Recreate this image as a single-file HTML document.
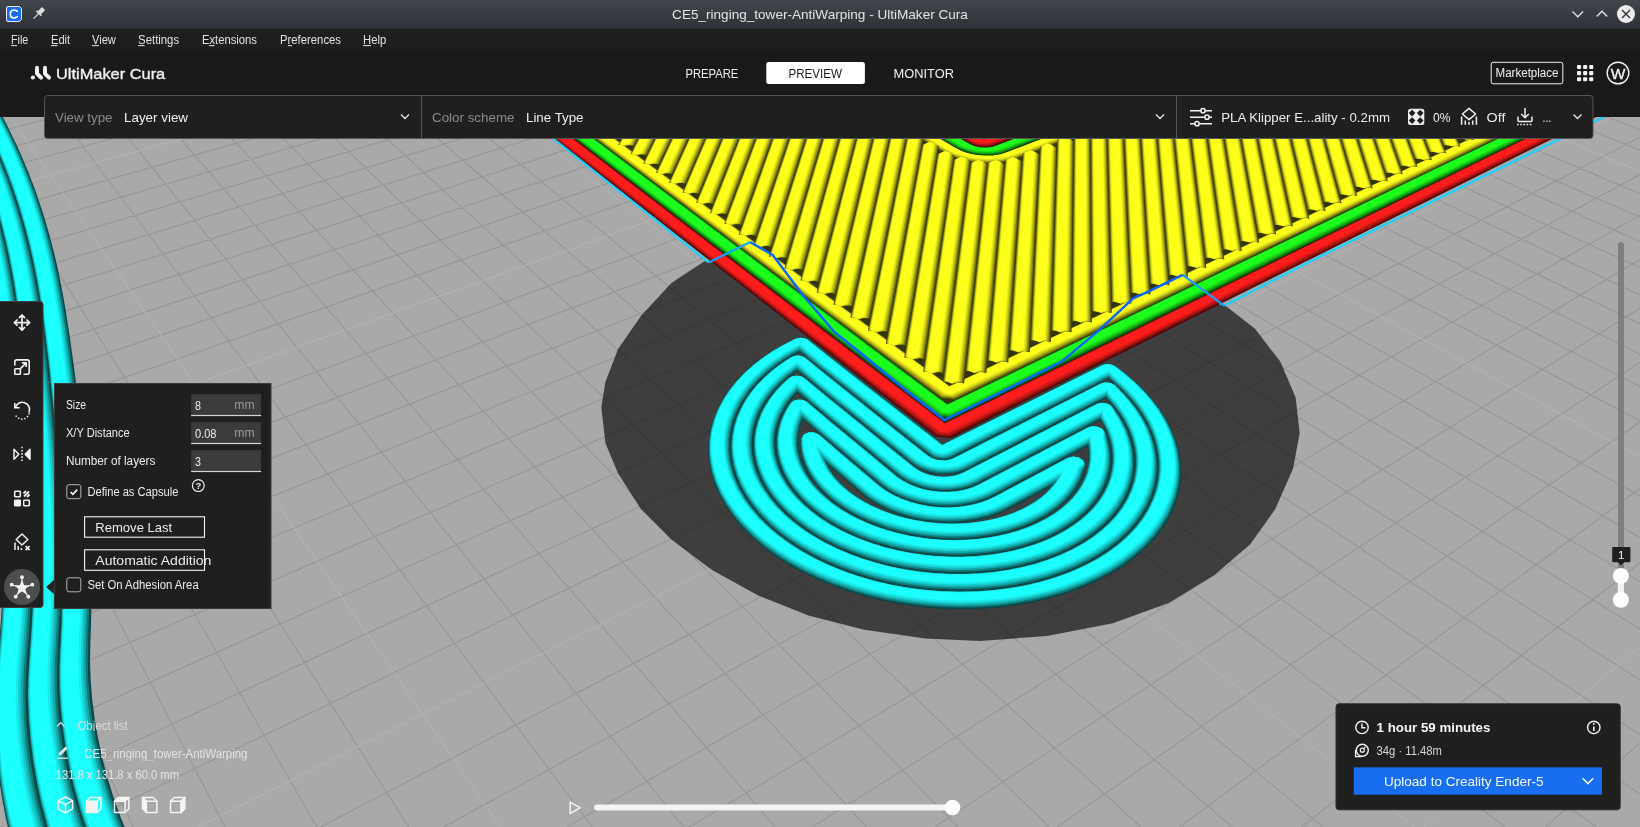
<!DOCTYPE html>
<html lang="en"><head><meta charset="utf-8"><title>CE5_ringing_tower-AntiWarping - UltiMaker Cura</title>
<style>html,body{margin:0;padding:0;background:#a9a9a9;overflow:hidden}svg{display:block}text{white-space:pre}</style></head>
<body><svg width="1640" height="827" viewBox="0 0 1640 827">
<g shape-rendering="geometricPrecision">
<rect x="0" y="0" width="1640" height="827" fill="#a9a9a9"/>
<path d="M-5.0,711.8L43.0,832.0M-5.0,525.3L135.3,832.0M-5.0,381.0L227.5,832.0M-5.0,266.1L319.7,832.0M-5.0,172.4L411.8,832.0M40.7,90.0L595.8,832.0M89.6,90.0L687.7,832.0M138.4,90.0L779.6,832.0M187.2,90.0L871.3,832.0M235.9,90.0L963.0,832.0M284.6,90.0L1054.7,832.0M333.3,90.0L1146.3,832.0M381.9,90.0L1237.8,832.0M430.5,90.0L1329.3,832.0M527.6,90.0L1512.0,832.0M576.1,90.0L1603.3,832.0M624.6,90.0L1645.0,797.7M673.0,90.0L1645.0,738.2M721.4,90.0L1645.0,683.2M769.8,90.0L1645.0,632.1M818.1,90.0L1645.0,584.6M866.4,90.0L1645.0,540.3M914.7,90.0L1645.0,498.8M1011.1,90.0L1645.0,423.4M1059.3,90.0L1645.0,389.1M1107.4,90.0L1645.0,356.7M1155.5,90.0L1645.0,326.2M1203.5,90.0L1645.0,297.3M1251.6,90.0L1645.0,269.9M1299.6,90.0L1645.0,243.9M1347.5,90.0L1645.0,219.3M1395.4,90.0L1645.0,195.8M1491.2,90.0L1645.0,152.2M1539.0,90.0L1645.0,131.9M1586.8,90.0L1645.0,112.5M1634.6,90.0L1645.0,94.0M-5.0,97.7L25.8,90.0M-5.0,114.8L92.1,90.0M-5.0,132.6L158.4,90.0M-5.0,151.2L224.6,90.0M-5.0,170.5L290.8,90.0M-5.0,211.9L422.9,90.0M-5.0,234.0L488.8,90.0M-5.0,257.1L554.7,90.0M-5.0,281.4L620.5,90.0M-5.0,306.8L686.3,90.0M-5.0,333.6L752.0,90.0M-5.0,361.7L817.7,90.0M-5.0,391.3L883.2,90.0M-5.0,422.6L948.8,90.0M-5.0,490.6L1079.6,90.0M-5.0,527.6L1144.9,90.0M-5.0,566.9L1210.2,90.0M-5.0,608.7L1275.4,90.0M-5.0,653.3L1340.6,90.0M-5.0,700.9L1405.6,90.0M-5.0,751.8L1470.7,90.0M-5.0,806.5L1535.6,90.0M63.9,832.0L1600.5,90.0M311.1,832.0L1645.0,134.5M434.5,832.0L1645.0,171.7M557.8,832.0L1645.0,212.3M681.0,832.0L1645.0,256.6M804.1,832.0L1645.0,305.2M927.0,832.0L1645.0,358.9M1049.8,832.0L1645.0,418.4M1172.5,832.0L1645.0,484.7M1295.1,832.0L1645.0,559.0M1540.0,832.0L1645.0,738.6" stroke="#979797" stroke-width="1.25" fill="none"/>
<path d="M-5.0,94.6L503.8,832.0M479.1,90.0L1420.7,832.0M962.9,90.0L1645.0,459.9M1443.3,90.0L1645.0,173.5M-5.0,190.8L356.8,90.0M-5.0,455.6L1014.2,90.0M187.6,832.0L1645.0,100.2M1417.6,832.0L1645.0,643.0" stroke="#b5b5b5" stroke-width="0.9" fill="none"/>
<polygon points="704.4,261.3 671.4,283.1 640.9,316.1 618.1,349.1 605.4,382.1 601.3,407.5 605.4,443.0 618.1,473.5 640.9,509.0 671.4,539.5 712.0,570.0 757.7,595.3 808.4,615.6 864.3,629.8 925.2,638.5 980.0,641.0 1046.9,636.0 1112.9,623.3 1168.7,603.0 1214.4,575.0 1250.0,544.6 1275.3,509.0 1293.1,468.4 1299.7,432.9 1295.6,397.4 1280.4,361.8 1255.0,328.8 1224.6,305.0 1100.0,300.0 945.0,330.0 800.0,280.0" fill="rgba(0,0,0,0.63)"/>
<filter id="soft" x="0" y="0" width="100%" height="100%" filterUnits="userSpaceOnUse"><feGaussianBlur stdDeviation="0.7"/></filter>
<g filter="url(#soft)">
<polygon points="-52.7,14.7 -50.0,19.6 -47.3,24.5 -44.6,29.4 -41.8,34.5 -39.0,39.5 -36.1,44.7 -33.2,49.9 -30.3,55.2 -27.3,60.6 -24.3,66.0 -21.3,71.5 -18.2,77.1 -15.2,82.8 -12.1,88.6 -8.9,94.4 -5.8,100.4 -2.6,106.4 0.5,112.5 3.7,118.7 6.9,125.0 10.0,131.5 13.2,138.0 16.4,144.6 19.5,151.4 22.5,158.3 25.5,165.4 28.5,172.5 31.3,179.9 34.1,187.3 36.9,195.0 39.5,202.8 42.2,210.7 44.7,218.8 47.1,227.1 49.5,235.6 51.8,244.2 54.1,253.0 56.2,262.1 58.3,271.3 60.2,280.8 62.1,290.4 63.9,300.3 65.7,310.4 67.3,320.7 68.9,331.3 70.5,342.1 72.0,353.1 73.6,364.4 75.1,375.9 76.6,387.7 78.1,399.7 79.6,412.1 81.1,424.7 82.6,437.6 83.9,450.8 85.3,464.3 86.5,478.2 87.7,492.5 88.7,507.2 89.6,522.3 90.3,537.8 90.9,553.8 91.3,570.2 91.4,587.2 91.4,604.7 91.0,622.9 90.4,641.5 90.0,660.6 90.6,679.8 92.1,699.1 94.6,718.5 98.0,738.1 102.2,757.8 107.4,777.7 113.6,797.6 120.8,817.7 129.1,837.9 138.4,858.2 148.8,878.6 160.3,899.1 173.1,919.6 187.0,940.1 202.2,960.7 218.8,981.2 236.6,1001.7 255.9,1022.1 276.6,1042.5 298.9,1062.6 322.7,1082.7 291.5,1114.1 267.3,1093.1 244.3,1071.6 223.0,1049.9 203.2,1028.2 184.9,1006.4 168.1,984.6 152.6,962.8 138.4,941.1 125.6,919.4 114.0,897.8 103.6,876.2 94.3,854.8 86.2,833.6 79.1,812.4 73.2,791.4 68.2,770.6 64.3,749.9 61.2,729.4 59.1,709.1 57.9,688.9 57.8,668.8 58.7,649.1 59.7,630.2 60.5,612.0 60.9,594.5 61.2,577.5 61.2,561.0 61.0,544.9 60.6,529.3 60.0,514.2 59.3,499.5 58.5,485.1 57.6,471.1 56.6,457.5 55.5,444.2 54.3,431.2 53.1,418.5 51.9,406.0 50.6,393.9 49.4,382.0 48.1,370.4 46.9,359.0 45.6,347.9 44.3,337.0 42.9,326.3 41.5,316.0 40.0,305.8 38.4,295.9 36.7,286.2 35.0,276.7 33.1,267.4 31.2,258.3 29.2,249.5 27.1,240.8 24.9,232.3 22.6,224.0 20.2,215.8 17.8,207.9 15.3,200.0 12.8,192.4 10.1,184.9 7.4,177.5 4.7,170.3 1.8,163.2 -1.1,156.3 -4.0,149.5 -7.0,142.8 -10.0,136.2 -13.1,129.8 -16.1,123.4 -19.2,117.1 -22.2,110.9 -25.2,104.9 -28.2,98.9 -31.2,93.0 -34.2,87.2 -37.2,81.4 -40.1,75.8 -43.0,70.2 -45.9,64.7 -48.8,59.3 -51.6,54.0 -54.4,48.7 -57.2,43.5 -59.9,38.3 -62.6,33.3 -65.2,28.2 -67.8,23.3 -70.4,18.4" fill="#084747"/>
<polygon points="-53.8,14.5 -51.2,19.4 -48.5,24.3 -45.8,29.3 -43.0,34.3 -40.2,39.4 -37.3,44.5 -34.4,49.8 -31.5,55.0 -28.5,60.4 -25.5,65.9 -22.5,71.4 -19.4,77.0 -16.4,82.6 -13.3,88.4 -10.2,94.3 -7.0,100.2 -3.9,106.2 -0.7,112.3 2.4,118.6 5.6,124.9 8.8,131.3 11.9,137.8 15.0,144.5 18.1,151.3 21.2,158.2 24.2,165.2 27.1,172.4 29.9,179.7 32.7,187.2 35.5,194.8 38.1,202.6 40.7,210.5 43.2,218.6 45.7,226.9 48.0,235.4 50.3,244.0 52.5,252.9 54.6,261.9 56.7,271.1 58.6,280.6 60.5,290.2 62.3,300.1 64.0,310.2 65.6,320.6 67.2,331.1 68.8,341.9 70.3,353.0 71.8,364.2 73.3,375.8 74.8,387.6 76.3,399.6 77.7,411.9 79.2,424.5 80.6,437.4 82.0,450.6 83.3,464.2 84.5,478.1 85.7,492.4 86.7,507.1 87.5,522.1 88.3,537.7 88.8,553.7 89.1,570.1 89.3,587.1 89.2,604.6 88.8,622.7 88.2,641.5 87.8,660.6 88.3,679.8 89.8,699.2 92.3,718.6 95.6,738.2 99.9,758.0 105.1,777.9 111.3,798.0 118.5,818.1 126.8,838.4 136.1,858.7 146.6,879.2 158.2,899.7 171.0,920.3 185.0,940.8 200.3,961.4 216.9,982.0 234.8,1002.6 254.2,1023.0 275.0,1043.4 297.3,1063.6 321.2,1083.6 292.8,1112.2 268.6,1091.3 245.6,1069.9 224.3,1048.4 204.4,1026.7 186.1,1005.0 169.2,983.3 153.7,961.6 139.5,940.0 126.6,918.3 115.0,896.8 104.6,875.4 95.3,854.0 87.1,832.8 80.0,811.7 74.0,790.7 69.1,769.9 65.1,749.3 62.0,728.9 59.9,708.6 58.7,688.4 58.6,668.3 59.4,648.6 60.4,629.7 61.2,611.6 61.7,594.0 61.9,577.0 61.9,560.5 61.7,544.5 61.3,528.9 60.7,513.8 60.0,499.0 59.2,484.7 58.2,470.7 57.2,457.0 56.1,443.7 54.9,430.7 53.7,418.0 52.5,405.6 51.3,393.5 50.0,381.6 48.7,370.0 47.5,358.6 46.2,347.5 44.9,336.6 43.5,326.0 42.1,315.6 40.5,305.4 39.0,295.5 37.3,285.8 35.6,276.3 33.7,267.0 31.8,257.9 29.8,249.1 27.6,240.4 25.4,231.9 23.2,223.6 20.8,215.4 18.4,207.4 15.9,199.6 13.4,192.0 10.7,184.5 8.0,177.1 5.3,169.9 2.4,162.8 -0.5,155.9 -3.4,149.1 -6.4,142.4 -9.5,135.8 -12.5,129.3 -15.5,123.0 -18.6,116.7 -21.6,110.5 -24.7,104.5 -27.7,98.5 -30.7,92.6 -33.7,86.8 -36.6,81.0 -39.6,75.4 -42.5,69.8 -45.4,64.3 -48.2,58.9 -51.1,53.6 -53.9,48.3 -56.6,43.1 -59.4,38.0 -62.0,32.9 -64.7,27.9 -67.3,22.9 -69.9,18.0" fill="#0e7a7a"/>
<polygon points="-55.0,14.4 -52.3,19.2 -49.6,24.1 -46.9,29.1 -44.1,34.1 -41.3,39.2 -38.5,44.4 -35.6,49.6 -32.7,54.9 -29.7,60.2 -26.7,65.7 -23.7,71.2 -20.7,76.8 -17.6,82.5 -14.5,88.2 -11.4,94.1 -8.3,100.0 -5.2,106.1 -2.0,112.2 1.1,118.4 4.3,124.7 7.5,131.1 10.6,137.7 13.7,144.3 16.8,151.1 19.8,158.0 22.8,165.0 25.7,172.2 28.6,179.5 31.3,187.0 34.0,194.6 36.7,202.4 39.2,210.4 41.7,218.5 44.2,226.8 46.5,235.2 48.8,243.9 51.0,252.7 53.1,261.7 55.1,271.0 57.0,280.4 58.8,290.1 60.6,300.0 62.3,310.1 63.9,320.4 65.5,331.0 67.0,341.8 68.5,352.8 70.0,364.1 71.5,375.6 72.9,387.4 74.4,399.5 75.9,411.8 77.3,424.4 78.7,437.3 80.1,450.5 81.4,464.1 82.6,478.0 83.7,492.3 84.6,506.9 85.5,522.0 86.2,537.6 86.7,553.5 87.0,570.0 87.1,587.0 87.0,604.5 86.6,622.6 85.9,641.4 85.5,660.5 86.0,679.8 87.5,699.2 89.9,718.7 93.2,738.4 97.5,758.2 102.7,778.2 109.0,798.3 116.2,818.5 124.5,838.8 133.9,859.3 144.4,879.7 156.1,900.3 168.9,920.9 183.0,941.6 198.3,962.2 215.0,982.8 233.0,1003.4 252.5,1023.9 273.4,1044.3 295.8,1064.5 319.7,1084.6 294.1,1110.3 269.9,1089.5 246.9,1068.2 225.5,1046.8 205.7,1025.3 187.3,1003.7 170.4,982.1 154.8,960.4 140.6,938.9 127.7,917.3 116.0,895.8 105.6,874.5 96.2,853.2 88.0,832.0 80.9,811.0 74.9,790.1 69.9,769.3 65.9,748.8 62.8,728.3 60.7,708.1 59.5,687.9 59.4,667.8 60.2,648.2 61.2,629.3 61.9,611.1 62.4,593.6 62.6,576.6 62.6,560.1 62.4,544.1 62.0,528.5 61.4,513.3 60.7,498.6 59.8,484.2 58.9,470.3 57.9,456.6 56.8,443.3 55.6,430.3 54.4,417.6 53.1,405.2 51.9,393.1 50.6,381.2 49.4,369.6 48.1,358.2 46.8,347.1 45.5,336.2 44.1,325.6 42.6,315.2 41.1,305.0 39.6,295.1 37.9,285.4 36.1,275.9 34.3,266.6 32.4,257.5 30.3,248.7 28.2,240.0 26.0,231.5 23.8,223.2 21.4,215.0 19.0,207.0 16.5,199.2 13.9,191.6 11.3,184.1 8.6,176.7 5.8,169.5 3.0,162.4 0.1,155.5 -2.9,148.7 -5.9,142.0 -8.9,135.4 -11.9,128.9 -15.0,122.6 -18.0,116.3 -21.1,110.1 -24.1,104.1 -27.1,98.1 -30.1,92.2 -33.1,86.4 -36.1,80.6 -39.0,75.0 -41.9,69.4 -44.8,64.0 -47.7,58.5 -50.5,53.2 -53.3,47.9 -56.1,42.7 -58.8,37.6 -61.5,32.5 -64.2,27.5 -66.8,22.6 -69.4,17.7" fill="#13a8a8"/>
<polygon points="-56.1,14.2 -53.5,19.0 -50.8,23.9 -48.1,28.9 -45.3,33.9 -42.5,39.0 -39.7,44.2 -36.8,49.4 -33.9,54.7 -30.9,60.1 -27.9,65.5 -24.9,71.0 -21.9,76.6 -18.8,82.3 -15.8,88.1 -12.7,93.9 -9.6,99.9 -6.4,105.9 -3.3,112.0 -0.2,118.2 3.0,124.6 6.1,131.0 9.3,137.5 12.4,144.2 15.4,150.9 18.5,157.9 21.4,164.9 24.3,172.1 27.1,179.4 29.9,186.9 32.6,194.5 35.2,202.3 37.7,210.2 40.2,218.3 42.6,226.6 45.0,235.1 47.2,243.7 49.4,252.5 51.5,261.6 53.4,270.8 55.3,280.2 57.2,289.9 58.9,299.8 60.6,309.9 62.2,320.2 63.7,330.8 65.2,341.6 66.7,352.6 68.2,363.9 69.6,375.5 71.1,387.3 72.5,399.3 73.9,411.6 75.4,424.2 76.7,437.2 78.1,450.4 79.3,463.9 80.5,477.9 81.6,492.2 82.6,506.8 83.4,521.9 84.0,537.4 84.5,553.4 84.8,569.9 84.9,586.9 84.7,604.4 84.3,622.5 83.6,641.3 83.1,660.5 83.6,679.8 85.1,699.3 87.5,718.9 90.8,738.6 95.1,758.5 100.3,778.5 106.6,798.7 113.9,818.9 122.2,839.3 131.7,859.8 142.2,880.3 153.9,900.9 166.8,921.6 180.9,942.3 196.4,963.0 213.1,983.6 231.2,1004.3 250.7,1024.8 271.7,1045.2 294.2,1065.5 318.2,1085.6 295.4,1108.4 271.1,1087.7 248.1,1066.5 226.7,1045.2 206.9,1023.8 188.5,1002.3 171.5,980.8 156.0,959.3 141.7,937.8 128.8,916.3 117.0,894.9 106.5,873.6 97.2,852.4 88.9,831.3 81.8,810.3 75.7,789.5 70.7,768.8 66.6,748.2 63.6,727.8 61.4,707.6 60.2,687.4 60.1,667.4 60.9,647.7 61.9,628.9 62.6,610.7 63.1,593.2 63.3,576.2 63.2,559.7 63.0,543.6 62.6,528.1 62.0,512.9 61.3,498.2 60.5,483.8 59.5,469.9 58.5,456.2 57.4,442.9 56.2,429.9 55.0,417.2 53.7,404.8 52.5,392.7 51.2,380.8 49.9,369.2 48.7,357.8 47.4,346.7 46.0,335.8 44.7,325.2 43.2,314.8 41.7,304.6 40.1,294.7 38.5,285.0 36.7,275.5 34.9,266.2 32.9,257.2 30.9,248.3 28.8,239.6 26.6,231.1 24.3,222.8 22.0,214.6 19.6,206.6 17.1,198.8 14.5,191.2 11.9,183.7 9.2,176.3 6.4,169.1 3.6,162.0 0.7,155.1 -2.3,148.3 -5.3,141.6 -8.3,135.0 -11.4,128.5 -14.4,122.2 -17.5,115.9 -20.5,109.7 -23.6,103.7 -26.6,97.7 -29.6,91.8 -32.6,86.0 -35.5,80.3 -38.5,74.6 -41.4,69.1 -44.3,63.6 -47.2,58.2 -50.0,52.8 -52.8,47.6 -55.6,42.4 -58.3,37.2 -61.0,32.2 -63.7,27.2 -66.3,22.2 -68.9,17.3" fill="#18cccc"/>
<polygon points="-57.3,14.0 -54.6,18.8 -52.0,23.7 -49.2,28.7 -46.5,33.7 -43.7,38.8 -40.8,44.0 -38.0,49.2 -35.0,54.5 -32.1,59.9 -29.1,65.3 -26.1,70.9 -23.1,76.5 -20.1,82.2 -17.0,87.9 -13.9,93.8 -10.8,99.7 -7.7,105.7 -4.6,111.9 -1.4,118.1 1.7,124.4 4.8,130.8 8.0,137.4 11.0,144.0 14.1,150.8 17.1,157.7 20.0,164.7 22.9,171.9 25.7,179.2 28.5,186.7 31.1,194.3 33.7,202.1 36.3,210.0 38.7,218.2 41.1,226.4 43.4,234.9 45.7,243.5 47.8,252.4 49.9,261.4 51.8,270.6 53.7,280.1 55.5,289.7 57.2,299.6 58.9,309.7 60.5,320.1 62.0,330.6 63.5,341.4 64.9,352.5 66.4,363.8 67.8,375.3 69.2,387.1 70.7,399.2 72.1,411.5 73.5,424.1 74.8,437.0 76.1,450.3 77.4,463.8 78.5,477.7 79.6,492.0 80.5,506.7 81.3,521.8 82.0,537.3 82.4,553.3 82.7,569.8 82.7,586.8 82.5,604.3 82.1,622.4 81.4,641.2 80.9,660.4 81.3,679.8 82.7,699.3 85.1,719.0 88.4,738.8 92.7,758.7 98.0,778.8 104.2,799.0 111.6,819.3 119.9,839.8 129.4,860.3 140.0,880.9 151.8,901.6 164.7,922.3 178.9,943.0 194.4,963.7 211.2,984.5 229.4,1005.1 249.0,1025.7 270.1,1046.2 292.7,1066.4 316.7,1086.6 296.7,1106.6 272.4,1085.9 249.4,1064.8 228.0,1043.6 208.1,1022.3 189.7,1000.9 172.7,979.5 157.1,958.1 142.8,936.7 129.8,915.3 118.1,894.0 107.5,872.7 98.1,851.6 89.9,830.5 82.7,809.6 76.6,788.8 71.5,768.2 67.4,747.7 64.3,727.3 62.2,707.1 61.0,686.9 60.8,666.9 61.6,647.3 62.6,628.4 63.3,610.3 63.8,592.7 64.0,575.7 63.9,559.2 63.7,543.2 63.3,527.6 62.7,512.5 62.0,497.8 61.1,483.4 60.2,469.4 59.1,455.8 58.0,442.5 56.8,429.5 55.6,416.8 54.3,404.4 53.1,392.3 51.8,380.4 50.5,368.8 49.3,357.4 48.0,346.3 46.6,335.4 45.3,324.8 43.8,314.4 42.3,304.2 40.7,294.3 39.1,284.6 37.3,275.1 35.5,265.8 33.5,256.8 31.5,247.9 29.4,239.2 27.2,230.7 24.9,222.4 22.6,214.2 20.2,206.2 17.7,198.4 15.1,190.8 12.5,183.2 9.8,175.9 7.0,168.7 4.1,161.6 1.2,154.7 -1.7,147.9 -4.7,141.2 -7.8,134.6 -10.8,128.1 -13.9,121.8 -16.9,115.5 -20.0,109.3 -23.0,103.3 -26.0,97.3 -29.0,91.4 -32.0,85.6 -35.0,79.9 -37.9,74.2 -40.9,68.7 -43.8,63.2 -46.6,57.8 -49.5,52.4 -52.3,47.2 -55.1,42.0 -57.8,36.9 -60.5,31.8 -63.2,26.8 -65.8,21.8 -68.4,17.0" fill="#1beaea"/>
<polygon points="-58.5,13.8 -55.9,18.6 -53.2,23.6 -50.5,28.5 -47.7,33.6 -44.9,38.7 -42.1,43.8 -39.2,49.0 -36.3,54.3 -33.4,59.7 -30.4,65.2 -27.5,70.7 -24.4,76.3 -21.4,82.0 -18.3,87.7 -15.3,93.6 -12.2,99.5 -9.1,105.6 -5.9,111.7 -2.8,117.9 0.3,124.2 3.4,130.7 6.5,137.2 9.6,143.8 12.6,150.6 15.6,157.5 18.6,164.6 21.4,171.7 24.2,179.1 26.9,186.5 29.6,194.1 32.2,201.9 34.7,209.9 37.1,218.0 39.5,226.3 41.8,234.7 44.0,243.4 46.1,252.2 48.2,261.2 50.1,270.4 52.0,279.9 53.7,289.6 55.4,299.4 57.1,309.5 58.6,319.9 60.1,330.4 61.6,341.3 63.0,352.3 64.4,363.6 65.8,375.2 67.2,387.0 68.6,399.0 70.0,411.3 71.4,424.0 72.7,436.9 74.0,450.1 75.2,463.7 76.4,477.6 77.4,491.9 78.3,506.6 79.1,521.7 79.7,537.2 80.1,553.2 80.4,569.7 80.4,586.7 80.2,604.2 79.7,622.3 78.9,641.1 78.4,660.3 78.8,679.8 80.2,699.4 82.6,719.1 85.8,739.0 90.1,759.0 95.4,779.1 101.7,799.4 109.1,819.8 117.5,840.3 127.0,860.8 137.6,881.5 149.4,902.2 162.4,923.0 176.7,943.8 192.3,964.6 209.1,985.3 227.4,1006.1 247.1,1026.7 268.2,1047.2 290.9,1067.5 315.0,1087.6 298.1,1104.5 273.8,1083.9 250.8,1063.0 229.4,1041.9 209.5,1020.7 191.0,999.4 174.0,978.1 158.4,956.7 144.1,935.4 131.1,914.1 119.3,892.8 108.7,871.7 99.3,850.6 91.0,829.6 83.7,808.8 77.6,788.0 72.5,767.4 68.4,747.0 65.3,726.6 63.1,706.5 61.9,686.4 61.7,666.4 62.5,646.8 63.5,627.9 64.2,609.8 64.6,592.2 64.8,575.2 64.8,558.7 64.5,542.7 64.1,527.1 63.5,512.0 62.8,497.3 61.9,482.9 60.9,468.9 59.9,455.3 58.7,442.0 57.6,429.0 56.3,416.4 55.1,403.9 53.8,391.8 52.5,379.9 51.3,368.3 50.0,356.9 48.7,345.8 47.3,334.9 46.0,324.3 44.5,313.9 43.0,303.8 41.4,293.8 39.8,284.1 38.0,274.6 36.2,265.4 34.2,256.3 32.2,247.4 30.1,238.7 27.9,230.2 25.6,221.9 23.3,213.8 20.8,205.8 18.3,197.9 15.8,190.3 13.1,182.8 10.4,175.4 7.7,168.2 4.8,161.1 1.9,154.2 -1.1,147.4 -4.1,140.7 -7.1,134.1 -10.1,127.6 -13.2,121.3 -16.3,115.0 -19.3,108.9 -22.3,102.8 -25.4,96.8 -28.4,90.9 -31.4,85.1 -34.4,79.4 -37.3,73.8 -40.2,68.2 -43.1,62.7 -46.0,57.3 -48.9,52.0 -51.7,46.7 -54.5,41.6 -57.2,36.4 -59.9,31.4 -62.6,26.4 -65.2,21.4 -67.8,16.6" fill="#1effff"/>
<polygon points="-69.6,18.2 -67.0,23.1 -64.4,28.1 -61.8,33.1 -59.1,38.2 -56.3,43.3 -53.6,48.5 -50.8,53.8 -47.9,59.1 -45.1,64.5 -42.2,70.0 -39.3,75.6 -36.3,81.2 -33.4,87.0 -30.4,92.8 -27.4,98.7 -24.4,104.7 -21.3,110.7 -18.3,116.9 -15.2,123.2 -12.2,129.5 -9.1,136.0 -6.1,142.6 -3.1,149.3 -0.2,156.1 2.8,163.0 5.6,170.1 8.4,177.3 11.1,184.7 13.7,192.2 16.3,199.8 18.8,207.6 21.2,215.6 23.6,223.8 25.9,232.1 28.1,240.6 30.2,249.2 32.2,258.1 34.2,267.2 36.0,276.4 37.8,285.9 39.4,295.6 41.0,305.6 42.5,315.7 44.0,326.1 45.4,336.7 46.7,347.6 48.0,358.7 49.3,370.1 50.5,381.7 51.8,393.6 53.1,405.8 54.3,418.2 55.5,430.9 56.7,443.9 57.8,457.2 58.8,470.8 59.8,484.8 60.6,499.1 61.3,513.9 61.9,529.0 62.3,544.6 62.5,560.6 62.5,577.1 62.3,594.2 61.8,611.7 61.1,629.8 60.1,648.7 59.3,668.4 59.4,688.5 60.6,708.7 62.7,728.9 65.8,749.4 69.8,770.0 74.7,790.8 80.7,811.8 87.7,832.9 95.9,854.1 105.1,875.4 115.5,896.9 127.1,918.5 140.0,940.1 154.1,961.8 169.6,983.5 186.4,1005.3 204.7,1027.0 224.5,1048.7 245.8,1070.2 268.7,1091.7 292.9,1112.7 260.8,1145.2 236.1,1123.1 212.5,1100.3 190.6,1077.3 170.3,1054.3 151.6,1031.2 134.5,1008.1 118.8,985.1 104.5,962.1 91.5,939.3 79.9,916.5 69.5,893.8 60.4,871.3 52.4,849.0 45.6,826.8 39.8,804.8 35.2,783.0 31.5,761.4 28.9,740.0 27.1,718.8 26.4,697.6 26.7,676.6 28.0,656.3 29.5,637.2 30.6,619.1 31.5,601.5 32.1,584.4 32.4,567.9 32.6,551.8 32.5,536.2 32.3,521.0 32.0,506.2 31.5,491.7 30.8,477.7 30.1,463.9 29.3,450.5 28.4,437.4 27.5,424.6 26.5,412.1 25.6,399.8 24.6,387.8 23.6,376.1 22.5,364.6 21.5,353.4 20.4,342.5 19.3,331.8 18.1,321.3 16.8,311.1 15.4,301.1 14.0,291.4 12.4,281.9 10.8,272.6 9.1,263.5 7.3,254.6 5.3,245.9 3.3,237.3 1.2,229.0 -0.9,220.8 -3.2,212.8 -5.5,204.9 -7.9,197.2 -10.3,189.7 -12.9,182.3 -15.5,175.1 -18.2,168.0 -20.9,161.0 -23.7,154.2 -26.6,147.5 -29.4,140.8 -32.3,134.3 -35.3,127.9 -38.2,121.6 -41.1,115.3 -44.0,109.2 -46.9,103.2 -49.7,97.2 -52.6,91.4 -55.5,85.6 -58.3,79.9 -61.1,74.3 -63.9,68.7 -66.6,63.2 -69.3,57.9 -72.0,52.5 -74.7,47.3 -77.3,42.1 -79.9,36.9 -82.4,31.9 -85.0,26.9 -87.4,21.9" fill="#084747"/>
<polygon points="-70.7,18.0 -68.2,22.9 -65.6,27.9 -62.9,32.9 -60.2,38.0 -57.5,43.1 -54.8,48.3 -52.0,53.6 -49.1,59.0 -46.3,64.4 -43.4,69.9 -40.5,75.4 -37.6,81.1 -34.6,86.8 -31.6,92.6 -28.6,98.5 -25.6,104.5 -22.6,110.6 -19.6,116.7 -16.5,123.0 -13.5,129.4 -10.5,135.9 -7.4,142.4 -4.5,149.1 -1.5,155.9 1.4,162.9 4.2,169.9 7.0,177.1 9.7,184.5 12.3,192.0 14.8,199.7 17.3,207.5 19.7,215.4 22.1,223.6 24.3,231.9 26.5,240.4 28.6,249.1 30.6,257.9 32.5,267.0 34.4,276.3 36.1,285.8 37.8,295.5 39.3,305.4 40.8,315.5 42.2,325.9 43.6,336.6 44.9,347.4 46.2,358.6 47.4,369.9 48.7,381.6 49.9,393.5 51.2,405.6 52.4,418.0 53.6,430.7 54.7,443.7 55.8,457.0 56.8,470.7 57.8,484.7 58.6,499.0 59.3,513.8 59.8,528.9 60.2,544.5 60.4,560.5 60.4,577.0 60.1,594.1 59.6,611.6 58.8,629.7 57.8,648.6 57.0,668.3 57.1,688.5 58.2,708.7 60.3,729.1 63.4,749.5 67.3,770.2 72.3,791.1 78.3,812.1 85.3,833.3 93.5,854.6 102.8,876.0 113.3,897.5 124.9,919.1 137.8,940.8 152.0,962.6 167.6,984.3 184.5,1006.1 202.8,1027.9 222.7,1049.6 244.1,1071.2 267.1,1092.7 291.4,1113.7 262.0,1143.3 237.4,1121.3 213.8,1098.6 191.8,1075.7 171.6,1052.8 152.8,1029.8 135.6,1006.9 119.9,983.9 105.6,961.0 92.6,938.2 80.9,915.5 70.5,893.0 61.3,870.5 53.3,848.2 46.4,826.1 40.7,804.1 36.0,782.4 32.3,760.8 29.7,739.5 27.9,718.3 27.1,697.2 27.5,676.2 28.8,655.9 30.2,636.8 31.3,618.6 32.2,601.1 32.8,584.0 33.1,567.5 33.3,551.4 33.2,535.8 33.0,520.5 32.6,505.7 32.1,491.3 31.5,477.2 30.8,463.5 29.9,450.1 29.1,437.0 28.1,424.2 27.2,411.7 26.2,399.4 25.2,387.5 24.2,375.7 23.2,364.2 22.1,353.0 21.0,342.1 19.9,331.4 18.7,320.9 17.4,310.7 16.0,300.8 14.6,291.0 13.0,281.5 11.4,272.2 9.7,263.1 7.8,254.2 5.9,245.5 3.9,236.9 1.8,228.6 -0.3,220.4 -2.6,212.4 -4.9,204.5 -7.3,196.8 -9.7,189.3 -12.3,181.9 -14.9,174.7 -17.6,167.6 -20.3,160.6 -23.1,153.8 -26.0,147.0 -28.9,140.4 -31.8,133.9 -34.7,127.5 -37.6,121.2 -40.5,114.9 -43.4,108.8 -46.3,102.8 -49.2,96.8 -52.1,91.0 -54.9,85.2 -57.7,79.5 -60.5,73.9 -63.3,68.3 -66.1,62.9 -68.8,57.5 -71.5,52.1 -74.2,46.9 -76.8,41.7 -79.4,36.6 -81.9,31.5 -84.4,26.5 -86.9,21.6" fill="#0e7a7a"/>
<polygon points="-71.9,17.9 -69.3,22.8 -66.7,27.7 -64.1,32.7 -61.4,37.8 -58.7,42.9 -56.0,48.2 -53.2,53.4 -50.4,58.8 -47.5,64.2 -44.6,69.7 -41.7,75.3 -38.8,80.9 -35.8,86.6 -32.9,92.5 -29.9,98.4 -26.9,104.3 -23.9,110.4 -20.9,116.6 -17.8,122.9 -14.8,129.2 -11.8,135.7 -8.8,142.3 -5.8,149.0 -2.9,155.8 0.0,162.7 2.8,169.8 5.6,177.0 8.2,184.3 10.9,191.8 13.4,199.5 15.8,207.3 18.2,215.3 20.6,223.4 22.8,231.7 25.0,240.2 27.0,248.9 29.0,257.8 30.9,266.8 32.7,276.1 34.5,285.6 36.1,295.3 37.6,305.2 39.1,315.4 40.5,325.8 41.8,336.4 43.1,347.3 44.4,358.4 45.6,369.8 46.8,381.4 48.1,393.3 49.3,405.5 50.5,417.9 51.7,430.6 52.8,443.6 53.9,456.9 54.8,470.6 55.7,484.6 56.5,498.9 57.2,513.7 57.7,528.8 58.1,544.4 58.2,560.4 58.2,576.9 57.9,594.0 57.4,611.5 56.6,629.6 55.5,648.5 54.7,668.3 54.7,688.5 55.8,708.8 57.9,729.2 60.9,749.7 64.9,770.5 69.8,791.4 75.9,812.5 83.0,833.7 91.2,855.0 100.5,876.5 111.0,898.1 122.7,919.8 135.7,941.5 149.9,963.3 165.5,985.2 182.5,1007.0 200.9,1028.8 220.9,1050.6 242.3,1072.2 265.4,1093.7 289.8,1114.8 263.3,1141.4 238.7,1119.5 215.0,1096.9 193.1,1074.2 172.8,1051.3 154.0,1028.5 136.8,1005.6 121.0,982.7 106.7,959.9 93.7,937.2 82.0,914.6 71.5,892.1 62.3,869.7 54.3,847.5 47.3,825.4 41.5,803.5 36.8,781.8 33.1,760.2 30.5,738.9 28.7,717.8 27.9,696.7 28.3,675.7 29.5,655.4 30.9,636.3 32.1,618.2 32.9,600.6 33.5,583.6 33.9,567.0 34.0,550.9 33.9,535.3 33.7,520.1 33.3,505.3 32.8,490.9 32.1,476.8 31.4,463.1 30.6,449.7 29.7,436.6 28.8,423.8 27.8,411.3 26.8,399.0 25.8,387.1 24.8,375.3 23.8,363.8 22.7,352.6 21.6,341.7 20.5,331.0 19.3,320.5 18.0,310.3 16.6,300.4 15.2,290.6 13.6,281.1 12.0,271.8 10.3,262.7 8.4,253.8 6.5,245.1 4.5,236.5 2.4,228.2 0.2,220.0 -2.0,212.0 -4.3,204.1 -6.7,196.4 -9.2,188.9 -11.7,181.5 -14.3,174.3 -17.0,167.2 -19.8,160.2 -22.6,153.4 -25.4,146.6 -28.3,140.0 -31.2,133.5 -34.1,127.1 -37.0,120.8 -40.0,114.5 -42.9,108.4 -45.8,102.4 -48.6,96.4 -51.5,90.6 -54.4,84.8 -57.2,79.1 -60.0,73.5 -62.8,67.9 -65.5,62.5 -68.3,57.1 -71.0,51.8 -73.6,46.5 -76.3,41.3 -78.9,36.2 -81.4,31.1 -83.9,26.2 -86.4,21.2" fill="#13a8a8"/>
<polygon points="-73.1,17.7 -70.5,22.6 -67.9,27.5 -65.3,32.5 -62.6,37.6 -59.9,42.8 -57.2,48.0 -54.4,53.3 -51.6,58.6 -48.7,64.0 -45.9,69.5 -43.0,75.1 -40.1,80.7 -37.1,86.5 -34.2,92.3 -31.2,98.2 -28.2,104.2 -25.2,110.3 -22.2,116.4 -19.2,122.7 -16.1,129.1 -13.1,135.5 -10.1,142.1 -7.2,148.8 -4.3,155.6 -1.4,162.6 1.4,169.6 4.1,176.8 6.8,184.2 9.4,191.7 11.9,199.3 14.3,207.1 16.7,215.1 19.0,223.3 21.2,231.6 23.4,240.1 25.4,248.7 27.4,257.6 29.3,266.7 31.1,275.9 32.8,285.4 34.4,295.1 35.9,305.0 37.3,315.2 38.7,325.6 40.0,336.2 41.3,347.1 42.5,358.2 43.7,369.6 44.9,381.3 46.1,393.2 47.4,405.3 48.5,417.8 49.7,430.5 50.8,443.5 51.8,456.8 52.8,470.4 53.7,484.4 54.4,498.8 55.1,513.5 55.6,528.7 55.9,544.3 56.0,560.3 56.0,576.8 55.7,593.8 55.1,611.4 54.3,629.5 53.2,648.5 52.3,668.2 52.3,688.5 53.4,708.9 55.5,729.3 58.4,749.9 62.3,770.7 67.3,791.7 73.4,812.8 80.5,834.1 88.8,855.5 98.1,877.1 108.7,898.7 120.4,920.4 133.4,942.2 147.8,964.1 163.4,986.0 180.5,1007.9 199.0,1029.7 219.0,1051.5 240.6,1073.2 263.8,1094.8 288.2,1115.8 264.6,1139.5 240.0,1117.7 216.3,1095.2 194.3,1072.6 174.0,1049.9 155.2,1027.1 138.0,1004.3 122.2,981.6 107.8,958.9 94.7,936.2 83.0,913.7 72.5,891.2 63.2,868.9 55.1,846.8 48.2,824.7 42.3,802.9 37.6,781.2 33.9,759.7 31.2,738.4 29.4,717.3 28.7,696.2 29.0,675.3 30.2,655.0 31.6,635.9 32.8,617.8 33.6,600.2 34.2,583.2 34.5,566.6 34.6,550.5 34.6,534.9 34.3,519.7 33.9,504.9 33.4,490.5 32.8,476.4 32.0,462.7 31.2,449.3 30.3,436.2 29.4,423.4 28.4,410.9 27.4,398.7 26.4,386.7 25.3,374.9 24.3,363.5 23.3,352.3 22.2,341.3 21.0,330.6 19.8,320.2 18.5,310.0 17.2,300.0 15.7,290.2 14.2,280.7 12.6,271.4 10.8,262.3 9.0,253.4 7.1,244.7 5.1,236.1 3.0,227.8 0.8,219.6 -1.4,211.6 -3.7,203.7 -6.1,196.0 -8.6,188.5 -11.1,181.1 -13.8,173.9 -16.4,166.8 -19.2,159.8 -22.0,153.0 -24.9,146.2 -27.7,139.6 -30.6,133.1 -33.6,126.7 -36.5,120.4 -39.4,114.1 -42.3,108.0 -45.2,102.0 -48.1,96.0 -51.0,90.2 -53.8,84.4 -56.7,78.7 -59.5,73.1 -62.3,67.6 -65.0,62.1 -67.8,56.7 -70.5,51.4 -73.1,46.2 -75.8,41.0 -78.4,35.9 -80.9,30.8 -83.4,25.8 -85.9,20.9" fill="#18cccc"/>
<polygon points="-74.2,17.5 -71.7,22.4 -69.1,27.4 -66.5,32.4 -63.8,37.5 -61.1,42.6 -58.4,47.8 -55.6,53.1 -52.8,58.4 -50.0,63.9 -47.1,69.4 -44.2,74.9 -41.3,80.6 -38.4,86.3 -35.4,92.1 -32.4,98.0 -29.5,104.0 -26.5,110.1 -23.5,116.3 -20.5,122.5 -17.4,128.9 -14.4,135.4 -11.5,142.0 -8.5,148.7 -5.6,155.5 -2.8,162.4 0.0,169.5 2.7,176.7 5.4,184.0 7.9,191.5 10.4,199.2 12.9,207.0 15.2,215.0 17.5,223.1 19.7,231.4 21.8,239.9 23.9,248.6 25.8,257.4 27.7,266.5 29.4,275.8 31.1,285.3 32.7,295.0 34.2,304.9 35.6,315.0 37.0,325.4 38.3,336.1 39.5,346.9 40.7,358.1 41.9,369.5 43.1,381.1 44.3,393.0 45.5,405.2 46.6,417.6 47.8,430.3 48.8,443.3 49.9,456.7 50.8,470.3 51.7,484.3 52.4,498.7 53.0,513.4 53.5,528.6 53.8,544.2 53.9,560.2 53.8,576.7 53.5,593.7 52.9,611.3 52.0,629.4 50.9,648.4 50.0,668.2 50.0,688.5 51.0,708.9 53.0,729.4 56.0,750.1 59.9,771.0 64.9,792.0 71.0,813.2 78.1,834.6 86.4,856.0 95.8,877.6 106.4,899.3 118.2,921.1 131.3,943.0 145.6,964.9 161.4,986.8 178.5,1008.7 197.1,1030.6 217.2,1052.5 238.9,1074.2 262.1,1095.8 286.6,1116.9 265.9,1137.6 241.2,1115.9 217.6,1093.6 195.6,1071.0 175.2,1048.4 156.4,1025.8 139.1,1003.1 123.3,980.4 108.9,957.8 95.8,935.2 84.0,912.7 73.5,890.3 64.2,868.1 56.1,846.0 49.1,824.0 43.2,802.2 38.4,780.6 34.7,759.1 32.0,737.9 30.2,716.8 29.4,695.7 29.7,674.8 31.0,654.5 32.4,635.5 33.5,617.3 34.3,599.8 34.9,582.7 35.2,566.2 35.3,550.1 35.3,534.5 35.0,519.3 34.6,504.5 34.1,490.1 33.4,476.0 32.7,462.3 31.8,448.9 30.9,435.8 30.0,423.0 29.0,410.5 28.0,398.3 27.0,386.3 26.0,374.5 24.9,363.1 23.9,351.9 22.8,340.9 21.6,330.2 20.4,319.8 19.1,309.6 17.8,299.6 16.3,289.8 14.8,280.3 13.1,271.0 11.4,261.9 9.6,253.0 7.7,244.3 5.7,235.7 3.6,227.4 1.4,219.2 -0.8,211.2 -3.2,203.3 -5.6,195.6 -8.0,188.1 -10.6,180.7 -13.2,173.5 -15.9,166.4 -18.6,159.4 -21.4,152.5 -24.3,145.8 -27.2,139.2 -30.1,132.7 -33.0,126.3 -35.9,120.0 -38.8,113.7 -41.8,107.6 -44.7,101.6 -47.5,95.6 -50.4,89.8 -53.3,84.0 -56.1,78.3 -58.9,72.7 -61.7,67.2 -64.5,61.7 -67.2,56.3 -69.9,51.0 -72.6,45.8 -75.2,40.6 -77.8,35.5 -80.4,30.4 -82.9,25.4 -85.4,20.5" fill="#1beaea"/>
<polygon points="-75.5,17.3 -73.0,22.2 -70.4,27.2 -67.8,32.2 -65.1,37.3 -62.4,42.4 -59.7,47.6 -56.9,52.9 -54.1,58.2 -51.3,63.7 -48.4,69.2 -45.5,74.7 -42.6,80.4 -39.7,86.1 -36.8,91.9 -33.8,97.8 -30.8,103.8 -27.9,109.9 -24.9,116.1 -21.9,122.4 -18.9,128.7 -15.9,135.2 -12.9,141.8 -10.0,148.5 -7.1,155.3 -4.3,162.2 -1.5,169.3 1.2,176.5 3.8,183.8 6.4,191.3 8.9,199.0 11.3,206.8 13.6,214.8 15.9,222.9 18.0,231.2 20.2,239.7 22.2,248.4 24.1,257.3 25.9,266.3 27.7,275.6 29.3,285.1 30.9,294.8 32.4,304.7 33.8,314.9 35.1,325.2 36.4,335.9 37.6,346.8 38.8,357.9 39.9,369.3 41.1,381.0 42.3,392.9 43.4,405.0 44.6,417.5 45.7,430.2 46.7,443.2 47.7,456.5 48.7,470.2 49.5,484.2 50.2,498.6 50.8,513.3 51.2,528.5 51.5,544.1 51.6,560.1 51.5,576.6 51.1,593.6 50.5,611.2 49.6,629.3 48.4,648.3 47.5,668.1 47.4,688.5 48.4,709.0 50.4,729.6 53.4,750.3 57.2,771.2 62.3,792.3 68.3,813.6 75.5,835.0 83.8,856.5 93.3,878.2 103.9,900.0 115.8,921.8 128.9,943.7 143.3,965.7 159.1,987.7 176.3,1009.7 195.0,1031.6 215.2,1053.5 236.9,1075.3 260.3,1096.9 284.8,1118.0 267.4,1135.5 242.7,1113.9 219.0,1091.7 197.0,1069.3 176.6,1046.8 157.7,1024.2 140.4,1001.6 124.6,979.0 110.1,956.5 97.0,934.0 85.2,911.6 74.6,889.3 65.3,867.2 57.1,845.1 50.1,823.2 44.2,801.5 39.3,779.9 35.7,758.4 32.9,737.2 31.1,716.1 30.3,695.1 30.6,674.2 31.9,654.0 33.3,634.9 34.4,616.8 35.2,599.2 35.7,582.2 36.1,565.6 36.2,549.6 36.1,534.0 35.8,518.8 35.4,504.0 34.9,489.5 34.2,475.5 33.4,461.8 32.6,448.4 31.7,435.3 30.7,422.5 29.7,410.0 28.7,397.8 27.7,385.8 26.7,374.1 25.6,362.6 24.6,351.4 23.5,340.5 22.3,329.8 21.1,319.3 19.8,309.1 18.5,299.1 17.0,289.4 15.5,279.9 13.8,270.5 12.1,261.4 10.3,252.5 8.3,243.8 6.3,235.3 4.3,226.9 2.1,218.7 -0.2,210.7 -2.5,202.9 -4.9,195.2 -7.3,187.6 -9.9,180.2 -12.5,173.0 -15.2,165.9 -17.9,158.9 -20.8,152.1 -23.6,145.3 -26.5,138.7 -29.4,132.2 -32.3,125.8 -35.3,119.5 -38.2,113.3 -41.1,107.2 -44.0,101.1 -46.9,95.2 -49.8,89.3 -52.6,83.6 -55.5,77.9 -58.3,72.3 -61.1,66.7 -63.9,61.3 -66.6,55.9 -69.3,50.6 -72.0,45.4 -74.6,40.2 -77.2,35.1 -79.8,30.0 -82.3,25.0 -84.8,20.1" fill="#1effff"/>
<polygon points="-86.6,21.8 -84.2,26.7 -81.6,31.7 -79.1,36.8 -76.5,41.9 -73.9,47.1 -71.2,52.3 -68.5,57.7 -65.8,63.1 -63.0,68.5 -60.2,74.1 -57.4,79.7 -54.6,85.4 -51.8,91.2 -48.9,97.0 -46.0,103.0 -43.1,109.0 -40.2,115.1 -37.3,121.4 -34.4,127.7 -31.4,134.1 -28.5,140.6 -25.7,147.2 -22.8,154.0 -20.0,160.8 -17.2,167.8 -14.5,174.9 -11.9,182.1 -9.4,189.5 -6.9,197.0 -4.5,204.7 -2.2,212.6 0.1,220.6 2.2,228.7 4.3,237.1 6.3,245.6 8.3,254.3 10.1,263.2 11.9,272.3 13.5,281.6 15.0,291.2 16.5,300.9 17.9,310.9 19.2,321.1 20.4,331.5 21.5,342.2 22.6,353.2 23.7,364.4 24.7,375.8 25.7,387.6 26.7,399.6 27.7,411.8 28.7,424.3 29.6,437.1 30.5,450.2 31.3,463.6 32.1,477.4 32.7,491.4 33.2,505.9 33.6,520.7 33.9,535.9 33.9,551.5 33.8,567.6 33.4,584.1 32.9,601.2 32.0,618.7 30.9,636.9 29.4,656.0 28.2,676.3 27.9,697.2 28.6,718.4 30.4,739.5 33.1,760.8 36.7,782.4 41.4,804.2 47.1,826.1 54.0,848.3 62.0,870.6 71.1,893.0 81.5,915.6 93.1,938.3 106.1,961.1 120.4,984.1 136.1,1007.0 153.2,1030.0 171.9,1053.0 192.1,1076.0 214.0,1098.9 237.6,1121.7 262.2,1143.7 228.9,1177.3 203.9,1154.2 179.6,1129.9 157.2,1105.5 136.5,1081.1 117.4,1056.7 100.0,1032.3 84.1,1008.0 69.7,983.7 56.7,959.6 45.1,935.6 34.8,911.8 25.8,888.2 18.0,864.7 11.3,841.5 5.9,818.4 1.6,795.6 -1.7,773.0 -4.0,750.8 -5.3,728.6 -5.6,706.5 -4.8,684.6 -3.0,663.7 -1.1,644.4 0.5,626.2 1.7,608.6 2.7,591.5 3.4,574.9 3.9,558.8 4.2,543.1 4.3,527.8 4.3,513.0 4.1,498.4 3.8,484.3 3.4,470.5 2.9,457.0 2.3,443.8 1.6,430.9 0.9,418.2 0.2,405.9 -0.5,393.8 -1.3,381.9 -2.0,370.4 -2.8,359.1 -3.7,348.0 -4.6,337.3 -5.6,326.8 -6.6,316.5 -7.7,306.5 -9.0,296.7 -10.3,287.1 -11.7,277.8 -13.3,268.7 -14.9,259.7 -16.6,251.0 -18.4,242.4 -20.3,234.0 -22.3,225.8 -24.4,217.8 -26.5,209.9 -28.7,202.2 -31.0,194.6 -33.4,187.2 -35.8,179.9 -38.4,172.8 -41.0,165.8 -43.6,158.9 -46.3,152.1 -49.1,145.5 -51.8,138.9 -54.6,132.4 -57.4,126.1 -60.2,119.8 -62.9,113.6 -65.7,107.5 -68.5,101.5 -71.2,95.6 -73.9,89.8 -76.6,84.0 -79.3,78.4 -82.0,72.8 -84.6,67.2 -87.3,61.8 -89.8,56.4 -92.4,51.1 -94.9,45.9 -97.4,40.7 -99.9,35.6 -102.3,30.5 -104.6,25.5" fill="#084747"/>
<polygon points="-87.8,21.6 -85.3,26.5 -82.8,31.5 -80.3,36.6 -77.7,41.7 -75.1,46.9 -72.4,52.2 -69.7,57.5 -67.0,62.9 -64.3,68.4 -61.5,73.9 -58.7,79.5 -55.9,85.2 -53.0,91.0 -50.2,96.9 -47.3,102.8 -44.4,108.9 -41.5,115.0 -38.6,121.2 -35.7,127.5 -32.8,133.9 -29.9,140.5 -27.0,147.1 -24.2,153.8 -21.4,160.7 -18.6,167.6 -16.0,174.7 -13.3,182.0 -10.8,189.3 -8.4,196.9 -6.0,204.5 -3.7,212.4 -1.5,220.4 0.7,228.6 2.8,236.9 4.8,245.5 6.7,254.2 8.5,263.1 10.2,272.2 11.8,281.5 13.4,291.0 14.8,300.7 16.1,310.7 17.4,320.9 18.6,331.4 19.7,342.1 20.8,353.0 21.9,364.2 22.9,375.7 23.9,387.4 24.8,399.4 25.8,411.7 26.8,424.2 27.7,437.0 28.6,450.1 29.4,463.5 30.1,477.2 30.7,491.3 31.2,505.7 31.5,520.6 31.7,535.8 31.8,551.4 31.6,567.5 31.2,584.0 30.6,601.1 29.8,618.6 28.6,636.8 27.1,655.9 25.8,676.2 25.5,697.3 26.2,718.4 27.9,739.7 30.6,761.0 34.2,782.6 38.9,804.5 44.6,826.5 51.5,848.7 59.5,871.1 68.7,893.6 79.2,916.2 90.8,939.0 103.8,961.9 118.2,984.9 133.9,1007.9 151.1,1030.9 169.9,1054.0 190.2,1077.0 212.2,1100.0 235.8,1122.8 260.5,1144.8 230.2,1175.4 205.2,1152.4 180.9,1128.2 158.4,1104.0 137.7,1079.6 118.6,1055.3 101.1,1031.0 85.2,1006.8 70.8,982.6 57.7,958.6 46.1,934.7 35.8,911.0 26.7,887.4 18.9,864.0 12.2,840.8 6.7,817.8 2.4,795.0 -0.9,772.5 -3.2,750.2 -4.5,728.1 -4.8,706.0 -4.0,684.1 -2.2,663.2 -0.3,643.9 1.2,625.7 2.4,608.1 3.4,591.1 4.1,574.5 4.6,558.4 4.9,542.7 5.0,527.4 5.0,512.5 4.8,498.0 4.4,483.9 4.0,470.1 3.5,456.6 2.9,443.4 2.3,430.5 1.6,417.8 0.8,405.5 0.1,393.4 -0.7,381.5 -1.4,370.0 -2.2,358.7 -3.1,347.6 -4.0,336.9 -5.0,326.4 -6.0,316.1 -7.2,306.1 -8.4,296.3 -9.7,286.7 -11.1,277.4 -12.7,268.3 -14.3,259.3 -16.0,250.6 -17.8,242.0 -19.7,233.6 -21.7,225.4 -23.8,217.4 -25.9,209.5 -28.1,201.8 -30.4,194.2 -32.8,186.8 -35.3,179.5 -37.8,172.4 -40.4,165.4 -43.0,158.5 -45.7,151.7 -48.5,145.1 -51.2,138.5 -54.0,132.0 -56.8,125.7 -59.6,119.4 -62.4,113.2 -65.1,107.1 -67.9,101.1 -70.7,95.2 -73.4,89.4 -76.1,83.6 -78.8,78.0 -81.5,72.4 -84.1,66.9 -86.7,61.4 -89.3,56.0 -91.9,50.7 -94.4,45.5 -96.9,40.3 -99.3,35.2 -101.8,30.1 -104.1,25.2" fill="#0e7a7a"/>
<polygon points="-89.0,21.4 -86.5,26.3 -84.0,31.4 -81.5,36.4 -78.9,41.5 -76.3,46.7 -73.6,52.0 -70.9,57.3 -68.2,62.7 -65.5,68.2 -62.7,73.7 -59.9,79.4 -57.1,85.1 -54.3,90.8 -51.4,96.7 -48.6,102.7 -45.7,108.7 -42.8,114.8 -39.9,121.0 -37.0,127.4 -34.1,133.8 -31.2,140.3 -28.4,146.9 -25.5,153.7 -22.8,160.5 -20.0,167.5 -17.4,174.6 -14.8,181.8 -12.3,189.2 -9.8,196.7 -7.5,204.4 -5.2,212.2 -3.0,220.2 -0.8,228.4 1.2,236.8 3.2,245.3 5.1,254.0 6.9,262.9 8.6,272.0 10.2,281.3 11.7,290.8 13.1,300.6 14.4,310.5 15.7,320.7 16.8,331.2 17.9,341.9 19.0,352.8 20.0,364.1 21.0,375.5 22.0,387.3 23.0,399.3 23.9,411.5 24.8,424.1 25.7,436.9 26.6,450.0 27.4,463.4 28.0,477.1 28.6,491.2 29.1,505.6 29.4,520.4 29.6,535.7 29.6,551.3 29.5,567.4 29.1,583.9 28.4,601.0 27.5,618.5 26.3,636.7 24.8,655.8 23.5,676.2 23.1,697.3 23.8,718.5 25.5,739.8 28.1,761.2 31.7,782.9 36.4,804.8 42.1,826.9 49.1,849.2 57.1,871.6 66.3,894.2 76.8,916.9 88.5,939.7 101.5,962.6 115.9,985.7 131.8,1008.7 149.1,1031.9 167.9,1055.0 188.3,1078.0 210.3,1101.0 234.1,1123.9 258.8,1146.0 231.5,1173.5 206.5,1150.6 182.2,1126.5 159.7,1102.4 138.9,1078.2 119.8,1054.0 102.3,1029.8 86.3,1005.6 71.9,981.5 58.8,957.6 47.1,933.8 36.8,910.1 27.7,886.6 19.8,863.2 13.1,840.1 7.6,817.1 3.2,794.4 -0.1,771.9 -2.4,749.7 -3.7,727.6 -4.0,705.5 -3.2,683.6 -1.5,662.8 0.4,643.5 1.9,625.3 3.2,607.7 4.1,590.6 4.8,574.0 5.3,557.9 5.6,542.2 5.7,527.0 5.6,512.1 5.4,497.6 5.1,483.4 4.7,469.6 4.1,456.1 3.5,443.0 2.9,430.1 2.2,417.4 1.5,405.1 0.7,393.0 -0.0,381.1 -0.8,369.6 -1.6,358.3 -2.5,347.3 -3.4,336.5 -4.4,326.0 -5.4,315.7 -6.6,305.7 -7.8,295.9 -9.1,286.3 -10.6,277.0 -12.1,267.9 -13.7,258.9 -15.4,250.2 -17.3,241.6 -19.2,233.2 -21.1,225.0 -23.2,217.0 -25.3,209.1 -27.6,201.4 -29.9,193.8 -32.2,186.4 -34.7,179.1 -37.2,172.0 -39.8,165.0 -42.5,158.1 -45.2,151.3 -47.9,144.7 -50.7,138.1 -53.5,131.6 -56.2,125.3 -59.0,119.0 -61.8,112.8 -64.6,106.7 -67.4,100.7 -70.1,94.8 -72.8,89.0 -75.6,83.2 -78.2,77.6 -80.9,72.0 -83.6,66.5 -86.2,61.0 -88.8,55.7 -91.3,50.3 -93.9,45.1 -96.4,39.9 -98.8,34.8 -101.2,29.8 -103.6,24.8" fill="#13a8a8"/>
<polygon points="-90.2,21.2 -87.7,26.2 -85.2,31.2 -82.7,36.2 -80.1,41.4 -77.5,46.6 -74.9,51.8 -72.2,57.2 -69.5,62.6 -66.7,68.0 -64.0,73.6 -61.2,79.2 -58.4,84.9 -55.6,90.7 -52.7,96.5 -49.9,102.5 -47.0,108.5 -44.1,114.7 -41.2,120.9 -38.4,127.2 -35.5,133.6 -32.6,140.1 -29.7,146.8 -26.9,153.5 -24.2,160.3 -21.5,167.3 -18.8,174.4 -16.2,181.6 -13.7,189.0 -11.3,196.5 -9.0,204.2 -6.7,212.1 -4.5,220.1 -2.4,228.3 -0.4,236.6 1.6,245.1 3.4,253.8 5.2,262.7 6.9,271.8 8.5,281.1 10.0,290.7 11.3,300.4 12.6,310.4 13.9,320.6 15.0,331.0 16.1,341.7 17.1,352.7 18.1,363.9 19.1,375.4 20.1,387.1 21.0,399.1 21.9,411.4 22.9,423.9 23.7,436.8 24.6,449.9 25.3,463.3 26.0,477.0 26.5,491.1 27.0,505.5 27.3,520.3 27.5,535.6 27.4,551.2 27.2,567.3 26.8,583.8 26.1,600.9 25.2,618.4 24.0,636.6 22.4,655.7 21.1,676.1 20.6,697.3 21.3,718.6 23.0,739.9 25.6,761.4 29.1,783.2 33.8,805.1 39.6,827.3 46.5,849.6 54.6,872.1 63.9,894.7 74.4,917.5 86.1,940.4 99.2,963.4 113.7,986.5 129.6,1009.6 146.9,1032.8 165.8,1055.9 186.3,1079.1 208.5,1102.1 232.3,1125.0 257.1,1147.1 232.8,1171.7 207.7,1148.8 183.4,1124.9 160.9,1100.8 140.1,1076.8 121.0,1052.6 103.4,1028.5 87.4,1004.5 72.9,980.5 59.8,956.6 48.1,932.8 37.7,909.2 28.6,885.8 20.7,862.5 13.9,839.4 8.4,816.5 4.0,793.8 0.7,771.3 -1.6,749.1 -3.0,727.1 -3.3,705.1 -2.5,683.2 -0.8,662.3 1.1,643.1 2.6,624.9 3.8,607.3 4.8,590.2 5.5,573.6 6.0,557.5 6.2,541.8 6.3,526.6 6.3,511.7 6.1,497.2 5.7,483.0 5.3,469.2 4.8,455.7 4.1,442.6 3.5,429.7 2.8,417.0 2.0,404.7 1.3,392.6 0.5,380.8 -0.3,369.2 -1.1,357.9 -1.9,346.9 -2.8,336.1 -3.8,325.6 -4.9,315.3 -6.0,305.3 -7.2,295.5 -8.6,286.0 -10.0,276.6 -11.5,267.5 -13.2,258.5 -14.9,249.8 -16.7,241.2 -18.6,232.8 -20.6,224.6 -22.6,216.6 -24.8,208.7 -27.0,201.0 -29.3,193.4 -31.7,186.0 -34.1,178.7 -36.7,171.6 -39.2,164.6 -41.9,157.7 -44.6,150.9 -47.4,144.3 -50.1,137.7 -52.9,131.2 -55.7,124.9 -58.5,118.6 -61.3,112.4 -64.0,106.3 -66.8,100.3 -69.6,94.4 -72.3,88.6 -75.0,82.9 -77.7,77.2 -80.4,71.6 -83.1,66.1 -85.7,60.7 -88.3,55.3 -90.8,50.0 -93.4,44.8 -95.9,39.6 -98.3,34.5 -100.7,29.4 -103.1,24.4" fill="#18cccc"/>
<polygon points="-91.3,21.0 -88.9,26.0 -86.4,31.0 -83.9,36.1 -81.3,41.2 -78.7,46.4 -76.1,51.6 -73.4,57.0 -70.7,62.4 -68.0,67.9 -65.2,73.4 -62.5,79.0 -59.7,84.7 -56.8,90.5 -54.0,96.4 -51.2,102.3 -48.3,108.4 -45.4,114.5 -42.6,120.7 -39.7,127.0 -36.8,133.5 -33.9,140.0 -31.1,146.6 -28.3,153.3 -25.5,160.2 -22.9,167.2 -20.2,174.2 -17.7,181.5 -15.2,188.9 -12.8,196.4 -10.5,204.1 -8.2,211.9 -6.0,219.9 -3.9,228.1 -1.9,236.4 0.0,245.0 1.8,253.7 3.6,262.6 5.3,271.7 6.8,281.0 8.3,290.5 9.6,300.2 10.9,310.2 12.1,320.4 13.2,330.9 14.3,341.6 15.3,352.5 16.3,363.7 17.2,375.2 18.2,387.0 19.1,399.0 20.0,411.3 20.9,423.8 21.8,436.6 22.6,449.7 23.3,463.2 23.9,476.9 24.5,491.0 24.9,505.4 25.2,520.2 25.3,535.5 25.3,551.1 25.1,567.2 24.6,583.7 23.9,600.8 22.9,618.3 21.7,636.5 20.1,655.6 18.7,676.1 18.2,697.3 18.9,718.7 20.5,740.1 23.1,761.6 26.6,783.4 31.3,805.5 37.1,827.7 44.0,850.1 52.1,872.6 61.4,895.3 72.0,918.1 83.8,941.1 96.9,964.2 111.5,987.3 127.4,1010.5 144.8,1033.7 163.8,1056.9 184.4,1080.1 206.6,1103.2 230.6,1126.1 255.4,1148.2 234.1,1169.8 209.0,1147.0 184.7,1123.2 162.1,1099.3 141.3,1075.3 122.2,1051.3 104.6,1027.3 88.6,1003.3 74.0,979.4 60.9,955.6 49.1,931.9 38.7,908.4 29.5,885.0 21.6,861.8 14.8,838.7 9.2,815.9 4.8,793.2 1.5,770.8 -0.8,748.6 -2.2,726.6 -2.5,704.6 -1.7,682.7 0.0,661.9 1.8,642.6 3.4,624.4 4.6,606.8 5.5,589.8 6.2,573.2 6.7,557.1 6.9,541.4 7.0,526.1 6.9,511.3 6.7,496.8 6.4,482.6 5.9,468.8 5.4,455.3 4.8,442.1 4.1,429.3 3.4,416.6 2.7,404.3 1.9,392.2 1.1,380.4 0.3,368.8 -0.5,357.5 -1.3,346.5 -2.3,335.7 -3.2,325.2 -4.3,315.0 -5.4,304.9 -6.7,295.1 -8.0,285.6 -9.4,276.2 -10.9,267.1 -12.6,258.2 -14.3,249.4 -16.1,240.8 -18.0,232.4 -20.0,224.2 -22.1,216.2 -24.2,208.3 -26.4,200.6 -28.7,193.0 -31.1,185.6 -33.5,178.3 -36.1,171.2 -38.7,164.2 -41.3,157.3 -44.0,150.5 -46.8,143.9 -49.6,137.3 -52.3,130.8 -55.1,124.5 -57.9,118.2 -60.7,112.0 -63.5,105.9 -66.3,100.0 -69.0,94.0 -71.8,88.2 -74.5,82.5 -77.2,76.8 -79.9,71.2 -82.5,65.7 -85.1,60.3 -87.7,54.9 -90.3,49.6 -92.8,44.4 -95.3,39.2 -97.8,34.1 -100.2,29.1 -102.6,24.1" fill="#1beaea"/>
<polygon points="-92.6,20.8 -90.2,25.8 -87.7,30.8 -85.2,35.9 -82.6,41.0 -80.0,46.2 -77.4,51.5 -74.7,56.8 -72.0,62.2 -69.3,67.7 -66.6,73.2 -63.8,78.8 -61.0,84.5 -58.2,90.3 -55.4,96.2 -52.6,102.2 -49.7,108.2 -46.8,114.3 -44.0,120.6 -41.1,126.9 -38.3,133.3 -35.4,139.8 -32.6,146.4 -29.8,153.2 -27.1,160.0 -24.4,167.0 -21.8,174.1 -19.2,181.3 -16.8,188.7 -14.4,196.2 -12.1,203.9 -9.9,211.7 -7.7,219.7 -5.6,227.9 -3.6,236.3 -1.7,244.8 0.1,253.5 1.8,262.4 3.5,271.5 5.0,280.8 6.4,290.3 7.8,300.1 9.0,310.0 10.2,320.2 11.3,330.7 12.4,341.4 13.3,352.3 14.3,363.6 15.2,375.1 16.1,386.8 17.1,398.8 18.0,411.1 18.8,423.7 19.7,436.5 20.4,449.6 21.1,463.0 21.8,476.8 22.3,490.9 22.7,505.3 22.9,520.1 23.0,535.3 23.0,551.0 22.7,567.1 22.2,583.6 21.5,600.7 20.5,618.2 19.2,636.4 17.6,655.6 16.2,676.0 15.6,697.3 16.2,718.8 17.8,740.2 20.4,761.8 23.9,783.7 28.5,805.8 34.4,828.1 41.3,850.6 49.5,873.2 58.8,895.9 69.4,918.8 81.2,941.9 94.4,965.0 109.0,988.2 125.0,1011.4 142.5,1034.7 161.6,1058.0 182.3,1081.2 204.6,1104.3 228.6,1127.3 253.6,1149.5 235.6,1167.7 210.5,1145.0 186.1,1121.3 163.5,1097.5 142.7,1073.7 123.5,1049.7 105.9,1025.8 89.8,1002.0 75.3,978.1 62.1,954.4 50.3,930.8 39.8,907.4 30.6,884.0 22.6,860.9 15.8,837.9 10.2,815.1 5.8,792.5 2.5,770.1 0.1,747.9 -1.3,726.0 -1.6,704.0 -0.8,682.2 0.9,661.3 2.7,642.1 4.2,623.9 5.4,606.3 6.4,589.2 7.0,572.7 7.5,556.5 7.8,540.9 7.8,525.6 7.7,510.7 7.5,496.2 7.2,482.1 6.7,468.3 6.2,454.8 5.5,441.7 4.9,428.8 4.1,416.2 3.4,403.8 2.6,391.7 1.8,379.9 1.0,368.3 0.2,357.1 -0.6,346.0 -1.6,335.3 -2.5,324.8 -3.6,314.5 -4.7,304.5 -6.0,294.7 -7.3,285.1 -8.7,275.8 -10.3,266.6 -11.9,257.7 -13.6,248.9 -15.4,240.4 -17.3,232.0 -19.3,223.8 -21.4,215.7 -23.5,207.8 -25.7,200.1 -28.0,192.5 -30.4,185.1 -32.9,177.8 -35.4,170.7 -38.0,163.7 -40.7,156.8 -43.4,150.0 -46.1,143.4 -48.9,136.8 -51.7,130.4 -54.5,124.0 -57.3,117.7 -60.1,111.6 -62.8,105.5 -65.6,99.5 -68.4,93.6 -71.1,87.8 -73.9,82.0 -76.6,76.4 -79.2,70.8 -81.9,65.3 -84.5,59.8 -87.1,54.5 -89.7,49.2 -92.2,44.0 -94.8,38.8 -97.2,33.7 -99.6,28.7 -102.0,23.7" fill="#1effff"/>
<polygon points="799.2,352.2 796.8,353.4 786.8,359.3 777.5,365.7 768.9,372.5 761.0,379.8 753.9,387.4 747.6,395.5 742.3,404.0 737.9,412.7 734.5,421.8 732.1,431.1 730.8,440.7 730.6,450.3 731.6,460.1 733.7,470.0 737.0,479.8 741.4,489.6 747.0,499.3 753.8,508.7 761.7,518.0 770.7,526.9 780.7,535.5 791.8,543.6 803.8,551.2 816.7,558.4 830.5,564.9 844.9,570.8 860.1,576.0 875.7,580.5 891.9,584.2 908.3,587.2 925.1,589.3 942.0,590.7 958.9,591.1 975.7,590.8 992.3,589.6 1008.7,587.6 1024.6,584.8 1040.0,581.2 1054.8,576.8 1068.8,571.6 1082.1,565.8 1094.5,559.3 1105.9,552.3 1116.3,544.6 1125.6,536.5 1133.8,527.9 1140.8,519.0 1146.7,509.7 1151.3,500.2 1154.8,490.6 1157.0,480.8 1158.0,470.9 1157.9,461.0 1156.6,451.3 1154.2,441.6 1150.7,432.1 1146.3,422.7 1140.8,413.7 1134.4,404.9 1127.2,396.5 1119.2,388.4 1110.4,380.8 1108.3,379.1 1085.3,390.7 1053.5,406.9 1020.7,423.5 986.9,440.6 951.3,458.6 948.8,459.4 947.8,459.7 946.8,459.9 945.7,460.0 944.6,460.1 942.8,460.2 941.7,460.2 940.6,460.1 939.5,459.9 938.4,459.7 936.7,459.4 935.7,459.1 934.7,458.7 933.7,458.4 932.8,457.9 930.6,456.7 900.3,432.6 871.8,409.9 844.4,388.2 818.0,367.2 799.2,352.2 809.1,339.9 834.6,359.9 861.1,380.6 888.6,402.0 917.2,424.3 946.2,447.0 944.9,446.3 942.3,445.7 939.7,445.8 938.3,446.2 972.1,429.4 1005.8,412.6 1038.5,396.3 1070.3,380.5 1101.2,365.1 1104.8,364.0 1109.0,364.0 1113.2,364.9 1116.6,366.8 1126.9,374.5 1136.7,382.9 1145.7,391.7 1153.8,401.0 1161.0,410.6 1167.2,420.6 1172.3,430.9 1176.3,441.4 1179.2,452.2 1180.8,463.1 1181.2,474.0 1180.3,485.0 1178.0,496.0 1174.4,506.8 1169.4,517.4 1163.1,527.8 1155.4,537.9 1146.4,547.5 1136.2,556.7 1124.7,565.3 1112.0,573.3 1098.3,580.6 1083.5,587.2 1067.8,593.0 1051.4,598.0 1034.2,602.1 1016.4,605.3 998.1,607.6 979.5,608.9 960.7,609.3 941.8,608.7 922.9,607.2 904.2,604.8 885.8,601.4 867.8,597.2 850.3,592.1 833.5,586.2 817.4,579.6 802.1,572.2 787.8,564.2 774.5,555.6 762.3,546.4 751.2,536.8 741.3,526.8 732.7,516.4 725.4,505.8 719.3,495.0 714.6,484.1 711.1,473.1 709.0,462.2 708.1,451.3 708.5,440.6 710.2,430.0 713.0,419.7 716.9,409.7 722.0,400.0 728.0,390.7 735.1,381.9 743.1,373.4 751.9,365.5 761.5,358.0 771.8,351.1 782.8,344.7 794.2,339.0 797.8,337.8 802.0,337.6 805.9,338.3 809.1,339.9" fill="#084747"/>
<polygon points="799.4,350.6 795.9,352.4 785.9,358.3 776.5,364.7 767.8,371.5 759.8,378.8 752.7,386.6 746.4,394.7 741.0,403.2 736.5,412.0 733.1,421.1 730.7,430.5 729.4,440.1 729.2,449.9 730.2,459.7 732.4,469.7 735.7,479.6 740.3,489.4 746.0,499.2 752.8,508.7 760.8,518.0 769.9,526.9 780.0,535.5 791.2,543.7 803.3,551.4 816.3,558.5 830.1,565.0 844.6,570.9 859.8,576.2 875.5,580.7 891.7,584.4 908.3,587.4 925.0,589.6 942.0,590.9 958.9,591.4 975.8,591.0 992.5,589.9 1008.9,587.8 1024.9,585.0 1040.3,581.4 1055.1,577.0 1069.3,571.8 1082.6,566.0 1095.0,559.5 1106.4,552.4 1116.9,544.7 1126.2,536.5 1134.4,528.0 1141.5,519.0 1147.3,509.7 1152.0,500.2 1155.4,490.5 1157.7,480.6 1158.8,470.7 1158.7,460.8 1157.4,451.0 1155.1,441.2 1151.6,431.7 1147.2,422.3 1141.7,413.2 1135.4,404.4 1128.2,395.9 1120.1,387.8 1111.3,380.0 1108.4,377.4 1084.5,389.5 1052.6,405.7 1019.8,422.2 986.0,439.3 950.5,457.3 948.1,458.0 947.3,458.3 946.3,458.5 945.4,458.6 944.5,458.6 942.7,458.7 941.7,458.7 940.8,458.6 939.8,458.5 938.9,458.3 937.2,458.0 936.2,457.7 935.4,457.4 934.5,457.1 933.7,456.7 931.5,455.6 901.2,431.7 872.7,409.1 845.3,387.4 818.9,366.4 799.4,350.6 808.6,339.9 834.0,359.8 860.5,380.5 888.0,402.0 916.6,424.3 945.7,447.0 944.7,446.4 942.3,445.9 939.9,446.0 938.6,446.3 972.5,429.4 1006.2,412.7 1038.9,396.4 1070.7,380.5 1101.6,365.1 1105.0,364.1 1109.0,364.1 1113.0,365.0 1116.3,366.7 1126.3,374.4 1136.0,382.8 1145.0,391.6 1153.0,400.8 1160.1,410.4 1166.2,420.3 1171.3,430.5 1175.3,441.0 1178.1,451.7 1179.6,462.5 1179.9,473.3 1179.0,484.2 1176.7,495.1 1173.0,505.8 1168.1,516.4 1161.8,526.7 1154.2,536.7 1145.2,546.2 1135.0,555.3 1123.6,563.9 1111.0,571.8 1097.3,579.1 1082.7,585.6 1067.1,591.4 1050.7,596.3 1033.6,600.4 1016.0,603.6 997.8,605.9 979.3,607.2 960.6,607.6 941.9,607.0 923.1,605.5 904.5,603.1 886.2,599.8 868.3,595.6 851.0,590.5 834.2,584.7 818.2,578.1 803.0,570.9 788.7,562.9 775.4,554.4 763.2,545.4 752.2,535.9 742.3,526.0 733.6,515.7 726.2,505.2 720.2,494.5 715.4,483.6 711.9,472.8 709.7,461.9 708.8,451.0 709.1,440.3 710.8,429.8 713.6,419.5 717.5,409.6 722.5,399.9 728.6,390.6 735.6,381.8 743.5,373.4 752.3,365.5 761.9,358.0 772.2,351.1 783.2,344.7 794.6,339.0 798.0,337.9 801.9,337.7 805.7,338.4 808.6,339.9" fill="#0e7a7a"/>
<polygon points="799.6,348.9 795.0,351.3 784.9,357.2 775.5,363.6 766.7,370.5 758.7,377.9 751.5,385.7 745.1,393.9 739.7,402.4 735.2,411.3 731.7,420.5 729.3,429.9 728.0,439.6 727.8,449.4 728.9,459.4 731.1,469.4 734.5,479.3 739.1,489.3 744.9,499.1 751.8,508.6 759.9,518.0 769.1,527.0 779.3,535.6 790.6,543.8 802.8,551.5 815.9,558.7 829.8,565.2 844.3,571.1 859.6,576.4 875.3,580.9 891.6,584.7 908.2,587.6 925.0,589.8 942.0,591.1 959.0,591.6 975.9,591.3 992.7,590.1 1009.1,588.1 1025.1,585.2 1040.6,581.6 1055.5,577.2 1069.7,572.0 1083.0,566.1 1095.5,559.6 1107.0,552.5 1117.5,544.8 1126.8,536.6 1135.1,528.0 1142.1,519.0 1148.0,509.7 1152.7,500.1 1156.1,490.4 1158.5,480.5 1159.6,470.6 1159.5,460.6 1158.3,450.7 1156.0,440.9 1152.6,431.3 1148.1,421.9 1142.7,412.7 1136.3,403.8 1129.1,395.3 1121.1,387.1 1112.3,379.3 1108.5,375.8 1083.6,388.4 1051.7,404.5 1018.9,421.0 985.1,438.1 949.7,456.0 947.5,456.7 946.7,456.9 945.9,457.0 945.1,457.1 944.3,457.2 942.6,457.2 941.7,457.2 940.9,457.2 940.1,457.1 939.3,456.9 937.6,456.5 936.8,456.3 936.0,456.1 935.3,455.8 934.6,455.5 932.4,454.6 902.1,430.8 873.6,408.3 846.1,386.5 819.7,365.6 799.6,348.9 808.2,339.8 833.3,359.8 859.8,380.5 887.4,402.0 916.0,424.3 945.2,447.0 944.4,446.5 942.3,446.0 940.1,446.1 939.0,446.4 973.0,429.5 1006.6,412.7 1039.4,396.4 1071.2,380.6 1102.1,365.1 1105.3,364.2 1109.0,364.2 1112.8,365.0 1115.9,366.7 1125.8,374.3 1135.4,382.7 1144.2,391.4 1152.2,400.6 1159.3,410.1 1165.3,420.0 1170.3,430.2 1174.2,440.5 1176.9,451.1 1178.4,461.9 1178.7,472.6 1177.7,483.4 1175.3,494.2 1171.7,504.9 1166.8,515.4 1160.5,525.6 1152.9,535.5 1144.0,545.0 1133.9,554.0 1122.5,562.5 1110.0,570.4 1096.4,577.6 1081.8,584.1 1066.4,589.8 1050.1,594.7 1033.1,598.8 1015.5,601.9 997.5,604.2 979.2,605.5 960.6,605.9 941.9,605.3 923.3,603.8 904.8,601.4 886.6,598.1 868.9,594.0 851.6,589.0 835.0,583.2 819.0,576.7 803.9,569.5 789.6,561.7 776.4,553.3 764.2,544.4 753.1,535.0 743.2,525.1 734.5,515.0 727.1,504.6 721.0,493.9 716.1,483.2 712.6,472.4 710.4,461.5 709.4,450.8 709.7,440.1 711.3,429.6 714.1,419.4 718.0,409.4 723.0,399.8 729.1,390.5 736.1,381.7 744.0,373.3 752.8,365.4 762.3,358.0 772.6,351.1 783.6,344.7 794.9,339.0 798.2,338.0 801.9,337.7 805.4,338.4 808.2,339.8" fill="#13a8a8"/>
<polygon points="799.8,347.3 794.1,350.2 783.9,356.1 774.4,362.6 765.6,369.5 757.5,376.9 750.2,384.8 743.8,393.0 738.3,401.6 733.8,410.5 730.3,419.8 727.9,429.3 726.5,439.0 726.4,448.9 727.5,459.0 729.8,469.0 733.3,479.1 737.9,489.1 743.8,498.9 750.8,508.6 759.0,518.0 768.3,527.0 778.6,535.7 790.0,543.9 802.3,551.6 815.4,558.8 829.4,565.4 844.1,571.3 859.3,576.5 875.1,581.1 891.4,584.9 908.1,587.8 925.0,590.0 942.0,591.4 959.1,591.9 976.1,591.5 992.9,590.3 1009.3,588.3 1025.4,585.4 1041.0,581.8 1055.9,577.3 1070.1,572.2 1083.5,566.3 1096.0,559.7 1107.5,552.6 1118.0,544.9 1127.4,536.7 1135.7,528.0 1142.7,519.0 1148.6,509.6 1153.3,500.1 1156.8,490.3 1159.2,480.4 1160.3,470.4 1160.3,460.4 1159.1,450.4 1156.8,440.6 1153.5,430.9 1149.0,421.4 1143.6,412.2 1137.3,403.2 1130.1,394.6 1122.0,386.4 1113.2,378.5 1108.7,374.0 1082.7,387.1 1050.8,403.2 1018.0,419.8 984.2,436.8 948.9,454.6 946.8,455.3 946.2,455.4 945.5,455.6 944.9,455.6 944.2,455.7 942.4,455.7 941.8,455.7 941.1,455.7 940.4,455.6 939.7,455.5 938.0,455.1 937.4,454.9 936.7,454.7 936.1,454.5 935.6,454.2 933.3,453.6 903.0,429.9 874.5,407.4 847.0,385.7 820.6,364.8 799.8,347.3 807.8,339.8 832.7,359.7 859.2,380.5 886.7,402.0 915.3,424.3 944.7,447.1 944.2,446.6 942.3,446.2 940.3,446.2 939.4,446.5 973.3,429.6 1007.0,412.8 1039.8,396.5 1071.6,380.6 1102.5,365.2 1105.5,364.3 1109.1,364.2 1112.6,365.1 1115.5,366.6 1125.2,374.2 1134.8,382.5 1143.5,391.3 1151.4,400.4 1158.4,409.9 1164.4,419.7 1169.3,429.8 1173.1,440.1 1175.8,450.6 1177.2,461.2 1177.4,471.9 1176.3,482.6 1174.0,493.3 1170.3,503.9 1165.4,514.3 1159.2,524.5 1151.6,534.3 1142.8,543.7 1132.7,552.7 1121.4,561.1 1109.0,568.9 1095.5,576.1 1081.0,582.5 1065.6,588.2 1049.4,593.0 1032.6,597.1 1015.1,600.2 997.2,602.4 979.0,603.7 960.5,604.1 942.0,603.6 923.5,602.1 905.1,599.7 887.1,596.4 869.4,592.3 852.2,587.3 835.7,581.6 819.9,575.2 804.8,568.1 790.6,560.4 777.3,552.1 765.1,543.3 754.1,534.0 744.1,524.3 735.4,514.3 728.0,503.9 721.8,493.4 716.9,482.7 713.3,472.0 711.0,461.2 710.0,450.5 710.3,439.9 711.9,429.4 714.7,419.2 718.6,409.3 723.6,399.7 729.6,390.5 736.6,381.6 744.5,373.3 753.2,365.4 762.7,358.0 773.0,351.1 783.9,344.7 795.2,339.0 798.3,338.0 801.8,337.8 805.1,338.5 807.8,339.8" fill="#18cccc"/>
<polygon points="800.0,345.6 793.2,349.1 783.0,355.1 773.4,361.6 764.5,368.6 756.4,376.0 749.0,383.9 742.6,392.2 737.0,400.8 732.5,409.8 728.9,419.1 726.5,428.7 725.1,438.5 725.0,448.4 726.1,458.6 728.5,468.7 732.0,478.9 736.8,488.9 742.7,498.8 749.9,508.5 758.1,518.0 767.5,527.1 777.9,535.8 789.4,544.0 801.7,551.8 815.0,558.9 829.0,565.5 843.8,571.5 859.1,576.7 874.9,581.3 891.3,585.1 908.0,588.1 924.9,590.3 942.0,591.6 959.2,592.1 976.2,591.8 993.0,590.6 1009.6,588.5 1025.7,585.7 1041.3,582.0 1056.3,577.5 1070.5,572.3 1084.0,566.4 1096.5,559.9 1108.1,552.7 1118.6,545.0 1128.0,536.7 1136.3,528.0 1143.4,519.0 1149.3,509.6 1154.0,500.0 1157.5,490.2 1159.9,480.2 1161.1,470.2 1161.1,460.2 1160.0,450.2 1157.7,440.3 1154.4,430.5 1150.0,421.0 1144.6,411.7 1138.2,402.7 1131.0,394.0 1123.0,385.7 1114.1,377.7 1108.8,372.4 1081.8,386.0 1049.9,402.0 1017.1,418.5 983.4,435.5 948.1,453.3 946.1,453.9 945.6,454.0 945.1,454.1 944.6,454.2 944.1,454.2 942.3,454.3 941.8,454.3 941.2,454.3 940.7,454.2 940.1,454.1 938.4,453.7 937.9,453.6 937.4,453.4 936.9,453.2 936.5,453.0 934.2,452.6 903.9,429.1 875.3,406.6 847.9,384.9 821.4,364.0 800.0,345.6 807.3,339.8 832.0,359.7 858.5,380.4 886.1,401.9 914.7,424.3 944.1,447.1 943.9,446.7 942.2,446.3 940.5,446.4 939.7,446.6 973.8,429.6 1007.5,412.8 1040.2,396.5 1072.0,380.6 1102.9,365.2 1105.7,364.4 1109.1,364.3 1112.4,365.1 1115.1,366.6 1124.6,374.2 1134.1,382.4 1142.8,391.1 1150.6,400.2 1157.5,409.6 1163.4,419.4 1168.3,429.4 1172.0,439.6 1174.6,450.1 1176.0,460.6 1176.2,471.2 1175.0,481.9 1172.6,492.4 1169.0,502.9 1164.1,513.3 1157.9,523.3 1150.4,533.1 1141.6,542.5 1131.5,551.4 1120.3,559.7 1108.0,567.5 1094.5,574.6 1080.1,581.0 1064.9,586.6 1048.8,591.4 1032.0,595.4 1014.7,598.5 996.9,600.7 978.8,602.0 960.5,602.4 942.0,601.9 923.6,600.4 905.4,598.0 887.5,594.8 869.9,590.7 852.9,585.8 836.4,580.0 820.7,573.7 805.6,566.8 791.5,559.2 778.3,551.0 766.1,542.3 755.0,533.1 745.1,523.5 736.4,513.6 728.9,503.3 722.6,492.9 717.7,482.3 714.1,471.6 711.7,460.9 710.6,450.2 710.9,439.7 712.5,429.2 715.2,419.0 719.1,409.1 724.1,399.5 730.1,390.4 737.1,381.6 744.9,373.2 753.7,365.3 763.2,358.0 773.4,351.1 784.3,344.7 795.6,339.0 798.5,338.1 801.7,337.9 804.9,338.5 807.3,339.8" fill="#1beaea"/>
<polygon points="800.3,343.9 792.3,347.9 782.0,354.0 772.3,360.5 763.3,367.5 755.1,375.0 747.7,382.9 741.2,391.3 735.6,400.0 731.0,409.0 727.4,418.4 724.9,428.0 723.5,437.9 723.5,447.9 724.7,458.1 727.1,468.4 730.7,478.6 735.5,488.7 741.5,498.7 748.8,508.5 757.1,518.0 766.6,527.1 777.1,535.9 788.7,544.1 801.1,551.9 814.5,559.1 828.6,565.7 843.4,571.7 858.8,577.0 874.7,581.5 891.1,585.3 907.9,588.4 924.9,590.5 942.0,591.9 959.2,592.4 976.3,592.1 993.3,590.9 1009.9,588.8 1026.1,585.9 1041.7,582.2 1056.7,577.8 1071.0,572.6 1084.5,566.6 1097.1,560.0 1108.7,552.8 1119.3,545.1 1128.7,536.8 1137.0,528.1 1144.2,519.0 1150.1,509.6 1154.8,499.9 1158.3,490.1 1160.8,480.1 1162.0,470.0 1162.1,459.9 1161.0,449.9 1158.7,439.9 1155.4,430.1 1151.0,420.5 1145.6,411.1 1139.3,402.0 1132.1,393.3 1124.0,384.9 1115.1,376.9 1109.0,370.6 1080.9,384.7 1049.0,400.7 1016.2,417.2 982.4,434.2 947.3,451.8 945.4,452.4 945.1,452.5 944.7,452.6 944.3,452.6 943.9,452.7 942.2,452.7 941.8,452.7 941.4,452.7 941.0,452.7 940.6,452.6 938.9,452.2 938.5,452.1 938.2,452.0 937.8,451.8 937.5,451.7 935.2,451.5 904.9,428.1 876.3,405.6 848.8,384.0 822.3,363.2 800.3,343.9 806.8,339.7 831.3,359.6 857.8,380.4 885.4,401.9 914.0,424.3 943.5,447.2 943.6,446.8 942.2,446.5 940.7,446.6 940.2,446.7 974.3,429.7 1008.0,412.9 1040.7,396.6 1072.5,380.7 1103.4,365.3 1106.0,364.5 1109.1,364.5 1112.1,365.2 1114.6,366.5 1124.0,374.1 1133.4,382.3 1142.0,390.9 1149.8,400.0 1156.6,409.3 1162.4,419.0 1167.2,429.0 1170.9,439.2 1173.4,449.5 1174.7,460.0 1174.8,470.5 1173.6,481.0 1171.2,491.5 1167.5,501.9 1162.7,512.1 1156.5,522.1 1149.0,531.8 1140.3,541.1 1130.3,549.9 1119.1,558.2 1106.9,565.9 1093.5,573.0 1079.2,579.3 1064.1,584.9 1048.1,589.7 1031.5,593.6 1014.2,596.7 996.6,598.9 978.6,600.2 960.4,600.6 942.1,600.0 923.8,598.6 905.7,596.2 887.9,593.0 870.5,588.9 853.6,584.0 837.2,578.4 821.6,572.1 806.6,565.3 792.5,557.8 779.3,549.8 767.1,541.2 756.1,532.1 746.1,522.6 737.4,512.7 729.8,502.6 723.6,492.2 718.6,481.7 714.9,471.1 712.5,460.5 711.4,449.9 711.6,439.4 713.2,429.0 715.9,418.8 719.8,408.9 724.7,399.4 730.7,390.2 737.6,381.5 745.5,373.1 754.2,365.3 763.7,357.9 773.9,351.1 784.8,344.7 796.0,339.1 798.7,338.2 801.7,338.0 804.5,338.6 806.8,339.7" fill="#1effff"/>
<polygon points="796.9,371.1 796.7,371.2 788.9,377.2 781.6,383.6 775.1,390.4 769.4,397.5 764.4,405.0 760.3,412.7 757.0,420.8 754.7,429.0 753.4,437.4 753.0,446.0 753.6,454.7 755.2,463.4 757.9,472.1 761.5,480.8 766.2,489.3 772.0,497.8 778.7,506.0 786.3,513.9 794.9,521.5 804.4,528.8 814.8,535.7 825.9,542.1 837.7,548.0 850.2,553.4 863.3,558.2 876.9,562.4 890.9,566.0 905.2,568.8 919.8,571.1 934.6,572.6 949.4,573.4 964.2,573.4 978.9,572.8 993.4,571.4 1007.6,569.4 1021.4,566.6 1034.7,563.2 1047.5,559.1 1059.6,554.4 1071.0,549.0 1081.7,543.2 1091.5,536.8 1100.3,529.9 1108.3,522.7 1115.2,515.0 1121.2,507.1 1126.1,498.8 1129.9,490.4 1132.7,481.8 1134.4,473.1 1135.1,464.4 1134.7,455.7 1133.4,447.0 1131.0,438.4 1127.8,430.0 1123.6,421.8 1118.5,413.8 1112.7,406.0 1106.1,398.6 1106.0,398.5 1079.9,411.9 1043.6,430.6 1006.0,449.9 966.5,470.2 958.7,473.2 949.0,474.8 938.9,474.7 928.9,472.9 919.9,469.5 913.0,465.2 879.7,438.2 848.3,412.8 818.2,388.4 796.9,371.1 806.1,357.7 835.1,380.8 865.4,404.8 896.9,429.9 929.4,455.7 932.9,457.9 936.6,459.3 940.6,460.0 944.7,460.1 948.6,459.4 952.7,457.9 990.9,438.6 1028.4,419.6 1064.7,401.2 1099.8,383.4 1103.8,382.3 1108.4,382.3 1112.9,383.6 1116.3,385.8 1124.4,393.5 1131.9,401.8 1138.5,410.4 1144.3,419.3 1149.2,428.5 1153.0,437.9 1155.8,447.5 1157.5,457.3 1158.1,467.1 1157.5,476.9 1155.8,486.7 1152.8,496.5 1148.7,506.0 1143.3,515.3 1136.8,524.4 1129.1,533.1 1120.3,541.4 1110.3,549.2 1099.4,556.5 1087.4,563.2 1074.6,569.2 1061.0,574.6 1046.6,579.3 1031.5,583.3 1016.0,586.4 999.9,588.8 983.6,590.4 966.9,591.1 950.2,591.0 933.4,590.1 916.8,588.4 900.3,585.8 884.1,582.5 868.3,578.5 853.0,573.7 838.3,568.2 824.2,562.0 810.9,555.3 798.5,548.0 786.9,540.2 776.4,531.9 766.8,523.2 758.3,514.2 750.9,504.9 744.6,495.4 739.5,485.7 735.5,475.9 732.7,466.1 731.1,456.3 730.6,446.5 731.2,436.9 732.9,427.5 735.7,418.3 739.4,409.3 744.2,400.7 749.9,392.4 756.5,384.5 763.8,377.0 772.0,369.9 780.9,363.3 790.1,357.3 793.9,355.7 798.3,355.3 802.7,356.0 806.1,357.7" fill="#084747"/>
<polygon points="797.0,369.4 795.7,370.2 787.8,376.2 780.5,382.7 773.9,389.5 768.1,396.7 763.1,404.2 758.9,412.0 755.7,420.1 753.3,428.4 751.9,436.9 751.6,445.5 752.2,454.2 753.9,463.0 756.6,471.8 760.4,480.6 765.2,489.2 771.0,497.7 777.8,505.9 785.5,513.9 794.2,521.6 803.8,528.9 814.2,535.8 825.4,542.2 837.3,548.2 849.9,553.6 863.0,558.4 876.6,562.6 890.7,566.2 905.1,569.1 919.7,571.3 934.6,572.8 949.4,573.6 964.3,573.7 979.1,573.0 993.6,571.7 1007.8,569.6 1021.7,566.8 1035.1,563.4 1047.9,559.3 1060.1,554.5 1071.5,549.2 1082.2,543.3 1092.0,536.9 1100.9,530.0 1108.9,522.7 1115.9,515.0 1121.8,507.1 1126.7,498.8 1130.6,490.3 1133.4,481.7 1135.1,473.0 1135.9,464.2 1135.5,455.4 1134.2,446.7 1131.9,438.1 1128.7,429.6 1124.5,421.3 1119.5,413.3 1113.6,405.5 1107.0,398.0 1106.2,396.7 1079.1,410.6 1042.7,429.3 1005.1,448.7 965.7,468.9 958.1,471.8 948.8,473.3 939.0,473.2 929.4,471.5 920.7,468.3 913.9,464.2 880.6,437.3 849.2,411.9 819.1,387.6 797.0,369.4 805.7,357.7 834.5,380.7 864.7,404.8 896.2,429.9 928.8,455.7 932.6,458.0 936.4,459.4 940.6,460.2 944.9,460.2 948.9,459.6 953.1,458.0 991.3,438.6 1028.8,419.6 1065.1,401.3 1100.3,383.4 1104.0,382.4 1108.4,382.4 1112.6,383.6 1115.9,385.7 1123.7,393.4 1131.1,401.6 1137.7,410.1 1143.4,419.0 1148.2,428.1 1151.9,437.5 1154.7,447.0 1156.3,456.7 1156.9,466.4 1156.2,476.2 1154.4,485.9 1151.5,495.5 1147.4,505.0 1142.0,514.3 1135.5,523.2 1127.9,531.9 1119.1,540.1 1109.2,547.8 1098.3,555.1 1086.5,561.7 1073.8,567.7 1060.2,573.1 1045.9,577.7 1031.0,581.7 1015.5,584.8 999.6,587.1 983.3,588.7 966.8,589.4 950.2,589.3 933.6,588.4 917.0,586.7 900.6,584.2 884.5,580.9 868.9,576.9 853.7,572.1 839.0,566.7 825.1,560.6 811.8,554.0 799.4,546.8 787.9,539.1 777.3,530.9 767.7,522.3 759.2,513.4 751.8,504.2 745.5,494.8 740.3,485.2 736.3,475.5 733.4,465.7 731.7,456.0 731.2,446.3 731.8,436.7 733.5,427.3 736.2,418.1 740.0,409.2 744.7,400.6 750.4,392.3 756.9,384.4 764.3,376.9 772.4,369.9 781.3,363.3 790.5,357.3 794.1,355.8 798.3,355.4 802.4,356.0 805.7,357.7" fill="#0e7a7a"/>
<polygon points="797.1,367.6 794.7,369.2 786.7,375.2 779.4,381.7 772.7,388.6 766.9,395.8 761.8,403.4 757.6,411.2 754.3,419.4 751.9,427.7 750.5,436.3 750.2,445.0 750.9,453.8 752.6,462.7 755.4,471.6 759.2,480.4 764.1,489.1 770.0,497.6 776.9,505.9 784.7,513.9 793.5,521.7 803.2,529.0 813.7,535.9 825.0,542.4 836.9,548.3 849.6,553.7 862.7,558.5 876.4,562.8 890.5,566.4 905.0,569.3 919.7,571.5 934.5,573.0 949.5,573.8 964.4,573.9 979.2,573.3 993.8,571.9 1008.1,569.8 1022.0,567.0 1035.4,563.6 1048.3,559.4 1060.5,554.7 1072.0,549.3 1082.7,543.4 1092.5,537.0 1101.5,530.1 1109.5,522.8 1116.5,515.1 1122.5,507.0 1127.4,498.8 1131.2,490.3 1134.1,481.6 1135.9,472.8 1136.6,464.0 1136.4,455.2 1135.1,446.4 1132.8,437.7 1129.6,429.2 1125.4,420.9 1120.4,412.7 1114.6,404.9 1108.0,397.3 1106.5,394.9 1078.2,409.4 1041.8,428.1 1004.2,447.4 964.9,467.6 957.5,470.4 948.6,471.8 939.2,471.8 930.0,470.1 921.5,467.1 914.8,463.2 881.5,436.5 850.1,411.1 819.9,386.8 797.1,367.6 805.2,357.7 833.8,380.7 864.0,404.8 895.6,429.9 928.2,455.8 932.2,458.1 936.2,459.6 940.6,460.3 945.0,460.4 949.2,459.7 953.5,458.1 991.7,438.7 1029.2,419.7 1065.6,401.3 1100.7,383.5 1104.2,382.5 1108.4,382.5 1112.4,383.7 1115.4,385.6 1123.0,393.2 1130.3,401.4 1136.8,409.9 1142.5,418.7 1147.2,427.8 1150.9,437.1 1153.5,446.5 1155.1,456.1 1155.6,465.8 1154.9,475.4 1153.1,485.0 1150.2,494.6 1146.0,504.0 1140.7,513.2 1134.3,522.1 1126.7,530.7 1117.9,538.8 1108.1,546.5 1097.3,553.7 1085.5,560.3 1072.9,566.2 1059.4,571.6 1045.2,576.2 1030.4,580.0 1015.0,583.2 999.2,585.5 983.1,587.0 966.7,587.7 950.2,587.6 933.7,586.7 917.2,585.0 901.0,582.6 885.0,579.3 869.4,575.3 854.3,570.6 839.8,565.2 825.9,559.2 812.7,552.7 800.3,545.6 788.8,538.0 778.2,529.9 768.7,521.5 760.1,512.6 752.7,503.5 746.3,494.2 741.1,484.7 737.1,475.0 734.2,465.3 732.4,455.7 731.8,446.0 732.4,436.5 734.1,427.1 736.8,418.0 740.6,409.1 745.3,400.5 750.9,392.2 757.4,384.4 764.8,376.9 772.9,369.8 781.7,363.2 791.0,357.3 794.3,355.9 798.3,355.5 802.2,356.1 805.2,357.7" fill="#13a8a8"/>
<polygon points="797.2,365.8 793.7,368.1 785.6,374.2 778.2,380.7 771.5,387.7 765.6,394.9 760.5,402.6 756.3,410.5 752.9,418.7 750.5,427.1 749.1,435.7 748.7,444.5 749.5,453.4 751.3,462.4 754.1,471.3 758.0,480.2 763.0,488.9 769.0,497.5 776.0,505.9 783.9,514.0 792.8,521.7 802.6,529.1 813.1,536.0 824.5,542.5 836.6,548.5 849.3,553.9 862.5,558.7 876.2,563.0 890.4,566.6 904.9,569.5 919.6,571.7 934.5,573.2 949.5,574.0 964.5,574.1 979.4,573.5 994.0,572.1 1008.3,570.0 1022.3,567.2 1035.8,563.7 1048.7,559.6 1060.9,554.8 1072.4,549.5 1083.2,543.5 1093.1,537.1 1102.0,530.1 1110.1,522.8 1117.1,515.1 1123.1,507.0 1128.0,498.7 1131.9,490.2 1134.7,481.5 1136.6,472.7 1137.4,463.8 1137.2,455.0 1135.9,446.1 1133.7,437.4 1130.5,428.8 1126.4,420.4 1121.4,412.2 1115.5,404.3 1108.9,396.6 1106.8,393.1 1077.3,408.2 1040.9,426.8 1003.3,446.1 964.0,466.2 956.9,468.9 948.3,470.3 939.3,470.2 930.5,468.6 922.4,465.8 915.7,462.2 882.4,435.6 851.0,410.2 820.8,386.0 797.2,365.8 804.8,357.6 833.1,380.7 863.4,404.7 895.0,429.9 927.7,455.8 931.9,458.2 936.0,459.7 940.5,460.5 945.1,460.5 949.5,459.8 953.8,458.2 992.1,438.8 1029.7,419.8 1066.0,401.4 1101.1,383.5 1104.4,382.6 1108.4,382.6 1112.1,383.7 1115.0,385.6 1122.3,393.1 1129.5,401.2 1136.0,409.7 1141.5,418.4 1146.2,427.4 1149.8,436.6 1152.4,446.0 1153.9,455.5 1154.3,465.1 1153.6,474.6 1151.8,484.2 1148.8,493.6 1144.7,503.0 1139.4,512.1 1133.0,520.9 1125.4,529.4 1116.7,537.5 1107.0,545.1 1096.3,552.2 1084.6,558.8 1072.0,564.7 1058.6,570.0 1044.5,574.5 1029.8,578.4 1014.6,581.5 998.9,583.8 982.8,585.3 966.6,586.0 950.2,585.9 933.8,585.0 917.5,583.3 901.3,580.9 885.5,577.7 870.0,573.7 855.0,569.0 840.6,563.7 826.8,557.8 813.6,551.4 801.3,544.4 789.8,536.9 779.2,528.9 769.6,520.6 761.1,511.9 753.6,502.8 747.2,493.6 741.9,484.2 737.8,474.6 734.9,465.0 733.1,455.4 732.4,445.8 732.9,436.3 734.6,426.9 737.3,417.8 741.1,408.9 745.8,400.4 751.4,392.1 757.9,384.3 765.2,376.8 773.3,369.8 782.1,363.2 791.3,357.3 794.5,356.0 798.2,355.6 801.9,356.2 804.8,357.6" fill="#18cccc"/>
<polygon points="797.3,364.0 792.7,367.1 784.5,373.2 777.1,379.8 770.3,386.8 764.4,394.1 759.2,401.7 754.9,409.7 751.5,418.0 749.1,426.4 747.7,435.1 747.3,444.0 748.1,453.0 750.0,462.0 752.9,471.0 756.9,480.0 761.9,488.8 768.0,497.4 775.1,505.9 783.1,514.0 792.1,521.8 801.9,529.2 812.6,536.1 824.0,542.6 836.2,548.6 849.0,554.0 862.2,558.9 876.0,563.1 890.2,566.8 904.7,569.7 919.6,571.9 934.5,573.5 949.6,574.3 964.6,574.4 979.5,573.7 994.2,572.3 1008.6,570.2 1022.6,567.4 1036.1,563.9 1049.0,559.8 1061.3,555.0 1072.9,549.6 1083.7,543.6 1093.6,537.2 1102.6,530.2 1110.7,522.8 1117.7,515.1 1123.7,507.0 1128.6,498.7 1132.5,490.1 1135.4,481.4 1137.3,472.6 1138.2,463.6 1138.0,454.7 1136.8,445.9 1134.6,437.1 1131.4,428.4 1127.3,419.9 1122.3,411.7 1116.5,403.7 1109.9,396.0 1107.1,391.3 1076.4,407.0 1040.0,425.6 1002.4,444.8 963.2,464.9 956.3,467.5 948.1,468.8 939.5,468.8 931.0,467.2 923.2,464.6 916.7,461.2 883.3,434.7 851.8,409.4 821.6,385.2 797.3,364.0 804.3,357.6 832.5,380.6 862.7,404.7 894.3,429.8 927.1,455.8 931.5,458.3 935.9,459.8 940.5,460.6 945.3,460.7 949.8,460.0 954.2,458.3 992.6,438.8 1030.1,419.8 1066.4,401.4 1101.6,383.6 1104.7,382.7 1108.3,382.8 1111.9,383.7 1114.6,385.5 1121.5,392.9 1128.8,401.0 1135.1,409.4 1140.6,418.1 1145.2,427.1 1148.7,436.2 1151.3,445.5 1152.7,454.9 1153.1,464.4 1152.3,473.9 1150.4,483.3 1147.4,492.7 1143.4,502.0 1138.1,511.0 1131.7,519.8 1124.2,528.2 1115.6,536.2 1105.9,543.8 1095.2,550.8 1083.6,557.3 1071.1,563.2 1057.9,568.4 1043.9,573.0 1029.2,576.8 1014.1,579.8 998.5,582.1 982.6,583.6 966.5,584.3 950.2,584.2 933.9,583.4 917.7,581.7 901.7,579.2 885.9,576.0 870.6,572.1 855.7,567.5 841.4,562.2 827.6,556.4 814.5,550.1 802.2,543.2 790.7,535.8 780.2,528.0 770.6,519.7 762.0,511.1 754.5,502.2 748.1,493.0 742.8,483.6 738.6,474.2 735.6,464.6 733.7,455.0 733.0,445.5 733.5,436.1 735.2,426.7 737.9,417.6 741.6,408.8 746.3,400.3 751.9,392.0 758.4,384.2 765.7,376.8 773.8,369.8 782.5,363.2 791.8,357.2 794.7,356.0 798.2,355.7 801.6,356.2 804.3,357.6" fill="#1beaea"/>
<polygon points="797.5,362.1 791.6,366.0 783.4,372.2 775.9,378.8 769.0,385.8 763.0,393.2 757.8,400.9 753.5,408.9 750.1,417.2 747.6,425.8 746.1,434.5 745.8,443.4 746.6,452.5 748.6,461.6 751.6,470.7 755.6,479.8 760.7,488.7 766.9,497.4 774.0,505.8 782.2,514.0 791.2,521.8 801.2,529.3 812.0,536.3 823.5,542.8 835.7,548.8 848.6,554.2 861.9,559.1 875.7,563.4 890.0,567.0 904.6,569.9 919.5,572.2 934.5,573.7 949.6,574.6 964.7,574.6 979.7,574.0 994.4,572.6 1008.9,570.5 1022.9,567.7 1036.5,564.2 1049.5,560.0 1061.9,555.2 1073.5,549.8 1084.3,543.8 1094.3,537.3 1103.3,530.3 1111.4,522.9 1118.4,515.1 1124.5,507.0 1129.4,498.6 1133.3,490.0 1136.2,481.3 1138.2,472.4 1139.1,463.4 1138.9,454.5 1137.7,445.5 1135.6,436.7 1132.4,428.0 1128.3,419.4 1123.4,411.1 1117.5,403.0 1110.9,395.3 1107.4,389.3 1075.4,405.7 1039.0,424.3 1001.4,443.5 962.3,463.5 955.7,466.0 947.9,467.2 939.6,467.2 931.6,465.7 924.1,463.3 917.7,460.2 884.3,433.8 852.8,408.5 822.6,384.3 797.5,362.1 803.8,357.6 831.7,380.6 862.0,404.7 893.6,429.8 926.5,455.8 931.0,458.4 935.6,460.0 940.5,460.8 945.4,460.9 950.1,460.1 954.7,458.4 993.1,438.9 1030.6,419.9 1066.9,401.5 1102.1,383.6 1105.0,382.8 1108.3,382.9 1111.6,383.8 1114.0,385.4 1120.8,392.8 1127.9,400.8 1134.2,409.2 1139.6,417.8 1144.1,426.7 1147.6,435.8 1150.0,445.0 1151.4,454.3 1151.7,463.7 1150.9,473.1 1149.0,482.4 1146.0,491.7 1141.9,500.9 1136.7,509.9 1130.4,518.5 1122.9,526.9 1114.3,534.8 1104.7,542.3 1094.1,549.3 1082.6,555.8 1070.2,561.6 1057.0,566.8 1043.1,571.3 1028.6,575.0 1013.6,578.1 998.1,580.3 982.4,581.8 966.3,582.5 950.2,582.4 934.0,581.6 917.9,579.9 902.0,577.5 886.4,574.3 871.2,570.4 856.4,565.8 842.2,560.6 828.5,554.9 815.5,548.7 803.2,541.9 791.7,534.6 781.2,526.9 771.6,518.7 763.0,510.2 755.5,501.4 749.0,492.3 743.7,483.1 739.5,473.7 736.4,464.2 734.5,454.7 733.7,445.2 734.2,435.8 735.9,426.5 738.6,417.4 742.3,408.6 747.0,400.1 752.5,391.9 759.0,384.1 766.3,376.7 774.3,369.7 783.0,363.2 792.2,357.2 794.9,356.1 798.2,355.8 801.3,356.3 803.8,357.6" fill="#1effff"/>
<polygon points="797.2,392.9 799.2,391.1 793.6,397.1 788.7,403.5 784.6,410.1 781.1,417.0 778.5,424.0 776.7,431.3 775.7,438.7 775.6,446.2 776.4,453.8 778.0,461.4 780.6,469.0 784.0,476.6 788.3,484.0 793.5,491.3 799.5,498.4 806.3,505.3 814.0,511.8 822.4,518.1 831.4,524.0 841.2,529.5 851.5,534.5 862.4,539.1 873.8,543.2 885.6,546.8 897.8,549.9 910.2,552.3 922.8,554.2 935.6,555.5 948.5,556.2 961.3,556.3 974.0,555.7 986.5,554.6 998.8,552.8 1010.8,550.5 1022.4,547.6 1033.5,544.1 1044.1,540.1 1054.1,535.5 1063.4,530.5 1072.1,525.1 1079.9,519.2 1087.0,513.0 1093.2,506.4 1098.6,499.5 1103.1,492.4 1106.6,485.1 1109.3,477.7 1111.0,470.1 1111.8,462.5 1111.8,454.9 1110.8,447.3 1109.0,439.8 1106.4,432.3 1102.9,425.1 1098.7,418.0 1100.3,420.2 1079.5,431.1 1046.7,448.3 1012.9,465.9 977.7,484.4 970.1,487.6 961.3,490.0 951.7,491.3 941.8,491.5 932.0,490.5 922.4,488.5 913.4,485.4 905.4,481.4 898.9,476.8 869.3,452.5 841.2,429.3 814.2,406.9 797.2,392.9 805.2,377.9 831.4,399.1 858.6,421.1 886.8,443.9 915.8,467.5 920.2,470.5 925.0,472.8 930.2,474.6 935.8,475.8 941.6,476.3 947.3,476.2 952.9,475.5 958.1,474.1 963.2,472.0 997.5,454.3 1031.2,436.9 1064.0,420.1 1095.8,403.7 1100.2,402.5 1105.3,402.8 1110.1,404.4 1113.4,407.2 1118.9,414.7 1123.9,422.7 1127.9,430.9 1131.1,439.3 1133.3,447.9 1134.5,456.6 1134.8,465.3 1134.0,474.0 1132.2,482.6 1129.3,491.2 1125.4,499.6 1120.4,507.8 1114.4,515.7 1107.4,523.3 1099.4,530.5 1090.5,537.3 1080.7,543.6 1070.1,549.4 1058.7,554.7 1046.6,559.3 1033.9,563.4 1020.6,566.8 1006.9,569.5 992.8,571.5 978.5,572.8 963.9,573.5 949.2,573.4 934.5,572.6 919.9,571.1 905.4,568.9 891.2,566.0 877.3,562.5 863.8,558.4 850.8,553.6 838.4,548.3 826.6,542.4 815.5,536.1 805.2,529.3 795.7,522.1 787.1,514.5 779.4,506.6 772.7,498.5 766.9,490.1 762.2,481.6 758.4,472.9 755.7,464.2 753.9,455.5 753.2,446.9 753.5,438.3 754.8,429.9 757.0,421.6 760.1,413.6 764.1,405.9 769.0,398.4 774.7,391.2 781.1,384.4 788.0,378.2 791.7,376.1 796.5,375.3 801.4,376.0 805.2,377.9" fill="#084747"/>
<polygon points="797.1,390.9 798.0,390.1 792.4,396.2 787.5,402.6 783.3,409.3 779.8,416.2 777.2,423.3 775.3,430.7 774.3,438.1 774.2,445.7 775.1,453.4 776.8,461.1 779.4,468.8 782.9,476.4 787.3,483.9 792.5,491.2 798.6,498.4 805.6,505.3 813.3,511.9 821.8,518.2 830.9,524.1 840.7,529.6 851.2,534.7 862.1,539.3 873.6,543.4 885.4,547.0 897.6,550.0 910.1,552.5 922.8,554.4 935.6,555.7 948.5,556.4 961.4,556.5 974.1,555.9 986.7,554.8 999.1,553.0 1011.1,550.7 1022.7,547.8 1033.9,544.3 1044.5,540.2 1054.6,535.7 1063.9,530.6 1072.6,525.2 1080.5,519.3 1087.6,513.0 1093.8,506.4 1099.2,499.5 1103.7,492.4 1107.3,485.0 1109.9,477.6 1111.7,470.0 1112.6,462.3 1112.6,454.6 1111.7,447.0 1109.9,439.4 1107.3,432.0 1103.8,424.6 1099.7,417.5 1100.8,418.2 1078.6,429.9 1045.8,447.0 1012.0,464.7 976.8,483.0 969.4,486.2 960.8,488.5 951.5,489.8 941.9,490.0 932.2,489.1 922.9,487.1 914.2,484.1 906.3,480.3 899.8,475.9 870.2,451.6 842.1,428.4 815.1,406.1 797.1,390.9 804.8,377.9 830.7,399.1 857.9,421.1 886.1,443.9 915.2,467.5 919.8,470.6 924.7,472.9 930.0,474.7 935.7,475.9 941.6,476.5 947.5,476.4 953.2,475.6 958.5,474.2 963.6,472.1 998.0,454.4 1031.7,437.0 1064.4,420.1 1096.2,403.8 1100.4,402.6 1105.3,402.9 1109.8,404.5 1112.9,407.0 1118.1,414.4 1122.9,422.4 1126.9,430.6 1130.0,438.9 1132.1,447.4 1133.3,456.0 1133.5,464.6 1132.7,473.2 1130.8,481.8 1128.0,490.3 1124.1,498.6 1119.1,506.7 1113.2,514.6 1106.2,522.1 1098.3,529.2 1089.4,536.0 1079.7,542.2 1069.2,548.0 1057.9,553.2 1045.9,557.8 1033.2,561.8 1020.1,565.2 1006.5,567.9 992.5,569.9 978.2,571.2 963.8,571.8 949.2,571.7 934.6,570.9 920.1,569.4 905.7,567.3 891.6,564.4 877.8,561.0 864.5,556.8 851.6,552.1 839.2,546.9 827.5,541.2 816.4,534.9 806.2,528.2 796.7,521.1 788.1,513.6 780.4,505.8 773.6,497.8 767.8,489.5 763.0,481.0 759.2,472.5 756.4,463.8 754.6,455.2 753.9,446.6 754.1,438.1 755.4,429.7 757.6,421.5 760.7,413.5 764.7,405.7 769.5,398.3 775.2,391.2 781.5,384.4 788.4,378.2 791.9,376.2 796.5,375.4 801.1,376.0 804.8,377.9" fill="#0e7a7a"/>
<polygon points="797.1,389.0 796.9,389.2 791.2,395.3 786.2,401.7 782.0,408.5 778.5,415.5 775.8,422.7 773.9,430.0 772.9,437.6 772.9,445.3 773.7,453.0 775.5,460.8 778.2,468.5 781.7,476.2 786.2,483.8 791.6,491.2 797.8,498.3 804.8,505.3 812.6,511.9 821.1,518.3 830.4,524.2 840.3,529.7 850.8,534.8 861.8,539.4 873.3,543.6 885.2,547.2 897.4,550.2 910.0,552.7 922.7,554.6 935.6,555.9 948.5,556.6 961.5,556.7 974.3,556.2 986.9,555.0 999.3,553.2 1011.4,550.9 1023.1,547.9 1034.3,544.4 1045.0,540.4 1055.0,535.8 1064.4,530.8 1073.1,525.3 1081.1,519.3 1088.2,513.0 1094.4,506.4 1099.8,499.5 1104.3,492.3 1107.9,485.0 1110.6,477.5 1112.4,469.8 1113.4,462.1 1113.4,454.4 1112.5,446.7 1110.7,439.1 1108.2,431.6 1104.8,424.2 1100.6,417.0 1101.3,416.3 1077.7,428.6 1044.9,445.7 1011.1,463.4 975.9,481.7 968.7,484.8 960.3,487.1 951.3,488.3 941.9,488.5 932.5,487.6 923.4,485.6 914.9,482.7 907.1,479.1 900.7,474.9 871.1,450.7 843.0,427.6 815.9,405.3 797.1,389.0 804.3,377.8 830.1,399.0 857.2,421.0 885.5,443.9 914.6,467.5 919.3,470.6 924.4,473.0 929.8,474.9 935.6,476.1 941.6,476.7 947.6,476.6 953.4,475.8 958.8,474.3 964.0,472.1 998.4,454.4 1032.1,437.1 1064.9,420.2 1096.7,403.8 1100.6,402.7 1105.2,403.0 1109.5,404.5 1112.4,406.9 1117.2,414.2 1122.0,422.1 1125.9,430.2 1128.9,438.5 1131.0,446.9 1132.1,455.4 1132.3,463.9 1131.4,472.5 1129.5,480.9 1126.6,489.3 1122.8,497.6 1117.9,505.6 1111.9,513.4 1105.0,520.9 1097.1,528.0 1088.4,534.6 1078.7,540.8 1068.2,546.5 1057.0,551.7 1045.1,556.3 1032.6,560.2 1019.5,563.6 1006.0,566.2 992.2,568.2 978.0,569.5 963.7,570.2 949.2,570.1 934.7,569.3 920.3,567.8 906.1,565.7 892.1,562.9 878.4,559.4 865.1,555.3 852.3,550.7 840.0,545.5 828.4,539.9 817.4,533.7 807.1,527.1 797.6,520.1 789.0,512.7 781.3,505.0 774.5,497.1 768.7,488.9 763.8,480.5 760.0,472.0 757.1,463.5 755.3,454.9 754.5,446.3 754.7,437.9 756.0,429.5 758.2,421.3 761.3,413.3 765.2,405.6 770.1,398.2 775.7,391.1 782.0,384.3 788.9,378.1 792.2,376.3 796.5,375.6 800.9,376.1 804.3,377.8" fill="#13a8a8"/>
<polygon points="797.0,387.0 795.7,388.2 790.0,394.4 784.9,400.9 780.6,407.7 777.1,414.7 774.4,421.9 772.5,429.4 771.5,437.0 771.5,444.8 772.4,452.6 774.2,460.4 777.0,468.3 780.6,476.0 785.2,483.6 790.6,491.1 796.9,498.3 804.0,505.3 811.9,512.0 820.5,518.3 829.9,524.3 839.9,529.9 850.5,535.0 861.5,539.6 873.1,543.7 885.0,547.4 897.3,550.4 909.9,552.9 922.7,554.8 935.6,556.1 948.6,556.8 961.5,556.9 974.4,556.4 987.1,555.2 999.6,553.4 1011.7,551.1 1023.4,548.1 1034.7,544.6 1045.4,540.5 1055.5,535.9 1064.9,530.9 1073.6,525.3 1081.6,519.4 1088.7,513.1 1095.0,506.4 1100.4,499.5 1104.9,492.3 1108.5,484.9 1111.2,477.4 1113.1,469.7 1114.1,462.0 1114.1,454.2 1113.3,446.4 1111.6,438.8 1109.0,431.2 1105.7,423.7 1101.5,416.5 1101.8,414.3 1076.8,427.3 1043.9,444.4 1010.1,462.1 975.1,480.3 968.0,483.3 959.8,485.5 951.0,486.8 941.9,486.9 932.8,486.1 924.0,484.2 915.7,481.4 908.0,478.0 901.7,473.9 872.1,449.8 843.9,426.7 816.8,404.5 797.0,387.0 803.9,377.8 829.4,399.0 856.6,421.0 884.8,443.9 914.0,467.5 918.9,470.7 924.1,473.1 929.6,475.0 935.6,476.3 941.7,476.8 947.7,476.7 953.6,475.9 959.1,474.5 964.4,472.2 998.8,454.5 1032.5,437.1 1065.3,420.3 1097.1,403.9 1100.8,402.9 1105.2,403.1 1109.2,404.5 1111.9,406.8 1116.3,414.0 1121.0,421.8 1124.8,429.8 1127.8,438.0 1129.8,446.4 1130.9,454.8 1131.0,463.2 1130.0,471.7 1128.1,480.0 1125.3,488.4 1121.4,496.6 1116.5,504.5 1110.7,512.2 1103.8,519.6 1096.0,526.7 1087.2,533.3 1077.7,539.4 1067.3,545.1 1056.1,550.2 1044.3,554.7 1031.9,558.6 1019.0,561.9 1005.6,564.6 991.8,566.6 977.8,567.9 963.5,568.5 949.2,568.4 934.8,567.6 920.6,566.1 906.4,564.0 892.5,561.2 879.0,557.8 865.8,553.8 853.1,549.2 840.9,544.1 829.2,538.5 818.3,532.5 808.0,526.0 798.6,519.1 790.0,511.8 782.2,504.2 775.4,496.4 769.5,488.3 764.7,480.0 760.8,471.6 757.9,463.1 756.0,454.6 755.1,446.1 755.3,437.7 756.5,429.3 758.7,421.2 761.8,413.2 765.8,405.5 770.6,398.1 776.1,391.0 782.5,384.3 789.3,378.1 792.5,376.3 796.5,375.7 800.7,376.2 803.9,377.8" fill="#18cccc"/>
<polygon points="797.0,385.0 794.6,387.2 788.8,393.5 783.7,400.0 779.3,406.8 775.8,413.9 773.0,421.3 771.1,428.8 770.1,436.4 770.1,444.3 771.0,452.2 772.9,460.1 775.7,468.0 779.5,475.8 784.1,483.5 789.6,491.0 796.0,498.3 803.2,505.3 811.2,512.0 819.9,518.4 829.4,524.4 839.4,530.0 850.1,535.1 861.2,539.7 872.8,543.9 884.8,547.5 897.1,550.6 909.8,553.1 922.6,555.0 935.6,556.4 948.6,557.1 961.6,557.1 974.6,556.6 987.3,555.4 999.8,553.6 1012.0,551.3 1023.7,548.3 1035.0,544.8 1045.8,540.7 1055.9,536.1 1065.4,531.0 1074.2,525.4 1082.1,519.5 1089.3,513.1 1095.6,506.4 1101.1,499.5 1105.6,492.2 1109.2,484.8 1111.9,477.3 1113.8,469.6 1114.8,461.8 1114.9,454.0 1114.1,446.2 1112.5,438.4 1109.9,430.8 1106.6,423.3 1102.5,416.0 1102.3,412.4 1075.9,426.1 1043.0,443.2 1009.2,460.8 974.2,479.0 967.3,481.9 959.3,484.1 950.8,485.3 941.9,485.4 933.1,484.6 924.5,482.7 916.5,480.0 908.9,476.9 902.6,473.0 873.0,448.9 844.8,425.9 817.7,403.7 797.0,385.0 803.4,377.8 828.7,399.0 855.9,421.0 884.2,443.9 913.4,467.6 918.4,470.8 923.8,473.2 929.4,475.1 935.5,476.4 941.7,477.0 947.9,476.9 953.9,476.1 959.5,474.6 964.8,472.3 999.3,454.6 1033.0,437.2 1065.7,420.3 1097.6,403.9 1101.0,403.0 1105.1,403.2 1108.8,404.5 1111.4,406.7 1115.4,413.7 1120.0,421.5 1123.8,429.5 1126.7,437.6 1128.7,445.9 1129.7,454.2 1129.7,462.6 1128.7,470.9 1126.8,479.2 1124.0,487.4 1120.1,495.6 1115.3,503.5 1109.4,511.1 1102.6,518.4 1094.8,525.4 1086.2,531.9 1076.7,538.0 1066.4,543.6 1055.3,548.7 1043.6,553.2 1031.3,557.1 1018.4,560.4 1005.1,563.0 991.5,564.9 977.6,566.2 963.4,566.8 949.2,566.7 935.0,566.0 920.8,564.5 906.8,562.4 893.0,559.7 879.5,556.3 866.4,552.3 853.8,547.7 841.7,542.7 830.1,537.3 819.2,531.3 809.0,524.9 799.5,518.1 790.9,511.0 783.2,503.4 776.3,495.7 770.4,487.6 765.5,479.4 761.6,471.1 758.6,462.7 756.7,454.3 755.8,445.8 755.9,437.4 757.1,429.1 759.3,421.0 762.4,413.1 766.3,405.4 771.1,398.0 776.7,391.0 783.0,384.2 789.8,378.0 792.7,376.4 796.5,375.8 800.4,376.3 803.4,377.8" fill="#1beaea"/>
<polygon points="796.9,382.9 793.3,386.2 787.5,392.5 782.3,399.1 777.9,406.0 774.3,413.1 771.5,420.5 769.6,428.1 768.5,435.8 768.6,443.7 769.6,451.7 771.5,459.7 774.4,467.7 778.2,475.6 783.0,483.4 788.6,490.9 795.0,498.3 802.3,505.3 810.4,512.1 819.2,518.5 828.8,524.5 838.9,530.1 849.6,535.3 860.9,539.9 872.5,544.1 884.5,547.7 896.9,550.8 909.6,553.4 922.5,555.3 935.6,556.6 948.7,557.3 961.7,557.4 974.7,556.9 987.5,555.7 1000.1,553.9 1012.3,551.5 1024.1,548.5 1035.5,545.0 1046.3,540.9 1056.5,536.2 1066.0,531.1 1074.8,525.5 1082.8,519.5 1090.0,513.2 1096.4,506.5 1101.8,499.4 1106.4,492.2 1110.0,484.7 1112.7,477.1 1114.6,469.4 1115.7,461.6 1115.9,453.7 1115.1,445.9 1113.5,438.1 1111.0,430.4 1107.6,422.8 1103.5,415.4 1102.8,410.3 1074.9,424.8 1042.1,441.8 1008.2,459.4 973.3,477.6 966.5,480.4 958.8,482.5 950.5,483.6 942.0,483.8 933.4,483.0 925.1,481.2 917.3,478.6 909.9,475.6 903.6,471.9 874.0,448.0 845.8,424.9 818.6,402.7 796.9,382.9 802.9,377.8 827.9,398.9 855.1,421.0 883.4,443.9 912.7,467.6 917.9,470.8 923.4,473.4 929.2,475.3 935.4,476.6 941.7,477.2 948.0,477.1 954.2,476.3 959.9,474.7 965.3,472.5 999.8,454.7 1033.5,437.3 1066.3,420.4 1098.1,404.0 1101.3,403.1 1105.0,403.3 1108.5,404.5 1110.8,406.5 1114.5,413.4 1119.0,421.2 1122.7,429.1 1125.5,437.1 1127.4,445.3 1128.3,453.5 1128.3,461.8 1127.3,470.1 1125.3,478.3 1122.5,486.4 1118.7,494.5 1113.9,502.3 1108.1,509.9 1101.3,517.1 1093.6,524.0 1085.0,530.5 1075.6,536.6 1065.4,542.1 1054.4,547.1 1042.8,551.6 1030.6,555.4 1017.8,558.6 1004.7,561.2 991.1,563.2 977.3,564.4 963.3,565.0 949.2,565.0 935.1,564.2 921.0,562.8 907.1,560.7 893.5,557.9 880.1,554.6 867.1,550.6 854.7,546.1 842.6,541.2 831.1,535.9 820.2,530.0 810.0,523.7 800.6,517.0 791.9,510.0 784.2,502.6 777.3,494.9 771.4,487.0 766.4,478.9 762.5,470.6 759.5,462.3 757.5,453.9 756.5,445.5 756.6,437.2 757.8,428.9 760.0,420.8 763.0,412.9 766.9,405.3 771.7,397.9 777.3,390.9 783.5,384.2 790.4,378.0 793.1,376.5 796.6,375.9 800.1,376.4 802.9,377.8" fill="#1effff"/>
<polygon points="802.4,419.7 805.7,414.2 802.8,420.3 800.6,426.6 799.2,433.1 798.5,439.6 798.5,446.3 799.4,452.9 801.1,459.6 803.6,466.3 806.8,472.9 810.8,479.4 815.6,485.7 821.2,491.8 827.4,497.8 834.4,503.4 842.0,508.7 850.1,513.8 858.9,518.4 868.2,522.6 877.9,526.5 888.0,529.8 898.4,532.7 909.2,535.1 920.1,537.0 931.2,538.4 942.4,539.2 953.6,539.5 964.7,539.3 975.7,538.6 986.5,537.3 997.1,535.4 1007.4,533.1 1017.2,530.2 1026.7,526.9 1035.6,523.1 1043.9,518.9 1051.7,514.3 1058.8,509.2 1065.2,503.9 1070.9,498.2 1075.8,492.3 1079.9,486.1 1083.3,479.8 1085.8,473.3 1087.5,466.7 1088.4,460.0 1088.5,453.3 1087.8,446.6 1086.4,440.0 1088.4,446.0 1067.6,457.0 1031.2,476.4 993.3,496.6 984.5,500.6 974.5,503.7 963.7,505.9 952.4,506.9 940.8,506.9 929.3,505.8 918.0,503.6 907.3,500.4 897.4,496.2 888.4,491.3 880.9,485.8 849.4,459.2 819.4,434.0 802.4,419.7 808.0,401.8 836.9,425.7 867.1,450.6 898.3,476.4 904.1,480.5 910.4,484.0 917.4,486.9 925.0,489.1 932.9,490.6 940.9,491.4 949.0,491.4 957.0,490.7 964.6,489.2 971.6,487.0 978.4,484.0 1015.6,464.5 1051.9,445.5 1087.0,427.1 1092.1,425.8 1098.0,426.4 1103.0,428.8 1105.8,432.2 1108.4,439.5 1110.3,447.2 1111.2,455.0 1111.3,462.8 1110.4,470.6 1108.5,478.3 1105.7,485.9 1102.0,493.4 1097.3,500.6 1091.6,507.6 1085.1,514.2 1077.7,520.5 1069.5,526.4 1060.6,531.9 1050.9,536.9 1040.5,541.4 1029.5,545.3 1018.0,548.7 1006.1,551.4 993.8,553.6 981.1,555.1 968.3,556.0 955.3,556.3 942.3,555.9 929.2,554.9 916.3,553.3 903.5,551.1 891.0,548.2 878.9,544.8 867.1,540.9 855.8,536.4 845.1,531.4 834.9,525.9 825.5,520.0 816.7,513.7 808.7,507.1 801.6,500.2 795.2,493.0 789.8,485.6 785.2,478.0 781.6,470.3 778.8,462.5 777.0,454.7 776.2,447.0 776.2,439.3 777.2,431.7 779.0,424.3 781.7,417.0 785.2,410.0 789.3,403.4 792.7,400.6 797.9,399.2 803.6,399.7 808.0,401.8" fill="#084747"/>
<polygon points="802.0,417.4 804.4,413.4 801.5,419.6 799.2,425.9 797.8,432.4 797.1,439.1 797.2,445.8 798.1,452.5 799.9,459.3 802.4,466.0 805.7,472.7 809.8,479.2 814.7,485.6 820.3,491.8 826.7,497.8 833.7,503.5 841.4,508.8 849.7,513.9 858.5,518.5 867.8,522.8 877.6,526.6 887.8,530.0 898.3,532.9 909.0,535.3 920.0,537.2 931.2,538.6 942.4,539.4 953.6,539.8 964.8,539.5 975.9,538.8 986.8,537.5 997.4,535.6 1007.7,533.3 1017.6,530.4 1027.1,527.1 1036.0,523.3 1044.4,519.0 1052.2,514.3 1059.3,509.3 1065.8,503.9 1071.5,498.2 1076.4,492.3 1080.6,486.1 1083.9,479.7 1086.5,473.2 1088.2,466.5 1089.2,459.8 1089.3,453.1 1088.6,446.3 1087.2,439.6 1089.3,443.8 1066.7,455.8 1030.3,475.1 992.4,495.3 983.8,499.1 973.9,502.2 963.3,504.3 952.2,505.4 940.9,505.4 929.6,504.3 918.5,502.1 908.0,499.0 898.2,495.0 889.3,490.2 881.9,484.8 850.3,458.3 820.3,433.1 802.0,417.4 807.6,401.8 836.3,425.7 866.4,450.6 897.6,476.4 903.6,480.6 910.0,484.1 917.2,487.0 924.8,489.3 932.8,490.8 941.0,491.6 949.1,491.6 957.2,490.9 964.8,489.4 972.0,487.1 978.8,484.1 1016.0,464.6 1052.3,445.6 1087.5,427.2 1092.3,426.0 1097.9,426.5 1102.6,428.7 1105.2,432.0 1107.3,439.1 1109.1,446.7 1110.0,454.4 1110.0,462.1 1109.1,469.8 1107.2,477.4 1104.4,485.0 1100.7,492.3 1096.0,499.5 1090.4,506.4 1084.0,513.0 1076.6,519.3 1068.5,525.1 1059.6,530.5 1050.0,535.5 1039.7,539.9 1028.8,543.8 1017.4,547.1 1005.6,549.9 993.4,552.0 980.9,553.5 968.1,554.4 955.2,554.7 942.3,554.3 929.4,553.3 916.6,551.7 903.9,549.5 891.5,546.7 879.5,543.3 867.8,539.4 856.6,535.0 845.9,530.1 835.8,524.7 826.4,518.9 817.7,512.7 809.7,506.2 802.5,499.4 796.1,492.3 790.7,484.9 786.1,477.4 782.4,469.8 779.6,462.1 777.8,454.4 776.8,446.7 776.8,439.1 777.8,431.5 779.6,424.1 782.2,416.9 785.7,409.9 789.8,403.3 793.0,400.7 798.0,399.4 803.3,399.8 807.6,401.8" fill="#0e7a7a"/>
<polygon points="801.6,415.1 803.1,412.6 800.1,418.8 797.9,425.2 796.4,431.8 795.7,438.5 795.8,445.3 796.8,452.1 798.6,459.0 801.2,465.8 804.6,472.5 808.8,479.1 813.8,485.6 819.5,491.8 826.0,497.8 833.1,503.5 840.8,508.9 849.2,514.0 858.1,518.6 867.5,522.9 877.3,526.8 887.5,530.1 898.1,533.1 908.9,535.5 919.9,537.4 931.1,538.8 942.4,539.7 953.7,540.0 964.9,539.7 976.1,539.0 987.0,537.7 997.7,535.8 1008.0,533.4 1018.0,530.6 1027.5,527.2 1036.5,523.4 1044.9,519.1 1052.7,514.4 1059.9,509.4 1066.4,504.0 1072.1,498.3 1077.0,492.3 1081.2,486.0 1084.6,479.6 1087.1,473.1 1088.9,466.4 1089.9,459.6 1090.1,452.8 1089.5,446.0 1088.1,439.3 1090.2,441.5 1065.8,454.5 1029.4,473.8 991.5,493.9 983.0,497.7 973.3,500.8 962.9,502.8 952.1,503.9 940.9,503.8 929.8,502.8 919.0,500.7 908.7,497.6 899.0,493.7 890.2,489.1 882.8,483.9 851.2,457.5 821.2,432.3 801.6,415.1 807.1,401.8 835.6,425.7 865.7,450.6 897.0,476.4 903.1,480.7 909.7,484.2 916.9,487.1 924.6,489.4 932.7,491.0 941.0,491.8 949.3,491.8 957.4,491.0 965.1,489.5 972.4,487.3 979.2,484.2 1016.5,464.7 1052.8,445.7 1088.0,427.3 1092.5,426.1 1097.7,426.6 1102.2,428.7 1104.7,431.8 1106.2,438.7 1107.9,446.2 1108.8,453.8 1108.7,461.4 1107.7,469.0 1105.8,476.6 1103.1,484.0 1099.4,491.3 1094.7,498.4 1089.2,505.3 1082.8,511.8 1075.5,518.0 1067.4,523.8 1058.6,529.1 1049.1,534.0 1038.9,538.4 1028.1,542.3 1016.8,545.6 1005.1,548.3 993.0,550.4 980.6,551.9 967.9,552.8 955.2,553.1 942.4,552.7 929.6,551.7 916.8,550.1 904.3,547.9 892.0,545.2 880.1,541.8 868.5,537.9 857.4,533.5 846.8,528.7 836.7,523.5 827.3,517.8 818.6,511.7 810.6,505.3 803.4,498.5 797.1,491.5 791.5,484.3 786.9,476.9 783.2,469.4 780.4,461.7 778.5,454.1 777.5,446.4 777.4,438.8 778.4,431.3 780.2,423.9 782.8,416.7 786.3,409.7 790.4,403.2 793.4,400.7 798.1,399.5 803.1,399.9 807.1,401.8" fill="#13a8a8"/>
<polygon points="801.2,412.7 801.8,411.8 798.8,418.1 796.5,424.5 795.0,431.2 794.2,437.9 794.5,444.8 795.5,451.7 797.4,458.7 800.0,465.5 803.5,472.3 807.8,479.0 812.9,485.5 818.7,491.8 825.2,497.8 832.4,503.6 840.3,509.0 848.7,514.1 857.7,518.8 867.2,523.0 877.1,526.9 887.3,530.3 897.9,533.2 908.8,535.7 919.9,537.6 931.1,539.0 942.4,539.9 953.8,540.2 965.1,539.9 976.2,539.2 987.2,537.8 997.9,536.0 1008.3,533.6 1018.3,530.7 1027.8,527.3 1036.9,523.5 1045.4,519.2 1053.2,514.5 1060.4,509.4 1066.9,504.0 1072.6,498.3 1077.6,492.3 1081.8,486.0 1085.2,479.6 1087.7,473.0 1089.5,466.3 1090.6,459.5 1090.8,452.6 1090.3,445.8 1088.9,439.0 1091.2,439.3 1064.8,453.2 1028.4,472.5 990.6,492.5 982.2,496.3 972.7,499.3 962.6,501.3 951.9,502.3 941.0,502.3 930.1,501.2 919.5,499.1 909.3,496.1 899.9,492.4 891.2,488.0 883.7,482.9 852.1,456.6 822.1,431.4 801.2,412.7 806.6,401.8 834.9,425.7 865.1,450.6 896.4,476.4 902.6,480.7 909.3,484.3 916.7,487.3 924.5,489.6 932.6,491.1 941.0,491.9 949.4,492.0 957.6,491.2 965.4,489.7 972.7,487.4 979.6,484.3 1016.9,464.8 1053.2,445.8 1088.4,427.3 1092.7,426.2 1097.6,426.7 1101.8,428.7 1104.2,431.6 1105.1,438.2 1106.7,445.7 1107.5,453.2 1107.4,460.7 1106.4,468.2 1104.5,475.7 1101.7,483.1 1098.0,490.3 1093.4,497.3 1087.9,504.1 1081.6,510.6 1074.4,516.7 1066.4,522.4 1057.6,527.7 1048.2,532.6 1038.1,536.9 1027.4,540.7 1016.2,544.0 1004.6,546.7 992.6,548.8 980.3,550.3 967.8,551.1 955.1,551.4 942.4,551.0 929.7,550.1 917.1,548.5 904.7,546.3 892.5,543.6 880.7,540.3 869.2,536.4 858.2,532.1 847.6,527.4 837.6,522.3 828.3,516.7 819.5,510.7 811.6,504.4 804.4,497.7 798.0,490.8 792.4,483.7 787.8,476.4 784.0,468.9 781.1,461.4 779.2,453.8 778.1,446.2 778.0,438.6 778.9,431.1 780.7,423.8 783.3,416.6 786.8,409.6 790.9,403.1 793.7,400.8 798.1,399.6 802.9,400.0 806.6,401.8" fill="#18cccc"/>
<polygon points="800.8,410.4 800.5,411.0 797.4,417.3 795.1,423.9 793.6,430.5 792.8,437.4 793.1,444.3 794.2,451.3 796.1,458.3 798.9,465.3 802.4,472.2 806.8,478.9 812.0,485.4 817.9,491.8 824.5,497.8 831.8,503.6 839.7,509.1 848.2,514.2 857.3,518.9 866.8,523.2 876.8,527.0 887.1,530.5 897.7,533.4 908.6,535.9 919.8,537.8 931.1,539.2 942.4,540.1 953.8,540.4 965.2,540.1 976.4,539.4 987.4,538.0 998.2,536.2 1008.6,533.8 1018.7,530.9 1028.2,527.5 1037.3,523.6 1045.8,519.3 1053.7,514.6 1060.9,509.5 1067.5,504.0 1073.2,498.3 1078.2,492.2 1082.4,486.0 1085.8,479.5 1088.4,472.9 1090.2,466.1 1091.3,459.3 1091.6,452.4 1091.1,445.5 1089.8,438.6 1092.1,437.0 1063.9,451.9 1027.5,471.2 989.7,491.2 981.5,494.9 972.2,497.8 962.2,499.8 951.7,500.8 941.0,500.7 930.4,499.7 919.9,497.7 910.0,494.7 900.7,491.1 892.1,486.9 884.7,481.9 853.0,455.7 822.9,430.6 800.8,410.4 806.2,401.8 834.2,425.7 864.4,450.6 895.8,476.5 902.0,480.8 909.0,484.4 916.4,487.4 924.3,489.7 932.5,491.3 941.0,492.1 949.5,492.1 957.8,491.4 965.7,489.8 973.1,487.5 980.0,484.4 1017.3,464.9 1053.7,445.8 1088.9,427.4 1092.9,426.4 1097.5,426.8 1101.4,428.7 1103.6,431.4 1104.0,437.8 1105.6,445.2 1106.3,452.6 1106.1,460.0 1105.1,467.4 1103.1,474.8 1100.4,482.1 1096.7,489.3 1092.2,496.3 1086.7,503.0 1080.4,509.4 1073.3,515.4 1065.3,521.1 1056.6,526.4 1047.3,531.1 1037.3,535.4 1026.7,539.2 1015.6,542.4 1004.1,545.1 992.2,547.2 980.0,548.7 967.6,549.5 955.1,549.8 942.5,549.4 929.9,548.5 917.4,546.9 905.1,544.8 893.0,542.0 881.3,538.8 869.9,534.9 859.0,530.7 848.5,526.1 838.5,521.0 829.2,515.6 820.5,509.7 812.5,503.5 805.3,496.9 798.9,490.1 793.3,483.1 788.6,475.8 784.8,468.4 781.9,461.0 779.9,453.4 778.8,445.9 778.6,438.4 779.5,430.9 781.3,423.6 783.9,416.4 787.3,409.5 791.4,403.0 794.1,400.8 798.2,399.7 802.7,400.1 806.2,401.8" fill="#1beaea"/>
<polygon points="800.4,408.0 799.1,410.1 796.0,416.5 793.6,423.1 792.1,429.9 791.3,436.8 791.6,443.8 792.8,450.9 794.8,458.0 797.6,465.0 801.2,472.0 805.7,478.8 810.9,485.4 816.9,491.7 823.6,497.9 831.0,503.7 839.1,509.2 847.7,514.3 856.8,519.0 866.5,523.3 876.4,527.2 886.8,530.7 897.5,533.6 908.5,536.1 919.7,538.0 931.0,539.4 942.5,540.3 953.9,540.6 965.3,540.4 976.6,539.6 987.7,538.3 998.5,536.4 1009.0,534.0 1019.1,531.1 1028.7,527.7 1037.8,523.8 1046.4,519.5 1054.3,514.7 1061.6,509.6 1068.1,504.1 1073.9,498.3 1079.0,492.2 1083.2,485.9 1086.6,479.4 1089.2,472.8 1091.0,466.0 1092.2,459.1 1092.5,452.1 1092.0,445.2 1090.7,438.3 1093.1,434.7 1062.9,450.6 1026.5,469.8 988.8,489.7 980.6,493.4 971.5,496.2 961.8,498.1 951.5,499.1 941.1,499.1 930.6,498.1 920.5,496.1 910.7,493.2 901.6,489.7 893.0,485.7 885.7,480.9 854.0,454.7 823.9,429.6 800.4,408.0 805.6,401.7 833.4,425.6 863.6,450.6 895.0,476.5 901.5,480.9 908.5,484.5 916.1,487.5 924.1,489.9 932.5,491.5 941.0,492.3 949.6,492.3 958.0,491.6 966.0,490.0 973.5,487.7 980.5,484.5 1017.9,465.0 1054.2,445.9 1089.4,427.5 1093.1,426.5 1097.3,427.0 1101.0,428.7 1103.0,431.2 1102.8,437.3 1104.3,444.6 1105.0,451.9 1104.7,459.3 1103.6,466.6 1101.7,473.9 1099.0,481.1 1095.3,488.2 1090.8,495.1 1085.4,501.7 1079.1,508.1 1072.1,514.1 1064.2,519.7 1055.6,524.9 1046.3,529.6 1036.4,533.9 1025.9,537.6 1014.9,540.8 1003.5,543.4 991.7,545.5 979.7,546.9 967.4,547.8 955.0,548.0 942.5,547.7 930.1,546.7 917.7,545.2 905.5,543.1 893.6,540.4 881.9,537.1 870.7,533.4 859.8,529.2 849.4,524.7 839.5,519.7 830.2,514.4 821.5,508.6 813.5,502.5 806.3,496.0 799.9,489.3 794.3,482.3 789.6,475.2 785.7,467.9 782.8,460.5 780.7,453.0 779.6,445.6 779.3,438.1 780.2,430.7 782.0,423.4 784.6,416.3 788.0,409.4 792.1,402.9 794.5,400.9 798.3,399.9 802.4,400.2 805.6,401.7" fill="#1effff"/>
<polygon points="822.5,460.3 822.4,444.6 823.1,450.3 824.5,455.9 826.5,461.5 829.2,467.0 832.5,472.5 836.5,477.8 841.1,483.0 846.3,488.0 852.1,492.8 858.4,497.3 865.2,501.5 872.5,505.4 880.3,509.0 888.4,512.2 896.9,515.1 905.7,517.5 914.7,519.5 923.8,521.1 933.1,522.3 942.5,523.0 951.9,523.2 961.2,523.0 970.5,522.3 979.5,521.2 988.4,519.6 996.9,517.6 1005.1,515.2 1013.0,512.3 1020.4,509.1 1027.3,505.5 1033.8,501.6 1039.6,497.3 1045.0,492.8 1049.6,488.1 1053.7,483.1 1057.1,477.9 1059.9,472.5 1062.0,467.1 1058.0,482.7 1046.7,488.8 1009.2,509.1 999.6,513.6 988.8,517.4 977.2,520.2 964.9,522.1 952.3,522.9 939.5,522.7 926.8,521.4 914.3,519.2 902.3,515.9 890.9,511.8 880.4,506.8 870.9,501.0 862.7,494.9 831.8,468.3 822.5,460.3 820.1,434.6 849.8,459.5 880.4,485.4 887.2,490.4 894.5,494.8 902.6,498.5 911.4,501.7 920.6,504.2 930.2,505.9 939.9,506.8 949.7,507.0 959.4,506.4 968.7,505.0 977.7,502.8 986.0,500.0 993.9,496.3 1030.7,476.7 1066.7,457.5 1073.0,456.1 1079.9,457.4 1084.8,461.0 1086.0,465.5 1084.5,471.8 1082.2,478.4 1079.0,484.8 1075.0,491.0 1070.3,497.0 1064.8,502.8 1058.5,508.2 1051.5,513.3 1043.9,518.1 1035.6,522.4 1026.8,526.3 1017.4,529.8 1007.6,532.7 997.4,535.1 986.8,537.1 975.9,538.4 964.9,539.3 953.7,539.5 942.4,539.2 931.2,538.4 920.1,537.0 909.1,535.1 898.3,532.6 887.8,529.7 877.7,526.2 868.0,522.3 858.8,518.0 850.1,513.3 842.0,508.1 834.5,502.7 827.7,497.0 821.5,491.0 816.2,484.8 811.5,478.4 807.7,471.8 804.6,465.2 802.3,458.5 800.8,451.8 800.1,445.1 800.2,438.8 802.3,434.7 807.8,432.1 814.6,432.1 820.1,434.6" fill="#084747"/>
<polygon points="821.1,457.0 821.1,444.1 821.8,449.8 823.3,455.6 825.3,461.2 828.1,466.8 831.5,472.4 835.6,477.7 840.3,483.0 845.6,488.0 851.4,492.8 857.8,497.3 864.7,501.6 872.1,505.5 880.0,509.1 888.1,512.4 896.7,515.2 905.5,517.7 914.5,519.7 923.8,521.3 933.1,522.5 942.5,523.2 952.0,523.4 961.4,523.2 970.6,522.5 979.7,521.4 988.6,519.8 997.2,517.8 1005.5,515.3 1013.4,512.5 1020.8,509.2 1027.8,505.6 1034.3,501.7 1040.2,497.4 1045.5,492.9 1050.2,488.1 1054.3,483.0 1057.7,477.8 1060.5,472.5 1062.6,467.0 1060.2,479.7 1045.8,487.5 1008.3,507.7 998.8,512.2 988.1,515.9 976.7,518.7 964.6,520.5 952.2,521.4 939.6,521.1 927.0,519.9 914.7,517.7 902.9,514.5 891.7,510.4 881.2,505.5 871.8,500.0 863.7,493.9 832.7,467.4 821.1,457.0 819.7,434.6 849.1,459.5 879.8,485.4 886.6,490.5 894.1,494.9 902.3,498.7 911.1,501.8 920.5,504.3 930.1,506.1 939.9,507.0 949.8,507.2 959.5,506.6 969.0,505.1 978.0,503.0 986.4,500.1 994.3,496.4 1031.2,476.8 1067.2,457.6 1073.1,456.3 1079.6,457.5 1084.3,460.9 1085.4,465.1 1083.2,471.0 1080.8,477.5 1077.7,483.8 1073.8,490.0 1069.1,495.9 1063.6,501.6 1057.4,507.0 1050.5,512.0 1042.9,516.7 1034.7,521.0 1026.0,524.9 1016.7,528.3 1007.0,531.2 996.9,533.6 986.4,535.5 975.6,536.9 964.7,537.7 953.6,537.9 942.5,537.7 931.4,536.8 920.3,535.4 909.4,533.5 898.8,531.1 888.4,528.2 878.4,524.8 868.8,520.9 859.6,516.7 851.0,512.1 842.9,507.1 835.4,501.7 828.6,496.1 822.5,490.2 817.1,484.1 812.4,477.8 808.5,471.3 805.4,464.8 803.1,458.1 801.5,451.5 800.7,444.9 800.8,438.5 802.8,434.7 808.0,432.3 814.4,432.2 819.7,434.6" fill="#0e7a7a"/>
<polygon points="819.7,453.8 819.7,443.7 820.5,449.4 822.0,455.2 824.2,461.0 827.0,466.6 830.5,472.2 834.7,477.7 839.4,482.9 844.8,488.0 850.8,492.8 857.3,497.4 864.3,501.7 871.7,505.6 879.6,509.2 887.9,512.5 896.4,515.4 905.3,517.8 914.4,519.9 923.7,521.5 933.1,522.7 942.6,523.4 952.0,523.6 961.5,523.4 970.8,522.7 980.0,521.5 988.9,520.0 997.5,517.9 1005.8,515.5 1013.8,512.6 1021.3,509.3 1028.3,505.7 1034.8,501.7 1040.7,497.5 1046.1,492.9 1050.8,488.1 1054.9,483.0 1058.4,477.8 1061.1,472.4 1063.2,466.9 1062.4,476.7 1044.8,486.2 1007.4,506.4 998.0,510.8 987.5,514.4 976.2,517.2 964.3,519.0 952.1,519.8 939.7,519.6 927.3,518.4 915.2,516.2 903.5,513.0 892.4,509.0 882.1,504.3 872.7,498.9 864.6,493.0 833.6,466.5 819.7,453.8 819.2,434.6 848.4,459.5 879.1,485.4 886.1,490.5 893.7,495.0 902.0,498.8 910.9,502.0 920.3,504.5 930.0,506.2 940.0,507.2 949.9,507.4 959.7,506.7 969.2,505.3 978.3,503.1 986.8,500.2 994.7,496.5 1031.7,476.9 1067.6,457.7 1073.2,456.4 1079.4,457.6 1083.8,460.8 1084.9,464.8 1081.8,470.2 1079.5,476.6 1076.4,482.8 1072.5,488.9 1067.8,494.8 1062.4,500.4 1056.3,505.7 1049.4,510.7 1042.0,515.4 1033.9,519.6 1025.2,523.4 1016.0,526.8 1006.4,529.7 996.3,532.1 986.0,533.9 975.3,535.3 964.5,536.1 953.6,536.3 942.5,536.1 931.5,535.2 920.6,533.9 909.8,532.0 899.3,529.6 889.0,526.7 879.1,523.3 869.6,519.6 860.5,515.4 851.8,510.9 843.8,506.0 836.3,500.7 829.5,495.2 823.4,489.4 818.0,483.4 813.3,477.2 809.4,470.8 806.2,464.3 803.8,457.8 802.2,451.2 801.4,444.6 801.4,438.3 803.3,434.6 808.2,432.4 814.2,432.4 819.2,434.6" fill="#13a8a8"/>
<polygon points="818.2,450.4 818.4,443.2 819.2,449.0 820.8,454.9 823.0,460.7 825.9,466.5 829.5,472.1 833.8,477.6 838.6,482.9 844.1,488.0 850.1,492.9 856.7,497.5 863.8,501.8 871.3,505.7 879.3,509.4 887.6,512.6 896.2,515.5 905.1,518.0 914.3,520.1 923.6,521.7 933.0,522.8 942.6,523.5 952.1,523.8 961.6,523.6 971.0,522.9 980.2,521.7 989.1,520.1 997.8,518.1 1006.2,515.6 1014.2,512.7 1021.7,509.4 1028.7,505.8 1035.3,501.8 1041.2,497.5 1046.6,492.9 1051.4,488.1 1055.5,483.0 1059.0,477.7 1061.7,472.3 1063.8,466.8 1064.7,473.6 1043.9,484.8 1006.5,505.0 997.2,509.3 986.8,512.9 975.7,515.6 964.0,517.4 952.0,518.2 939.7,518.0 927.6,516.8 915.6,514.6 904.1,511.5 893.2,507.6 883.0,503.1 873.7,497.8 865.6,492.0 834.5,465.6 818.2,450.4 818.7,434.6 847.7,459.5 878.5,485.5 885.5,490.6 893.3,495.1 901.7,498.9 910.7,502.1 920.2,504.6 930.0,506.4 940.0,507.4 950.0,507.6 959.9,506.9 969.5,505.5 978.6,503.3 987.1,500.3 995.2,496.6 1032.1,476.9 1068.1,457.8 1073.3,456.6 1079.1,457.7 1083.3,460.7 1084.3,464.4 1080.5,469.3 1078.2,475.6 1075.1,481.8 1071.2,487.8 1066.6,493.6 1061.2,499.2 1055.1,504.5 1048.4,509.4 1041.0,514.0 1032.9,518.2 1024.4,522.0 1015.3,525.3 1005.7,528.1 995.8,530.5 985.6,532.3 975.0,533.7 964.3,534.5 953.5,534.7 942.6,534.4 931.7,533.6 920.9,532.3 910.2,530.4 899.8,528.0 889.6,525.2 879.8,521.9 870.4,518.2 861.3,514.1 852.8,509.7 844.7,504.9 837.3,499.7 830.5,494.3 824.3,488.6 818.9,482.7 814.2,476.5 810.2,470.3 807.0,463.9 804.6,457.4 802.9,450.9 802.0,444.3 801.9,438.1 803.7,434.6 808.3,432.5 814.1,432.5 818.7,434.6" fill="#18cccc"/>
<polygon points="816.8,447.1 817.0,442.7 817.9,448.6 819.6,454.5 821.9,460.4 824.9,466.3 828.5,472.0 832.8,477.5 837.8,482.9 843.4,488.0 849.5,492.9 856.2,497.5 863.3,501.9 870.9,505.9 879.0,509.5 887.3,512.8 896.0,515.7 904.9,518.2 914.1,520.2 923.5,521.9 933.0,523.0 942.6,523.7 952.2,524.0 961.7,523.8 971.1,523.1 980.4,521.9 989.4,520.3 998.1,518.2 1006.5,515.8 1014.6,512.9 1022.1,509.6 1029.2,505.9 1035.8,501.9 1041.8,497.6 1047.2,493.0 1052.0,488.1 1056.1,483.0 1059.6,477.7 1062.4,472.2 1064.5,466.7 1066.8,470.6 1042.9,483.5 1005.6,503.6 996.4,507.9 986.2,511.5 975.2,514.1 963.7,515.9 951.9,516.6 939.8,516.4 927.8,515.2 916.0,513.1 904.7,510.1 894.0,506.2 883.8,501.8 874.6,496.7 866.5,491.1 835.5,464.8 816.8,447.1 818.3,434.6 847.0,459.5 877.8,485.5 885.0,490.7 892.9,495.2 901.4,499.0 910.5,502.3 920.0,504.8 929.9,506.6 940.0,507.6 950.1,507.7 960.0,507.1 969.7,505.6 978.9,503.4 987.5,500.5 995.6,496.7 1032.6,477.0 1068.5,457.9 1073.5,456.7 1078.9,457.8 1082.8,460.6 1083.7,464.1 1079.1,468.4 1076.8,474.7 1073.8,480.8 1069.9,486.8 1065.4,492.5 1060.0,498.0 1054.0,503.2 1047.3,508.1 1040.0,512.7 1032.0,516.8 1023.6,520.5 1014.6,523.8 1005.1,526.6 995.3,528.9 985.2,530.8 974.8,532.1 964.2,532.9 953.4,533.1 942.6,532.9 931.9,532.1 921.2,530.7 910.6,528.9 900.3,526.5 890.2,523.7 880.5,520.4 871.2,516.8 862.2,512.8 853.6,508.5 845.6,503.8 838.2,498.8 831.4,493.4 825.3,487.8 819.8,482.0 815.1,475.9 811.1,469.7 807.8,463.4 805.3,457.0 803.6,450.5 802.7,444.1 802.5,437.8 804.2,434.6 808.5,432.6 813.9,432.6 818.3,434.6" fill="#1beaea"/>
<polygon points="815.3,443.6 815.6,442.1 816.5,448.2 818.2,454.2 820.6,460.2 823.7,466.0 827.4,471.8 831.8,477.4 836.9,482.8 842.5,488.0 848.7,493.0 855.5,497.6 862.8,502.0 870.5,506.0 878.6,509.6 887.0,512.9 895.7,515.9 904.7,518.4 914.0,520.4 923.4,522.1 933.0,523.3 942.6,524.0 952.2,524.2 961.8,524.0 971.3,523.3 980.6,522.1 989.7,520.5 998.5,518.4 1007.0,515.9 1015.0,513.0 1022.6,509.7 1029.8,506.0 1036.4,502.0 1042.4,497.6 1047.9,493.0 1052.7,488.1 1056.8,483.0 1060.3,477.6 1063.1,472.2 1065.3,466.5 1069.2,467.4 1041.9,482.1 1004.6,502.1 995.5,506.4 985.5,509.9 974.7,512.5 963.4,514.2 951.7,514.9 939.9,514.7 928.1,513.6 916.5,511.5 905.4,508.5 894.8,504.7 884.8,500.5 875.6,495.6 867.6,490.0 836.5,463.8 815.3,443.6 817.7,434.6 846.2,459.5 877.1,485.5 884.3,490.7 892.4,495.3 901.1,499.2 910.2,502.4 919.8,505.0 929.8,506.8 940.0,507.8 950.2,508.0 960.3,507.3 970.0,505.9 979.3,503.6 988.0,500.6 996.1,496.8 1033.1,477.1 1069.1,458.0 1073.6,456.9 1078.6,457.9 1082.2,460.4 1083.1,463.7 1077.7,467.5 1075.4,473.7 1072.4,479.8 1068.6,485.7 1064.0,491.3 1058.8,496.8 1052.8,501.9 1046.2,506.7 1038.9,511.2 1031.1,515.3 1022.7,519.0 1013.8,522.2 1004.5,525.0 994.8,527.3 984.7,529.1 974.4,530.4 964.0,531.2 953.4,531.4 942.7,531.1 932.0,530.4 921.5,529.0 911.0,527.2 900.8,524.9 890.9,522.1 881.3,518.9 872.0,515.3 863.1,511.5 854.6,507.2 846.6,502.6 839.3,497.7 832.5,492.5 826.3,486.9 820.8,481.2 816.1,475.2 812.0,469.1 808.7,462.9 806.2,456.5 804.5,450.1 803.5,443.7 803.2,437.6 804.8,434.6 808.8,432.8 813.7,432.8 817.7,434.6" fill="#1effff"/>
<polygon points="50.3,-260.1 944.5,427.5 2153.8,-167.1 1936.3,-213.4 982.3,148.0 225.4,-285.4" fill="#34340e"/>
<polygon points="65.4,-267.9 78.2,-258.4 91.5,-248.6 105.4,-238.3 119.9,-227.6 134.9,-216.5 150.7,-204.9 167.1,-192.7 184.3,-180.0 202.2,-166.8 221.0,-152.8 240.8,-138.2 261.5,-122.9 283.3,-106.8 306.2,-89.9 330.4,-72.0 355.9,-53.1 382.9,-33.2 411.5,-12.1 441.8,10.3 474.0,34.1 508.2,59.5 544.8,86.5 583.8,115.3 625.7,146.3 670.6,179.5 719.0,215.3 771.3,253.9 827.9,295.8 889.4,341.3 949.6,385.7 1019.7,352.4 1092.8,317.7 1161.4,285.1 1225.8,254.5 1286.5,225.7 1343.7,198.5 1397.7,172.9 1448.8,148.6 1497.3,125.6 1543.2,103.7 1586.9,83.0 1628.5,63.3 1668.0,44.5 1705.8,26.6 1741.8,9.5 1776.2,-6.9 1809.1,-22.5 1840.7,-37.5 1870.9,-51.9 1899.9,-65.6 1927.7,-78.9 1954.5,-91.6 1980.2,-103.8 2004.9,-115.5 2028.8,-126.9 2051.7,-137.8 2073.9,-148.3 2095.3,-158.4 2115.9,-168.2 2135.9,-177.7 2148.1,-175.1 2128.3,-165.6 2107.7,-155.7 2086.5,-145.4 2064.5,-134.8 2041.6,-123.8 2017.9,-112.4 1993.3,-100.5 1967.7,-88.1 1941.1,-75.3 1913.3,-61.9 1884.5,-48.0 1854.4,-33.5 1823.0,-18.3 1790.1,-2.5 1755.8,14.0 1719.9,31.4 1682.3,49.5 1642.8,68.5 1601.3,88.5 1557.7,109.6 1511.8,131.7 1463.4,155.0 1412.4,179.7 1358.3,205.7 1301.1,233.3 1240.4,262.6 1175.9,293.7 1107.2,326.8 1033.9,362.2 955.5,400.0 940.3,398.6 873.5,348.3 812.2,302.3 755.9,259.9 703.9,220.8 655.8,184.6 611.1,151.0 569.6,119.8 530.8,90.6 494.5,63.3 460.5,37.8 428.6,13.7 398.6,-8.9 370.3,-30.2 343.5,-50.3 318.2,-69.3 294.3,-87.3 271.6,-104.4 250.0,-120.6 229.5,-136.1 209.9,-150.8 191.3,-164.8 173.5,-178.1 156.5,-190.9 140.3,-203.1 124.7,-214.8 109.8,-226.1 95.5,-236.8 81.8,-247.1 68.6,-257.0 55.9,-266.6" fill="#474708"/>
<polygon points="64.8,-268.1 77.6,-258.6 91.0,-248.8 104.8,-238.5 119.3,-227.8 134.3,-216.7 150.1,-205.1 166.5,-192.9 183.6,-180.2 201.6,-166.9 220.4,-153.0 240.2,-138.4 260.9,-123.1 282.7,-107.0 305.6,-90.0 329.8,-72.2 355.3,-53.3 382.3,-33.3 410.8,-12.2 441.1,10.2 473.3,34.0 507.5,59.3 544.1,86.3 583.1,115.2 625.0,146.2 669.9,179.4 718.3,215.2 770.6,253.8 827.3,295.7 888.8,341.2 949.5,386.0 1020.1,352.5 1093.2,317.7 1161.8,285.1 1226.3,254.5 1286.9,225.7 1344.1,198.5 1398.2,172.8 1449.3,148.6 1497.7,125.5 1543.7,103.7 1587.4,83.0 1628.9,63.2 1668.5,44.4 1706.2,26.5 1742.2,9.4 1776.7,-7.0 1809.6,-22.6 1841.1,-37.6 1871.3,-51.9 1900.3,-65.7 1928.2,-78.9 1954.9,-91.6 1980.6,-103.9 2005.4,-115.6 2029.2,-126.9 2052.2,-137.8 2074.3,-148.4 2095.7,-158.5 2116.3,-168.3 2136.3,-177.8 2147.5,-175.6 2127.7,-166.1 2107.2,-156.2 2085.9,-146.0 2063.9,-135.4 2041.0,-124.4 2017.3,-112.9 1992.6,-101.1 1967.0,-88.7 1940.4,-75.9 1912.7,-62.6 1883.8,-48.7 1853.7,-34.2 1822.3,-19.0 1789.4,-3.2 1755.1,13.3 1719.2,30.6 1681.5,48.7 1642.1,67.8 1600.6,87.7 1557.0,108.7 1511.1,130.8 1462.7,154.2 1411.6,178.8 1357.5,204.8 1300.3,232.3 1239.6,261.6 1175.1,292.7 1106.4,325.7 1033.1,361.0 954.7,398.8 941.4,397.6 874.3,347.6 813.0,301.5 756.6,259.2 704.6,220.2 656.5,184.0 611.8,150.5 570.2,119.2 531.4,90.1 495.1,62.8 461.1,37.3 429.1,13.3 399.1,-9.3 370.8,-30.6 344.0,-50.7 318.7,-69.7 294.7,-87.7 272.0,-104.7 250.4,-121.0 229.9,-136.4 210.3,-151.1 191.7,-165.1 173.9,-178.4 156.9,-191.2 140.6,-203.4 125.1,-215.1 110.2,-226.3 95.8,-237.1 82.1,-247.4 68.9,-257.3 56.2,-266.8" fill="#7a7a0e"/>
<polygon points="64.3,-268.3 77.1,-258.8 90.4,-249.0 104.3,-238.7 118.7,-228.0 133.8,-216.9 149.5,-205.2 165.9,-193.1 183.0,-180.4 201.0,-167.1 219.8,-153.2 239.5,-138.6 260.3,-123.3 282.0,-107.2 305.0,-90.2 329.1,-72.3 354.6,-53.5 381.6,-33.5 410.2,-12.4 440.4,10.0 472.6,33.8 506.9,59.2 543.4,86.2 582.5,115.1 624.3,146.0 669.3,179.3 717.7,215.1 770.0,253.7 826.6,295.6 888.2,341.2 949.5,386.2 1020.5,352.5 1093.6,317.7 1162.2,285.1 1226.7,254.5 1287.4,225.7 1344.6,198.5 1398.6,172.8 1449.8,148.5 1498.2,125.5 1544.2,103.7 1587.8,82.9 1629.4,63.2 1668.9,44.4 1706.7,26.4 1742.7,9.3 1777.1,-7.0 1810.0,-22.7 1841.6,-37.7 1871.8,-52.0 1900.8,-65.8 1928.6,-79.0 1955.4,-91.7 1981.1,-103.9 2005.8,-115.7 2029.6,-127.0 2052.6,-137.9 2074.7,-148.4 2096.1,-158.6 2116.8,-168.4 2136.7,-177.9 2146.9,-176.1 2127.1,-166.6 2106.6,-156.7 2085.3,-146.5 2063.2,-135.9 2040.4,-124.9 2016.7,-113.5 1992.0,-101.7 1966.4,-89.3 1939.8,-76.5 1912.0,-63.2 1883.1,-49.3 1853.0,-34.8 1821.6,-19.7 1788.7,-3.9 1754.4,12.6 1718.5,29.9 1680.8,48.0 1641.3,67.0 1599.8,86.9 1556.2,107.9 1510.3,130.0 1461.9,153.3 1410.8,177.8 1356.7,203.8 1299.5,231.4 1238.8,260.6 1174.3,291.6 1105.5,324.6 1032.2,359.9 953.8,397.6 942.5,396.6 875.1,346.8 813.8,300.8 757.4,258.5 705.3,219.5 657.1,183.4 612.4,149.9 570.8,118.7 532.0,89.6 495.7,62.3 461.6,36.8 429.7,12.8 399.6,-9.7 371.2,-31.0 344.5,-51.1 319.2,-70.0 295.2,-88.0 272.4,-105.1 250.8,-121.3 230.3,-136.7 210.7,-151.4 192.1,-165.4 174.3,-178.7 157.2,-191.5 141.0,-203.7 125.4,-215.4 110.5,-226.6 96.2,-237.3 82.4,-247.6 69.2,-257.5 56.6,-267.1" fill="#a8a813"/>
<polygon points="63.7,-268.5 76.5,-259.0 89.8,-249.1 103.7,-238.9 118.1,-228.2 133.2,-217.1 148.9,-205.4 165.3,-193.3 182.4,-180.6 200.4,-167.3 219.2,-153.4 238.9,-138.8 259.6,-123.5 281.4,-107.3 304.3,-90.4 328.5,-72.5 354.0,-53.6 380.9,-33.7 409.5,-12.6 439.8,9.9 472.0,33.7 506.2,59.0 542.8,86.0 581.8,114.9 623.7,145.9 668.6,179.2 717.1,215.0 769.4,253.7 826.0,295.6 887.6,341.1 949.4,386.5 1020.9,352.5 1094.0,317.8 1162.7,285.1 1227.1,254.5 1287.8,225.7 1345.0,198.5 1399.1,172.8 1450.2,148.5 1498.6,125.5 1544.6,103.6 1588.3,82.9 1629.8,63.1 1669.4,44.3 1707.1,26.4 1743.1,9.3 1777.5,-7.1 1810.5,-22.7 1842.0,-37.7 1872.2,-52.1 1901.2,-65.8 1929.0,-79.1 1955.8,-91.8 1981.5,-104.0 2006.2,-115.8 2030.0,-127.1 2053.0,-138.0 2075.1,-148.5 2096.5,-158.7 2117.2,-168.5 2137.1,-177.9 2146.3,-176.7 2126.5,-167.1 2106.0,-157.3 2084.7,-147.1 2062.6,-136.5 2039.7,-125.5 2016.0,-114.1 1991.4,-102.3 1965.7,-90.0 1939.1,-77.2 1911.4,-63.8 1882.5,-50.0 1852.3,-35.5 1820.9,-20.4 1788.0,-4.6 1753.7,11.9 1717.7,29.1 1680.1,47.2 1640.6,66.2 1599.1,86.1 1555.5,107.1 1509.5,129.1 1461.1,152.4 1410.0,176.9 1355.9,202.9 1298.7,230.4 1238.0,259.5 1173.4,290.5 1104.7,323.5 1031.4,358.7 952.9,396.4 943.6,395.5 876.0,346.0 814.6,300.1 758.1,257.8 706.0,218.9 657.8,182.8 613.1,149.3 571.4,118.1 532.6,89.1 496.2,61.9 462.2,36.4 430.2,12.4 400.1,-10.1 371.7,-31.4 344.9,-51.4 319.6,-70.4 295.6,-88.4 272.9,-105.4 251.2,-121.6 230.7,-137.0 211.1,-151.7 192.4,-165.7 174.6,-179.0 157.6,-191.8 141.3,-204.0 125.8,-215.7 110.8,-226.9 96.5,-237.6 82.8,-247.9 69.6,-257.8 56.9,-267.3" fill="#cccc18"/>
<polygon points="63.1,-268.7 75.9,-259.2 89.2,-249.3 103.1,-239.1 117.5,-228.4 132.6,-217.2 148.3,-205.6 164.7,-193.5 181.8,-180.8 199.8,-167.5 218.6,-153.6 238.3,-139.0 259.0,-123.6 280.8,-107.5 303.7,-90.6 327.8,-72.7 353.3,-53.8 380.3,-33.8 408.8,-12.7 439.1,9.7 471.3,33.5 505.5,58.9 542.1,85.9 581.2,114.8 623.0,145.8 668.0,179.1 716.4,214.9 768.7,253.6 825.4,295.5 887.0,341.1 949.4,386.7 1021.3,352.6 1094.5,317.8 1163.1,285.2 1227.6,254.5 1288.2,225.7 1345.5,198.5 1399.5,172.8 1450.6,148.5 1499.1,125.4 1545.1,103.6 1588.7,82.8 1630.3,63.1 1669.8,44.3 1707.6,26.3 1743.6,9.2 1778.0,-7.1 1810.9,-22.8 1842.5,-37.8 1872.7,-52.1 1901.6,-65.9 1929.5,-79.1 1956.2,-91.9 1981.9,-104.1 2006.6,-115.8 2030.5,-127.2 2053.4,-138.1 2075.6,-148.6 2096.9,-158.7 2117.6,-168.6 2137.5,-178.0 2145.8,-177.2 2125.9,-167.6 2105.4,-157.8 2084.1,-147.6 2062.0,-137.0 2039.1,-126.1 2015.4,-114.7 1990.7,-102.8 1965.1,-90.6 1938.4,-77.8 1910.7,-64.5 1881.8,-50.6 1851.7,-36.2 1820.2,-21.1 1787.3,-5.3 1753.0,11.2 1717.0,28.4 1679.4,46.5 1639.8,65.4 1598.3,85.3 1554.7,106.2 1508.8,128.3 1460.3,151.5 1409.2,176.0 1355.1,201.9 1297.9,229.4 1237.1,258.5 1172.6,289.5 1103.9,322.4 1030.5,357.6 952.1,395.2 944.6,394.5 876.8,345.2 815.4,299.3 758.9,257.1 706.7,218.2 658.5,182.2 613.7,148.7 572.0,117.6 533.2,88.5 496.8,61.4 462.7,35.9 430.7,12.0 400.6,-10.6 372.2,-31.8 345.4,-51.8 320.1,-70.8 296.0,-88.8 273.3,-105.8 251.6,-122.0 231.1,-137.4 211.5,-152.0 192.8,-166.0 175.0,-179.3 158.0,-192.1 141.7,-204.3 126.1,-215.9 111.2,-227.1 96.8,-237.8 83.1,-248.1 69.9,-258.0 57.2,-267.5" fill="#eaea1b"/>
<polygon points="62.5,-268.9 75.3,-259.4 88.6,-249.5 102.5,-239.3 116.9,-228.6 131.9,-217.4 147.6,-205.8 164.0,-193.7 181.1,-181.0 199.1,-167.7 217.9,-153.8 237.6,-139.2 258.3,-123.8 280.0,-107.7 303.0,-90.8 327.1,-72.9 352.6,-54.0 379.6,-34.0 408.1,-12.9 438.4,9.5 470.6,33.3 504.8,58.7 541.3,85.7 580.4,114.7 622.3,145.6 667.3,178.9 715.7,214.8 768.0,253.5 824.7,295.4 886.3,341.0 949.3,387.0 1021.8,352.6 1095.0,317.8 1163.6,285.2 1228.1,254.5 1288.8,225.7 1346.0,198.4 1400.1,172.7 1451.2,148.4 1499.6,125.4 1545.6,103.5 1589.3,82.8 1630.8,63.0 1670.4,44.2 1708.1,26.3 1744.1,9.1 1778.5,-7.2 1811.5,-22.9 1843.0,-37.9 1873.2,-52.2 1902.2,-66.0 1930.0,-79.2 1956.7,-91.9 1982.4,-104.2 2007.2,-115.9 2031.0,-127.2 2053.9,-138.2 2076.1,-148.7 2097.4,-158.8 2118.1,-168.6 2138.0,-178.1 2145.2,-177.7 2125.3,-168.2 2104.7,-158.4 2083.4,-148.2 2061.4,-137.6 2038.5,-126.7 2014.7,-115.3 1990.0,-103.5 1964.4,-91.2 1937.7,-78.4 1910.0,-65.1 1881.1,-51.3 1850.9,-36.9 1819.5,-21.8 1786.6,-6.1 1752.2,10.4 1716.3,27.6 1678.6,45.6 1639.1,64.6 1597.5,84.4 1553.9,105.3 1507.9,127.3 1459.5,150.5 1408.4,175.0 1354.3,200.9 1297.0,228.3 1236.3,257.4 1171.7,288.3 1103.0,321.2 1029.6,356.3 951.2,393.9 945.8,393.4 877.7,344.3 816.2,298.5 759.7,256.4 707.5,217.5 659.2,181.5 614.4,148.1 572.7,117.0 533.8,88.0 497.4,60.8 463.3,35.4 431.3,11.5 401.2,-11.0 372.8,-32.2 345.9,-52.3 320.6,-71.2 296.5,-89.2 273.8,-106.2 252.1,-122.4 231.5,-137.7 211.9,-152.4 193.2,-166.3 175.4,-179.7 158.4,-192.4 142.1,-204.6 126.5,-216.2 111.5,-227.4 97.2,-238.1 83.4,-248.4 70.2,-258.3 57.5,-267.8" fill="#ffff1e"/>
<polygon points="158.0,-316.8 171.1,-309.1 184.7,-301.2 198.7,-293.1 213.3,-284.6 228.5,-275.8 244.2,-266.6 260.5,-257.1 277.5,-247.2 295.2,-236.9 313.6,-226.2 332.8,-215.0 352.8,-203.4 373.8,-191.2 395.6,-178.4 418.5,-165.1 442.5,-151.1 467.7,-136.5 494.1,-121.1 521.9,-105.0 551.1,-87.9 581.9,-70.0 614.4,-51.1 648.8,-31.1 685.2,-9.9 723.8,12.6 764.8,36.5 808.5,61.9 855.1,89.0 904.9,118.0 958.0,148.9 962.5,151.2 967.4,152.9 972.8,154.3 978.5,155.2 984.4,155.6 990.2,155.5 995.9,155.0 1001.1,153.9 1006.1,152.4 1066.3,129.2 1123.7,107.1 1178.2,86.2 1230.0,66.2 1279.4,47.2 1326.4,29.1 1371.3,11.9 1414.2,-4.7 1455.2,-20.4 1494.5,-35.5 1532.2,-50.0 1568.2,-63.9 1602.9,-77.2 1636.2,-90.0 1668.2,-102.3 1698.9,-114.2 1728.6,-125.6 1757.1,-136.6 1784.7,-147.2 1811.3,-157.4 1836.9,-167.3 1861.7,-176.8 1885.6,-186.0 1908.8,-194.9 1931.2,-203.5 1952.9,-211.9 1973.9,-220.0 1994.3,-227.8 2014.0,-235.4 2033.2,-242.8 2043.6,-240.8 2024.5,-233.3 2004.8,-225.7 1984.6,-217.8 1963.6,-209.6 1942.0,-201.2 1919.7,-192.5 1896.6,-183.5 1872.7,-174.2 1848.0,-164.6 1822.5,-154.6 1796.0,-144.3 1768.5,-133.6 1740.0,-122.5 1710.4,-111.0 1679.7,-99.0 1647.8,-86.6 1614.6,-73.6 1580.0,-60.2 1543.9,-46.1 1506.3,-31.5 1467.1,-16.2 1426.1,-0.2 1383.2,16.5 1338.3,34.0 1291.2,52.3 1241.9,71.5 1190.0,91.7 1135.4,113.0 1077.9,135.4 1017.0,159.1 1010.3,161.2 1002.4,162.8 993.8,163.7 985.0,163.8 976.1,163.1 967.4,161.8 959.2,159.7 951.9,157.0 945.8,154.0 892.3,122.5 842.7,93.2 796.3,65.8 752.8,40.1 712.0,16.0 673.5,-6.6 637.3,-28.0 603.1,-48.2 570.8,-67.3 540.1,-85.4 511.1,-102.5 483.4,-118.8 457.2,-134.3 432.2,-149.1 408.4,-163.1 385.6,-176.5 363.9,-189.4 343.1,-201.6 323.2,-213.4 304.2,-224.6 285.9,-235.4 268.3,-245.7 251.5,-255.7 235.3,-265.3 219.7,-274.5 204.7,-283.3 190.2,-291.9 176.2,-300.1 162.8,-308.0 149.8,-315.7" fill="#474708"/>
<polygon points="157.5,-316.9 170.6,-309.3 184.2,-301.4 198.3,-293.2 212.8,-284.7 228.0,-275.9 243.7,-266.8 260.0,-257.3 277.0,-247.4 294.7,-237.1 313.1,-226.4 332.3,-215.2 352.3,-203.5 373.3,-191.3 395.1,-178.6 418.0,-165.3 442.0,-151.3 467.2,-136.7 493.6,-121.3 521.3,-105.1 550.6,-88.1 581.4,-70.2 613.9,-51.2 648.3,-31.2 684.7,-10.0 723.3,12.5 764.3,36.4 808.0,61.8 854.6,88.9 904.4,117.9 957.6,148.9 962.2,151.1 967.2,152.9 972.6,154.3 978.5,155.2 984.4,155.6 990.4,155.5 996.1,155.0 1001.4,153.9 1006.4,152.3 1066.6,129.2 1124.0,107.1 1178.5,86.1 1230.4,66.2 1279.7,47.2 1326.8,29.1 1371.7,11.8 1414.6,-4.7 1455.6,-20.5 1494.9,-35.6 1532.5,-50.1 1568.6,-64.0 1603.3,-77.3 1636.5,-90.1 1668.5,-102.4 1699.3,-114.3 1729.0,-125.7 1757.5,-136.7 1785.1,-147.2 1811.6,-157.5 1837.3,-167.3 1862.0,-176.9 1886.0,-186.1 1909.1,-195.0 1931.6,-203.6 1953.2,-212.0 1974.3,-220.0 1994.6,-227.9 2014.4,-235.5 2033.5,-242.9 2043.1,-241.2 2024.0,-233.8 2004.3,-226.1 1984.0,-218.2 1963.1,-210.1 1941.5,-201.7 1919.1,-193.0 1896.1,-184.0 1872.2,-174.7 1847.5,-165.1 1821.9,-155.1 1795.4,-144.8 1767.9,-134.2 1739.4,-123.1 1709.9,-111.6 1679.1,-99.6 1647.2,-87.2 1614.0,-74.3 1579.4,-60.8 1543.3,-46.8 1505.7,-32.2 1466.5,-16.9 1425.5,-0.9 1382.6,15.8 1337.7,33.2 1290.6,51.5 1241.2,70.7 1189.3,90.9 1134.7,112.2 1077.3,134.5 1016.4,158.2 1009.8,160.3 1002.0,161.8 993.7,162.7 985.0,162.8 976.3,162.2 967.8,160.8 959.8,158.8 952.5,156.3 946.5,153.3 893.0,121.9 843.3,92.6 796.9,65.3 753.4,39.6 712.5,15.5 674.1,-7.1 637.8,-28.5 603.6,-48.6 571.2,-67.7 540.6,-85.8 511.5,-102.9 483.9,-119.2 457.6,-134.7 432.6,-149.4 408.8,-163.4 386.0,-176.9 364.3,-189.7 343.5,-201.9 323.6,-213.7 304.5,-224.9 286.2,-235.7 268.7,-246.0 251.8,-256.0 235.6,-265.5 220.0,-274.7 205.0,-283.6 190.5,-292.1 176.5,-300.3 163.1,-308.3 150.1,-315.9" fill="#7a7a0e"/>
<polygon points="157.1,-317.1 170.2,-309.5 183.7,-301.6 197.8,-293.4 212.4,-284.9 227.5,-276.1 243.2,-267.0 259.5,-257.4 276.5,-247.6 294.2,-237.3 312.6,-226.5 331.8,-215.4 351.8,-203.7 372.7,-191.5 394.6,-178.8 417.5,-165.4 441.5,-151.5 466.7,-136.8 493.1,-121.5 520.8,-105.3 550.1,-88.3 580.9,-70.3 613.4,-51.4 647.8,-31.4 684.2,-10.2 722.8,12.3 763.9,36.2 807.5,61.7 854.1,88.8 903.9,117.8 957.2,148.8 961.8,151.1 967.0,152.9 972.5,154.3 978.4,155.2 984.5,155.6 990.5,155.5 996.3,155.0 1001.6,153.9 1006.7,152.3 1067.0,129.1 1124.4,107.0 1178.9,86.1 1230.7,66.1 1280.1,47.1 1327.1,29.0 1372.1,11.7 1415.0,-4.8 1456.0,-20.6 1495.3,-35.7 1532.9,-50.2 1569.0,-64.0 1603.6,-77.4 1636.9,-90.2 1668.9,-102.5 1699.7,-114.3 1729.3,-125.7 1757.9,-136.7 1785.4,-147.3 1812.0,-157.5 1837.6,-167.4 1862.4,-176.9 1886.3,-186.2 1909.5,-195.1 1931.9,-203.7 1953.6,-212.0 1974.6,-220.1 1995.0,-228.0 2014.7,-235.6 2033.9,-242.9 2042.6,-241.6 2023.5,-234.2 2003.8,-226.6 1983.5,-218.7 1962.6,-210.6 1940.9,-202.1 1918.6,-193.5 1895.5,-184.5 1871.6,-175.2 1846.9,-165.6 1821.3,-155.7 1794.8,-145.4 1767.4,-134.7 1738.9,-123.6 1709.3,-112.1 1678.5,-100.2 1646.6,-87.8 1613.4,-74.9 1578.8,-61.4 1542.7,-47.4 1505.1,-32.8 1465.8,-17.6 1424.8,-1.6 1381.9,15.0 1337.0,32.5 1289.9,50.8 1240.5,70.0 1188.6,90.1 1134.1,111.3 1076.6,133.7 1015.7,157.3 1009.2,159.4 1001.6,160.9 993.5,161.7 985.0,161.8 976.4,161.2 968.1,159.9 960.3,157.9 953.2,155.5 947.1,152.6 893.7,121.3 844.0,92.0 797.5,64.7 754.0,39.1 713.1,15.0 674.6,-7.6 638.3,-28.9 604.1,-49.1 571.7,-68.1 541.1,-86.2 512.0,-103.3 484.3,-119.6 458.1,-135.0 433.0,-149.7 409.2,-163.8 386.4,-177.2 364.7,-190.0 343.9,-202.2 324.0,-213.9 304.9,-225.2 286.6,-236.0 269.0,-246.3 252.1,-256.2 235.9,-265.8 220.3,-275.0 205.3,-283.8 190.8,-292.3 176.8,-300.6 163.4,-308.5 150.4,-316.1" fill="#a8a813"/>
<polygon points="156.6,-317.3 169.7,-309.7 183.3,-301.8 197.3,-293.6 211.9,-285.1 227.0,-276.3 242.7,-267.1 259.0,-257.6 276.0,-247.7 293.7,-237.4 312.1,-226.7 331.3,-215.5 351.3,-203.9 372.2,-191.7 394.1,-178.9 417.0,-165.6 441.0,-151.7 466.1,-137.0 492.5,-121.6 520.3,-105.4 549.5,-88.4 580.4,-70.5 612.9,-51.5 647.3,-31.5 683.7,-10.3 722.3,12.2 763.4,36.1 807.0,61.5 853.7,88.7 903.5,117.7 956.7,148.7 961.5,151.0 966.8,152.9 972.4,154.3 978.4,155.2 984.5,155.6 990.6,155.6 996.4,155.0 1001.9,153.9 1007.0,152.3 1067.3,129.1 1124.7,107.0 1179.2,86.0 1231.1,66.1 1280.4,47.1 1327.5,29.0 1372.4,11.7 1415.3,-4.8 1456.3,-20.6 1495.6,-35.7 1533.3,-50.2 1569.3,-64.1 1604.0,-77.4 1637.3,-90.3 1669.3,-102.6 1700.0,-114.4 1729.7,-125.8 1758.2,-136.8 1785.8,-147.4 1812.3,-157.6 1838.0,-167.5 1862.7,-177.0 1886.7,-186.2 1909.8,-195.1 1932.2,-203.8 1953.9,-212.1 1975.0,-220.2 1995.3,-228.0 2015.1,-235.6 2034.2,-243.0 2042.1,-242.1 2023.0,-234.7 2003.3,-227.0 1983.0,-219.2 1962.0,-211.0 1940.4,-202.6 1918.1,-194.0 1895.0,-185.0 1871.1,-175.7 1846.4,-166.2 1820.8,-156.2 1794.3,-145.9 1766.8,-135.3 1738.3,-124.2 1708.7,-112.7 1677.9,-100.8 1646.0,-88.4 1612.7,-75.5 1578.1,-62.1 1542.1,-48.1 1504.5,-33.5 1465.2,-18.3 1424.2,-2.3 1381.3,14.3 1336.3,31.7 1289.3,50.0 1239.9,69.2 1188.0,89.3 1133.4,110.5 1075.9,132.8 1015.1,156.4 1008.7,158.4 1001.3,159.9 993.3,160.7 985.0,160.8 976.6,160.2 968.5,158.9 960.9,157.0 953.8,154.7 947.8,152.0 894.3,120.6 844.6,91.5 798.1,64.2 754.6,38.6 713.6,14.5 675.2,-8.1 638.9,-29.4 604.6,-49.5 572.2,-68.5 541.5,-86.6 512.4,-103.7 484.8,-119.9 458.5,-135.4 433.4,-150.1 409.6,-164.1 386.8,-177.5 365.0,-190.3 344.2,-202.5 324.3,-214.2 305.2,-225.5 286.9,-236.2 269.3,-246.6 252.5,-256.5 236.2,-266.0 220.6,-275.2 205.6,-284.1 191.1,-292.6 177.1,-300.8 163.7,-308.7 150.6,-316.4" fill="#cccc18"/>
<polygon points="156.1,-317.5 169.2,-309.8 182.8,-301.9 196.8,-293.7 211.4,-285.3 226.5,-276.4 242.2,-267.3 258.5,-257.8 275.5,-247.9 293.2,-237.6 311.6,-226.9 330.8,-215.7 350.8,-204.0 371.7,-191.9 393.6,-179.1 416.5,-165.8 440.5,-151.8 465.6,-137.2 492.0,-121.8 519.8,-105.6 549.0,-88.6 579.8,-70.6 612.4,-51.7 646.8,-31.7 683.2,-10.5 721.8,12.0 762.9,35.9 806.6,61.4 853.2,88.5 903.0,117.6 956.3,148.6 961.2,150.9 966.6,152.8 972.3,154.2 978.3,155.2 984.5,155.6 990.7,155.6 996.6,155.0 1002.2,153.9 1007.3,152.3 1067.6,129.1 1125.0,107.0 1179.6,86.0 1231.4,66.0 1280.8,47.0 1327.9,28.9 1372.8,11.6 1415.7,-4.9 1456.7,-20.7 1496.0,-35.8 1533.6,-50.3 1569.7,-64.2 1604.4,-77.5 1637.6,-90.3 1669.6,-102.6 1700.4,-114.5 1730.1,-125.9 1758.6,-136.9 1786.1,-147.5 1812.7,-157.7 1838.3,-167.6 1863.1,-177.1 1887.1,-186.3 1910.2,-195.2 1932.6,-203.9 1954.3,-212.2 1975.3,-220.3 1995.7,-228.1 2015.4,-235.7 2034.6,-243.1 2041.6,-242.5 2022.5,-235.1 2002.8,-227.5 1982.5,-219.6 1961.5,-211.5 1939.9,-203.1 1917.5,-194.5 1894.4,-185.5 1870.5,-176.3 1845.8,-166.7 1820.2,-156.8 1793.7,-146.5 1766.2,-135.8 1737.7,-124.8 1708.1,-113.3 1677.4,-101.4 1645.4,-89.0 1612.2,-76.1 1577.5,-62.7 1541.5,-48.7 1503.8,-34.2 1464.6,-18.9 1423.5,-3.1 1380.6,13.6 1335.7,31.0 1288.6,49.2 1239.2,68.4 1187.3,88.5 1132.7,109.6 1075.2,131.9 1014.4,155.5 1008.1,157.5 1000.9,158.9 993.1,159.7 985.0,159.8 976.8,159.2 968.9,157.9 961.4,156.1 954.5,153.9 948.5,151.3 895.0,120.0 845.3,90.9 798.7,63.6 755.1,38.1 714.2,14.0 675.7,-8.5 639.4,-29.8 605.1,-49.9 572.7,-69.0 542.0,-87.0 512.9,-104.1 485.2,-120.3 458.9,-135.7 433.9,-150.4 410.0,-164.5 387.2,-177.8 365.4,-190.6 344.6,-202.8 324.7,-214.5 305.6,-225.8 287.3,-236.5 269.7,-246.8 252.8,-256.8 236.6,-266.3 220.9,-275.5 205.9,-284.3 191.4,-292.8 177.4,-301.0 163.9,-308.9 150.9,-316.6" fill="#eaea1b"/>
<polygon points="155.6,-317.6 168.7,-310.0 182.3,-302.1 196.3,-293.9 210.9,-285.4 226.0,-276.6 241.7,-267.5 258.0,-258.0 275.0,-248.1 292.6,-237.8 311.0,-227.1 330.2,-215.9 350.2,-204.2 371.2,-192.1 393.0,-179.3 415.9,-166.0 439.9,-152.0 465.0,-137.4 491.4,-122.0 519.2,-105.8 548.4,-88.8 579.3,-70.8 611.8,-51.9 646.2,-31.8 682.6,-10.6 721.2,11.9 762.3,35.8 806.0,61.2 852.6,88.4 902.5,117.4 955.8,148.5 960.8,150.9 966.3,152.8 972.1,154.2 978.3,155.2 984.6,155.7 990.8,155.6 996.9,155.0 1002.5,153.9 1007.7,152.2 1068.0,129.0 1125.5,106.9 1180.0,85.9 1231.8,66.0 1281.2,47.0 1328.3,28.8 1373.2,11.5 1416.1,-5.0 1457.2,-20.8 1496.4,-35.9 1534.1,-50.4 1570.2,-64.3 1604.8,-77.6 1638.1,-90.4 1670.1,-102.7 1700.9,-114.6 1730.5,-126.0 1759.0,-137.0 1786.6,-147.6 1813.1,-157.8 1838.8,-167.7 1863.5,-177.2 1887.5,-186.4 1910.6,-195.3 1933.0,-203.9 1954.7,-212.3 1975.7,-220.4 1996.1,-228.2 2015.8,-235.8 2035.0,-243.2 2041.0,-243.0 2021.9,-235.6 2002.2,-228.0 1981.9,-220.1 1961.0,-212.0 1939.3,-203.6 1917.0,-195.0 1893.8,-186.0 1869.9,-176.8 1845.2,-167.2 1819.6,-157.3 1793.1,-147.1 1765.6,-136.4 1737.1,-125.4 1707.5,-113.9 1676.7,-102.0 1644.8,-89.7 1611.5,-76.8 1576.9,-63.4 1540.8,-49.4 1503.2,-34.9 1463.9,-19.7 1422.9,-3.8 1379.9,12.8 1335.0,30.2 1287.9,48.4 1238.5,67.5 1186.6,87.6 1132.0,108.7 1074.5,131.0 1013.7,154.5 1007.6,156.4 1000.5,157.8 992.9,158.6 985.0,158.7 977.0,158.1 969.3,156.9 962.0,155.1 955.2,153.1 949.3,150.5 895.7,119.4 845.9,90.2 799.4,63.0 755.8,37.5 714.8,13.5 676.3,-9.1 640.0,-30.3 605.7,-50.4 573.2,-69.4 542.5,-87.4 513.4,-104.5 485.7,-120.7 459.4,-136.1 434.3,-150.8 410.4,-164.8 387.6,-178.2 365.9,-191.0 345.0,-203.2 325.1,-214.9 306.0,-226.1 287.6,-236.8 270.1,-247.1 253.2,-257.0 236.9,-266.6 221.3,-275.7 206.2,-284.6 191.7,-293.1 177.8,-301.3 164.3,-309.2 151.2,-316.8" fill="#ffff1e"/>
<polygon points="396.9,-24.5 391.1,-23.7 423.9,-57.6 453.8,-88.5 481.1,-116.7 486.8,-118.2 492.5,-116.1 465.7,-87.8 436.4,-56.9 404.1,-22.9" fill="#474708"/>
<polygon points="396.7,-24.5 391.4,-23.8 424.2,-57.8 454.1,-88.7 481.4,-116.9 486.6,-118.2 491.7,-116.5 464.9,-88.3 435.5,-57.3 403.2,-23.3" fill="#7a7a0e"/>
<polygon points="395.9,-24.0 391.7,-24.0 424.5,-57.9 454.4,-88.8 481.6,-117.0 486.8,-118.7 490.9,-116.9 464.1,-88.7 434.7,-57.8 402.3,-23.8" fill="#a8a813"/>
<polygon points="395.2,-23.5 392.0,-24.1 424.8,-58.1 454.7,-88.9 481.9,-117.2 487.0,-119.0 490.1,-117.4 463.2,-89.1 433.8,-58.2 401.4,-24.3" fill="#cccc18"/>
<polygon points="395.1,-23.7 392.3,-24.3 425.1,-58.2 455.0,-89.1 482.2,-117.3 486.6,-118.9 489.4,-117.8 462.4,-89.6 432.9,-58.7 400.5,-24.7" fill="#eaea1b"/>
<polygon points="395.1,-23.9 392.7,-24.5 425.5,-58.4 455.3,-89.3 482.5,-117.5 486.3,-118.8 488.5,-118.2 461.6,-90.0 432.0,-59.2 399.5,-25.2" fill="#ffff1e"/>
<polygon points="405.1,-18.5 399.2,-17.6 431.9,-52.2 461.6,-83.5 488.7,-112.2 494.6,-113.7 500.2,-111.6 473.6,-82.9 444.4,-51.4 412.3,-16.8" fill="#474708"/>
<polygon points="404.8,-18.5 399.5,-17.8 432.2,-52.3 461.9,-83.7 489.0,-112.3 494.4,-113.7 499.5,-112.0 472.8,-83.3 443.6,-51.9 411.4,-17.3" fill="#7a7a0e"/>
<polygon points="404.1,-18.0 399.8,-18.0 432.5,-52.5 462.2,-83.8 489.3,-112.5 494.6,-114.1 498.7,-112.4 472.0,-83.7 442.7,-52.3 410.5,-17.8" fill="#a8a813"/>
<polygon points="403.4,-17.5 400.1,-18.1 432.8,-52.6 462.5,-84.0 489.6,-112.6 494.7,-114.5 497.9,-112.8 471.1,-84.2 441.8,-52.8 409.6,-18.3" fill="#cccc18"/>
<polygon points="403.3,-17.7 400.4,-18.3 433.1,-52.8 462.8,-84.1 489.9,-112.8 494.3,-114.4 497.1,-113.2 470.3,-84.6 441.0,-53.2 408.7,-18.7" fill="#eaea1b"/>
<polygon points="403.2,-17.9 400.8,-18.5 433.5,-53.0 463.1,-84.3 490.2,-112.9 494.0,-114.2 496.3,-113.7 469.5,-85.1 440.1,-53.7 407.7,-19.2" fill="#ffff1e"/>
<polygon points="413.3,-12.4 407.4,-11.5 440.0,-46.6 469.5,-78.5 496.5,-107.6 502.4,-109.1 508.1,-106.9 481.6,-77.8 452.6,-45.9 420.6,-10.7" fill="#474708"/>
<polygon points="413.1,-12.4 407.7,-11.7 440.3,-46.8 469.8,-78.6 496.8,-107.7 502.2,-109.1 507.3,-107.3 480.8,-78.2 451.7,-46.3 419.7,-11.2" fill="#7a7a0e"/>
<polygon points="412.3,-11.9 408.0,-11.9 440.6,-46.9 470.1,-78.8 497.1,-107.8 502.4,-109.5 506.6,-107.8 480.0,-78.7 450.9,-46.8 418.8,-11.7" fill="#a8a813"/>
<polygon points="411.6,-11.4 408.4,-12.0 440.9,-47.1 470.4,-78.9 497.4,-108.0 502.5,-109.9 505.8,-108.2 479.2,-79.1 450.0,-47.3 417.9,-12.2" fill="#cccc18"/>
<polygon points="411.6,-11.6 408.7,-12.2 441.2,-47.2 470.7,-79.1 497.7,-108.1 502.2,-109.8 505.0,-108.6 478.3,-79.6 449.1,-47.7 417.0,-12.6" fill="#eaea1b"/>
<polygon points="411.5,-11.8 409.1,-12.4 441.6,-47.4 471.1,-79.3 498.0,-108.3 501.8,-109.6 504.1,-109.1 477.5,-80.0 448.2,-48.2 416.0,-13.1" fill="#ffff1e"/>
<polygon points="421.8,-6.2 415.7,-5.3 448.2,-41.0 477.6,-73.4 504.4,-102.9 510.3,-104.4 516.1,-102.2 489.8,-72.7 460.9,-40.2 429.1,-4.5" fill="#474708"/>
<polygon points="421.5,-6.2 416.1,-5.5 448.5,-41.2 477.9,-73.5 504.7,-103.0 510.1,-104.4 515.3,-102.7 489.0,-73.1 460.1,-40.7 428.2,-5.0" fill="#7a7a0e"/>
<polygon points="420.8,-5.6 416.4,-5.7 448.8,-41.3 478.2,-73.7 505.0,-103.2 510.3,-104.8 514.5,-103.1 488.1,-73.5 459.2,-41.2 427.3,-5.5" fill="#a8a813"/>
<polygon points="420.1,-5.2 416.7,-5.8 449.1,-41.5 478.5,-73.8 505.3,-103.3 510.4,-105.2 513.7,-103.5 487.3,-74.0 458.3,-41.6 426.4,-5.9" fill="#cccc18"/>
<polygon points="420.0,-5.4 417.0,-6.0 449.4,-41.6 478.8,-74.0 505.6,-103.5 510.1,-105.1 512.9,-103.9 486.5,-74.4 457.4,-42.1 425.4,-6.4" fill="#eaea1b"/>
<polygon points="419.9,-5.6 417.4,-6.2 449.8,-41.8 479.2,-74.1 505.9,-103.6 509.7,-105.0 512.1,-104.4 485.6,-74.9 456.5,-42.6 424.5,-6.9" fill="#ffff1e"/>
<polygon points="430.3,0.1 424.2,1.0 456.5,-35.3 485.8,-68.2 512.4,-98.1 518.4,-99.6 524.2,-97.5 498.1,-67.5 469.4,-34.5 437.7,1.8" fill="#474708"/>
<polygon points="430.1,0.1 424.6,0.8 456.8,-35.4 486.1,-68.3 512.7,-98.3 518.2,-99.6 523.4,-97.9 497.2,-67.9 468.5,-35.0 436.8,1.3" fill="#7a7a0e"/>
<polygon points="429.3,0.7 424.9,0.7 457.2,-35.6 486.4,-68.5 513.0,-98.4 518.4,-100.1 522.6,-98.3 496.4,-68.3 467.6,-35.4 435.9,0.9" fill="#a8a813"/>
<polygon points="428.6,1.2 425.2,0.5 457.5,-35.7 486.7,-68.6 513.3,-98.5 518.5,-100.5 521.8,-98.8 495.6,-68.8 466.7,-35.9 435.0,0.4" fill="#cccc18"/>
<polygon points="428.5,1.0 425.6,0.3 457.8,-35.9 487.0,-68.8 513.6,-98.7 518.1,-100.4 521.0,-99.2 494.7,-69.2 465.9,-36.4 434.0,-0.1" fill="#eaea1b"/>
<polygon points="428.5,0.7 426.0,0.2 458.2,-36.1 487.4,-68.9 514.0,-98.9 517.8,-100.2 520.2,-99.6 493.8,-69.7 464.9,-36.9 433.0,-0.6" fill="#ffff1e"/>
<polygon points="439.0,6.5 432.9,7.4 465.0,-29.5 494.1,-62.9 520.6,-93.3 526.6,-94.8 532.4,-92.6 506.5,-62.2 478.0,-28.7 446.5,8.3" fill="#474708"/>
<polygon points="438.8,6.5 433.2,7.2 465.3,-29.6 494.4,-63.0 520.9,-93.4 526.4,-94.8 531.6,-93.1 505.7,-62.6 477.1,-29.1 445.6,7.8" fill="#7a7a0e"/>
<polygon points="438.0,7.1 433.6,7.1 465.6,-29.8 494.7,-63.2 521.2,-93.6 526.6,-95.3 530.9,-93.5 504.8,-63.1 476.2,-29.6 444.7,7.3" fill="#a8a813"/>
<polygon points="437.3,7.6 433.9,6.9 466.0,-29.9 495.0,-63.3 521.5,-93.7 526.7,-95.7 530.0,-93.9 504.0,-63.5 475.3,-30.1 443.7,6.8" fill="#cccc18"/>
<polygon points="437.2,7.4 434.2,6.8 466.3,-30.1 495.3,-63.5 521.8,-93.9 526.3,-95.6 529.2,-94.4 503.1,-64.0 474.4,-30.6 442.8,6.3" fill="#eaea1b"/>
<polygon points="437.2,7.2 434.6,6.6 466.7,-30.3 495.7,-63.7 522.1,-94.1 526.0,-95.4 528.4,-94.8 502.2,-64.4 473.5,-31.1 441.8,5.8" fill="#ffff1e"/>
<polygon points="447.9,13.1 441.7,13.9 473.6,-23.6 502.5,-57.5 528.8,-88.4 534.9,-89.9 540.8,-87.7 515.0,-56.8 486.7,-22.8 455.4,14.8" fill="#474708"/>
<polygon points="447.7,13.1 442.0,13.8 473.9,-23.7 502.8,-57.7 529.1,-88.5 534.7,-89.9 540.0,-88.2 514.2,-57.2 485.8,-23.2 454.5,14.3" fill="#7a7a0e"/>
<polygon points="446.9,13.7 442.4,13.6 474.3,-23.9 503.2,-57.8 529.4,-88.7 534.9,-90.4 539.2,-88.6 513.4,-57.7 484.9,-23.7 453.6,13.8" fill="#a8a813"/>
<polygon points="446.2,14.2 442.7,13.5 474.6,-24.0 503.5,-58.0 529.7,-88.8 534.9,-90.8 538.4,-89.0 512.5,-58.1 484.0,-24.2 452.6,13.3" fill="#cccc18"/>
<polygon points="446.1,14.0 443.0,13.3 474.9,-24.2 503.8,-58.1 530.0,-89.0 534.6,-90.7 537.6,-89.5 511.7,-58.6 483.1,-24.6 451.7,12.8" fill="#eaea1b"/>
<polygon points="446.0,13.7 443.4,13.1 475.3,-24.4 504.1,-58.3 530.4,-89.2 534.3,-90.5 536.7,-89.9 510.7,-59.1 482.2,-25.2 450.7,12.3" fill="#ffff1e"/>
<polygon points="456.9,19.7 450.6,20.6 482.4,-17.6 511.1,-52.1 537.2,-83.4 543.3,-85.0 549.3,-82.7 523.7,-51.3 495.6,-16.8 464.5,21.5" fill="#474708"/>
<polygon points="456.7,19.7 451.0,20.4 482.7,-17.7 511.4,-52.2 537.5,-83.6 543.1,-85.0 548.5,-83.2 522.9,-51.8 494.7,-17.2 463.6,21.0" fill="#7a7a0e"/>
<polygon points="455.9,20.3 451.3,20.2 483.0,-17.9 511.7,-52.4 537.8,-83.7 543.3,-85.5 547.7,-83.6 522.0,-52.2 493.8,-17.7 462.6,20.5" fill="#a8a813"/>
<polygon points="455.2,20.8 451.6,20.1 483.4,-18.0 512.0,-52.5 538.1,-83.9 543.4,-85.9 546.8,-84.1 521.2,-52.7 492.9,-18.2 461.7,20.0" fill="#cccc18"/>
<polygon points="455.1,20.6 452.0,19.9 483.7,-18.2 512.4,-52.7 538.4,-84.0 543.0,-85.7 546.0,-84.5 520.3,-53.1 492.0,-18.6 460.7,19.5" fill="#eaea1b"/>
<polygon points="455.0,20.4 452.4,19.7 484.1,-18.4 512.7,-52.9 538.8,-84.2 542.7,-85.6 545.2,-85.0 519.4,-53.6 491.0,-19.2 459.7,19.0" fill="#ffff1e"/>
<polygon points="466.1,26.5 459.7,27.3 491.3,-11.5 519.8,-46.5 545.7,-78.4 551.9,-79.9 557.9,-77.7 532.5,-45.8 504.6,-10.6 473.7,28.2" fill="#474708"/>
<polygon points="465.9,26.5 460.1,27.2 491.6,-11.6 520.1,-46.7 546.0,-78.5 551.7,-79.9 557.1,-78.1 531.7,-46.2 503.7,-11.1 472.8,27.7" fill="#7a7a0e"/>
<polygon points="465.1,27.1 460.4,27.0 492.0,-11.8 520.4,-46.8 546.3,-78.7 551.8,-80.4 556.3,-78.6 530.8,-46.7 502.8,-11.6 471.8,27.3" fill="#a8a813"/>
<polygon points="464.4,27.6 460.8,26.9 492.3,-11.9 520.8,-47.0 546.6,-78.8 551.9,-80.8 555.4,-79.0 529.9,-47.1 501.9,-12.1 470.9,26.7" fill="#cccc18"/>
<polygon points="464.3,27.4 461.1,26.7 492.6,-12.1 521.1,-47.1 546.9,-79.0 551.6,-80.7 554.6,-79.4 529.1,-47.6 501.0,-12.5 469.9,26.3" fill="#eaea1b"/>
<polygon points="464.2,27.2 461.5,26.5 493.0,-12.3 521.5,-47.3 547.3,-79.1 551.2,-80.5 553.7,-79.9 528.2,-48.1 500.0,-13.1 468.9,25.7" fill="#ffff1e"/>
<polygon points="475.4,33.4 469.0,34.2 500.3,-5.3 528.6,-40.9 554.3,-73.2 560.6,-74.8 566.6,-72.6 541.5,-40.1 513.8,-4.4 483.1,35.1" fill="#474708"/>
<polygon points="475.2,33.4 469.3,34.1 500.7,-5.4 529.0,-41.1 554.7,-73.4 560.3,-74.8 565.8,-73.0 540.6,-40.6 512.9,-4.9 482.2,34.6" fill="#7a7a0e"/>
<polygon points="474.4,34.0 469.7,33.9 501.0,-5.6 529.3,-41.2 555.0,-73.6 560.5,-75.3 565.0,-73.4 539.8,-41.1 512.0,-5.4 481.2,34.1" fill="#a8a813"/>
<polygon points="473.7,34.5 470.0,33.7 501.3,-5.7 529.6,-41.4 555.3,-73.7 560.6,-75.7 564.1,-73.9 538.9,-41.5 511.1,-5.9 480.2,33.6" fill="#cccc18"/>
<polygon points="473.6,34.3 470.4,33.6 501.7,-5.9 529.9,-41.5 555.6,-73.8 560.2,-75.6 563.3,-74.3 538.0,-42.0 510.2,-6.3 479.3,33.1" fill="#eaea1b"/>
<polygon points="473.5,34.1 470.8,33.4 502.1,-6.1 530.3,-41.7 555.9,-74.0 559.9,-75.4 562.4,-74.8 537.1,-42.5 509.2,-6.8 478.3,32.6" fill="#ffff1e"/>
<polygon points="484.9,40.4 478.4,41.2 509.5,1.1 537.6,-35.2 563.1,-68.0 569.4,-69.6 575.5,-67.3 550.6,-34.4 523.1,1.9 492.7,42.2" fill="#474708"/>
<polygon points="484.7,40.4 478.8,41.1 509.9,0.9 538.0,-35.3 563.4,-68.2 569.2,-69.6 574.7,-67.8 549.7,-34.9 522.2,1.4 491.7,41.7" fill="#7a7a0e"/>
<polygon points="483.9,41.0 479.1,40.9 510.2,0.7 538.3,-35.5 563.7,-68.4 569.3,-70.1 573.8,-68.2 548.9,-35.3 521.3,0.9 490.8,41.2" fill="#a8a813"/>
<polygon points="483.2,41.6 479.5,40.7 510.6,0.6 538.6,-35.6 564.0,-68.5 569.4,-70.6 573.0,-68.7 548.0,-35.8 520.4,0.5 489.8,40.6" fill="#cccc18"/>
<polygon points="483.1,41.3 479.8,40.6 510.9,0.4 538.9,-35.8 564.4,-68.6 569.1,-70.4 572.2,-69.1 547.1,-36.3 519.5,-0.0 488.8,40.1" fill="#eaea1b"/>
<polygon points="483.0,41.1 480.3,40.4 511.3,0.2 539.3,-36.0 564.7,-68.8 568.7,-70.3 571.3,-69.6 546.2,-36.8 518.5,-0.5 487.8,39.6" fill="#ffff1e"/>
<polygon points="494.6,47.5 488.0,48.3 518.9,7.5 546.8,-29.4 572.0,-62.8 578.3,-64.3 584.5,-62.0 559.8,-28.6 532.6,8.3 502.4,49.3" fill="#474708"/>
<polygon points="494.4,47.5 488.4,48.2 519.3,7.3 547.1,-29.5 572.3,-62.9 578.1,-64.4 583.7,-62.5 559.0,-29.1 531.7,7.9 501.5,48.8" fill="#7a7a0e"/>
<polygon points="493.6,48.2 488.7,48.0 519.6,7.2 547.4,-29.7 572.7,-63.1 578.3,-64.9 582.8,-62.9 558.1,-29.5 530.8,7.4 500.5,48.3" fill="#a8a813"/>
<polygon points="492.9,48.7 489.1,47.9 519.9,7.0 547.7,-29.8 573.0,-63.2 578.3,-65.3 582.0,-63.4 557.2,-30.0 529.8,6.9 499.5,47.8" fill="#cccc18"/>
<polygon points="492.8,48.5 489.4,47.7 520.3,6.8 548.1,-30.0 573.3,-63.4 578.0,-65.2 581.2,-63.8 556.3,-30.5 528.9,6.4 498.5,47.3" fill="#eaea1b"/>
<polygon points="492.7,48.2 489.9,47.5 520.7,6.6 548.5,-30.2 573.7,-63.6 577.6,-65.0 580.3,-64.3 555.4,-31.0 527.9,5.9 497.5,46.7" fill="#ffff1e"/>
<polygon points="504.5,54.8 497.8,55.6 528.4,14.0 556.1,-23.5 581.1,-57.4 587.4,-59.0 593.6,-56.7 569.2,-22.7 542.3,14.9 512.4,56.6" fill="#474708"/>
<polygon points="504.2,54.8 498.2,55.4 528.8,13.8 556.4,-23.6 581.4,-57.6 587.2,-59.0 592.8,-57.1 568.3,-23.1 541.3,14.4 511.4,56.1" fill="#7a7a0e"/>
<polygon points="503.4,55.5 498.5,55.3 529.1,13.7 556.7,-23.8 581.7,-57.7 587.4,-59.5 592.0,-57.6 567.5,-23.6 540.4,13.9 510.4,55.6" fill="#a8a813"/>
<polygon points="502.7,56.0 498.9,55.1 529.5,13.5 557.0,-23.9 582.0,-57.9 587.4,-60.0 591.1,-58.0 566.6,-24.1 539.5,13.4 509.4,55.0" fill="#cccc18"/>
<polygon points="502.6,55.8 499.2,55.0 529.8,13.4 557.4,-24.1 582.3,-58.0 587.1,-59.8 590.3,-58.5 565.7,-24.6 538.6,12.9 508.4,54.5" fill="#eaea1b"/>
<polygon points="502.5,55.5 499.7,54.8 530.2,13.2 557.8,-24.3 582.7,-58.2 586.7,-59.7 589.4,-59.0 564.8,-25.1 537.6,12.4 507.4,54.0" fill="#ffff1e"/>
<polygon points="514.5,62.2 507.7,63.0 538.1,20.6 565.5,-17.5 590.2,-52.0 596.7,-53.6 602.9,-51.2 578.8,-16.7 552.1,21.5 522.4,64.0" fill="#474708"/>
<polygon points="514.2,62.2 508.1,62.8 538.5,20.5 565.8,-17.6 590.6,-52.1 596.4,-53.6 602.1,-51.7 577.9,-17.1 551.2,21.0 521.5,63.5" fill="#7a7a0e"/>
<polygon points="513.5,62.9 508.5,62.7 538.8,20.3 566.2,-17.8 590.9,-52.3 596.6,-54.1 601.2,-52.1 577.0,-17.6 550.2,20.6 520.5,63.0" fill="#a8a813"/>
<polygon points="512.8,63.4 508.8,62.5 539.2,20.2 566.5,-17.9 591.2,-52.4 596.6,-54.5 600.4,-52.6 576.1,-18.1 549.3,20.1 519.5,62.4" fill="#cccc18"/>
<polygon points="512.7,63.2 509.2,62.3 539.5,20.0 566.8,-18.1 591.5,-52.6 596.3,-54.4 599.5,-53.0 575.2,-18.6 548.4,19.6 518.5,61.9" fill="#eaea1b"/>
<polygon points="512.6,62.9 509.6,62.1 540.0,19.8 567.2,-18.3 591.9,-52.7 595.9,-54.2 598.6,-53.5 574.3,-19.1 547.3,19.0 517.4,61.4" fill="#ffff1e"/>
<polygon points="524.7,69.7 517.9,70.5 548.0,27.4 575.1,-11.4 599.6,-46.4 606.1,-48.0 612.3,-45.7 588.5,-10.5 562.1,28.3 532.7,71.5" fill="#474708"/>
<polygon points="524.5,69.7 518.3,70.4 548.4,27.2 575.4,-11.5 599.9,-46.6 605.8,-48.0 611.5,-46.1 587.6,-11.0 561.2,27.8 531.7,71.0" fill="#7a7a0e"/>
<polygon points="523.7,70.4 518.6,70.2 548.7,27.1 575.8,-11.7 600.2,-46.7 606.0,-48.6 610.7,-46.6 586.7,-11.5 560.2,27.3 530.7,70.5" fill="#a8a813"/>
<polygon points="523.0,71.0 519.0,70.0 549.1,26.9 576.1,-11.8 600.5,-46.9 606.0,-49.0 609.8,-47.0 585.8,-12.0 559.3,26.8 529.7,70.0" fill="#cccc18"/>
<polygon points="522.9,70.7 519.4,69.9 549.4,26.8 576.4,-12.0 600.9,-47.0 605.7,-48.9 609.0,-47.5 584.9,-12.5 558.3,26.3 528.7,69.5" fill="#eaea1b"/>
<polygon points="522.8,70.5 519.8,69.7 549.8,26.6 576.8,-12.2 601.3,-47.2 605.3,-48.7 608.1,-48.0 584.0,-13.0 557.3,25.8 527.7,68.9" fill="#ffff1e"/>
<polygon points="535.1,77.4 528.2,78.2 558.0,34.3 584.8,-5.2 609.0,-40.8 615.6,-42.4 621.9,-40.0 598.4,-4.3 572.3,35.2 543.2,79.2" fill="#474708"/>
<polygon points="534.9,77.4 528.6,78.0 558.4,34.1 585.2,-5.3 609.4,-41.0 615.4,-42.4 621.1,-40.5 597.5,-4.8 571.3,34.7 542.2,78.7" fill="#7a7a0e"/>
<polygon points="534.1,78.1 529.0,77.9 558.8,34.0 585.5,-5.5 609.7,-41.1 615.5,-43.0 620.2,-41.0 596.6,-5.3 570.4,34.2 541.2,78.2" fill="#a8a813"/>
<polygon points="533.4,78.7 529.3,77.7 559.1,33.8 585.9,-5.6 610.0,-41.3 615.5,-43.4 619.4,-41.4 595.7,-5.8 569.4,33.7 540.2,77.6" fill="#cccc18"/>
<polygon points="533.3,78.4 529.7,77.5 559.5,33.6 586.2,-5.8 610.4,-41.4 615.2,-43.3 618.5,-41.9 594.8,-6.2 568.5,33.2 539.2,77.1" fill="#eaea1b"/>
<polygon points="533.2,78.2 530.2,77.3 559.9,33.4 586.6,-6.0 610.7,-41.6 614.8,-43.1 617.6,-42.4 593.8,-6.8 567.4,32.7 538.1,76.6" fill="#ffff1e"/>
<polygon points="545.7,85.2 538.7,86.0 568.2,41.3 594.7,1.1 618.7,-35.1 625.3,-36.7 631.7,-34.3 608.4,2.0 582.6,42.2 553.9,87.0" fill="#474708"/>
<polygon points="545.5,85.2 539.1,85.8 568.6,41.1 595.1,1.0 619.0,-35.2 625.0,-36.7 630.8,-34.8 607.5,1.5 581.7,41.7 552.9,86.5" fill="#7a7a0e"/>
<polygon points="544.7,85.9 539.5,85.7 569.0,41.0 595.5,0.8 619.3,-35.4 625.2,-37.3 630.0,-35.2 606.6,1.0 580.7,41.2 551.9,86.0" fill="#a8a813"/>
<polygon points="544.0,86.5 539.9,85.5 569.3,40.8 595.8,0.7 619.7,-35.5 625.2,-37.7 629.1,-35.7 605.7,0.5 579.7,40.7 550.8,85.5" fill="#cccc18"/>
<polygon points="543.9,86.3 540.2,85.3 569.7,40.6 596.1,0.5 620.0,-35.7 624.9,-37.6 628.2,-36.2 604.8,0.1 578.8,40.2 549.8,84.9" fill="#eaea1b"/>
<polygon points="543.8,86.0 540.7,85.1 570.1,40.4 596.6,0.3 620.4,-35.9 624.5,-37.4 627.3,-36.7 603.8,-0.5 577.8,39.7 548.7,84.4" fill="#ffff1e"/>
<polygon points="556.5,93.2 549.4,94.0 578.6,48.4 604.8,7.6 628.5,-29.3 635.1,-30.9 641.6,-28.5 618.6,8.4 593.2,49.4 564.7,95.0" fill="#474708"/>
<polygon points="556.3,93.2 549.8,93.8 579.0,48.2 605.2,7.4 628.8,-29.4 634.9,-30.9 640.7,-29.0 617.7,7.9 592.2,48.9 563.7,94.5" fill="#7a7a0e"/>
<polygon points="555.5,93.9 550.2,93.6 579.4,48.1 605.5,7.2 629.1,-29.6 635.0,-31.5 639.9,-29.4 616.8,7.5 591.2,48.4 562.7,94.0" fill="#a8a813"/>
<polygon points="554.8,94.5 550.6,93.5 579.7,47.9 605.9,7.1 629.5,-29.7 635.0,-32.0 639.0,-29.9 615.9,7.0 590.3,47.8 561.7,93.4" fill="#cccc18"/>
<polygon points="554.7,94.3 551.0,93.3 580.1,47.8 606.2,6.9 629.8,-29.9 634.7,-31.8 638.1,-30.4 615.0,6.5 589.3,47.3 560.7,92.9" fill="#eaea1b"/>
<polygon points="554.6,94.0 551.4,93.1 580.6,47.6 606.7,6.7 630.2,-30.1 634.3,-31.6 637.2,-30.9 614.0,6.0 588.3,46.8 559.6,92.3" fill="#ffff1e"/>
<polygon points="567.6,101.3 560.4,102.1 589.2,55.7 615.1,14.1 638.4,-23.4 645.1,-25.0 651.6,-22.6 629.0,15.0 603.9,56.6 575.8,103.2" fill="#474708"/>
<polygon points="567.3,101.3 560.8,101.9 589.6,55.5 615.5,13.9 638.7,-23.5 644.9,-25.0 650.8,-23.0 628.1,14.5 602.9,56.1 574.8,102.6" fill="#7a7a0e"/>
<polygon points="566.5,102.1 561.2,101.7 590.0,55.3 615.8,13.8 639.1,-23.7 645.0,-25.6 649.9,-23.5 627.2,14.0 602.0,55.6 573.8,102.1" fill="#a8a813"/>
<polygon points="565.8,102.7 561.5,101.6 590.3,55.2 616.2,13.6 639.4,-23.8 645.0,-26.1 649.0,-24.0 626.3,13.5 601.0,55.1 572.7,101.6" fill="#cccc18"/>
<polygon points="565.7,102.4 561.9,101.4 590.7,55.0 616.5,13.4 639.8,-24.0 644.7,-25.9 648.2,-24.5 625.3,13.0 600.0,54.6 571.7,101.0" fill="#eaea1b"/>
<polygon points="565.6,102.1 562.4,101.2 591.2,54.8 616.9,13.3 640.2,-24.2 644.3,-25.7 647.2,-25.0 624.4,12.5 599.0,54.0 570.6,100.5" fill="#ffff1e"/>
<polygon points="578.8,109.6 571.5,110.4 600.0,63.0 625.5,20.7 648.5,-17.4 655.3,-19.0 661.9,-16.6 639.6,21.6 614.8,64.0 587.1,111.5" fill="#474708"/>
<polygon points="578.5,109.6 571.9,110.2 600.4,62.9 625.9,20.6 648.9,-17.5 655.1,-19.0 661.0,-17.0 638.7,21.1 613.8,63.5 586.1,110.9" fill="#7a7a0e"/>
<polygon points="577.7,110.4 572.3,110.0 600.8,62.7 626.3,20.4 649.2,-17.7 655.2,-19.6 660.1,-17.5 637.7,20.6 612.9,63.0 585.1,110.4" fill="#a8a813"/>
<polygon points="577.1,111.0 572.7,109.9 601.1,62.6 626.6,20.2 649.5,-17.8 655.2,-20.1 659.2,-18.0 636.8,20.1 611.9,62.5 584.0,109.8" fill="#cccc18"/>
<polygon points="576.9,110.7 573.1,109.7 601.5,62.4 627.0,20.1 649.9,-18.0 654.8,-20.0 658.4,-18.5 635.9,19.6 610.9,62.0 583.0,109.3" fill="#eaea1b"/>
<polygon points="576.8,110.4 573.6,109.5 602.0,62.2 627.4,19.9 650.3,-18.2 654.5,-19.8 657.4,-19.0 634.9,19.1 609.8,61.4 581.9,108.7" fill="#ffff1e"/>
<polygon points="590.2,118.0 582.8,118.8 611.0,70.6 636.2,27.5 658.8,-11.3 665.6,-12.9 672.3,-10.5 650.3,28.4 625.9,71.6 598.6,119.9" fill="#474708"/>
<polygon points="589.9,118.0 583.3,118.6 611.4,70.4 636.5,27.3 659.1,-11.4 665.4,-13.0 671.4,-10.9 649.4,27.9 625.0,71.1 597.6,119.4" fill="#7a7a0e"/>
<polygon points="589.2,118.8 583.7,118.4 611.8,70.2 636.9,27.1 659.5,-11.6 665.5,-13.6 670.5,-11.4 648.5,27.4 624.0,70.5 596.6,118.8" fill="#a8a813"/>
<polygon points="588.5,119.5 584.0,118.3 612.1,70.1 637.2,27.0 659.8,-11.7 665.5,-14.0 669.6,-11.9 647.5,26.9 623.0,70.0 595.5,118.3" fill="#cccc18"/>
<polygon points="588.4,119.2 584.5,118.1 612.5,69.9 637.6,26.8 660.2,-11.9 665.2,-13.9 668.7,-12.4 646.6,26.4 622.0,69.5 594.5,117.7" fill="#eaea1b"/>
<polygon points="588.2,118.9 584.9,117.9 613.0,69.7 638.0,26.6 660.6,-12.1 664.8,-13.7 667.8,-12.9 645.6,25.9 620.9,69.0 593.3,117.2" fill="#ffff1e"/>
<polygon points="601.9,126.7 594.4,127.4 622.2,78.2 647.0,34.3 669.2,-5.1 676.2,-6.8 682.8,-4.2 661.3,35.3 637.3,79.3 610.4,128.5" fill="#474708"/>
<polygon points="601.6,126.6 594.8,127.2 622.6,78.1 647.3,34.2 669.6,-5.2 675.9,-6.8 682.0,-4.7 660.3,34.8 636.3,78.7 609.3,128.0" fill="#7a7a0e"/>
<polygon points="600.9,127.4 595.3,127.0 623.0,77.9 647.7,34.0 669.9,-5.4 676.0,-7.4 681.1,-5.2 659.4,34.3 635.3,78.2 608.3,127.4" fill="#a8a813"/>
<polygon points="600.2,128.1 595.6,126.9 623.3,77.7 648.1,33.9 670.3,-5.6 676.0,-7.9 680.2,-5.7 658.5,33.8 634.3,77.7 607.2,126.9" fill="#cccc18"/>
<polygon points="600.0,127.8 596.1,126.7 623.7,77.6 648.4,33.7 670.6,-5.7 675.7,-7.7 679.3,-6.2 657.5,33.3 633.3,77.2 606.2,126.4" fill="#eaea1b"/>
<polygon points="599.9,127.5 596.5,126.5 624.2,77.4 648.9,33.5 671.1,-5.9 675.3,-7.5 678.3,-6.7 656.5,32.7 632.2,76.6 605.0,125.8" fill="#ffff1e"/>
<polygon points="613.8,135.4 606.2,136.2 633.6,86.0 658.0,41.3 679.9,1.2 686.8,-0.5 693.6,2.1 672.4,42.3 648.8,87.1 622.4,137.3" fill="#474708"/>
<polygon points="613.5,135.4 606.7,136.0 634.0,85.9 658.3,41.2 680.2,1.1 686.6,-0.5 692.7,1.6 671.5,41.8 647.8,86.6 621.3,136.8" fill="#7a7a0e"/>
<polygon points="612.8,136.2 607.1,135.8 634.4,85.7 658.7,41.0 680.6,0.9 686.7,-1.1 691.8,1.1 670.5,41.3 646.8,86.0 620.3,136.2" fill="#a8a813"/>
<polygon points="612.1,136.9 607.5,135.7 634.7,85.5 659.1,40.9 680.9,0.8 686.7,-1.6 690.9,0.6 669.6,40.8 645.8,85.5 619.2,135.7" fill="#cccc18"/>
<polygon points="611.9,136.6 607.9,135.5 635.1,85.4 659.5,40.7 681.3,0.6 686.3,-1.4 690.0,0.1 668.6,40.3 644.8,85.0 618.1,135.1" fill="#eaea1b"/>
<polygon points="611.8,136.3 608.4,135.3 635.6,85.2 659.9,40.5 681.7,0.4 686.0,-1.2 689.1,-0.4 667.6,39.7 643.7,84.4 617.0,134.5" fill="#ffff1e"/>
<polygon points="626.0,144.4 618.3,145.1 645.2,94.0 669.2,48.5 690.7,7.6 697.7,5.9 704.5,8.5 683.8,49.4 660.6,95.1 634.6,146.3" fill="#474708"/>
<polygon points="625.7,144.4 618.7,144.9 645.6,93.8 669.5,48.3 691.0,7.5 697.5,5.9 703.6,8.0 682.8,48.9 659.6,94.5 633.5,145.7" fill="#7a7a0e"/>
<polygon points="624.9,145.2 619.1,144.8 646.0,93.7 669.9,48.1 691.4,7.3 697.5,5.3 702.7,7.5 681.9,48.4 658.6,94.0 632.5,145.2" fill="#a8a813"/>
<polygon points="624.3,145.9 619.5,144.6 646.4,93.5 670.3,48.0 691.7,7.2 697.5,4.8 701.8,7.0 680.9,47.9 657.6,93.5 631.4,144.6" fill="#cccc18"/>
<polygon points="624.1,145.6 620.0,144.4 646.8,93.3 670.7,47.8 692.1,7.0 697.2,5.0 700.9,6.6 680.0,47.4 656.6,92.9 630.3,144.1" fill="#eaea1b"/>
<polygon points="624.0,145.3 620.5,144.2 647.3,93.1 671.1,47.6 692.5,6.8 696.8,5.2 700.0,6.0 678.9,46.8 655.5,92.4 629.2,143.5" fill="#ffff1e"/>
<polygon points="638.4,153.5 630.6,154.2 657.0,102.1 680.6,55.7 701.6,14.2 708.8,12.5 715.6,15.0 695.3,56.7 672.6,103.2 647.1,155.5" fill="#474708"/>
<polygon points="638.1,153.5 631.0,154.1 657.4,101.9 681.0,55.5 702.0,14.0 708.5,12.4 714.7,14.5 694.4,56.2 671.6,102.7 646.0,154.9" fill="#7a7a0e"/>
<polygon points="637.3,154.4 631.4,153.9 657.8,101.8 681.3,55.4 702.4,13.8 708.6,11.8 713.8,14.1 693.4,55.7 670.6,102.1 644.9,154.3" fill="#a8a813"/>
<polygon points="636.7,155.1 631.8,153.7 658.2,101.6 681.7,55.2 702.7,13.7 708.6,11.3 712.9,13.6 692.4,55.2 669.5,101.6 643.8,153.8" fill="#cccc18"/>
<polygon points="636.5,154.8 632.3,153.6 658.6,101.4 682.1,55.1 703.1,13.5 708.2,11.5 712.0,13.1 691.5,54.6 668.5,101.1 642.7,153.2" fill="#eaea1b"/>
<polygon points="636.3,154.5 632.8,153.4 659.1,101.2 682.6,54.9 703.5,13.3 707.9,11.7 711.1,12.6 690.4,54.1 667.4,100.5 641.6,152.6" fill="#ffff1e"/>
<polygon points="651.0,162.9 643.1,163.6 669.1,110.4 692.2,63.1 712.8,20.8 720.0,19.1 727.0,21.7 707.1,64.1 684.8,111.5 659.8,164.8" fill="#474708"/>
<polygon points="650.7,162.9 643.6,163.4 669.5,110.2 692.6,62.9 713.2,20.6 719.8,19.1 726.1,21.2 706.1,63.6 683.8,110.9 658.7,164.2" fill="#7a7a0e"/>
<polygon points="650.0,163.7 644.0,163.2 669.9,110.0 693.0,62.8 713.6,20.5 719.8,18.4 725.1,20.7 705.1,63.1 682.8,110.4 657.6,163.7" fill="#a8a813"/>
<polygon points="649.3,164.4 644.4,163.0 670.3,109.9 693.3,62.6 713.9,20.3 719.8,17.9 724.2,20.2 704.2,62.5 681.7,109.9 656.5,163.1" fill="#cccc18"/>
<polygon points="649.1,164.1 644.8,162.9 670.7,109.7 693.7,62.4 714.3,20.2 719.5,18.1 723.3,19.7 703.2,62.0 680.7,109.3 655.4,162.5" fill="#eaea1b"/>
<polygon points="649.0,163.8 645.4,162.7 671.2,109.5 694.2,62.2 714.8,20.0 719.1,18.3 722.3,19.2 702.2,61.5 679.6,108.8 654.3,161.9" fill="#ffff1e"/>
<polygon points="663.9,172.4 655.9,173.1 681.4,118.8 704.0,70.6 724.2,27.5 731.5,25.8 738.5,28.4 719.0,71.6 697.3,119.9 672.8,174.3" fill="#474708"/>
<polygon points="663.6,172.4 656.4,172.9 681.8,118.6 704.4,70.5 724.6,27.4 731.2,25.8 737.6,28.0 718.1,71.1 696.3,119.4 671.7,173.8" fill="#7a7a0e"/>
<polygon points="662.9,173.3 656.8,172.7 682.2,118.5 704.8,70.3 725.0,27.2 731.3,25.1 736.6,27.5 717.1,70.6 695.2,118.9 670.6,173.2" fill="#a8a813"/>
<polygon points="662.2,174.0 657.2,172.6 682.6,118.3 705.2,70.1 725.3,27.1 731.2,24.6 735.7,27.0 716.1,70.1 694.2,118.3 669.5,172.6" fill="#cccc18"/>
<polygon points="662.1,173.7 657.7,172.4 683.0,118.1 705.6,70.0 725.7,26.9 730.9,24.8 734.8,26.5 715.1,69.6 693.2,117.8 668.4,172.1" fill="#eaea1b"/>
<polygon points="661.9,173.4 658.2,172.2 683.5,117.9 706.0,69.8 726.2,26.7 730.5,25.0 733.8,25.9 714.1,69.0 692.1,117.2 667.2,171.5" fill="#ffff1e"/>
<polygon points="677.1,182.1 669.0,182.8 693.9,127.4 716.0,78.3 735.8,34.4 743.1,32.7 750.2,35.3 731.2,79.3 710.0,128.5 686.1,184.1" fill="#474708"/>
<polygon points="676.8,182.1 669.4,182.6 694.4,127.2 716.4,78.1 736.2,34.2 742.9,32.7 749.3,34.8 730.3,78.8 709.0,128.0 685.0,183.5" fill="#7a7a0e"/>
<polygon points="676.1,183.0 669.9,182.4 694.8,127.1 716.8,77.9 736.6,34.1 742.9,32.0 748.4,34.3 729.3,78.3 707.9,127.5 683.9,182.9" fill="#a8a813"/>
<polygon points="675.4,183.8 670.3,182.3 695.2,126.9 717.2,77.8 736.9,33.9 742.9,31.4 747.4,33.8 728.3,77.7 706.9,126.9 682.7,182.4" fill="#cccc18"/>
<polygon points="675.2,183.5 670.8,182.1 695.6,126.7 717.6,77.6 737.3,33.8 742.5,31.6 746.5,33.3 727.3,77.2 705.8,126.4 681.6,181.8" fill="#eaea1b"/>
<polygon points="675.1,183.1 671.3,181.9 696.1,126.5 718.1,77.4 737.8,33.6 742.2,31.8 745.5,32.8 726.3,76.7 704.7,125.8 680.4,181.2" fill="#ffff1e"/>
<polygon points="690.6,192.1 682.4,192.7 706.7,136.2 728.3,86.1 747.6,41.4 755.0,39.7 762.1,42.3 743.7,87.1 723.0,137.3 699.6,194.0" fill="#474708"/>
<polygon points="690.3,192.0 682.8,192.5 707.2,136.0 728.7,85.9 748.0,41.2 754.7,39.6 761.2,41.8 742.7,86.6 721.9,136.8 698.5,193.4" fill="#7a7a0e"/>
<polygon points="689.6,193.0 683.3,192.4 707.6,135.8 729.1,85.7 748.3,41.1 754.8,39.0 760.3,41.3 741.7,86.1 720.9,136.2 697.4,192.9" fill="#a8a813"/>
<polygon points="688.9,193.7 683.7,192.2 708.0,135.7 729.5,85.6 748.7,40.9 754.7,38.4 759.3,40.8 740.7,85.5 719.8,135.7 696.3,192.3" fill="#cccc18"/>
<polygon points="688.7,193.4 684.1,192.0 708.4,135.5 729.9,85.4 749.1,40.8 754.4,38.6 758.4,40.3 739.7,85.0 718.8,135.1 695.1,191.7" fill="#eaea1b"/>
<polygon points="688.5,193.1 684.7,191.8 708.9,135.3 730.4,85.2 749.6,40.6 754.0,38.8 757.4,39.8 738.7,84.5 717.7,134.5 693.9,191.1" fill="#ffff1e"/>
<polygon points="704.4,202.2 696.0,202.8 719.8,145.1 740.8,94.0 759.6,48.5 767.1,46.8 774.3,49.5 756.3,95.1 736.2,146.3 713.5,204.2" fill="#474708"/>
<polygon points="704.0,202.2 696.5,202.7 720.2,144.9 741.2,93.9 760.0,48.4 766.8,46.8 773.3,49.0 755.3,94.6 735.2,145.7 712.3,203.6" fill="#7a7a0e"/>
<polygon points="703.3,203.1 696.9,202.5 720.6,144.8 741.6,93.7 760.4,48.2 766.8,46.1 772.4,48.5 754.4,94.0 734.1,145.2 711.2,203.0" fill="#a8a813"/>
<polygon points="702.7,203.9 697.4,202.3 721.1,144.6 742.0,93.5 760.7,48.0 766.7,45.5 771.4,48.0 753.3,93.5 733.0,144.6 710.1,202.4" fill="#cccc18"/>
<polygon points="702.5,203.6 697.8,202.1 721.5,144.4 742.4,93.4 761.1,47.9 766.4,45.7 770.5,47.4 752.4,93.0 732.0,144.1 708.9,201.9" fill="#eaea1b"/>
<polygon points="702.3,203.2 698.4,201.9 722.0,144.2 742.9,93.2 761.6,47.7 766.0,45.9 769.5,46.9 751.3,92.4 730.8,143.5 707.7,201.2" fill="#ffff1e"/>
<polygon points="718.4,212.6 709.9,213.2 733.1,154.2 753.6,102.1 771.8,55.8 779.4,54.0 786.6,56.7 769.2,103.2 749.7,155.4 727.6,214.6" fill="#474708"/>
<polygon points="718.1,212.6 710.4,213.0 733.5,154.1 754.0,102.0 772.2,55.6 779.1,54.0 785.7,56.2 768.2,102.7 748.7,154.9 726.5,214.0" fill="#7a7a0e"/>
<polygon points="717.4,213.5 710.9,212.8 734.0,153.9 754.4,101.8 772.6,55.4 779.1,53.3 784.7,55.7 767.2,102.2 747.6,154.3 725.3,213.4" fill="#a8a813"/>
<polygon points="716.7,214.3 711.3,212.7 734.4,153.7 754.8,101.6 773.0,55.3 779.0,52.7 783.8,55.2 766.2,101.6 746.5,153.8 724.2,212.8" fill="#cccc18"/>
<polygon points="716.5,214.0 711.8,212.5 734.8,153.6 755.2,101.5 773.4,55.1 778.7,52.9 782.8,54.7 765.2,101.1 745.4,153.2 723.0,212.2" fill="#eaea1b"/>
<polygon points="716.4,213.6 712.3,212.3 735.4,153.3 755.7,101.3 773.8,54.9 778.3,53.1 781.8,54.2 764.2,100.5 744.3,152.6 721.8,211.6" fill="#ffff1e"/>
<polygon points="732.8,223.2 724.2,223.8 746.7,163.5 766.6,110.4 784.2,63.1 791.9,61.4 799.2,64.1 782.4,111.5 763.5,164.8 742.1,225.2" fill="#474708"/>
<polygon points="732.5,223.2 724.6,223.6 747.1,163.4 767.0,110.2 784.6,63.0 791.6,61.4 798.3,63.6 781.4,111.0 762.4,164.2 740.9,224.6" fill="#7a7a0e"/>
<polygon points="731.8,224.2 725.1,223.4 747.6,163.2 767.4,110.1 785.0,62.8 791.6,60.6 797.3,63.1 780.4,110.4 761.4,163.7 739.8,224.0" fill="#a8a813"/>
<polygon points="731.1,225.0 725.6,223.2 748.0,163.0 767.8,109.9 785.4,62.7 791.5,60.0 796.3,62.6 779.4,109.9 760.3,163.1 738.6,223.4" fill="#cccc18"/>
<polygon points="730.9,224.6 726.0,223.1 748.5,162.9 768.2,109.7 785.8,62.5 791.2,60.2 795.4,62.1 778.4,109.4 759.2,162.5 737.5,222.8" fill="#eaea1b"/>
<polygon points="730.7,224.2 726.6,222.9 749.0,162.7 768.7,109.5 786.3,62.3 790.8,60.5 794.4,61.5 777.3,108.8 758.0,161.9 736.2,222.2" fill="#ffff1e"/>
<polygon points="747.5,234.0 738.7,234.6 760.6,173.1 779.8,118.8 796.9,70.7 804.6,68.9 812.0,71.7 795.8,119.9 777.6,174.3 756.8,236.0" fill="#474708"/>
<polygon points="747.1,234.0 739.2,234.4 761.0,172.9 780.2,118.6 797.3,70.5 804.3,68.9 811.1,71.2 794.8,119.4 776.5,173.7 755.7,235.4" fill="#7a7a0e"/>
<polygon points="746.5,235.0 739.7,234.2 761.5,172.7 780.7,118.5 797.7,70.3 804.3,68.1 810.1,70.6 793.8,118.9 775.4,173.2 754.5,234.8" fill="#a8a813"/>
<polygon points="745.8,235.8 740.1,234.1 761.9,172.5 781.1,118.3 798.1,70.2 804.2,67.5 809.1,70.1 792.7,118.3 774.3,172.6 753.3,234.2" fill="#cccc18"/>
<polygon points="745.6,235.5 740.6,233.9 762.4,172.4 781.5,118.1 798.5,70.0 803.9,67.7 808.2,69.6 791.7,117.8 773.2,172.0 752.2,233.6" fill="#eaea1b"/>
<polygon points="745.4,235.1 741.2,233.7 762.9,172.2 782.0,117.9 799.0,69.8 803.5,68.0 807.2,69.0 790.6,117.2 772.0,171.4 750.9,233.0" fill="#ffff1e"/>
<polygon points="762.5,245.1 753.6,245.6 774.7,182.8 793.3,127.4 809.8,78.3 817.6,76.5 825.1,79.3 809.5,128.6 791.9,184.0 771.9,247.1" fill="#474708"/>
<polygon points="762.2,245.1 754.1,245.5 775.2,182.6 793.7,127.2 810.2,78.2 817.3,76.5 824.1,78.8 808.5,128.0 790.8,183.5 770.8,246.5" fill="#7a7a0e"/>
<polygon points="761.5,246.1 754.6,245.3 775.6,182.4 794.2,127.1 810.6,78.0 817.3,75.8 823.2,78.3 807.5,127.5 789.7,182.9 769.6,245.9" fill="#a8a813"/>
<polygon points="760.8,247.0 755.1,245.1 776.1,182.2 794.6,126.9 811.0,77.8 817.2,75.1 822.2,77.8 806.4,126.9 788.6,182.3 768.4,245.3" fill="#cccc18"/>
<polygon points="760.6,246.6 755.5,244.9 776.5,182.1 795.0,126.7 811.4,77.7 816.8,75.3 821.2,77.3 805.4,126.4 787.5,181.8 767.3,244.7" fill="#eaea1b"/>
<polygon points="760.4,246.2 756.1,244.7 777.1,181.9 795.5,126.5 811.9,77.5 816.5,75.6 820.2,76.7 804.3,125.8 786.4,181.1 766.0,244.1" fill="#ffff1e"/>
<polygon points="777.8,256.4 768.8,256.9 789.2,192.7 807.1,136.2 822.9,86.1 830.8,84.3 838.4,87.2 823.4,137.3 806.6,194.0 787.4,258.4" fill="#474708"/>
<polygon points="777.5,256.4 769.3,256.8 789.7,192.5 807.5,136.0 823.3,85.9 830.5,84.3 837.4,86.6 822.4,136.8 805.5,193.4 786.2,257.8" fill="#7a7a0e"/>
<polygon points="776.8,257.5 769.8,256.6 790.1,192.3 808.0,135.8 823.8,85.8 830.5,83.5 836.4,86.1 821.4,136.2 804.4,192.8 785.0,257.2" fill="#a8a813"/>
<polygon points="776.2,258.3 770.3,256.4 790.6,192.2 808.4,135.7 824.2,85.6 830.4,82.9 835.5,85.6 820.3,135.7 803.3,192.2 783.8,256.6" fill="#cccc18"/>
<polygon points="776.0,258.0 770.8,256.2 791.0,192.0 808.8,135.5 824.6,85.5 830.0,83.1 834.5,85.1 819.3,135.1 802.2,191.7 782.7,256.0" fill="#eaea1b"/>
<polygon points="775.8,257.6 771.4,256.0 791.6,191.8 809.3,135.3 825.1,85.3 829.7,83.3 833.4,84.5 818.2,134.5 801.0,191.1 781.4,255.4" fill="#ffff1e"/>
<polygon points="793.6,268.0 784.4,268.5 804.0,202.8 821.1,145.1 836.3,94.1 844.3,92.2 851.9,95.1 837.7,146.3 821.6,204.1 803.2,270.0" fill="#474708"/>
<polygon points="793.2,268.0 784.9,268.3 804.4,202.6 821.6,144.9 836.7,93.9 844.0,92.2 851.0,94.6 836.6,145.7 820.5,203.6 802.0,269.4" fill="#7a7a0e"/>
<polygon points="792.6,269.1 785.4,268.1 804.9,202.4 822.0,144.8 837.2,93.7 844.0,91.5 850.0,94.1 835.6,145.2 819.4,203.0 800.8,268.8" fill="#a8a813"/>
<polygon points="791.9,270.0 785.9,268.0 805.4,202.3 822.5,144.6 837.6,93.6 843.8,90.8 849.0,93.5 834.5,144.6 818.2,202.4 799.6,268.2" fill="#cccc18"/>
<polygon points="791.7,269.6 786.4,267.8 805.8,202.1 822.9,144.4 838.0,93.4 843.5,91.0 848.0,93.0 833.5,144.1 817.1,201.8 798.4,267.6" fill="#eaea1b"/>
<polygon points="791.5,269.2 787.0,267.6 806.4,201.9 823.4,144.2 838.5,93.2 843.1,91.3 847.0,92.4 832.4,143.5 815.9,201.2 797.1,266.9" fill="#ffff1e"/>
<polygon points="809.6,279.9 800.3,280.3 819.1,213.1 835.5,154.2 850.0,102.2 858.0,100.3 865.7,103.2 852.2,155.4 836.9,214.5 819.4,281.9" fill="#474708"/>
<polygon points="809.3,279.8 800.8,280.2 819.5,213.0 835.9,154.1 850.4,102.0 857.8,100.3 864.8,102.7 851.2,154.9 835.8,213.9 818.2,281.3" fill="#7a7a0e"/>
<polygon points="808.6,281.0 801.4,280.0 820.0,212.8 836.4,153.9 850.8,101.8 857.7,99.5 863.8,102.2 850.1,154.3 834.6,213.3 817.0,280.7" fill="#a8a813"/>
<polygon points="808.0,281.9 801.8,279.8 820.5,212.6 836.8,153.7 851.2,101.7 857.5,98.9 862.8,101.6 849.0,153.8 833.5,212.7 815.8,280.1" fill="#cccc18"/>
<polygon points="807.8,281.5 802.4,279.6 821.0,212.4 837.3,153.5 851.7,101.5 857.2,99.1 861.8,101.1 848.0,153.2 832.4,212.2 814.6,279.4" fill="#eaea1b"/>
<polygon points="807.5,281.1 803.0,279.4 821.5,212.2 837.8,153.3 852.2,101.3 856.8,99.3 860.7,100.5 846.9,152.6 831.2,211.5 813.3,278.8" fill="#ffff1e"/>
<polygon points="826.1,292.0 816.6,292.4 834.5,223.7 850.1,163.5 863.9,110.4 872.0,108.6 879.8,111.5 867.0,164.8 852.5,225.1 835.9,294.0" fill="#474708"/>
<polygon points="825.7,292.0 817.2,292.3 835.0,223.5 850.6,163.4 864.3,110.2 871.8,108.6 878.8,111.0 866.0,164.2 851.4,224.5 834.7,293.4" fill="#7a7a0e"/>
<polygon points="825.1,293.1 817.7,292.1 835.5,223.4 851.0,163.2 864.8,110.1 871.7,107.8 877.9,110.5 864.9,163.6 850.3,223.9 833.5,292.8" fill="#a8a813"/>
<polygon points="824.5,294.0 818.2,291.9 835.9,223.2 851.5,163.0 865.2,109.9 871.5,107.1 876.8,109.9 863.8,163.1 849.1,223.3 832.3,292.2" fill="#cccc18"/>
<polygon points="824.2,293.7 818.7,291.7 836.4,223.0 851.9,162.8 865.6,109.7 871.2,107.3 875.9,109.4 862.8,162.5 848.0,222.7 831.1,291.6" fill="#eaea1b"/>
<polygon points="824.0,293.2 819.3,291.5 837.0,222.8 852.5,162.6 866.1,109.5 870.8,107.6 874.8,108.8 861.6,161.9 846.8,222.1 829.8,290.9" fill="#ffff1e"/>
<polygon points="842.9,304.4 833.3,304.8 850.2,234.5 865.0,173.0 878.1,118.8 886.3,117.0 894.2,120.0 882.2,174.3 868.5,235.9 852.9,306.5" fill="#474708"/>
<polygon points="842.6,304.4 833.9,304.7 850.7,234.3 865.5,172.9 878.5,118.7 886.0,117.0 893.2,119.4 881.1,173.7 867.4,235.3 851.7,305.9" fill="#7a7a0e"/>
<polygon points="842.0,305.6 834.4,304.5 851.2,234.2 866.0,172.7 879.0,118.5 885.9,116.1 892.2,118.9 880.0,173.2 866.2,234.8 850.4,305.2" fill="#a8a813"/>
<polygon points="841.3,306.5 834.9,304.3 851.7,234.0 866.4,172.5 879.4,118.3 885.8,115.5 891.2,118.3 878.9,172.6 865.1,234.1 849.2,304.6" fill="#cccc18"/>
<polygon points="841.1,306.1 835.4,304.1 852.2,233.8 866.9,172.3 879.8,118.2 885.4,115.7 890.2,117.8 877.9,172.0 863.9,233.6 848.0,304.0" fill="#eaea1b"/>
<polygon points="840.8,305.7 836.1,303.9 852.8,233.6 867.4,172.1 880.3,118.0 885.1,115.9 889.1,117.2 876.7,171.4 862.7,232.9 846.6,303.3" fill="#ffff1e"/>
<polygon points="860.2,317.2 850.4,317.5 866.4,245.6 880.3,182.7 892.5,127.4 900.9,125.6 908.8,128.6 897.6,184.0 884.8,247.0 870.2,319.2" fill="#474708"/>
<polygon points="859.8,317.1 851.0,317.4 866.9,245.4 880.8,182.6 893.0,127.2 900.6,125.5 907.8,128.0 896.5,183.4 883.7,246.4 869.0,318.6" fill="#7a7a0e"/>
<polygon points="859.2,318.3 851.5,317.2 867.4,245.2 881.2,182.4 893.4,127.1 900.5,124.7 906.8,127.5 895.5,182.9 882.6,245.8 867.8,318.0" fill="#a8a813"/>
<polygon points="858.6,319.3 852.0,317.0 867.9,245.0 881.7,182.2 893.9,126.9 900.3,124.0 905.8,126.9 894.4,182.3 881.4,245.2 866.5,317.3" fill="#cccc18"/>
<polygon points="858.3,318.9 852.6,316.8 868.4,244.9 882.2,182.0 894.3,126.7 900.0,124.2 904.8,126.4 893.3,181.7 880.2,244.6 865.3,316.7" fill="#eaea1b"/>
<polygon points="858.1,318.4 853.2,316.6 869.0,244.6 882.7,181.8 894.8,126.5 899.6,124.5 903.7,125.8 892.1,181.1 879.0,244.0 863.9,316.0" fill="#ffff1e"/>
<polygon points="877.9,330.2 867.9,330.6 882.9,256.8 895.9,192.6 907.3,136.2 915.7,134.3 923.8,137.3 913.4,193.9 901.6,258.3 888.0,332.3" fill="#474708"/>
<polygon points="877.5,330.2 868.5,330.4 883.4,256.7 896.3,192.5 907.7,136.0 915.4,134.3 922.8,136.8 912.3,193.4 900.4,257.7 886.8,331.6" fill="#7a7a0e"/>
<polygon points="876.9,331.4 869.0,330.2 883.9,256.5 896.8,192.3 908.2,135.8 915.3,133.4 921.7,136.2 911.2,192.8 899.3,257.1 885.5,331.0" fill="#a8a813"/>
<polygon points="876.3,332.4 869.5,330.0 884.4,256.3 897.3,192.1 908.6,135.7 915.1,132.7 920.7,135.7 910.1,192.2 898.1,256.5 884.2,330.4" fill="#cccc18"/>
<polygon points="876.0,332.0 870.1,329.8 884.9,256.1 897.8,191.9 909.1,135.5 914.8,133.0 919.7,135.1 909.0,191.6 896.9,255.9 883.0,329.7" fill="#eaea1b"/>
<polygon points="875.8,331.5 870.8,329.6 885.5,255.9 898.3,191.7 909.6,135.3 914.4,133.2 918.6,134.6 907.9,191.0 895.7,255.3 881.7,329.0" fill="#ffff1e"/>
<polygon points="896.0,343.5 885.9,343.9 899.7,268.4 911.8,202.7 922.3,145.1 930.9,143.2 939.0,146.3 929.5,204.1 918.7,269.9 906.2,345.6" fill="#474708"/>
<polygon points="895.6,343.5 886.4,343.7 900.2,268.2 912.3,202.6 922.8,144.9 930.6,143.2 938.0,145.7 928.4,203.5 917.5,269.3 905.0,345.0" fill="#7a7a0e"/>
<polygon points="895.0,344.8 887.0,343.5 900.8,268.0 912.7,202.4 923.3,144.8 930.4,142.3 937.0,145.2 927.3,202.9 916.3,268.7 903.7,344.4" fill="#a8a813"/>
<polygon points="894.4,345.8 887.5,343.4 901.3,267.9 913.2,202.2 923.7,144.6 930.2,141.6 935.9,144.6 926.2,202.3 915.1,268.1 902.4,343.7" fill="#cccc18"/>
<polygon points="894.1,345.4 888.1,343.2 901.8,267.7 913.7,202.1 924.2,144.4 929.9,141.8 934.9,144.1 925.1,201.8 914.0,267.5 901.2,343.1" fill="#eaea1b"/>
<polygon points="893.9,344.9 888.7,343.0 902.4,267.5 914.3,201.8 924.7,144.2 929.5,142.1 933.8,143.5 923.9,201.1 912.7,266.8 899.8,342.4" fill="#ffff1e"/>
<polygon points="914.5,357.2 904.3,357.5 917.0,280.2 928.0,213.1 937.7,154.2 946.3,152.3 954.5,155.4 946.0,214.4 936.2,281.8 924.9,359.3" fill="#474708"/>
<polygon points="914.2,357.2 904.8,357.4 917.5,280.0 928.5,212.9 938.2,154.0 946.0,152.3 953.5,154.9 944.9,213.9 935.0,281.2 923.6,358.7" fill="#7a7a0e"/>
<polygon points="913.6,358.5 905.4,357.2 918.0,279.9 929.0,212.7 938.6,153.9 945.9,151.4 952.5,154.3 943.8,213.3 933.8,280.6 922.4,358.0" fill="#a8a813"/>
<polygon points="913.0,359.5 905.9,357.0 918.5,279.7 929.5,212.6 939.1,153.7 945.7,150.7 951.4,153.8 942.6,212.7 932.6,279.9 921.1,357.4" fill="#cccc18"/>
<polygon points="912.7,359.1 906.5,356.8 919.1,279.5 930.0,212.4 939.6,153.5 945.3,150.9 950.4,153.2 941.6,212.1 931.4,279.3 919.8,356.7" fill="#eaea1b"/>
<polygon points="912.4,358.6 907.2,356.6 919.7,279.3 930.6,212.2 940.1,153.3 945.0,151.2 949.3,152.6 940.4,211.5 930.2,278.7 918.4,356.1" fill="#ffff1e"/>
<polygon points="933.6,371.3 923.1,371.5 934.8,290.8 945.0,221.0 953.9,160.1 962.6,158.2 970.8,161.3 963.1,222.4 954.3,292.4 944.0,373.4" fill="#474708"/>
<polygon points="933.2,371.2 923.7,371.4 935.4,290.6 945.5,220.8 954.4,159.9 962.3,158.1 969.8,160.7 962.0,221.8 953.1,291.8 942.8,372.7" fill="#7a7a0e"/>
<polygon points="932.7,372.6 924.3,371.2 935.9,290.5 946.0,220.7 954.8,159.7 962.1,157.2 968.8,160.2 960.9,221.3 951.9,291.2 941.5,372.1" fill="#a8a813"/>
<polygon points="932.1,373.6 924.8,371.0 936.5,290.3 946.5,220.5 955.3,159.5 961.9,156.5 967.8,159.6 959.8,220.7 950.7,290.6 940.2,371.4" fill="#cccc18"/>
<polygon points="931.8,373.2 925.4,370.8 937.0,290.1 947.0,220.3 955.8,159.4 961.6,156.7 966.7,159.1 958.7,220.1 949.5,290.0 938.9,370.8" fill="#eaea1b"/>
<polygon points="931.5,372.7 926.1,370.6 937.7,289.9 947.6,220.1 956.4,159.2 961.2,157.0 965.6,158.5 957.5,219.5 948.3,289.3 937.5,370.1" fill="#ffff1e"/>
<polygon points="953.6,381.4 943.0,381.6 953.6,298.0 962.7,225.9 970.6,163.2 979.4,161.3 987.7,164.5 980.9,227.3 973.1,299.6 964.1,383.5" fill="#474708"/>
<polygon points="953.2,381.4 943.6,381.4 954.1,297.8 963.2,225.7 971.1,163.0 979.1,161.3 986.6,163.9 979.8,226.8 972.0,299.0 962.8,382.9" fill="#7a7a0e"/>
<polygon points="952.7,382.7 944.2,381.3 954.7,297.6 963.7,225.6 971.6,162.9 978.9,160.4 985.6,163.4 978.7,226.2 970.8,298.4 961.6,382.2" fill="#a8a813"/>
<polygon points="952.2,383.8 944.8,381.1 955.2,297.4 964.2,225.4 972.1,162.7 978.7,159.6 984.6,162.8 977.6,225.6 969.6,297.8 960.3,381.6" fill="#cccc18"/>
<polygon points="951.9,383.3 945.4,380.9 955.8,297.3 964.8,225.2 972.6,162.5 978.3,159.9 983.6,162.2 976.5,225.0 968.4,297.1 959.0,380.9" fill="#eaea1b"/>
<polygon points="951.6,382.8 946.1,380.7 956.5,297.0 965.4,225.0 973.1,162.3 978.0,160.2 982.5,161.6 975.3,224.4 967.1,296.5 957.6,380.2" fill="#ffff1e"/>
<polygon points="976.0,370.8 965.5,371.0 974.0,291.9 981.3,223.3 987.8,163.2 996.6,161.3 1004.9,164.4 999.5,224.7 993.4,293.5 986.4,372.9" fill="#474708"/>
<polygon points="975.7,370.7 966.1,370.8 974.5,291.7 981.9,223.1 988.3,163.0 996.3,161.3 1003.9,163.9 998.5,224.1 992.3,292.9 985.2,372.2" fill="#7a7a0e"/>
<polygon points="975.2,372.1 966.7,370.7 975.1,291.5 982.4,222.9 988.8,162.9 996.1,160.4 1002.8,163.4 997.4,223.5 991.1,292.3 983.9,371.6" fill="#a8a813"/>
<polygon points="974.7,373.1 967.3,370.5 975.6,291.4 982.9,222.7 989.3,162.7 995.8,159.6 1001.8,162.8 996.3,222.9 990.0,291.7 982.7,370.9" fill="#cccc18"/>
<polygon points="974.4,372.7 967.9,370.3 976.2,291.2 983.5,222.6 989.8,162.5 995.5,159.9 1000.8,162.2 995.2,222.4 988.8,291.1 981.4,370.3" fill="#eaea1b"/>
<polygon points="974.1,372.2 968.6,370.1 976.9,290.9 984.1,222.3 990.4,162.3 995.2,160.2 999.7,161.7 994.0,221.8 987.6,290.4 980.1,369.6" fill="#ffff1e"/>
<polygon points="998.0,360.3 987.5,360.6 994.2,284.7 1000.1,218.5 1005.2,160.3 1014.0,158.4 1022.3,161.6 1018.2,219.9 1013.6,286.2 1008.3,362.4" fill="#474708"/>
<polygon points="997.7,360.3 988.1,360.4 994.8,284.5 1000.6,218.3 1005.7,160.1 1013.7,158.4 1021.3,161.0 1017.2,219.3 1012.5,285.6 1007.1,361.8" fill="#7a7a0e"/>
<polygon points="997.3,361.6 988.8,360.2 995.4,284.3 1001.2,218.1 1006.2,160.0 1013.5,157.5 1020.3,160.5 1016.1,218.7 1011.3,285.0 1005.9,361.2" fill="#a8a813"/>
<polygon points="996.8,362.7 989.3,360.1 995.9,284.1 1001.7,217.9 1006.7,159.8 1013.3,156.8 1019.3,159.9 1015.0,218.2 1010.2,284.4 1004.6,360.5" fill="#cccc18"/>
<polygon points="996.5,362.2 990.0,359.9 996.5,283.9 1002.2,217.7 1007.2,159.6 1013.0,157.0 1018.3,159.4 1013.9,217.6 1009.0,283.8 1003.4,359.9" fill="#eaea1b"/>
<polygon points="996.2,361.7 990.7,359.6 997.2,283.7 1002.9,217.5 1007.8,159.4 1012.7,157.3 1017.2,158.8 1012.8,217.0 1007.8,283.2 1002.1,359.2" fill="#ffff1e"/>
<polygon points="1019.6,350.1 1009.1,350.4 1014.3,275.8 1018.9,210.7 1022.8,153.5 1031.5,151.6 1039.8,154.7 1036.9,212.1 1033.6,277.3 1029.8,352.2" fill="#474708"/>
<polygon points="1019.3,350.1 1009.8,350.2 1014.9,275.6 1019.4,210.6 1023.3,153.3 1031.3,151.6 1038.8,154.2 1035.8,211.5 1032.5,276.8 1028.6,351.6" fill="#7a7a0e"/>
<polygon points="1018.9,351.3 1010.4,350.0 1015.5,275.4 1019.9,210.4 1023.9,153.1 1031.0,150.7 1037.8,153.6 1034.8,211.0 1031.3,276.2 1027.4,350.9" fill="#a8a813"/>
<polygon points="1018.5,352.4 1011.0,349.8 1016.1,275.2 1020.5,210.2 1024.3,153.0 1030.8,150.0 1036.8,153.1 1033.7,210.4 1030.2,275.6 1026.2,350.3" fill="#cccc18"/>
<polygon points="1018.2,351.9 1011.6,349.6 1016.7,275.0 1021.0,210.0 1024.9,152.8 1030.5,150.2 1035.8,152.6 1032.7,209.8 1029.1,275.0 1025.0,349.7" fill="#eaea1b"/>
<polygon points="1017.9,351.5 1012.4,349.4 1017.3,274.8 1021.7,209.8 1025.5,152.6 1030.2,150.5 1034.7,152.0 1031.5,209.2 1027.9,274.4 1023.7,349.0" fill="#ffff1e"/>
<polygon points="1040.8,340.1 1030.4,340.4 1034.1,267.1 1037.3,203.1 1040.2,146.8 1048.8,144.9 1057.0,148.0 1055.2,204.5 1053.2,268.6 1050.9,342.1" fill="#474708"/>
<polygon points="1040.5,340.0 1031.0,340.2 1034.7,266.9 1037.9,202.9 1040.7,146.6 1048.5,144.9 1056.0,147.4 1054.2,203.9 1052.1,268.0 1049.7,341.5" fill="#7a7a0e"/>
<polygon points="1040.2,341.3 1031.7,340.0 1035.3,266.7 1038.4,202.7 1041.2,146.4 1048.3,144.0 1055.1,146.9 1053.2,203.4 1051.0,267.5 1048.5,340.9" fill="#a8a813"/>
<polygon points="1039.8,342.3 1032.3,339.8 1035.8,266.5 1038.9,202.6 1041.7,146.2 1048.1,143.3 1054.1,146.4 1052.1,202.8 1049.9,266.9 1047.3,340.3" fill="#cccc18"/>
<polygon points="1039.5,341.9 1032.9,339.6 1036.4,266.3 1039.5,202.4 1042.2,146.0 1047.8,143.5 1053.1,145.8 1051.1,202.2 1048.8,266.3 1046.2,339.7" fill="#eaea1b"/>
<polygon points="1039.2,341.4 1033.7,339.4 1037.1,266.1 1040.2,202.1 1042.8,145.8 1047.5,143.8 1052.0,145.3 1050.0,201.6 1047.6,265.7 1044.9,339.0" fill="#ffff1e"/>
<polygon points="1061.6,330.2 1051.2,330.6 1053.5,258.6 1055.5,195.6 1057.2,140.2 1065.8,138.3 1073.9,141.3 1073.2,196.9 1072.5,260.1 1071.6,332.3" fill="#474708"/>
<polygon points="1061.3,330.2 1051.9,330.4 1054.1,258.4 1056.0,195.4 1057.8,140.0 1065.6,138.3 1073.0,140.8 1072.2,196.4 1071.4,259.5 1070.4,331.7" fill="#7a7a0e"/>
<polygon points="1061.0,331.4 1052.5,330.2 1054.7,258.2 1056.6,195.2 1058.3,139.8 1065.3,137.4 1072.0,140.3 1071.2,195.9 1070.3,258.9 1069.3,331.1" fill="#a8a813"/>
<polygon points="1060.7,332.4 1053.1,330.0 1055.3,258.0 1057.1,195.1 1058.8,139.6 1065.1,136.7 1071.1,139.7 1070.2,195.3 1069.2,258.3 1068.1,330.5" fill="#cccc18"/>
<polygon points="1060.4,332.0 1053.8,329.8 1055.9,257.8 1057.7,194.9 1059.3,139.4 1064.8,136.9 1070.1,139.2 1069.2,194.8 1068.1,257.8 1066.9,329.9" fill="#eaea1b"/>
<polygon points="1060.1,331.5 1054.5,329.5 1056.6,257.6 1058.3,194.6 1059.9,139.2 1064.6,137.2 1069.1,138.7 1068.1,194.2 1067.0,257.1 1065.7,329.2" fill="#ffff1e"/>
<polygon points="1082.1,320.5 1071.7,320.9 1072.6,250.2 1073.4,188.3 1074.0,133.6 1082.6,131.8 1090.6,134.8 1091.0,189.6 1091.4,251.6 1091.9,322.6" fill="#474708"/>
<polygon points="1081.8,320.5 1072.3,320.7 1073.2,250.0 1073.9,188.1 1074.6,133.4 1082.3,131.8 1089.7,134.3 1090.0,189.0 1090.3,251.1 1090.7,322.0" fill="#7a7a0e"/>
<polygon points="1081.5,321.7 1073.0,320.5 1073.8,249.8 1074.5,187.9 1075.1,133.3 1082.1,130.9 1088.8,133.8 1089.0,188.5 1089.3,250.5 1089.6,321.4" fill="#a8a813"/>
<polygon points="1081.2,322.7 1073.6,320.3 1074.4,249.6 1075.0,187.7 1075.6,133.1 1081.8,130.2 1087.8,133.2 1088.0,187.9 1088.2,249.9 1088.5,320.8" fill="#cccc18"/>
<polygon points="1080.9,322.3 1074.3,320.1 1075.0,249.4 1075.6,187.5 1076.1,132.9 1081.6,130.4 1086.9,132.7 1087.0,187.4 1087.2,249.4 1087.3,320.2" fill="#eaea1b"/>
<polygon points="1080.6,321.8 1075.0,319.9 1075.7,249.1 1076.2,187.3 1076.7,132.7 1081.3,130.7 1085.9,132.1 1085.9,186.8 1086.0,248.7 1086.1,319.6" fill="#ffff1e"/>
<polygon points="1102.1,311.0 1091.8,311.4 1091.3,241.9 1090.9,181.0 1090.6,127.2 1099.1,125.3 1107.1,128.3 1108.5,182.3 1110.0,243.3 1111.8,313.1" fill="#474708"/>
<polygon points="1101.8,311.0 1092.4,311.2 1091.9,241.7 1091.5,180.8 1091.1,127.0 1098.9,125.3 1106.2,127.8 1107.5,181.7 1109.0,242.8 1110.7,312.5" fill="#7a7a0e"/>
<polygon points="1101.6,312.2 1093.1,311.0 1092.6,241.5 1092.1,180.6 1091.7,126.8 1098.6,124.5 1105.3,127.3 1106.5,181.2 1108.0,242.2 1109.6,311.9" fill="#a8a813"/>
<polygon points="1101.3,313.1 1093.7,310.8 1093.1,241.3 1092.6,180.4 1092.2,126.6 1098.3,123.8 1104.3,126.8 1105.5,180.7 1106.9,241.7 1108.5,311.3" fill="#cccc18"/>
<polygon points="1101.0,312.7 1094.4,310.6 1093.8,241.1 1093.2,180.2 1092.7,126.4 1098.1,124.0 1103.4,126.3 1104.6,180.1 1105.9,241.1 1107.4,310.7" fill="#eaea1b"/>
<polygon points="1100.7,312.3 1095.2,310.4 1094.5,240.9 1093.9,180.0 1093.3,126.2 1097.9,124.3 1102.4,125.7 1103.5,179.6 1104.7,240.5 1106.2,310.1" fill="#ffff1e"/>
<polygon points="1121.8,301.7 1111.5,302.1 1109.8,233.8 1108.3,173.9 1106.9,120.9 1115.4,119.0 1123.3,122.0 1125.7,175.1 1128.3,235.2 1131.4,303.7" fill="#474708"/>
<polygon points="1121.5,301.7 1112.2,301.9 1110.4,233.6 1108.8,173.7 1107.5,120.7 1115.1,119.0 1122.4,121.5 1124.7,174.6 1127.3,234.7 1130.3,303.1" fill="#7a7a0e"/>
<polygon points="1121.3,302.8 1112.9,301.7 1111.0,233.4 1109.4,173.5 1108.0,120.5 1114.9,118.2 1121.5,121.0 1123.8,174.1 1126.3,234.1 1129.2,302.6" fill="#a8a813"/>
<polygon points="1121.0,303.8 1113.5,301.5 1111.6,233.2 1110.0,173.3 1108.5,120.3 1114.6,117.5 1120.6,120.5 1122.8,173.5 1125.3,233.5 1128.1,302.0" fill="#cccc18"/>
<polygon points="1120.8,303.4 1114.2,301.3 1112.2,233.0 1110.5,173.1 1109.0,120.1 1114.4,117.7 1119.7,120.0 1121.8,173.0 1124.2,233.0 1127.0,301.4" fill="#eaea1b"/>
<polygon points="1120.5,303.0 1114.9,301.0 1112.9,232.7 1111.2,172.8 1109.7,119.9 1114.1,118.0 1118.7,119.4 1120.8,172.4 1123.1,232.4 1125.8,300.8" fill="#ffff1e"/>
<polygon points="1141.2,292.5 1130.9,293.0 1127.9,225.8 1125.3,166.8 1123.0,114.6 1131.4,112.8 1139.3,115.7 1142.6,168.1 1146.4,227.2 1150.6,294.5" fill="#474708"/>
<polygon points="1140.9,292.5 1131.6,292.7 1128.5,225.6 1125.9,166.6 1123.5,114.4 1131.2,112.8 1138.4,115.2 1141.7,167.5 1145.4,226.7 1149.6,294.0" fill="#7a7a0e"/>
<polygon points="1140.7,293.6 1132.2,292.5 1129.2,225.4 1126.5,166.4 1124.1,114.2 1130.9,112.0 1137.5,114.7 1140.7,167.0 1144.3,226.1 1148.5,293.4" fill="#a8a813"/>
<polygon points="1140.5,294.6 1132.9,292.3 1129.8,225.2 1127.0,166.2 1124.6,114.1 1130.6,111.3 1136.6,114.2 1139.8,166.5 1143.3,225.6 1147.4,292.8" fill="#cccc18"/>
<polygon points="1140.2,294.2 1133.6,292.1 1130.4,225.0 1127.6,166.0 1125.1,113.9 1130.4,111.5 1135.7,113.7 1138.8,166.0 1142.3,225.0 1146.3,292.3" fill="#eaea1b"/>
<polygon points="1139.9,293.8 1134.3,291.9 1131.1,224.7 1128.3,165.8 1125.8,113.6 1130.2,111.8 1134.7,113.2 1137.8,165.4 1141.2,224.4 1145.2,291.6" fill="#ffff1e"/>
<polygon points="1160.2,283.5 1149.9,284.0 1145.8,217.9 1142.1,159.9 1138.8,108.5 1147.2,106.7 1155.0,109.6 1159.3,161.1 1164.1,219.3 1169.5,285.5" fill="#474708"/>
<polygon points="1159.9,283.5 1150.6,283.8 1146.4,217.7 1142.7,159.7 1139.4,108.3 1147.0,106.6 1154.2,109.1 1158.3,160.6 1163.1,218.8 1168.5,285.0" fill="#7a7a0e"/>
<polygon points="1159.7,284.6 1151.3,283.5 1147.0,217.5 1143.3,159.5 1139.9,108.1 1146.7,105.8 1153.3,108.6 1157.4,160.1 1162.1,218.2 1167.4,284.4" fill="#a8a813"/>
<polygon points="1159.5,285.5 1151.9,283.3 1147.6,217.3 1143.8,159.3 1140.4,107.9 1146.4,105.2 1152.4,108.1 1156.5,159.6 1161.1,217.7 1166.4,283.8" fill="#cccc18"/>
<polygon points="1159.2,285.2 1152.6,283.1 1148.2,217.1 1144.4,159.1 1141.0,107.7 1146.2,105.4 1151.5,107.6 1155.5,159.1 1160.1,217.2 1165.3,283.3" fill="#eaea1b"/>
<polygon points="1159.0,284.7 1153.4,282.9 1149.0,216.9 1145.1,158.9 1141.6,107.5 1146.0,105.7 1150.5,107.0 1154.5,158.5 1159.0,216.6 1164.2,282.7" fill="#ffff1e"/>
<polygon points="1178.8,274.7 1168.7,275.1 1163.3,210.2 1158.6,153.1 1154.4,102.4 1162.7,100.6 1170.5,103.5 1175.7,154.3 1181.5,211.6 1188.1,276.7" fill="#474708"/>
<polygon points="1178.6,274.6 1169.3,274.9 1163.9,210.0 1159.2,152.9 1155.0,102.2 1162.5,100.6 1169.7,103.0 1174.8,153.8 1180.5,211.0 1187.1,276.1" fill="#7a7a0e"/>
<polygon points="1178.4,275.7 1170.0,274.7 1164.6,209.8 1159.8,152.7 1155.5,102.0 1162.2,99.8 1168.8,102.5 1173.9,153.3 1179.5,210.5 1186.0,275.6" fill="#a8a813"/>
<polygon points="1178.3,276.7 1170.7,274.5 1165.2,209.6 1160.3,152.5 1156.1,101.8 1162.0,99.2 1167.9,102.0 1172.9,152.8 1178.6,210.0 1185.0,275.0" fill="#cccc18"/>
<polygon points="1178.0,276.3 1171.4,274.3 1165.8,209.4 1160.9,152.3 1156.6,101.7 1161.8,99.4 1167.1,101.5 1172.0,152.2 1177.6,209.4 1183.9,274.5" fill="#eaea1b"/>
<polygon points="1177.7,275.9 1172.1,274.0 1166.5,209.2 1161.6,152.1 1157.2,101.4 1161.6,99.6 1166.1,101.0 1171.0,151.7 1176.5,208.9 1182.8,273.8" fill="#ffff1e"/>
<polygon points="1197.2,266.0 1187.0,266.5 1180.6,202.6 1174.9,146.4 1169.8,96.5 1178.1,94.6 1185.8,97.5 1191.8,147.6 1198.6,203.9 1206.3,268.0" fill="#474708"/>
<polygon points="1196.9,265.9 1187.7,266.2 1181.2,202.4 1175.5,146.2 1170.4,96.3 1177.9,94.6 1185.0,97.0 1190.9,147.1 1197.7,203.4 1205.3,267.4" fill="#7a7a0e"/>
<polygon points="1196.8,267.0 1188.4,266.0 1181.8,202.2 1176.1,146.0 1170.9,96.1 1177.6,93.9 1184.1,96.6 1190.0,146.6 1196.7,202.9 1204.3,266.9" fill="#a8a813"/>
<polygon points="1196.7,267.9 1189.1,265.8 1182.5,202.0 1176.6,145.8 1171.5,95.9 1177.3,93.2 1183.2,96.1 1189.1,146.0 1195.7,202.4 1203.3,266.3" fill="#cccc18"/>
<polygon points="1196.4,267.6 1189.8,265.6 1183.1,201.8 1177.2,145.6 1172.0,95.7 1177.1,93.4 1182.4,95.6 1188.2,145.5 1194.8,201.8 1202.3,265.8" fill="#eaea1b"/>
<polygon points="1196.1,267.2 1190.5,265.4 1183.8,201.5 1177.9,145.3 1172.6,95.4 1176.9,93.7 1181.5,95.0 1187.2,145.0 1193.8,201.3 1201.2,265.2" fill="#ffff1e"/>
<polygon points="1215.2,257.4 1205.1,257.9 1197.6,195.1 1190.9,139.8 1185.0,90.6 1193.2,88.8 1200.9,91.6 1207.8,140.9 1215.5,196.5 1224.3,259.4" fill="#474708"/>
<polygon points="1215.0,257.4 1205.8,257.7 1198.2,194.9 1191.5,139.6 1185.6,90.4 1193.0,88.8 1200.1,91.1 1206.9,140.4 1214.6,195.9 1223.3,258.9" fill="#7a7a0e"/>
<polygon points="1214.9,258.5 1206.5,257.5 1198.8,194.7 1192.1,139.4 1186.1,90.2 1192.7,88.0 1199.2,90.7 1206.0,139.9 1213.6,195.4 1222.3,258.3" fill="#a8a813"/>
<polygon points="1214.7,259.3 1207.2,257.3 1199.5,194.5 1192.7,139.2 1186.6,90.0 1192.4,87.4 1198.4,90.2 1205.1,139.4 1212.7,194.9 1221.3,257.8" fill="#cccc18"/>
<polygon points="1214.5,259.0 1207.8,257.1 1200.1,194.3 1193.3,139.0 1187.2,89.8 1192.2,87.6 1197.5,89.7 1204.2,138.9 1211.7,194.4 1220.3,257.3" fill="#eaea1b"/>
<polygon points="1214.2,258.6 1208.6,256.8 1200.8,194.1 1193.9,138.7 1187.8,89.6 1192.1,87.8 1196.6,89.2 1203.2,138.4 1210.7,193.8 1219.2,256.7" fill="#ffff1e"/>
<polygon points="1232.9,249.0 1222.9,249.6 1214.3,187.8 1206.7,133.3 1200.0,84.8 1208.1,83.0 1215.8,85.8 1223.4,134.4 1232.1,189.1 1241.9,251.0" fill="#474708"/>
<polygon points="1232.7,249.0 1223.6,249.3 1214.9,187.6 1207.3,133.0 1200.5,84.6 1207.9,83.0 1214.9,85.3 1222.6,133.9 1231.2,188.6 1240.9,250.5" fill="#7a7a0e"/>
<polygon points="1232.6,250.1 1224.3,249.1 1215.6,187.4 1207.9,132.8 1201.1,84.4 1207.6,82.2 1214.1,84.9 1221.7,133.4 1230.2,188.0 1239.9,249.9" fill="#a8a813"/>
<polygon points="1232.5,250.9 1224.9,248.9 1216.2,187.1 1208.5,132.6 1201.6,84.2 1207.3,81.6 1213.2,84.4 1220.8,132.9 1229.3,187.5 1238.9,249.4" fill="#cccc18"/>
<polygon points="1232.3,250.6 1225.6,248.7 1216.8,186.9 1209.1,132.4 1202.2,84.0 1207.1,81.8 1212.4,83.9 1219.9,132.4 1228.4,187.0 1238.0,248.9" fill="#eaea1b"/>
<polygon points="1232.0,250.2 1226.4,248.4 1217.6,186.7 1209.7,132.2 1202.8,83.7 1207.0,82.0 1211.5,83.4 1219.0,131.9 1227.4,186.4 1236.9,248.3" fill="#ffff1e"/>
<polygon points="1250.3,240.8 1240.3,241.3 1230.7,180.5 1222.2,126.8 1214.7,79.1 1222.8,77.3 1230.4,80.1 1238.9,128.0 1248.4,181.8 1259.2,242.8" fill="#474708"/>
<polygon points="1250.1,240.7 1241.0,241.1 1231.4,180.3 1222.8,126.6 1215.3,78.8 1222.6,77.2 1229.6,79.6 1238.0,127.5 1247.5,181.3 1258.2,242.2" fill="#7a7a0e"/>
<polygon points="1250.1,241.8 1241.7,240.9 1232.0,180.1 1223.4,126.4 1215.8,78.6 1222.3,76.5 1228.8,79.1 1237.2,127.0 1246.6,180.8 1257.3,241.7" fill="#a8a813"/>
<polygon points="1250.0,242.6 1242.4,240.7 1232.6,179.9 1224.0,126.2 1216.3,78.5 1222.0,75.9 1227.9,78.6 1236.3,126.5 1245.7,180.3 1256.3,241.2" fill="#cccc18"/>
<polygon points="1249.7,242.3 1243.1,240.4 1233.3,179.7 1224.6,126.0 1216.9,78.3 1221.8,76.1 1227.1,78.2 1235.4,126.0 1244.8,179.8 1255.3,240.6" fill="#eaea1b"/>
<polygon points="1249.5,241.9 1243.9,240.2 1234.0,179.4 1225.3,125.8 1217.5,78.0 1221.7,76.3 1226.2,77.7 1234.5,125.5 1243.8,179.2 1254.3,240.1" fill="#ffff1e"/>
<polygon points="1267.5,232.6 1257.5,233.2 1246.9,173.4 1237.6,120.5 1229.2,73.4 1237.3,71.6 1244.9,74.4 1254.1,121.6 1264.5,174.7 1276.2,234.6" fill="#474708"/>
<polygon points="1267.3,232.6 1258.2,233.0 1247.6,173.2 1238.2,120.3 1229.8,73.2 1237.1,71.6 1244.0,74.0 1253.3,121.2 1263.6,174.2 1275.3,234.1" fill="#7a7a0e"/>
<polygon points="1267.3,233.7 1258.9,232.8 1248.2,173.0 1238.8,120.1 1230.3,73.0 1236.8,70.9 1243.2,73.5 1252.4,120.7 1262.7,173.7 1274.4,233.6" fill="#a8a813"/>
<polygon points="1267.2,234.5 1259.6,232.6 1248.8,172.8 1239.3,119.9 1230.9,72.8 1236.5,70.3 1242.4,73.0 1251.5,120.2 1261.8,173.1 1273.4,233.1" fill="#cccc18"/>
<polygon points="1266.9,234.1 1260.3,232.3 1249.5,172.6 1239.9,119.7 1231.4,72.6 1236.3,70.5 1241.6,72.5 1250.7,119.7 1260.9,172.6 1272.4,232.5" fill="#eaea1b"/>
<polygon points="1266.6,233.8 1261.1,232.1 1250.2,172.3 1240.6,119.4 1232.1,72.4 1236.2,70.7 1240.7,72.0 1249.8,119.2 1259.9,172.1 1271.4,232.0" fill="#ffff1e"/>
<polygon points="1284.3,224.7 1274.4,225.2 1262.9,166.4 1252.7,114.3 1243.6,67.8 1251.6,66.1 1259.1,68.8 1269.1,115.4 1280.3,167.6 1293.0,226.6" fill="#474708"/>
<polygon points="1284.1,224.6 1275.1,225.0 1263.5,166.2 1253.3,114.1 1244.1,67.6 1251.4,66.1 1258.3,68.4 1268.3,114.9 1279.4,167.1 1292.1,226.1" fill="#7a7a0e"/>
<polygon points="1284.1,225.7 1275.8,224.8 1264.2,166.0 1253.9,113.9 1244.7,67.4 1251.1,65.3 1257.5,67.9 1267.4,114.4 1278.6,166.6 1291.1,225.6" fill="#a8a813"/>
<polygon points="1284.1,226.5 1276.5,224.6 1264.8,165.7 1254.5,113.7 1245.2,67.2 1250.8,64.7 1256.7,67.4 1266.6,113.9 1277.7,166.1 1290.2,225.1" fill="#cccc18"/>
<polygon points="1283.8,226.1 1277.2,224.4 1265.4,165.5 1255.1,113.5 1245.8,67.0 1250.6,65.0 1255.9,67.0 1265.7,113.5 1276.8,165.6 1289.3,224.6" fill="#eaea1b"/>
<polygon points="1283.5,225.8 1278.0,224.1 1266.2,165.3 1255.7,113.2 1246.4,66.8 1250.5,65.2 1255.0,66.5 1264.8,112.9 1275.8,165.1 1288.3,224.0" fill="#ffff1e"/>
<polygon points="1300.9,216.8 1291.0,217.4 1278.6,159.5 1267.5,108.2 1257.7,62.4 1265.7,60.6 1273.1,63.3 1283.9,109.2 1295.9,160.7 1309.5,218.8" fill="#474708"/>
<polygon points="1300.7,216.8 1291.7,217.2 1279.2,159.3 1268.1,107.9 1258.3,62.2 1265.5,60.6 1272.3,62.9 1283.0,108.8 1295.0,160.2 1308.6,218.3" fill="#7a7a0e"/>
<polygon points="1300.7,217.8 1292.4,217.0 1279.9,159.0 1268.7,107.7 1258.8,62.0 1265.2,59.9 1271.6,62.4 1282.2,108.3 1294.2,159.7 1307.6,217.8" fill="#a8a813"/>
<polygon points="1300.7,218.6 1293.1,216.7 1280.5,158.8 1269.3,107.5 1259.4,61.8 1264.8,59.3 1270.8,62.0 1281.4,107.8 1293.3,159.2 1306.7,217.2" fill="#cccc18"/>
<polygon points="1300.4,218.3 1293.8,216.5 1281.2,158.6 1269.9,107.3 1259.9,61.6 1264.7,59.5 1270.0,61.5 1280.5,107.3 1292.4,158.7 1305.8,216.7" fill="#eaea1b"/>
<polygon points="1300.2,217.9 1294.6,216.3 1281.9,158.4 1270.6,107.1 1260.6,61.3 1264.6,59.7 1269.1,61.0 1279.6,106.8 1291.5,158.2 1304.8,216.2" fill="#ffff1e"/>
<polygon points="1317.2,209.1 1307.4,209.7 1294.0,152.7 1282.2,102.1 1271.6,57.0 1279.6,55.2 1287.0,57.9 1298.4,103.2 1311.2,153.9 1325.7,211.0" fill="#474708"/>
<polygon points="1317.0,209.1 1308.1,209.5 1294.7,152.5 1282.8,101.9 1272.2,56.7 1279.4,55.2 1286.2,57.5 1297.6,102.7 1310.4,153.4 1324.8,210.5" fill="#7a7a0e"/>
<polygon points="1317.0,210.0 1308.8,209.2 1295.3,152.2 1283.4,101.7 1272.8,56.5 1279.1,54.5 1285.4,57.0 1296.8,102.2 1309.5,152.9 1323.9,210.0" fill="#a8a813"/>
<polygon points="1317.0,210.8 1309.5,209.0 1296.0,152.0 1284.0,101.5 1273.3,56.3 1278.7,53.9 1284.6,56.6 1296.0,101.8 1308.7,152.4 1323.0,209.5" fill="#cccc18"/>
<polygon points="1316.8,210.5 1310.2,208.8 1296.6,151.8 1284.6,101.3 1273.9,56.1 1278.6,54.1 1283.9,56.1 1295.2,101.3 1307.8,151.9 1322.1,209.0" fill="#eaea1b"/>
<polygon points="1316.5,210.2 1311.0,208.5 1297.4,151.6 1285.3,101.0 1274.5,55.9 1278.5,54.3 1283.0,55.6 1294.3,100.8 1306.9,151.4 1321.1,208.5" fill="#ffff1e"/>
<polygon points="1333.2,201.5 1323.4,202.1 1309.2,146.0 1296.7,96.1 1285.4,51.6 1293.3,49.9 1300.7,52.6 1312.8,97.2 1326.3,147.2 1341.6,203.4" fill="#474708"/>
<polygon points="1333.0,201.5 1324.1,201.9 1309.9,145.8 1297.3,95.9 1286.0,51.4 1293.1,49.9 1299.9,52.1 1312.0,96.7 1325.5,146.7 1340.7,202.9" fill="#7a7a0e"/>
<polygon points="1333.1,202.4 1324.8,201.7 1310.6,145.5 1297.9,95.7 1286.5,51.2 1292.8,49.2 1299.1,51.7 1311.2,96.3 1324.7,146.2 1339.9,202.4" fill="#a8a813"/>
<polygon points="1333.1,203.2 1325.5,201.4 1311.2,145.3 1298.5,95.5 1287.1,51.0 1292.4,48.6 1298.3,51.2 1310.4,95.8 1323.8,145.7 1339.0,201.9" fill="#cccc18"/>
<polygon points="1332.9,202.9 1326.2,201.2 1311.8,145.1 1299.1,95.3 1287.7,50.8 1292.3,48.8 1297.6,50.8 1309.5,95.3 1323.0,145.2 1338.1,201.4" fill="#eaea1b"/>
<polygon points="1332.6,202.6 1327.1,200.9 1312.6,144.8 1299.8,95.1 1288.3,50.6 1292.2,49.0 1296.7,50.3 1308.7,94.8 1322.0,144.7 1337.1,200.9" fill="#ffff1e"/>
<polygon points="1349.0,194.0 1339.2,194.6 1324.2,139.4 1310.9,90.3 1299.0,46.3 1306.8,44.6 1314.1,47.3 1326.9,91.3 1341.2,140.5 1357.3,196.0" fill="#474708"/>
<polygon points="1348.8,194.0 1340.0,194.4 1324.9,139.2 1311.5,90.1 1299.5,46.1 1306.7,44.6 1313.4,46.8 1326.1,90.9 1340.4,140.1 1356.5,195.5" fill="#7a7a0e"/>
<polygon points="1348.9,194.9 1340.7,194.2 1325.5,138.9 1312.1,89.8 1300.1,45.9 1306.3,43.9 1312.6,46.4 1325.3,90.4 1339.6,139.6 1355.6,195.0" fill="#a8a813"/>
<polygon points="1348.9,195.7 1341.4,194.0 1326.2,138.7 1312.7,89.6 1300.7,45.7 1306.0,43.4 1311.8,46.0 1324.5,89.9 1338.7,139.1 1354.7,194.5" fill="#cccc18"/>
<polygon points="1348.7,195.4 1342.1,193.7 1326.8,138.5 1313.3,89.4 1301.2,45.5 1305.9,43.6 1311.1,45.5 1323.7,89.5 1337.9,138.6 1353.8,194.0" fill="#eaea1b"/>
<polygon points="1348.4,195.1 1342.9,193.5 1327.6,138.2 1314.0,89.2 1301.9,45.3 1305.7,43.8 1310.3,45.0 1322.9,89.0 1337.0,138.1 1352.9,193.4" fill="#ffff1e"/>
<polygon points="1364.5,186.7 1354.8,187.3 1339.0,132.9 1324.9,84.5 1312.4,41.2 1320.2,39.4 1327.4,42.1 1340.9,85.5 1355.9,134.0 1372.8,188.6" fill="#474708"/>
<polygon points="1364.3,186.6 1355.5,187.1 1339.7,132.7 1325.5,84.3 1312.9,40.9 1320.0,39.4 1326.7,41.6 1340.1,85.1 1355.1,133.6 1371.9,188.1" fill="#7a7a0e"/>
<polygon points="1364.5,187.6 1356.2,186.8 1340.3,132.4 1326.2,84.0 1313.5,40.7 1319.6,38.7 1325.9,41.2 1339.3,84.6 1354.2,133.1 1371.0,187.6" fill="#a8a813"/>
<polygon points="1364.5,188.3 1356.9,186.6 1341.0,132.2 1326.8,83.8 1314.0,40.5 1319.3,38.2 1325.2,40.8 1338.5,84.1 1353.4,132.6 1370.2,187.1" fill="#cccc18"/>
<polygon points="1364.2,188.0 1357.6,186.4 1341.6,132.0 1327.4,83.6 1314.6,40.3 1319.2,38.4 1324.4,40.3 1337.7,83.7 1352.6,132.1 1369.3,186.6" fill="#eaea1b"/>
<polygon points="1364.0,187.7 1358.5,186.1 1342.4,131.7 1328.1,83.4 1315.3,40.1 1319.1,38.6 1323.6,39.8 1336.9,83.2 1351.7,131.6 1368.4,186.1" fill="#ffff1e"/>
<polygon points="1379.8,179.4 1370.1,180.1 1353.5,126.5 1338.8,78.8 1325.6,36.0 1333.3,34.3 1340.6,36.9 1354.6,79.8 1370.3,127.6 1388.0,181.3" fill="#474708"/>
<polygon points="1379.6,179.4 1370.8,179.8 1354.2,126.2 1339.4,78.5 1326.1,35.8 1333.2,34.3 1339.8,36.5 1353.8,79.3 1369.5,127.1 1387.1,180.9" fill="#7a7a0e"/>
<polygon points="1379.8,180.3 1371.6,179.6 1354.9,126.0 1340.0,78.3 1326.7,35.6 1332.8,33.6 1339.1,36.1 1353.1,78.9 1368.7,126.7 1386.3,180.4" fill="#a8a813"/>
<polygon points="1379.8,181.1 1372.3,179.4 1355.5,125.8 1340.6,78.1 1327.3,35.4 1332.5,33.1 1338.3,35.6 1352.3,78.4 1367.9,126.2 1385.4,179.9" fill="#cccc18"/>
<polygon points="1379.6,180.8 1373.0,179.2 1356.2,125.6 1341.2,77.9 1327.8,35.2 1332.4,33.3 1337.6,35.2 1351.5,78.0 1367.1,125.7 1384.6,179.4" fill="#eaea1b"/>
<polygon points="1379.3,180.4 1373.8,178.9 1356.9,125.3 1341.9,77.7 1328.5,35.0 1332.3,33.5 1336.8,34.7 1350.7,77.5 1366.2,125.2 1383.6,178.9" fill="#ffff1e"/>
<polygon points="1394.8,172.3 1385.2,173.0 1367.9,120.2 1352.4,73.1 1338.6,31.0 1346.3,29.3 1353.5,31.9 1368.2,74.1 1384.5,121.3 1402.9,174.2" fill="#474708"/>
<polygon points="1394.7,172.3 1385.9,172.7 1368.5,119.9 1353.0,72.9 1339.2,30.8 1346.2,29.2 1352.8,31.4 1367.4,73.7 1383.7,120.8 1402.1,173.7" fill="#7a7a0e"/>
<polygon points="1394.8,173.2 1386.6,172.5 1369.2,119.7 1353.7,72.7 1339.7,30.6 1345.8,28.6 1352.0,31.0 1366.6,73.2 1382.9,120.4 1401.2,173.2" fill="#a8a813"/>
<polygon points="1394.9,173.9 1387.3,172.3 1369.8,119.5 1354.3,72.5 1340.3,30.4 1345.4,28.1 1351.3,30.6 1365.9,72.8 1382.1,119.9 1400.4,172.8" fill="#cccc18"/>
<polygon points="1394.6,173.6 1388.1,172.0 1370.5,119.3 1354.9,72.3 1340.9,30.1 1345.4,28.2 1350.6,30.1 1365.1,72.3 1381.3,119.4 1399.6,172.3" fill="#eaea1b"/>
<polygon points="1394.4,173.3 1388.9,171.8 1371.3,119.0 1355.6,72.0 1341.5,29.9 1345.3,28.5 1349.8,29.7 1364.3,71.8 1380.5,118.9 1398.6,171.8" fill="#ffff1e"/>
<polygon points="1409.6,165.3 1400.1,165.9 1382.0,113.9 1365.9,67.6 1351.5,26.0 1359.1,24.3 1366.3,26.9 1381.5,68.6 1398.6,115.0 1417.6,167.2" fill="#474708"/>
<polygon points="1409.5,165.3 1400.8,165.7 1382.7,113.7 1366.5,67.4 1352.0,25.8 1359.0,24.3 1365.6,26.4 1380.8,68.1 1397.8,114.6 1416.8,166.7" fill="#7a7a0e"/>
<polygon points="1409.6,166.2 1401.5,165.5 1383.3,113.5 1367.1,67.1 1352.6,25.6 1358.6,23.6 1364.8,26.0 1380.0,67.7 1397.0,114.1 1416.0,166.2" fill="#a8a813"/>
<polygon points="1409.7,166.9 1402.2,165.3 1384.0,113.3 1367.7,66.9 1353.2,25.4 1358.3,23.1 1364.1,25.6 1379.3,67.2 1396.2,113.7 1415.2,165.8" fill="#cccc18"/>
<polygon points="1409.5,166.6 1402.9,165.0 1384.6,113.1 1368.3,66.7 1353.7,25.2 1358.2,23.3 1363.4,25.2 1378.5,66.8 1395.4,113.2 1414.3,165.3" fill="#eaea1b"/>
<polygon points="1409.2,166.3 1403.7,164.8 1385.4,112.8 1369.1,66.5 1354.4,24.9 1358.1,23.5 1362.6,24.7 1377.7,66.3 1394.5,112.7 1413.4,164.8" fill="#ffff1e"/>
<polygon points="1424.2,158.4 1414.7,159.1 1395.9,107.8 1379.2,62.1 1364.1,21.1 1371.8,19.4 1378.9,21.9 1394.7,63.1 1412.4,108.9 1432.1,160.3" fill="#474708"/>
<polygon points="1424.0,158.4 1415.4,158.8 1396.6,107.6 1379.8,61.9 1364.7,20.8 1371.6,19.3 1378.2,21.5 1394.0,62.6 1411.6,108.5 1431.3,159.8" fill="#7a7a0e"/>
<polygon points="1424.2,159.2 1416.1,158.6 1397.2,107.4 1380.4,61.7 1365.3,20.6 1371.3,18.7 1377.5,21.1 1393.2,62.2 1410.8,108.0 1430.5,159.3" fill="#a8a813"/>
<polygon points="1424.3,159.9 1416.8,158.4 1397.9,107.2 1381.0,61.5 1365.9,20.4 1370.9,18.2 1376.7,20.7 1392.5,61.8 1410.0,107.5 1429.7,158.8" fill="#cccc18"/>
<polygon points="1424.1,159.7 1417.5,158.1 1398.6,106.9 1381.6,61.2 1366.4,20.2 1370.8,18.4 1376.0,20.2 1391.7,61.3 1409.2,107.1 1428.9,158.4" fill="#eaea1b"/>
<polygon points="1423.8,159.3 1418.4,157.9 1399.3,106.7 1382.3,61.0 1367.1,20.0 1370.8,18.6 1375.2,19.8 1390.9,60.8 1408.4,106.6 1428.0,157.9" fill="#ffff1e"/>
<polygon points="1438.5,151.6 1429.1,152.3 1409.6,101.8 1392.3,56.7 1376.7,16.2 1384.3,14.5 1391.3,17.1 1407.7,57.7 1426.0,102.9 1446.4,153.5" fill="#474708"/>
<polygon points="1438.4,151.6 1429.8,152.0 1410.3,101.6 1392.9,56.5 1377.3,16.0 1384.1,14.5 1390.6,16.6 1407.0,57.2 1425.2,102.4 1445.6,153.0" fill="#7a7a0e"/>
<polygon points="1438.6,152.4 1430.5,151.8 1411.0,101.3 1393.5,56.3 1377.8,15.8 1383.7,13.9 1389.9,16.2 1406.3,56.8 1424.4,102.0 1444.8,152.5" fill="#a8a813"/>
<polygon points="1438.7,153.1 1431.2,151.6 1411.6,101.1 1394.1,56.1 1378.4,15.6 1383.4,13.3 1389.2,15.8 1405.5,56.4 1423.7,101.5 1444.0,152.1" fill="#cccc18"/>
<polygon points="1438.5,152.8 1431.9,151.3 1412.3,100.9 1394.7,55.8 1379.0,15.4 1383.3,13.5 1388.5,15.4 1404.8,55.9 1422.9,101.0 1443.2,151.6" fill="#eaea1b"/>
<polygon points="1438.2,152.5 1432.7,151.1 1413.0,100.6 1395.4,55.6 1379.6,15.1 1383.3,13.7 1387.7,14.9 1404.0,55.4 1422.1,100.6 1442.3,151.1" fill="#ffff1e"/>
<polygon points="1452.7,144.9 1443.2,145.6 1423.1,95.8 1405.2,51.4 1389.0,11.4 1396.6,9.7 1403.6,12.3 1420.6,52.3 1439.4,96.9 1460.5,146.8" fill="#474708"/>
<polygon points="1452.5,144.9 1444.0,145.3 1423.8,95.6 1405.8,51.2 1389.6,11.2 1396.5,9.7 1402.9,11.8 1419.8,51.9 1438.6,96.4 1459.7,146.3" fill="#7a7a0e"/>
<polygon points="1452.8,145.7 1444.7,145.1 1424.5,95.4 1406.4,50.9 1390.2,11.0 1396.1,9.1 1402.2,11.4 1419.1,51.5 1437.9,96.0 1458.9,145.8" fill="#a8a813"/>
<polygon points="1452.9,146.4 1445.4,144.9 1425.1,95.2 1407.0,50.7 1390.8,10.8 1395.7,8.6 1401.5,11.0 1418.4,51.0 1437.1,95.5 1458.1,145.4" fill="#cccc18"/>
<polygon points="1452.6,146.1 1446.1,144.6 1425.8,94.9 1407.7,50.5 1391.3,10.6 1395.6,8.7 1400.8,10.6 1417.6,50.6 1436.4,95.1 1457.3,144.9" fill="#eaea1b"/>
<polygon points="1452.4,145.8 1446.9,144.4 1426.6,94.7 1408.4,50.3 1392.0,10.3 1395.6,8.9 1400.1,10.1 1416.8,50.1 1435.5,94.6 1456.4,144.4" fill="#ffff1e"/>
<polygon points="1466.6,138.3 1457.2,139.0 1436.5,90.0 1417.9,46.1 1401.2,6.7 1408.8,5.0 1415.7,7.5 1433.2,47.1 1452.6,91.0 1474.3,140.1" fill="#474708"/>
<polygon points="1466.5,138.3 1457.9,138.8 1437.1,89.7 1418.6,45.9 1401.8,6.4 1408.6,5.0 1415.1,7.1 1432.5,46.6 1451.9,90.6 1473.5,139.7" fill="#7a7a0e"/>
<polygon points="1466.7,139.1 1458.6,138.5 1437.8,89.5 1419.2,45.7 1402.4,6.2 1408.2,4.4 1414.4,6.7 1431.8,46.2 1451.1,90.1 1472.8,139.2" fill="#a8a813"/>
<polygon points="1466.8,139.8 1459.3,138.3 1438.5,89.3 1419.8,45.5 1403.0,6.0 1407.9,3.9 1413.7,6.3 1431.0,45.8 1450.4,89.7 1472.0,138.8" fill="#cccc18"/>
<polygon points="1466.6,139.5 1460.1,138.1 1439.1,89.1 1420.4,45.2 1403.6,5.8 1407.8,4.0 1413.0,5.8 1430.3,45.3 1449.6,89.2 1471.2,138.3" fill="#eaea1b"/>
<polygon points="1466.3,139.2 1460.9,137.8 1439.9,88.8 1421.1,45.0 1404.2,5.6 1407.8,4.2 1412.2,5.4 1429.5,44.9 1448.8,88.7 1470.3,137.8" fill="#ffff1e"/>
<polygon points="1480.3,131.8 1470.9,132.5 1449.6,84.2 1430.5,40.9 1413.3,2.0 1420.8,0.3 1427.7,2.8 1445.7,41.9 1465.7,85.2 1488.0,133.6" fill="#474708"/>
<polygon points="1480.2,131.8 1471.7,132.3 1450.3,84.0 1431.1,40.7 1413.9,1.8 1420.7,0.3 1427.0,2.4 1445.0,41.4 1464.9,84.8 1487.2,133.2" fill="#7a7a0e"/>
<polygon points="1480.4,132.6 1472.4,132.0 1450.9,83.7 1431.7,40.5 1414.5,1.6 1420.2,-0.3 1426.4,2.0 1444.3,41.0 1464.2,84.3 1486.4,132.7" fill="#a8a813"/>
<polygon points="1480.6,133.3 1473.1,131.8 1451.6,83.5 1432.4,40.3 1415.0,1.4 1419.9,-0.8 1425.7,1.6 1443.6,40.6 1463.4,83.9 1485.6,132.3" fill="#cccc18"/>
<polygon points="1480.3,133.0 1473.8,131.6 1452.3,83.3 1433.0,40.1 1415.6,1.1 1419.8,-0.6 1425.0,1.2 1442.8,40.2 1462.7,83.4 1484.9,131.8" fill="#eaea1b"/>
<polygon points="1480.1,132.7 1474.6,131.3 1453.0,83.0 1433.7,39.8 1416.3,0.9 1419.8,-0.4 1424.2,0.7 1442.1,39.7 1461.9,83.0 1484.0,131.3" fill="#ffff1e"/>
<polygon points="1493.8,125.4 1484.5,126.1 1462.6,78.5 1442.9,35.8 1425.2,-2.6 1432.6,-4.3 1439.5,-1.8 1458.0,36.7 1478.5,79.5 1501.4,127.2" fill="#474708"/>
<polygon points="1493.7,125.4 1485.2,125.9 1463.2,78.3 1443.5,35.6 1425.8,-2.8 1432.5,-4.3 1438.9,-2.2 1457.3,36.3 1477.8,79.1 1500.6,126.8" fill="#7a7a0e"/>
<polygon points="1493.9,126.2 1485.9,125.6 1463.9,78.0 1444.2,35.4 1426.4,-3.1 1432.1,-4.9 1438.2,-2.6 1456.6,35.9 1477.1,78.6 1499.9,126.3" fill="#a8a813"/>
<polygon points="1494.1,126.8 1486.6,125.4 1464.6,77.8 1444.8,35.2 1426.9,-3.3 1431.7,-5.4 1437.5,-3.0 1455.9,35.5 1476.3,78.2 1499.1,125.9" fill="#cccc18"/>
<polygon points="1493.9,126.6 1487.4,125.2 1465.2,77.6 1445.4,34.9 1427.5,-3.5 1431.7,-5.2 1436.8,-3.4 1455.2,35.0 1475.6,77.7 1498.3,125.4" fill="#eaea1b"/>
<polygon points="1493.6,126.3 1488.2,124.9 1466.0,77.3 1446.1,34.7 1428.2,-3.7 1431.7,-5.0 1436.1,-3.9 1454.4,34.6 1474.8,77.3 1497.5,124.9" fill="#ffff1e"/>
<polygon points="1507.1,119.1 1497.8,119.8 1475.3,72.9 1455.1,30.8 1437.0,-7.2 1444.4,-8.9 1451.2,-6.4 1470.2,31.7 1491.2,73.9 1514.6,120.9" fill="#474708"/>
<polygon points="1507.0,119.1 1498.6,119.6 1476.0,72.6 1455.8,30.5 1437.5,-7.4 1444.2,-8.9 1450.5,-6.8 1469.5,31.3 1490.5,73.4 1513.9,120.5" fill="#7a7a0e"/>
<polygon points="1507.3,119.9 1499.3,119.3 1476.7,72.4 1456.4,30.3 1438.1,-7.6 1443.8,-9.5 1449.9,-7.2 1468.8,30.8 1489.7,73.0 1513.1,120.0" fill="#a8a813"/>
<polygon points="1507.5,120.5 1500.0,119.1 1477.3,72.2 1457.0,30.1 1438.7,-7.8 1443.4,-9.9 1449.2,-7.6 1468.1,30.4 1489.0,72.6 1512.4,119.6" fill="#cccc18"/>
<polygon points="1507.2,120.3 1500.7,118.9 1478.0,72.0 1457.6,29.9 1439.3,-8.0 1443.4,-9.8 1448.5,-8.0 1467.4,30.0 1488.3,72.1 1511.6,119.1" fill="#eaea1b"/>
<polygon points="1506.9,120.0 1501.5,118.6 1478.8,71.7 1458.3,29.6 1439.9,-8.3 1443.4,-9.6 1447.8,-8.4 1466.6,29.5 1487.5,71.7 1510.8,118.6" fill="#ffff1e"/>
<polygon points="1520.2,112.9 1511.0,113.6 1487.9,67.3 1467.2,25.8 1448.6,-11.7 1455.9,-13.4 1462.7,-10.9 1482.2,26.7 1503.7,68.3 1527.7,114.7" fill="#474708"/>
<polygon points="1520.1,112.8 1511.7,113.4 1488.6,67.1 1467.9,25.6 1449.1,-11.9 1455.8,-13.4 1462.1,-11.3 1481.5,26.3 1503.0,67.9 1526.9,114.3" fill="#7a7a0e"/>
<polygon points="1520.4,113.6 1512.4,113.1 1489.3,66.9 1468.5,25.3 1449.7,-12.1 1455.4,-13.9 1461.4,-11.7 1480.8,25.8 1502.3,67.4 1526.2,113.8" fill="#a8a813"/>
<polygon points="1520.6,114.3 1513.1,112.9 1489.9,66.6 1469.1,25.1 1450.3,-12.3 1455.0,-14.4 1460.8,-12.1 1480.1,25.4 1501.5,67.0 1525.4,113.4" fill="#cccc18"/>
<polygon points="1520.3,114.0 1513.9,112.7 1490.6,66.4 1469.7,24.9 1450.9,-12.5 1455.0,-14.2 1460.1,-12.5 1479.4,25.0 1500.8,66.6 1524.7,112.9" fill="#eaea1b"/>
<polygon points="1520.1,113.7 1514.7,112.4 1491.4,66.1 1470.4,24.7 1451.5,-12.8 1454.9,-14.1 1459.4,-12.9 1478.7,24.6 1500.0,66.1 1523.9,112.4" fill="#ffff1e"/>
<polygon points="1533.1,106.7 1523.9,107.5 1500.3,61.8 1479.2,20.9 1460.0,-16.1 1467.3,-17.8 1474.1,-15.3 1494.0,21.7 1516.0,62.8 1540.5,108.6" fill="#474708"/>
<polygon points="1533.0,106.7 1524.7,107.2 1501.0,61.6 1479.8,20.6 1460.6,-16.4 1467.2,-17.8 1473.5,-15.7 1493.3,21.3 1515.3,62.4 1539.8,108.1" fill="#7a7a0e"/>
<polygon points="1533.3,107.5 1525.4,107.0 1501.7,61.4 1480.4,20.4 1461.2,-16.6 1466.8,-18.4 1472.8,-16.1 1492.6,20.9 1514.6,62.0 1539.1,107.7" fill="#a8a813"/>
<polygon points="1533.5,108.1 1526.1,106.8 1502.3,61.2 1481.0,20.2 1461.8,-16.8 1466.4,-18.8 1472.2,-16.5 1492.0,20.5 1513.9,61.5 1538.3,107.3" fill="#cccc18"/>
<polygon points="1533.3,107.9 1526.8,106.5 1503.0,60.9 1481.6,20.0 1462.3,-17.0 1466.4,-18.7 1471.5,-16.9 1491.3,20.1 1513.2,61.1 1537.6,106.8" fill="#eaea1b"/>
<polygon points="1533.0,107.6 1527.6,106.3 1503.8,60.7 1482.3,19.7 1463.0,-17.2 1466.4,-18.5 1470.8,-17.4 1490.5,19.6 1512.4,60.7 1536.8,106.3" fill="#ffff1e"/>
<polygon points="1545.9,100.7 1536.7,101.5 1512.6,56.4 1490.9,16.0 1471.3,-20.5 1478.6,-22.2 1485.4,-19.7 1505.7,16.9 1528.2,57.4 1553.2,102.5" fill="#474708"/>
<polygon points="1545.8,100.7 1537.4,101.2 1513.3,56.2 1491.5,15.8 1471.9,-20.7 1478.5,-22.2 1484.7,-20.1 1505.0,16.5 1527.5,57.0 1552.5,102.1" fill="#7a7a0e"/>
<polygon points="1546.1,101.5 1538.2,101.0 1513.9,56.0 1492.2,15.6 1472.5,-21.0 1478.1,-22.8 1484.1,-20.5 1504.3,16.1 1526.8,56.6 1551.8,101.7" fill="#a8a813"/>
<polygon points="1546.3,102.1 1538.9,100.8 1514.6,55.8 1492.8,15.3 1473.1,-21.2 1477.7,-23.2 1483.4,-20.9 1503.7,15.7 1526.1,56.1 1551.0,101.2" fill="#cccc18"/>
<polygon points="1546.1,101.8 1539.6,100.5 1515.3,55.5 1493.4,15.1 1473.7,-21.4 1477.7,-23.1 1482.8,-21.3 1503.0,15.2 1525.4,55.7 1550.3,100.8" fill="#eaea1b"/>
<polygon points="1545.8,101.6 1540.4,100.2 1516.0,55.3 1494.1,14.9 1474.3,-21.6 1477.7,-22.9 1482.1,-21.8 1502.3,14.8 1524.6,55.3 1549.5,100.3" fill="#ffff1e"/>
<polygon points="1558.4,94.8 1549.3,95.5 1524.7,51.1 1502.5,11.2 1482.5,-24.9 1489.8,-26.5 1496.5,-24.1 1517.2,12.1 1540.2,52.1 1565.7,96.6" fill="#474708"/>
<polygon points="1558.3,94.7 1550.0,95.3 1525.4,50.9 1503.2,11.0 1483.1,-25.1 1489.7,-26.5 1495.8,-24.5 1516.6,11.7 1539.5,51.7 1565.0,96.1" fill="#7a7a0e"/>
<polygon points="1558.6,95.5 1550.8,95.0 1526.0,50.7 1503.8,10.8 1483.7,-25.3 1489.2,-27.1 1495.2,-24.9 1515.9,11.3 1538.8,51.2 1564.3,95.7" fill="#a8a813"/>
<polygon points="1558.9,96.1 1551.5,94.8 1526.7,50.4 1504.4,10.6 1484.3,-25.5 1488.8,-27.5 1494.5,-25.3 1515.2,10.9 1538.1,50.8 1563.5,95.3" fill="#cccc18"/>
<polygon points="1558.6,95.9 1552.2,94.6 1527.4,50.2 1505.0,10.3 1484.8,-25.7 1488.8,-27.4 1493.9,-25.7 1514.6,10.5 1537.4,50.4 1562.8,94.8" fill="#eaea1b"/>
<polygon points="1558.4,95.6 1553.0,94.3 1528.1,50.0 1505.7,10.1 1485.5,-26.0 1488.8,-27.2 1493.2,-26.1 1513.8,10.0 1536.7,50.0 1562.0,94.4" fill="#ffff1e"/>
<polygon points="1570.8,88.9 1561.7,89.7 1536.6,45.9 1514.0,6.5 1493.6,-29.2 1500.8,-30.8 1507.4,-28.4 1528.6,7.3 1552.0,46.8 1578.0,90.7" fill="#474708"/>
<polygon points="1570.7,88.9 1562.4,89.4 1537.3,45.7 1514.6,6.3 1494.1,-29.4 1500.7,-30.8 1506.8,-28.8 1527.9,6.9 1551.3,46.4 1577.3,90.3" fill="#7a7a0e"/>
<polygon points="1571.0,89.6 1563.2,89.2 1537.9,45.4 1515.3,6.0 1494.7,-29.6 1500.2,-31.3 1506.2,-29.2 1527.3,6.5 1550.6,46.0 1576.6,89.9" fill="#a8a813"/>
<polygon points="1571.3,90.2 1563.9,89.0 1538.6,45.2 1515.9,5.8 1495.3,-29.8 1499.8,-31.8 1505.5,-29.6 1526.6,6.1 1549.9,45.6 1575.9,89.4" fill="#cccc18"/>
<polygon points="1571.0,90.0 1564.6,88.7 1539.3,45.0 1516.5,5.6 1495.9,-30.0 1499.8,-31.6 1504.9,-29.9 1526.0,5.7 1549.3,45.2 1575.2,89.0" fill="#eaea1b"/>
<polygon points="1570.8,89.7 1565.4,88.4 1540.0,44.7 1517.2,5.4 1496.5,-30.2 1499.8,-31.5 1504.2,-30.4 1525.3,5.3 1548.5,44.7 1574.4,88.5" fill="#ffff1e"/>
<polygon points="1583.0,83.1 1574.0,83.9 1548.4,40.7 1525.3,1.8 1504.5,-33.4 1511.7,-35.0 1518.3,-32.6 1539.8,2.7 1563.7,41.6 1590.1,84.9" fill="#474708"/>
<polygon points="1582.9,83.1 1574.7,83.6 1549.0,40.5 1526.0,1.6 1505.1,-33.6 1511.5,-35.0 1517.6,-33.0 1539.2,2.3 1563.0,41.2 1589.4,84.5" fill="#7a7a0e"/>
<polygon points="1583.2,83.8 1575.4,83.4 1549.7,40.2 1526.6,1.4 1505.6,-33.8 1511.1,-35.6 1517.0,-33.4 1538.5,1.9 1562.3,40.8 1588.7,84.1" fill="#a8a813"/>
<polygon points="1583.5,84.4 1576.1,83.2 1550.4,40.0 1527.2,1.2 1506.2,-34.0 1510.7,-36.0 1516.4,-33.8 1537.9,1.5 1561.6,40.4 1588.0,83.6" fill="#cccc18"/>
<polygon points="1583.2,84.2 1576.8,82.9 1551.0,39.8 1527.8,0.9 1506.8,-34.2 1510.7,-35.9 1515.8,-34.2 1537.2,1.1 1561.0,40.0 1587.3,83.2" fill="#eaea1b"/>
<polygon points="1583.0,83.9 1577.7,82.7 1551.8,39.5 1528.5,0.7 1507.5,-34.5 1510.7,-35.7 1515.1,-34.6 1536.5,0.6 1560.2,39.5 1586.6,82.8" fill="#ffff1e"/>
<polygon points="1595.0,77.4 1586.0,78.2 1560.0,35.6 1536.5,-2.8 1515.2,-37.6 1522.4,-39.2 1529.0,-36.8 1550.9,-2.0 1575.2,36.5 1602.1,79.2" fill="#474708"/>
<polygon points="1594.9,77.4 1586.7,78.0 1560.6,35.4 1537.1,-3.0 1515.8,-37.8 1522.3,-39.2 1528.4,-37.2 1550.3,-2.4 1574.5,36.1 1601.4,78.8" fill="#7a7a0e"/>
<polygon points="1595.3,78.1 1587.5,77.7 1561.3,35.1 1537.8,-3.2 1516.4,-38.0 1521.8,-39.7 1527.7,-37.6 1549.7,-2.8 1573.9,35.7 1600.7,78.4" fill="#a8a813"/>
<polygon points="1595.5,78.7 1588.2,77.5 1562.0,34.9 1538.4,-3.5 1517.0,-38.2 1521.5,-40.2 1527.1,-38.0 1549.0,-3.2 1573.2,35.3 1600.0,77.9" fill="#cccc18"/>
<polygon points="1595.3,78.5 1588.9,77.2 1562.6,34.7 1539.0,-3.7 1517.6,-38.4 1521.4,-40.0 1526.5,-38.4 1548.4,-3.6 1572.5,34.9 1599.3,77.5" fill="#eaea1b"/>
<polygon points="1595.0,78.2 1589.7,77.0 1563.4,34.4 1539.7,-3.9 1518.2,-38.7 1521.5,-39.8 1525.8,-38.8 1547.7,-4.0 1571.8,34.4 1598.6,77.1" fill="#ffff1e"/>
<polygon points="1606.9,71.8 1597.9,72.6 1571.4,30.5 1547.5,-7.4 1525.9,-41.7 1533.0,-43.3 1539.6,-41.0 1561.9,-6.5 1586.5,31.5 1613.9,73.6" fill="#474708"/>
<polygon points="1606.8,71.8 1598.6,72.3 1572.1,30.3 1548.2,-7.6 1526.5,-41.9 1532.9,-43.3 1538.9,-41.3 1561.3,-6.9 1585.9,31.1 1613.2,73.2" fill="#7a7a0e"/>
<polygon points="1607.1,72.5 1599.4,72.1 1572.8,30.1 1548.8,-7.8 1527.1,-42.1 1532.5,-43.9 1538.3,-41.7 1560.6,-7.3 1585.2,30.6 1612.5,72.8" fill="#a8a813"/>
<polygon points="1607.4,73.1 1600.1,71.9 1573.4,29.9 1549.4,-8.0 1527.6,-42.3 1532.1,-44.3 1537.7,-42.1 1560.0,-7.7 1584.6,30.2 1611.8,72.3" fill="#cccc18"/>
<polygon points="1607.2,72.9 1600.8,71.6 1574.1,29.6 1550.0,-8.2 1528.2,-42.6 1532.1,-44.1 1537.1,-42.5 1559.4,-8.1 1583.9,29.8 1611.2,71.9" fill="#eaea1b"/>
<polygon points="1606.9,72.6 1601.6,71.4 1574.9,29.4 1550.7,-8.5 1528.9,-42.8 1532.1,-44.0 1536.4,-42.9 1558.7,-8.5 1583.2,29.4 1610.4,71.5" fill="#ffff1e"/>
<polygon points="1618.6,66.3 1609.6,67.0 1582.7,25.6 1558.4,-11.9 1536.4,-45.8 1543.5,-47.4 1550.0,-45.0 1572.7,-11.0 1597.8,26.5 1625.5,68.0" fill="#474708"/>
<polygon points="1618.5,66.2 1610.4,66.8 1583.4,25.3 1559.1,-12.1 1537.0,-46.0 1543.4,-47.4 1549.4,-45.4 1572.1,-11.4 1597.1,26.1 1624.8,67.6" fill="#7a7a0e"/>
<polygon points="1618.8,66.9 1611.1,66.6 1584.1,25.1 1559.7,-12.3 1537.6,-46.2 1542.9,-47.9 1548.8,-45.8 1571.5,-11.8 1596.5,25.7 1624.2,67.2" fill="#a8a813"/>
<polygon points="1619.1,67.5 1611.8,66.3 1584.7,24.9 1560.3,-12.5 1538.2,-46.4 1542.5,-48.4 1548.2,-46.2 1570.8,-12.2 1595.8,25.3 1623.5,66.8" fill="#cccc18"/>
<polygon points="1618.9,67.3 1612.5,66.1 1585.4,24.7 1560.9,-12.7 1538.7,-46.6 1542.5,-48.2 1547.6,-46.6 1570.2,-12.6 1595.2,24.9 1622.8,66.4" fill="#eaea1b"/>
<polygon points="1618.6,67.0 1613.3,65.8 1586.2,24.4 1561.6,-13.0 1539.4,-46.9 1542.6,-48.0 1546.9,-47.0 1569.5,-13.0 1594.4,24.4 1622.1,65.9" fill="#ffff1e"/>
<polygon points="1630.1,60.8 1621.2,61.6 1593.9,20.7 1569.2,-16.3 1546.8,-49.8 1553.9,-51.4 1560.3,-49.1 1583.4,-15.5 1608.8,21.5 1637.0,62.6" fill="#474708"/>
<polygon points="1630.0,60.8 1621.9,61.3 1594.6,20.4 1569.8,-16.5 1547.4,-50.0 1553.8,-51.4 1559.7,-49.5 1582.8,-15.9 1608.2,21.1 1636.3,62.2" fill="#7a7a0e"/>
<polygon points="1630.4,61.5 1622.7,61.1 1595.2,20.2 1570.5,-16.7 1548.0,-50.3 1553.3,-51.9 1559.1,-49.8 1582.2,-16.3 1607.6,20.8 1635.7,61.7" fill="#a8a813"/>
<polygon points="1630.7,62.0 1623.4,60.9 1595.9,20.0 1571.1,-17.0 1548.6,-50.5 1552.9,-52.4 1558.5,-50.2 1581.5,-16.6 1606.9,20.3 1635.0,61.3" fill="#cccc18"/>
<polygon points="1630.4,61.8 1624.1,60.6 1596.6,19.7 1571.7,-17.2 1549.1,-50.7 1552.9,-52.2 1557.9,-50.6 1580.9,-17.0 1606.3,20.0 1634.3,60.9" fill="#eaea1b"/>
<polygon points="1630.2,61.6 1624.9,60.4 1597.3,19.5 1572.4,-17.4 1549.8,-50.9 1552.9,-52.0 1557.3,-51.0 1580.2,-17.5 1605.6,19.5 1633.6,60.5" fill="#ffff1e"/>
<polygon points="1641.5,55.4 1632.6,56.2 1604.9,15.8 1579.8,-20.7 1557.1,-53.8 1564.1,-55.4 1570.5,-53.1 1594.0,-19.9 1619.8,16.7 1648.3,57.2" fill="#474708"/>
<polygon points="1641.4,55.4 1633.3,56.0 1605.6,15.6 1580.5,-20.9 1557.7,-54.0 1564.0,-55.4 1569.9,-53.5 1593.3,-20.3 1619.1,16.3 1647.7,56.8" fill="#7a7a0e"/>
<polygon points="1641.8,56.1 1634.1,55.7 1606.2,15.4 1581.1,-21.1 1558.3,-54.2 1563.5,-55.9 1569.4,-53.8 1592.7,-20.6 1618.5,15.9 1647.0,56.4" fill="#a8a813"/>
<polygon points="1642.1,56.6 1634.8,55.5 1606.9,15.1 1581.7,-21.3 1558.8,-54.4 1563.1,-56.3 1568.8,-54.2 1592.1,-21.0 1617.8,15.5 1646.3,55.9" fill="#cccc18"/>
<polygon points="1641.8,56.4 1635.5,55.2 1607.6,14.9 1582.3,-21.6 1559.4,-54.7 1563.2,-56.2 1568.2,-54.6 1591.5,-21.4 1617.2,15.1 1645.7,55.5" fill="#eaea1b"/>
<polygon points="1641.6,56.2 1636.3,55.0 1608.3,14.6 1583.0,-21.8 1560.1,-54.9 1563.2,-56.0 1567.5,-55.0 1590.8,-21.8 1616.5,14.7 1645.0,55.1" fill="#ffff1e"/>
<polygon points="1652.7,50.1 1643.9,50.9 1615.8,11.0 1590.3,-25.0 1567.2,-57.8 1574.2,-59.3 1580.6,-57.0 1604.4,-24.2 1630.5,11.9 1659.5,51.8" fill="#474708"/>
<polygon points="1652.6,50.1 1644.6,50.6 1616.4,10.8 1591.0,-25.2 1567.8,-58.0 1574.1,-59.3 1580.0,-57.4 1603.8,-24.6 1629.9,11.5 1658.8,51.4" fill="#7a7a0e"/>
<polygon points="1653.0,50.7 1645.3,50.4 1617.1,10.6 1591.6,-25.5 1568.4,-58.2 1573.7,-59.8 1579.5,-57.8 1603.2,-25.0 1629.3,11.1 1658.2,51.0" fill="#a8a813"/>
<polygon points="1653.3,51.3 1646.0,50.2 1617.8,10.3 1592.2,-25.7 1569.0,-58.4 1573.3,-60.3 1578.9,-58.1 1602.6,-25.4 1628.7,10.7 1657.5,50.6" fill="#cccc18"/>
<polygon points="1653.1,51.1 1646.8,49.9 1618.4,10.1 1592.8,-25.9 1569.6,-58.6 1573.3,-60.1 1578.3,-58.5 1602.0,-25.7 1628.0,10.3 1656.9,50.2" fill="#eaea1b"/>
<polygon points="1652.8,50.8 1647.6,49.7 1619.2,9.9 1593.5,-26.1 1570.2,-58.8 1573.3,-59.9 1577.6,-58.9 1601.3,-26.2 1627.3,9.9 1656.2,49.8" fill="#ffff1e"/>
<polygon points="1663.8,44.8 1655.0,45.6 1626.5,6.3 1600.7,-29.3 1577.3,-61.7 1584.2,-63.2 1590.6,-60.9 1614.7,-28.5 1641.2,7.2 1670.5,46.6" fill="#474708"/>
<polygon points="1663.7,44.8 1655.7,45.4 1627.2,6.1 1601.3,-29.5 1577.9,-61.9 1584.1,-63.2 1590.0,-61.3 1614.1,-28.9 1640.6,6.8 1669.8,46.2" fill="#7a7a0e"/>
<polygon points="1664.1,45.5 1656.4,45.2 1627.8,5.8 1602.0,-29.7 1578.5,-62.1 1583.7,-63.7 1589.4,-61.7 1613.5,-29.3 1639.9,6.4 1669.2,45.8" fill="#a8a813"/>
<polygon points="1664.4,46.0 1657.1,44.9 1628.5,5.6 1602.6,-29.9 1579.0,-62.3 1583.3,-64.1 1588.8,-62.0 1612.9,-29.7 1639.3,6.0 1668.6,45.4" fill="#cccc18"/>
<polygon points="1664.2,45.8 1657.9,44.7 1629.2,5.4 1603.2,-30.2 1579.6,-62.5 1583.3,-64.0 1588.3,-62.4 1612.3,-30.0 1638.7,5.6 1667.9,45.0" fill="#eaea1b"/>
<polygon points="1663.9,45.6 1658.7,44.4 1629.9,5.1 1603.9,-30.4 1580.3,-62.7 1583.3,-63.8 1587.6,-62.8 1611.6,-30.4 1638.0,5.2 1667.2,44.5" fill="#ffff1e"/>
<polygon points="1674.7,39.7 1665.9,40.5 1637.1,1.6 1611.0,-33.5 1587.2,-65.5 1594.1,-67.1 1600.4,-64.8 1624.9,-32.8 1651.7,2.5 1681.4,41.4" fill="#474708"/>
<polygon points="1674.6,39.7 1666.7,40.2 1637.8,1.4 1611.6,-33.7 1587.8,-65.7 1594.0,-67.1 1599.9,-65.2 1624.3,-33.1 1651.1,2.1 1680.7,41.0" fill="#7a7a0e"/>
<polygon points="1675.0,40.3 1667.4,40.0 1638.4,1.2 1612.2,-34.0 1588.4,-65.9 1593.6,-67.6 1599.3,-65.5 1623.7,-33.5 1650.5,1.7 1680.1,40.6" fill="#a8a813"/>
<polygon points="1675.3,40.8 1668.1,39.8 1639.1,1.0 1612.8,-34.2 1589.0,-66.1 1593.1,-68.0 1598.7,-65.9 1623.1,-33.9 1649.9,1.3 1679.4,40.2" fill="#cccc18"/>
<polygon points="1675.1,40.6 1668.8,39.5 1639.8,0.7 1613.5,-34.4 1589.5,-66.3 1593.2,-67.8 1598.1,-66.3 1622.5,-34.3 1649.2,0.9 1678.8,39.8" fill="#eaea1b"/>
<polygon points="1674.8,40.4 1669.6,39.3 1640.5,0.5 1614.2,-34.6 1590.2,-66.6 1593.2,-67.7 1597.5,-66.7 1621.8,-34.7 1648.6,0.5 1678.1,39.4" fill="#ffff1e"/>
<polygon points="1685.5,34.6 1676.8,35.4 1647.6,-3.0 1621.1,-37.7 1597.0,-69.3 1603.9,-70.9 1610.2,-68.6 1634.9,-36.9 1662.1,-2.1 1692.1,36.3" fill="#474708"/>
<polygon points="1685.4,34.5 1677.5,35.1 1648.2,-3.2 1621.7,-37.9 1597.6,-69.5 1603.8,-70.9 1609.6,-69.0 1634.3,-37.3 1661.5,-2.5 1691.4,35.9" fill="#7a7a0e"/>
<polygon points="1685.8,35.2 1678.2,34.9 1648.9,-3.4 1622.3,-38.1 1598.2,-69.7 1603.3,-71.4 1609.0,-69.3 1633.7,-37.7 1660.9,-2.9 1690.8,35.5" fill="#a8a813"/>
<polygon points="1686.1,35.7 1678.9,34.7 1649.5,-3.6 1623.0,-38.4 1598.8,-69.9 1602.9,-71.8 1608.5,-69.7 1633.1,-38.1 1660.3,-3.3 1690.2,35.1" fill="#cccc18"/>
<polygon points="1685.9,35.5 1679.6,34.4 1650.2,-3.9 1623.6,-38.6 1599.3,-70.2 1602.9,-71.6 1607.9,-70.1 1632.6,-38.4 1659.6,-3.7 1689.6,34.7" fill="#eaea1b"/>
<polygon points="1685.6,35.3 1680.4,34.2 1651.0,-4.1 1624.3,-38.8 1600.0,-70.4 1603.0,-71.5 1607.3,-70.5 1631.9,-38.8 1659.0,-4.1 1688.9,34.3" fill="#ffff1e"/>
<polygon points="1696.1,29.5 1687.4,30.3 1657.9,-7.5 1631.1,-41.8 1606.7,-73.1 1613.5,-74.6 1619.8,-72.4 1644.8,-41.1 1672.3,-6.7 1702.7,31.2" fill="#474708"/>
<polygon points="1696.0,29.5 1688.1,30.1 1658.6,-7.7 1631.7,-42.0 1607.3,-73.3 1613.5,-74.6 1619.3,-72.7 1644.3,-41.4 1671.7,-7.1 1702.0,30.9" fill="#7a7a0e"/>
<polygon points="1696.4,30.1 1688.9,29.9 1659.2,-8.0 1632.3,-42.3 1607.9,-73.5 1613.0,-75.1 1618.7,-73.1 1643.7,-41.8 1671.1,-7.4 1701.4,30.5" fill="#a8a813"/>
<polygon points="1696.8,30.7 1689.6,29.6 1659.9,-8.2 1633.0,-42.5 1608.5,-73.7 1612.6,-75.5 1618.1,-73.5 1643.1,-42.2 1670.5,-7.8 1700.8,30.1" fill="#cccc18"/>
<polygon points="1696.5,30.5 1690.3,29.4 1660.5,-8.4 1633.6,-42.7 1609.0,-73.9 1612.6,-75.4 1617.6,-73.8 1642.5,-42.6 1669.9,-8.2 1700.2,29.7" fill="#eaea1b"/>
<polygon points="1696.3,30.2 1691.1,29.1 1661.3,-8.7 1634.3,-43.0 1609.7,-74.2 1612.6,-75.2 1616.9,-74.2 1641.9,-43.0 1669.3,-8.6 1699.5,29.2" fill="#ffff1e"/>
<polygon points="1706.6,24.5 1698.0,25.4 1668.1,-12.0 1641.0,-45.9 1616.3,-76.8 1623.1,-78.3 1629.3,-76.1 1654.7,-45.2 1682.5,-11.2 1713.1,26.3" fill="#474708"/>
<polygon points="1706.5,24.5 1698.7,25.1 1668.8,-12.2 1641.6,-46.1 1616.9,-77.0 1623.0,-78.3 1628.8,-76.5 1654.1,-45.5 1681.9,-11.6 1712.5,25.9" fill="#7a7a0e"/>
<polygon points="1706.9,25.2 1699.4,24.9 1669.4,-12.5 1642.2,-46.3 1617.5,-77.2 1622.5,-78.8 1628.2,-76.8 1653.5,-45.9 1681.3,-11.9 1711.9,25.5" fill="#a8a813"/>
<polygon points="1707.3,25.7 1700.1,24.7 1670.1,-12.7 1642.8,-46.6 1618.0,-77.4 1622.1,-79.2 1627.7,-77.2 1652.9,-46.3 1680.7,-12.3 1711.2,25.1" fill="#cccc18"/>
<polygon points="1707.1,25.5 1700.8,24.4 1670.7,-12.9 1643.5,-46.8 1618.6,-77.6 1622.2,-79.1 1627.1,-77.5 1652.3,-46.6 1680.1,-12.7 1710.6,24.7" fill="#eaea1b"/>
<polygon points="1706.8,25.3 1701.6,24.2 1671.5,-13.2 1644.2,-47.0 1619.3,-77.9 1622.2,-78.9 1626.5,-77.9 1651.7,-47.0 1679.4,-13.1 1709.9,24.3" fill="#ffff1e"/>
<polygon points="1716.9,19.6 1708.4,20.5 1678.2,-16.4 1650.8,-49.9 1625.8,-80.5 1632.5,-82.0 1638.7,-79.8 1664.4,-49.2 1692.4,-15.6 1723.4,21.3" fill="#474708"/>
<polygon points="1716.9,19.6 1709.1,20.2 1678.8,-16.7 1651.4,-50.2 1626.4,-80.7 1632.5,-82.0 1638.2,-80.1 1663.8,-49.6 1691.9,-16.0 1722.8,21.0" fill="#7a7a0e"/>
<polygon points="1717.3,20.3 1709.8,20.0 1679.5,-16.9 1652.0,-50.4 1626.9,-80.9 1632.0,-82.5 1637.6,-80.5 1663.2,-49.9 1691.3,-16.4 1722.2,20.6" fill="#a8a813"/>
<polygon points="1717.7,20.8 1710.5,19.8 1680.1,-17.1 1652.6,-50.6 1627.5,-81.1 1631.6,-82.9 1637.1,-80.9 1662.6,-50.3 1690.7,-16.8 1721.6,20.2" fill="#cccc18"/>
<polygon points="1717.4,20.6 1711.2,19.5 1680.8,-17.4 1653.2,-50.8 1628.1,-81.3 1631.6,-82.7 1636.5,-81.2 1662.1,-50.7 1690.1,-17.1 1721.0,19.8" fill="#eaea1b"/>
<polygon points="1717.2,20.3 1712.0,19.2 1681.6,-17.6 1653.9,-51.1 1628.8,-81.6 1631.7,-82.6 1635.9,-81.6 1661.4,-51.1 1689.4,-17.5 1720.3,19.4" fill="#ffff1e"/>
<polygon points="1727.2,14.8 1718.6,15.6 1688.1,-20.8 1660.4,-53.9 1635.1,-84.1 1641.9,-85.6 1648.1,-83.4 1673.9,-53.2 1702.3,-20.0 1733.6,16.5" fill="#474708"/>
<polygon points="1727.1,14.8 1719.3,15.4 1688.8,-21.0 1661.0,-54.1 1635.7,-84.3 1641.8,-85.6 1647.5,-83.8 1673.4,-53.5 1701.7,-20.4 1733.0,16.1" fill="#7a7a0e"/>
<polygon points="1727.5,15.4 1720.0,15.1 1689.4,-21.3 1661.7,-54.4 1636.3,-84.5 1641.3,-86.1 1647.0,-84.1 1672.8,-53.9 1701.2,-20.8 1732.4,15.7" fill="#a8a813"/>
<polygon points="1727.9,15.9 1720.7,14.9 1690.1,-21.5 1662.3,-54.6 1636.9,-84.7 1640.9,-86.5 1646.4,-84.5 1672.2,-54.3 1700.6,-21.1 1731.8,15.3" fill="#cccc18"/>
<polygon points="1727.7,15.7 1721.5,14.7 1690.8,-21.7 1662.9,-54.8 1637.5,-84.9 1640.9,-86.4 1645.9,-84.8 1671.7,-54.6 1700.0,-21.5 1731.2,15.0" fill="#eaea1b"/>
<polygon points="1727.4,15.5 1722.3,14.4 1691.5,-22.0 1663.6,-55.0 1638.1,-85.2 1641.0,-86.2 1645.3,-85.2 1671.0,-55.0 1699.3,-21.9 1730.5,14.5" fill="#ffff1e"/>
<polygon points="1737.3,10.0 1728.7,10.8 1697.9,-25.1 1670.0,-57.8 1644.4,-87.7 1651.1,-89.2 1657.3,-87.0 1683.4,-57.1 1712.1,-24.4 1743.6,11.7" fill="#474708"/>
<polygon points="1737.2,10.0 1729.5,10.6 1698.6,-25.4 1670.6,-58.1 1645.0,-87.9 1651.0,-89.2 1656.7,-87.4 1682.9,-57.5 1711.5,-24.7 1743.0,11.3" fill="#7a7a0e"/>
<polygon points="1737.6,10.6 1730.2,10.4 1699.3,-25.6 1671.2,-58.3 1645.6,-88.1 1650.6,-89.7 1656.2,-87.7 1682.3,-57.8 1710.9,-25.1 1742.4,10.9" fill="#a8a813"/>
<polygon points="1738.0,11.1 1730.9,10.1 1699.9,-25.8 1671.8,-58.5 1646.1,-88.3 1650.1,-90.1 1655.6,-88.1 1681.7,-58.2 1710.3,-25.5 1741.8,10.6" fill="#cccc18"/>
<polygon points="1737.8,10.9 1731.6,9.9 1700.6,-26.1 1672.4,-58.7 1646.7,-88.5 1650.2,-89.9 1655.1,-88.4 1681.2,-58.6 1709.8,-25.8 1741.2,10.2" fill="#eaea1b"/>
<polygon points="1737.5,10.7 1732.4,9.6 1701.3,-26.3 1673.1,-59.0 1647.4,-88.8 1650.2,-89.8 1654.5,-88.8 1680.5,-59.0 1709.1,-26.2 1740.6,9.8" fill="#ffff1e"/>
<polygon points="1747.2,5.3 1738.7,6.1 1707.6,-29.4 1679.4,-61.7 1653.6,-91.3 1660.2,-92.8 1666.4,-90.6 1692.8,-61.0 1721.7,-28.6 1753.5,7.0" fill="#474708"/>
<polygon points="1747.1,5.3 1739.4,5.9 1708.3,-29.6 1680.0,-62.0 1654.2,-91.5 1660.2,-92.8 1665.8,-90.9 1692.2,-61.4 1721.1,-29.0 1752.9,6.6" fill="#7a7a0e"/>
<polygon points="1747.6,5.9 1740.2,5.7 1709.0,-29.9 1680.6,-62.2 1654.7,-91.7 1659.7,-93.2 1665.3,-91.3 1691.7,-61.7 1720.6,-29.4 1752.3,6.2" fill="#a8a813"/>
<polygon points="1748.0,6.4 1740.9,5.4 1709.6,-30.1 1681.2,-62.4 1655.3,-91.9 1659.3,-93.6 1664.7,-91.6 1691.1,-62.1 1720.0,-29.7 1751.7,5.8" fill="#cccc18"/>
<polygon points="1747.7,6.2 1741.6,5.2 1710.3,-30.3 1681.9,-62.6 1655.9,-92.1 1659.3,-93.5 1664.2,-92.0 1690.5,-62.5 1719.4,-30.1 1751.2,5.5" fill="#eaea1b"/>
<polygon points="1747.5,6.0 1742.4,4.9 1711.0,-30.6 1682.6,-62.9 1656.6,-92.3 1659.4,-93.3 1663.6,-92.4 1689.9,-62.9 1718.8,-30.5 1750.5,5.1" fill="#ffff1e"/>
<polygon points="1757.0,0.6 1748.6,1.5 1717.2,-33.6 1688.7,-65.6 1662.6,-94.8 1669.3,-96.3 1675.4,-94.1 1702.0,-64.9 1731.2,-32.9 1763.3,2.3" fill="#474708"/>
<polygon points="1757.0,0.6 1749.3,1.2 1717.9,-33.9 1689.3,-65.8 1663.2,-95.0 1669.2,-96.3 1674.8,-94.5 1701.5,-65.2 1730.7,-33.2 1762.7,1.9" fill="#7a7a0e"/>
<polygon points="1757.5,1.2 1750.0,1.0 1718.6,-34.1 1689.9,-66.0 1663.8,-95.2 1668.7,-96.7 1674.3,-94.8 1700.9,-65.6 1730.1,-33.6 1762.1,1.6" fill="#a8a813"/>
<polygon points="1757.8,1.7 1750.7,0.8 1719.2,-34.3 1690.6,-66.2 1664.4,-95.4 1668.3,-97.1 1673.7,-95.2 1700.4,-65.9 1729.5,-34.0 1761.6,1.2" fill="#cccc18"/>
<polygon points="1757.6,1.5 1751.4,0.5 1719.9,-34.6 1691.2,-66.5 1665.0,-95.6 1668.3,-97.0 1673.2,-95.5 1699.8,-66.3 1728.9,-34.3 1761.0,0.8" fill="#eaea1b"/>
<polygon points="1757.3,1.3 1752.2,0.3 1720.6,-34.8 1691.9,-66.7 1665.6,-95.9 1668.4,-96.8 1672.6,-95.9 1699.2,-66.7 1728.3,-34.7 1760.3,0.4" fill="#ffff1e"/>
<polygon points="1766.8,-4.0 1758.4,-3.1 1726.7,-37.8 1697.9,-69.4 1671.6,-98.2 1678.2,-99.8 1684.3,-97.6 1711.2,-68.7 1740.6,-37.1 1773.0,-2.3" fill="#474708"/>
<polygon points="1766.7,-4.0 1759.1,-3.4 1727.4,-38.0 1698.5,-69.6 1672.2,-98.5 1678.1,-99.8 1683.7,-98.0 1710.6,-69.0 1740.1,-37.4 1772.4,-2.7" fill="#7a7a0e"/>
<polygon points="1767.2,-3.4 1759.8,-3.6 1728.0,-38.3 1699.2,-69.8 1672.8,-98.7 1677.6,-100.2 1683.2,-98.3 1710.1,-69.4 1739.5,-37.8 1771.8,-3.0" fill="#a8a813"/>
<polygon points="1767.5,-2.9 1760.5,-3.8 1728.7,-38.5 1699.8,-70.0 1673.3,-98.9 1677.2,-100.6 1682.7,-98.6 1709.5,-69.8 1738.9,-38.1 1771.2,-3.4" fill="#cccc18"/>
<polygon points="1767.3,-3.1 1761.2,-4.1 1729.4,-38.7 1700.4,-70.3 1673.9,-99.1 1677.3,-100.4 1682.1,-99.0 1709.0,-70.1 1738.4,-38.5 1770.7,-3.8" fill="#eaea1b"/>
<polygon points="1767.1,-3.3 1762.0,-4.3 1730.1,-39.0 1701.1,-70.5 1674.6,-99.3 1677.3,-100.3 1681.6,-99.4 1708.4,-70.5 1737.7,-38.9 1770.0,-4.2" fill="#ffff1e"/>
<polygon points="58.4,-264.7 71.2,-255.1 84.5,-245.1 98.3,-234.7 112.7,-223.9 127.8,-212.5 143.5,-200.7 159.9,-188.4 177.0,-175.5 195.0,-162.0 213.8,-147.9 233.5,-133.0 254.2,-117.4 276.0,-101.0 299.0,-83.8 323.2,-65.6 348.8,-46.3 375.8,-26.0 404.4,-4.4 434.8,18.4 467.2,42.7 501.6,68.6 538.3,96.3 577.7,125.8 619.8,157.6 665.1,191.6 714.0,228.4 766.8,268.1 824.1,311.2 886.4,358.1 947.4,403.9 1016.2,370.7 1088.3,336.0 1156.0,303.3 1219.6,272.6 1279.6,243.7 1336.2,216.4 1389.7,190.6 1440.4,166.2 1488.4,143.0 1534.1,121.0 1577.4,100.1 1618.7,80.2 1658.0,61.2 1695.6,43.1 1731.4,25.8 1765.7,9.3 1798.5,-6.6 1830.0,-21.7 1860.1,-36.3 1889.0,-50.2 1916.8,-63.6 1943.5,-76.5 1969.2,-88.9 1993.9,-100.8 2017.7,-112.3 2040.7,-123.4 2062.9,-134.0 2084.3,-144.4 2104.9,-154.3 2124.9,-163.9 2144.2,-173.3 2156.5,-170.6 2137.3,-161.2 2117.5,-151.5 2097.0,-141.5 2075.7,-131.1 2053.7,-120.3 2030.8,-109.1 2007.1,-97.5 1982.5,-85.4 1957.0,-72.9 1930.4,-59.9 1902.7,-46.3 1873.9,-32.2 1843.9,-17.5 1812.6,-2.2 1779.9,13.8 1745.7,30.6 1710.0,48.1 1672.5,66.4 1633.3,85.7 1592.1,105.8 1548.8,127.0 1503.2,149.4 1455.2,172.9 1404.6,197.7 1351.1,223.9 1294.5,251.6 1234.4,281.0 1170.7,312.2 1102.9,345.4 1030.6,380.8 953.4,418.7 938.0,417.3 870.2,365.4 808.1,317.9 751.2,274.3 698.7,234.1 650.1,196.9 605.1,162.4 563.2,130.4 524.2,100.5 487.7,72.6 453.6,46.4 421.5,21.9 391.4,-1.2 363.0,-22.9 336.2,-43.4 310.9,-62.8 286.9,-81.2 264.1,-98.6 242.6,-115.1 222.0,-130.8 202.5,-145.8 183.9,-160.0 166.2,-173.6 149.2,-186.6 133.0,-199.0 117.5,-210.9 102.6,-222.2 88.4,-233.2 74.7,-243.6 61.5,-253.7 48.9,-263.3" fill="#084708"/>
<polygon points="57.9,-264.9 70.6,-255.3 83.9,-245.3 97.7,-234.9 112.2,-224.0 127.2,-212.7 142.9,-200.9 159.3,-188.6 176.4,-175.7 194.3,-162.2 213.1,-148.1 232.9,-133.2 253.6,-117.6 275.4,-101.2 298.3,-83.9 322.5,-65.7 348.1,-46.5 375.1,-26.2 403.8,-4.6 434.2,18.3 466.5,42.6 500.9,68.5 537.7,96.1 577.0,125.7 619.1,157.4 664.5,191.5 713.3,228.3 766.1,268.0 823.4,311.1 885.8,358.0 947.3,404.2 1016.6,370.8 1088.7,336.0 1156.4,303.3 1220.1,272.6 1280.1,243.7 1336.7,216.4 1390.2,190.6 1440.9,166.1 1488.9,143.0 1534.5,120.9 1577.9,100.0 1619.2,80.1 1658.5,61.1 1696.0,43.0 1731.9,25.7 1766.2,9.2 1799.0,-6.6 1830.4,-21.8 1860.6,-36.3 1889.5,-50.3 1917.3,-63.7 1944.0,-76.6 1969.6,-88.9 1994.4,-100.9 2018.2,-112.4 2041.1,-123.4 2063.3,-134.1 2084.7,-144.4 2105.3,-154.4 2125.3,-164.0 2144.6,-173.3 2156.0,-171.1 2136.8,-161.8 2116.9,-152.1 2096.4,-142.0 2075.1,-131.6 2053.1,-120.8 2030.2,-109.6 2006.5,-98.1 1981.9,-86.0 1956.3,-73.5 1929.7,-60.5 1902.1,-47.0 1873.2,-32.9 1843.2,-18.2 1811.9,-2.9 1779.2,13.1 1745.0,29.8 1709.2,47.3 1671.8,65.7 1632.5,84.9 1591.3,105.0 1548.0,126.2 1502.4,148.5 1454.4,172.0 1403.8,196.7 1350.3,222.9 1293.6,250.6 1233.6,280.0 1169.9,311.1 1102.0,344.3 1029.7,379.7 952.5,417.4 939.1,416.2 871.0,364.6 808.9,317.1 751.9,273.6 699.4,233.4 650.8,196.3 605.7,161.8 563.9,129.8 524.8,100.0 488.3,72.1 454.1,46.0 422.1,21.5 391.9,-1.6 363.5,-23.3 336.7,-43.8 311.3,-63.2 287.3,-81.5 264.6,-98.9 243.0,-115.4 222.5,-131.1 202.9,-146.1 184.3,-160.3 166.5,-173.9 149.6,-186.9 133.3,-199.3 117.8,-211.1 102.9,-222.5 88.7,-233.4 75.0,-243.9 61.9,-253.9 49.2,-263.6" fill="#0e7a0e"/>
<polygon points="57.3,-265.1 70.1,-255.5 83.3,-245.5 97.2,-235.1 111.6,-224.2 126.6,-212.9 142.3,-201.1 158.6,-188.8 175.8,-175.9 193.7,-162.4 212.5,-148.2 232.2,-133.4 252.9,-117.8 274.7,-101.4 297.7,-84.1 321.9,-65.9 347.4,-46.7 374.5,-26.3 403.1,-4.8 433.5,18.1 465.8,42.4 500.2,68.3 537.0,96.0 576.3,125.6 618.5,157.3 663.8,191.4 712.7,228.2 765.5,267.9 822.8,311.0 885.2,358.0 947.3,404.5 1017.0,370.8 1089.1,336.0 1156.8,303.4 1220.5,272.6 1280.5,243.7 1337.1,216.4 1390.6,190.6 1441.3,166.1 1489.4,142.9 1535.0,120.9 1578.4,100.0 1619.6,80.1 1659.0,61.1 1696.5,43.0 1732.4,25.7 1766.6,9.1 1799.5,-6.7 1830.9,-21.9 1861.0,-36.4 1889.9,-50.3 1917.7,-63.7 1944.4,-76.6 1970.1,-89.0 1994.8,-100.9 2018.6,-112.4 2041.6,-123.5 2063.7,-134.2 2085.1,-144.5 2105.8,-154.5 2125.7,-164.1 2145.0,-173.4 2155.4,-171.6 2136.2,-162.3 2116.3,-152.6 2095.8,-142.5 2074.5,-132.2 2052.4,-121.4 2029.6,-110.2 2005.9,-98.6 1981.2,-86.6 1955.7,-74.1 1929.1,-61.1 1901.4,-47.6 1872.6,-33.5 1842.5,-18.9 1811.2,-3.6 1778.5,12.4 1744.3,29.1 1708.5,46.6 1671.1,64.9 1631.8,84.1 1590.6,104.2 1547.2,125.3 1501.7,147.6 1453.7,171.1 1403.0,195.8 1349.5,221.9 1292.8,249.6 1232.8,278.9 1169.0,310.1 1101.2,343.2 1028.9,378.5 951.7,416.2 940.1,415.2 871.9,363.8 809.7,316.4 752.7,272.9 700.1,232.8 651.5,195.7 606.4,161.3 564.5,129.3 525.4,99.5 488.9,71.6 454.7,45.5 422.6,21.0 392.4,-2.0 364.0,-23.7 337.1,-44.2 311.8,-63.6 287.8,-81.9 265.0,-99.3 243.4,-115.8 222.9,-131.5 203.3,-146.4 184.7,-160.6 166.9,-174.2 149.9,-187.2 133.7,-199.6 118.2,-211.4 103.3,-222.8 89.0,-233.7 75.3,-244.1 62.2,-254.2 49.5,-263.8" fill="#13a813"/>
<polygon points="56.7,-265.3 69.5,-255.6 82.8,-245.7 96.6,-235.2 111.0,-224.4 126.0,-213.1 141.6,-201.3 158.0,-189.0 175.1,-176.1 193.1,-162.6 211.9,-148.4 231.6,-133.6 252.3,-118.0 274.1,-101.6 297.0,-84.3 321.2,-66.1 346.8,-46.8 373.8,-26.5 402.4,-4.9 432.8,17.9 465.1,42.3 499.6,68.2 536.3,95.9 575.6,125.5 617.8,157.2 663.1,191.3 712.0,228.1 764.9,267.9 822.2,311.0 884.5,357.9 947.2,404.7 1017.4,370.9 1089.5,336.1 1157.2,303.4 1220.9,272.6 1280.9,243.7 1337.6,216.4 1391.1,190.5 1441.8,166.1 1489.8,142.9 1535.4,120.9 1578.8,99.9 1620.1,80.0 1659.4,61.0 1697.0,42.9 1732.8,25.6 1767.1,9.1 1799.9,-6.7 1831.3,-21.9 1861.4,-36.5 1890.4,-50.4 1918.1,-63.8 1944.8,-76.7 1970.5,-89.1 1995.2,-101.0 2019.0,-112.5 2042.0,-123.6 2064.1,-134.3 2085.5,-144.6 2106.2,-154.5 2126.1,-164.2 2145.4,-173.5 2154.8,-172.2 2135.6,-162.8 2115.7,-153.1 2095.1,-143.1 2073.9,-132.7 2051.8,-122.0 2028.9,-110.8 2005.2,-99.3 1980.6,-87.2 1955.0,-74.8 1928.4,-61.8 1900.7,-48.3 1871.9,-34.2 1841.8,-19.6 1810.5,-4.3 1777.8,11.7 1743.6,28.4 1707.8,45.8 1670.3,64.1 1631.0,83.2 1589.8,103.3 1546.5,124.5 1500.9,146.7 1452.8,170.1 1402.2,194.8 1348.6,220.9 1292.0,248.6 1231.9,277.9 1168.2,309.0 1100.3,342.0 1028.0,377.3 950.8,415.0 941.2,414.1 872.7,362.9 810.5,315.6 753.4,272.2 700.8,232.1 652.2,195.0 607.0,160.7 565.1,128.7 526.0,98.9 489.4,71.1 455.2,45.0 423.1,20.6 392.9,-2.5 364.5,-24.1 337.6,-44.6 312.2,-64.0 288.2,-82.3 265.4,-99.6 243.8,-116.1 223.3,-131.8 203.7,-146.7 185.1,-160.9 167.3,-174.5 150.3,-187.4 134.0,-199.8 118.5,-211.7 103.6,-223.0 89.3,-233.9 75.6,-244.4 62.5,-254.4 49.8,-264.1" fill="#18cc18"/>
<polygon points="56.2,-265.4 68.9,-255.8 82.2,-245.8 96.0,-235.4 110.4,-224.6 125.4,-213.3 141.0,-201.5 157.4,-189.2 174.5,-176.3 192.5,-162.8 211.2,-148.6 230.9,-133.8 251.6,-118.2 273.4,-101.8 296.4,-84.5 320.5,-66.3 346.1,-47.0 373.1,-26.7 401.8,-5.1 432.1,17.8 464.5,42.1 498.9,68.0 535.6,95.7 575.0,125.3 617.1,157.1 662.5,191.2 711.4,228.0 764.2,267.8 821.5,310.9 883.9,357.9 947.2,405.0 1017.8,370.9 1090.0,336.1 1157.7,303.4 1221.4,272.6 1281.4,243.7 1338.0,216.4 1391.5,190.5 1442.2,166.1 1490.3,142.9 1535.9,120.8 1579.3,99.9 1620.5,80.0 1659.9,61.0 1697.4,42.9 1733.3,25.6 1767.5,9.0 1800.3,-6.8 1831.8,-22.0 1861.9,-36.5 1890.8,-50.5 1918.6,-63.9 1945.3,-76.8 1970.9,-89.2 1995.7,-101.1 2019.5,-112.6 2042.4,-123.7 2064.6,-134.3 2086.0,-144.7 2106.6,-154.6 2126.6,-164.3 2145.9,-173.6 2154.2,-172.7 2135.0,-163.3 2115.1,-153.7 2094.5,-143.6 2073.2,-133.3 2051.2,-122.5 2028.3,-111.4 2004.6,-99.8 1979.9,-87.8 1954.3,-75.4 1927.7,-62.4 1900.0,-48.9 1871.2,-34.9 1841.1,-20.3 1809.8,-5.0 1777.0,11.0 1742.8,27.6 1707.0,45.0 1669.6,63.3 1630.3,82.4 1589.0,102.5 1545.7,123.6 1500.1,145.8 1452.1,169.2 1401.4,193.9 1347.8,220.0 1291.2,247.6 1231.1,276.8 1167.3,307.9 1099.5,340.9 1027.2,376.1 949.9,413.7 942.3,413.1 873.6,362.1 811.3,314.9 754.2,271.5 701.5,231.4 652.8,194.4 607.7,160.1 565.7,128.2 526.6,98.4 490.0,70.6 455.8,44.6 423.6,20.1 393.4,-2.9 364.9,-24.6 338.1,-45.0 312.7,-64.3 288.7,-82.6 265.9,-100.0 244.2,-116.5 223.7,-132.1 204.1,-147.0 185.4,-161.2 167.6,-174.8 150.6,-187.7 134.4,-200.1 118.8,-212.0 104.0,-223.3 89.7,-234.2 76.0,-244.6 62.8,-254.7 50.2,-264.3" fill="#1bea1b"/>
<polygon points="55.5,-265.6 68.3,-256.0 81.5,-246.0 95.3,-235.6 109.7,-224.8 124.7,-213.5 140.4,-201.7 156.7,-189.4 173.8,-176.5 191.8,-163.0 210.5,-148.8 230.2,-134.0 250.9,-118.4 272.7,-102.0 295.6,-84.7 319.8,-66.5 345.4,-47.2 372.4,-26.9 401.0,-5.3 431.4,17.6 463.7,41.9 498.1,67.9 534.9,95.6 574.2,125.2 616.4,156.9 661.7,191.1 710.6,227.9 763.5,267.7 820.8,310.9 883.2,357.8 947.1,405.3 1018.3,371.0 1090.5,336.1 1158.2,303.4 1221.9,272.7 1281.9,243.7 1338.6,216.3 1392.1,190.5 1442.8,166.0 1490.8,142.8 1536.4,120.8 1579.8,99.9 1621.1,79.9 1660.4,60.9 1698.0,42.8 1733.8,25.5 1768.1,9.0 1800.9,-6.9 1832.3,-22.1 1862.4,-36.6 1891.3,-50.6 1919.1,-64.0 1945.8,-76.8 1971.5,-89.2 1996.2,-101.2 2020.0,-112.7 2042.9,-123.7 2065.1,-134.4 2086.5,-144.8 2107.1,-154.7 2127.1,-164.4 2146.4,-173.7 2153.6,-173.2 2134.4,-163.9 2114.5,-154.2 2093.9,-144.2 2072.6,-133.9 2050.5,-123.1 2027.6,-112.0 2003.9,-100.5 1979.2,-88.5 1953.6,-76.0 1927.0,-63.1 1899.3,-49.6 1870.5,-35.6 1840.4,-21.0 1809.0,-5.7 1776.3,10.2 1742.1,26.8 1706.3,44.2 1668.8,62.5 1629.5,81.6 1588.2,101.6 1544.9,122.7 1499.3,144.9 1451.2,168.2 1400.5,192.9 1347.0,218.9 1290.3,246.5 1230.2,275.7 1166.4,306.7 1098.6,339.7 1026.3,374.9 949.0,412.4 943.5,411.9 874.5,361.3 812.2,314.1 755.0,270.7 702.3,230.7 653.6,193.8 608.4,159.5 566.4,127.6 527.2,97.8 490.6,70.1 456.4,44.0 424.2,19.6 394.0,-3.4 365.5,-25.0 338.6,-45.5 313.2,-64.8 289.2,-83.0 266.3,-100.4 244.7,-116.8 224.1,-132.5 204.5,-147.4 185.9,-161.6 168.1,-175.1 151.1,-188.1 134.8,-200.4 119.2,-212.3 104.3,-223.6 90.0,-234.5 76.3,-244.9 63.2,-254.9 50.5,-264.6" fill="#1eff1e"/>
<polygon points="166.2,-317.8 179.4,-310.3 193.1,-302.4 207.3,-294.3 222.0,-285.8 237.2,-277.0 253.0,-267.9 269.5,-258.5 286.6,-248.7 304.4,-238.4 323.0,-227.8 342.3,-216.7 362.5,-205.1 383.6,-193.0 405.6,-180.3 428.6,-167.1 452.8,-153.2 478.1,-138.7 504.7,-123.4 532.6,-107.4 562.0,-90.5 593.0,-72.7 625.7,-53.9 660.2,-34.1 696.8,-13.0 735.6,9.2 776.8,32.9 820.6,58.1 867.4,84.9 917.3,113.6 970.5,144.2 973.6,145.6 976.9,146.6 980.5,147.3 984.2,147.6 987.9,147.4 991.4,146.9 994.8,145.9 1054.8,123.1 1112.1,101.3 1166.5,80.6 1218.3,61.0 1267.7,42.2 1314.7,24.3 1359.6,7.3 1402.5,-9.0 1443.5,-24.6 1482.8,-39.6 1520.5,-53.9 1556.6,-67.6 1591.3,-80.8 1624.7,-93.5 1656.7,-105.6 1687.6,-117.4 1717.3,-128.6 1745.9,-139.5 1773.5,-150.0 1800.2,-160.1 1825.9,-169.9 1850.7,-179.4 1874.8,-188.5 1898.0,-197.3 1920.5,-205.9 1942.3,-214.1 1963.4,-222.2 1983.8,-229.9 2003.6,-237.5 2022.9,-244.8 2033.2,-242.8 2014.0,-235.4 1994.3,-227.8 1973.9,-220.0 1952.9,-211.9 1931.2,-203.5 1908.8,-194.9 1885.6,-186.0 1861.7,-176.8 1836.9,-167.3 1811.3,-157.4 1784.7,-147.2 1757.1,-136.6 1728.6,-125.6 1698.9,-114.2 1668.2,-102.3 1636.2,-90.0 1602.9,-77.2 1568.2,-63.9 1532.2,-50.0 1494.5,-35.5 1455.2,-20.4 1414.2,-4.7 1371.3,11.9 1326.4,29.1 1279.4,47.2 1230.0,66.2 1178.2,86.2 1123.7,107.1 1066.3,129.2 1005.4,152.6 999.7,154.3 992.7,155.4 985.2,155.6 977.7,155.1 970.4,153.8 963.8,151.7 958.6,149.3 904.9,118.0 855.1,89.0 808.5,61.9 764.8,36.5 723.8,12.6 685.2,-9.9 648.8,-31.1 614.4,-51.1 581.9,-70.0 551.1,-87.9 521.9,-105.0 494.1,-121.1 467.7,-136.5 442.5,-151.1 418.5,-165.1 395.6,-178.4 373.8,-191.2 352.8,-203.4 332.8,-215.0 313.6,-226.2 295.2,-236.9 277.5,-247.2 260.5,-257.1 244.2,-266.6 228.5,-275.8 213.3,-284.6 198.7,-293.1 184.7,-301.2 171.1,-309.1 158.0,-316.8" fill="#084708"/>
<polygon points="165.7,-318.0 178.9,-310.4 192.6,-302.6 206.8,-294.4 221.5,-286.0 236.7,-277.2 252.6,-268.1 269.0,-258.7 286.1,-248.8 303.9,-238.6 322.5,-227.9 341.8,-216.8 362.0,-205.2 383.1,-193.1 405.1,-180.5 428.1,-167.3 452.3,-153.4 477.6,-138.8 504.2,-123.6 532.1,-107.5 561.5,-90.6 592.5,-72.8 625.2,-54.1 659.7,-34.2 696.3,-13.2 735.1,9.1 776.3,32.8 820.1,57.9 866.9,84.8 916.9,113.5 970.1,144.1 973.4,145.6 976.7,146.6 980.4,147.3 984.3,147.6 988.1,147.4 991.6,146.9 995.1,145.9 1055.2,123.1 1112.5,101.3 1166.9,80.6 1218.7,60.9 1268.0,42.2 1315.0,24.3 1359.9,7.2 1402.9,-9.1 1443.9,-24.7 1483.2,-39.6 1520.9,-53.9 1557.0,-67.7 1591.7,-80.9 1625.0,-93.5 1657.1,-105.7 1687.9,-117.4 1717.6,-128.7 1746.3,-139.6 1773.9,-150.1 1800.5,-160.2 1826.2,-170.0 1851.1,-179.4 1875.1,-188.6 1898.3,-197.4 1920.8,-205.9 1942.6,-214.2 1963.7,-222.2 1984.2,-230.0 2004.0,-237.5 2023.2,-244.9 2032.7,-243.2 2013.5,-235.8 1993.8,-228.3 1973.4,-220.4 1952.4,-212.4 1930.7,-204.0 1908.3,-195.4 1885.1,-186.5 1861.1,-177.3 1836.4,-167.8 1810.7,-157.9 1784.1,-147.7 1756.6,-137.1 1728.0,-126.2 1698.4,-114.8 1667.6,-102.9 1635.6,-90.6 1602.3,-77.8 1567.6,-64.5 1531.5,-50.7 1493.9,-36.2 1454.6,-21.1 1413.6,-5.3 1370.7,11.1 1325.8,28.4 1278.7,46.5 1229.4,65.4 1177.5,85.4 1123.0,106.3 1065.6,128.3 1004.8,151.7 999.2,153.4 992.5,154.4 985.2,154.7 977.9,154.1 970.8,152.8 964.4,150.9 959.2,148.6 905.6,117.4 855.7,88.5 809.1,61.4 765.4,36.0 724.4,12.1 685.8,-10.3 649.3,-31.5 614.9,-51.5 582.4,-70.4 551.6,-88.3 522.3,-105.3 494.5,-121.5 468.1,-136.9 442.9,-151.5 418.9,-165.4 396.0,-178.8 374.1,-191.5 353.2,-203.7 333.2,-215.3 314.0,-226.5 295.5,-237.2 277.8,-247.5 260.8,-257.4 244.5,-266.9 228.8,-276.0 213.6,-284.8 199.0,-293.3 185.0,-301.5 171.4,-309.4 158.3,-317.0" fill="#0e7a0e"/>
<polygon points="165.3,-318.2 178.5,-310.6 192.1,-302.7 206.3,-294.6 221.0,-286.2 236.2,-277.4 252.1,-268.3 268.5,-258.8 285.6,-249.0 303.4,-238.8 322.0,-228.1 341.3,-217.0 361.5,-205.4 382.6,-193.3 404.6,-180.7 427.6,-167.4 451.8,-153.6 477.1,-139.0 503.6,-123.7 531.6,-107.7 561.0,-90.8 592.0,-73.0 624.6,-54.2 659.2,-34.4 695.8,-13.3 734.6,8.9 775.8,32.6 819.6,57.8 866.4,84.7 916.4,113.4 969.7,144.0 973.1,145.6 976.6,146.6 980.4,147.3 984.3,147.6 988.2,147.4 991.9,146.9 995.4,145.9 1055.5,123.0 1112.8,101.2 1167.2,80.5 1219.0,60.9 1268.4,42.1 1315.4,24.2 1360.3,7.2 1403.2,-9.2 1444.3,-24.8 1483.6,-39.7 1521.2,-54.0 1557.4,-67.7 1592.1,-80.9 1625.4,-93.6 1657.5,-105.8 1688.3,-117.5 1718.0,-128.8 1746.6,-139.7 1774.2,-150.2 1800.9,-160.3 1826.6,-170.1 1851.4,-179.5 1875.5,-188.6 1898.7,-197.5 1921.2,-206.0 1943.0,-214.3 1964.1,-222.3 1984.5,-230.1 2004.3,-237.6 2023.6,-244.9 2032.2,-243.7 2013.0,-236.3 1993.3,-228.7 1972.9,-220.9 1951.9,-212.8 1930.2,-204.5 1907.7,-195.9 1884.6,-187.0 1860.6,-177.8 1835.8,-168.3 1810.1,-158.4 1783.6,-148.2 1756.0,-137.7 1727.5,-126.7 1697.8,-115.3 1667.0,-103.5 1635.0,-91.2 1601.7,-78.5 1567.0,-65.2 1530.9,-51.3 1493.3,-36.9 1454.0,-21.8 1413.0,-6.0 1370.1,10.4 1325.1,27.7 1278.1,45.7 1228.7,64.7 1176.9,84.5 1122.4,105.5 1065.0,127.5 1004.2,150.8 998.7,152.4 992.2,153.4 985.2,153.7 978.1,153.2 971.3,151.9 965.0,150.1 959.9,147.9 906.2,116.8 856.4,87.9 809.7,60.8 766.0,35.5 724.9,11.6 686.3,-10.8 649.8,-32.0 615.4,-51.9 582.9,-70.8 552.0,-88.7 522.8,-105.7 495.0,-121.9 468.5,-137.2 443.4,-151.8 419.3,-165.8 396.4,-179.1 374.5,-191.8 353.6,-204.0 333.5,-215.6 314.3,-226.8 295.9,-237.5 278.2,-247.8 261.2,-257.6 244.8,-267.1 229.1,-276.3 213.9,-285.1 199.3,-293.5 185.3,-301.7 171.7,-309.6 158.6,-317.2" fill="#13a813"/>
<polygon points="164.8,-318.4 178.0,-310.8 191.7,-302.9 205.8,-294.8 220.5,-286.3 235.8,-277.6 251.6,-268.5 268.0,-259.0 285.1,-249.2 302.9,-239.0 321.5,-228.3 340.8,-217.2 361.0,-205.6 382.1,-193.5 404.1,-180.8 427.1,-167.6 451.3,-153.7 476.6,-139.2 503.1,-123.9 531.1,-107.9 560.5,-91.0 591.4,-73.2 624.1,-54.4 658.7,-34.5 695.3,-13.5 734.1,8.8 775.3,32.5 819.2,57.7 865.9,84.6 915.9,113.3 969.3,143.9 972.8,145.5 976.4,146.6 980.3,147.3 984.4,147.6 988.4,147.5 992.1,146.9 995.7,145.8 1055.8,123.0 1113.1,101.2 1167.6,80.5 1219.4,60.8 1268.7,42.1 1315.7,24.2 1360.7,7.1 1403.6,-9.2 1444.6,-24.8 1483.9,-39.8 1521.6,-54.1 1557.7,-67.8 1592.4,-81.0 1625.8,-93.7 1657.8,-105.9 1688.7,-117.6 1718.4,-128.9 1747.0,-139.8 1774.6,-150.2 1801.2,-160.4 1826.9,-170.1 1851.8,-179.6 1875.8,-188.7 1899.0,-197.6 1921.5,-206.1 1943.3,-214.4 1964.4,-222.4 1984.8,-230.2 2004.7,-237.7 2023.9,-245.0 2031.7,-244.1 2012.5,-236.8 1992.8,-229.2 1972.4,-221.4 1951.3,-213.3 1929.6,-205.0 1907.2,-196.4 1884.0,-187.5 1860.0,-178.3 1835.2,-168.8 1809.6,-159.0 1783.0,-148.8 1755.4,-138.2 1726.9,-127.3 1697.2,-115.9 1666.4,-104.1 1634.4,-91.9 1601.1,-79.1 1566.4,-65.8 1530.3,-52.0 1492.7,-37.5 1453.4,-22.5 1412.3,-6.8 1369.4,9.7 1324.5,26.9 1277.4,44.9 1228.0,63.9 1176.2,83.7 1121.7,104.6 1064.3,126.6 1003.5,149.9 998.2,151.4 991.9,152.4 985.2,152.7 978.3,152.2 971.7,151.0 965.7,149.3 960.6,147.2 906.9,116.2 857.0,87.3 810.3,60.3 766.6,34.9 725.5,11.1 686.8,-11.3 650.4,-32.4 615.9,-52.4 583.4,-71.3 552.5,-89.1 523.2,-106.1 495.4,-122.2 469.0,-137.6 443.8,-152.2 419.7,-166.1 396.8,-179.4 374.9,-192.1 354.0,-204.3 333.9,-215.9 314.7,-227.1 296.2,-237.8 278.5,-248.0 261.5,-257.9 245.1,-267.4 229.4,-276.5 214.3,-285.3 199.6,-293.8 185.6,-301.9 172.0,-309.8 158.9,-317.4" fill="#18cc18"/>
<polygon points="164.3,-318.5 177.5,-310.9 191.2,-303.1 205.4,-294.9 220.0,-286.5 235.3,-277.7 251.1,-268.6 267.6,-259.2 284.7,-249.4 302.5,-239.1 321.0,-228.5 340.3,-217.4 360.5,-205.8 381.6,-193.7 403.6,-181.0 426.6,-167.8 450.7,-153.9 476.1,-139.3 502.6,-124.1 530.6,-108.0 560.0,-91.1 590.9,-73.3 623.6,-54.5 658.2,-34.7 694.8,-13.6 733.6,8.7 774.8,32.3 818.7,57.6 865.5,84.4 915.5,113.2 968.9,143.8 972.5,145.5 976.3,146.6 980.3,147.3 984.4,147.6 988.5,147.5 992.3,146.9 996.0,145.8 1056.1,122.9 1113.5,101.2 1167.9,80.5 1219.7,60.8 1269.1,42.0 1316.1,24.1 1361.0,7.0 1403.9,-9.3 1445.0,-24.9 1484.3,-39.8 1522.0,-54.1 1558.1,-67.9 1592.8,-81.1 1626.1,-93.7 1658.2,-105.9 1689.0,-117.7 1718.7,-128.9 1747.3,-139.8 1775.0,-150.3 1801.6,-160.4 1827.3,-170.2 1852.1,-179.7 1876.2,-188.8 1899.4,-197.6 1921.9,-206.2 1943.6,-214.5 1964.7,-222.5 1985.2,-230.2 2005.0,-237.8 2024.2,-245.1 2031.2,-244.5 2012.0,-237.2 1992.2,-229.6 1971.9,-221.8 1950.8,-213.8 1929.1,-205.5 1906.7,-196.9 1883.5,-188.0 1859.5,-178.8 1834.7,-169.3 1809.0,-159.5 1782.4,-149.3 1754.9,-138.8 1726.3,-127.9 1696.6,-116.5 1665.8,-104.7 1633.8,-92.5 1600.5,-79.7 1565.8,-66.4 1529.7,-52.6 1492.1,-38.2 1452.8,-23.2 1411.7,-7.5 1368.8,9.0 1323.8,26.2 1276.8,44.2 1227.4,63.1 1175.5,82.9 1121.0,103.8 1063.6,125.8 1002.9,149.0 997.8,150.5 991.7,151.4 985.1,151.7 978.5,151.2 972.2,150.0 966.3,148.5 961.3,146.5 907.5,115.6 857.6,86.7 810.9,59.7 767.2,34.4 726.1,10.6 687.4,-11.8 650.9,-32.9 616.4,-52.8 583.8,-71.7 553.0,-89.5 523.7,-106.5 495.9,-122.6 469.4,-137.9 444.2,-152.5 420.2,-166.4 397.2,-179.7 375.3,-192.4 354.3,-204.6 334.3,-216.2 315.0,-227.3 296.6,-238.0 278.8,-248.3 261.8,-258.2 245.5,-267.6 229.7,-276.8 214.6,-285.5 199.9,-294.0 185.9,-302.2 172.3,-310.1 159.1,-317.7" fill="#1bea1b"/>
<polygon points="163.8,-318.7 177.0,-311.1 190.7,-303.3 204.8,-295.1 219.5,-286.7 234.8,-277.9 250.6,-268.8 267.0,-259.4 284.1,-249.5 301.9,-239.3 320.4,-228.7 339.8,-217.5 359.9,-206.0 381.0,-193.9 403.0,-181.2 426.0,-168.0 450.2,-154.1 475.5,-139.5 502.1,-124.3 530.0,-108.2 559.4,-91.3 590.4,-73.5 623.1,-54.7 657.6,-34.8 694.2,-13.8 733.0,8.5 774.3,32.2 818.1,57.4 864.9,84.3 914.9,113.0 968.4,143.7 972.2,145.4 976.1,146.6 980.2,147.3 984.5,147.6 988.7,147.5 992.6,146.9 996.4,145.8 1056.5,122.9 1113.9,101.1 1168.3,80.4 1220.1,60.7 1269.5,41.9 1316.5,24.0 1361.4,7.0 1404.4,-9.3 1445.4,-25.0 1484.7,-39.9 1522.4,-54.2 1558.5,-68.0 1593.2,-81.2 1626.6,-93.8 1658.6,-106.0 1689.5,-117.7 1719.2,-129.0 1747.8,-139.9 1775.4,-150.4 1802.0,-160.5 1827.7,-170.3 1852.6,-179.8 1876.6,-188.9 1899.8,-197.7 1922.3,-206.3 1944.1,-214.6 1965.2,-222.6 1985.6,-230.3 2005.4,-237.9 2024.6,-245.2 2030.7,-245.0 2011.5,-237.7 1991.7,-230.1 1971.3,-222.3 1950.3,-214.3 1928.5,-206.0 1906.1,-197.4 1882.9,-188.5 1858.9,-179.4 1834.1,-169.9 1808.4,-160.1 1781.8,-149.9 1754.3,-139.4 1725.7,-128.5 1696.0,-117.1 1665.2,-105.3 1633.2,-93.1 1599.9,-80.4 1565.2,-67.1 1529.1,-53.3 1491.4,-38.9 1452.1,-23.9 1411.0,-8.2 1368.1,8.2 1323.2,25.4 1276.1,43.4 1226.7,62.2 1174.8,82.1 1120.3,102.9 1062.9,124.8 1002.2,148.0 997.2,149.5 991.4,150.4 985.1,150.6 978.8,150.1 972.7,149.0 966.9,147.6 962.0,145.8 908.3,114.9 858.3,86.1 811.6,59.1 767.8,33.8 726.7,10.1 688.0,-12.3 651.5,-33.4 617.0,-53.3 584.4,-72.1 553.5,-90.0 524.2,-106.9 496.3,-123.0 469.9,-138.3 444.6,-152.9 420.6,-166.8 397.6,-180.1 375.7,-192.8 354.7,-204.9 334.7,-216.5 315.4,-227.7 296.9,-238.3 279.2,-248.6 262.2,-258.5 245.8,-267.9 230.1,-277.0 214.9,-285.8 200.3,-294.3 186.2,-302.4 172.6,-310.3 159.5,-317.9" fill="#1eff1e"/>
<polygon points="51.4,-261.4 64.1,-251.7 77.4,-241.6 91.2,-231.0 105.5,-220.0 120.5,-208.5 136.2,-196.5 152.5,-184.0 169.6,-170.9 187.6,-157.2 206.3,-142.8 226.1,-127.7 246.8,-111.9 268.6,-95.2 291.6,-77.6 315.8,-59.0 341.4,-39.4 368.5,-18.7 397.3,3.3 427.8,26.7 460.2,51.5 494.8,78.0 531.8,106.3 571.4,136.6 613.8,169.1 659.5,204.1 708.8,241.8 762.2,282.7 820.1,327.0 883.3,375.4 945.1,422.7 1017.6,387.2 1093.0,350.3 1163.7,315.7 1229.9,283.2 1292.1,252.8 1350.7,224.1 1406.0,197.0 1458.2,171.4 1507.6,147.2 1554.4,124.3 1598.8,102.5 1641.0,81.9 1681.2,62.2 1719.4,43.5 1755.9,25.6 1790.7,8.5 1824.0,-7.8 1855.9,-23.4 1886.4,-38.3 1915.6,-52.6 1943.6,-66.4 1970.6,-79.5 1996.4,-92.2 2021.3,-104.4 2045.2,-116.1 2068.3,-127.4 2090.5,-138.3 2112.0,-148.8 2132.6,-158.9 2152.6,-168.7 2165.1,-166.1 2145.3,-156.2 2124.7,-146.0 2103.4,-135.4 2081.3,-124.4 2058.4,-113.0 2034.6,-101.1 2009.8,-88.8 1984.1,-76.0 1957.3,-62.7 1929.4,-48.8 1900.3,-34.3 1869.9,-19.2 1838.2,-3.4 1805.0,13.1 1770.3,30.4 1734.0,48.5 1695.8,67.4 1655.8,87.4 1613.6,108.3 1569.3,130.4 1522.6,153.6 1473.2,178.2 1421.1,204.2 1365.8,231.6 1307.2,260.8 1244.9,291.8 1178.6,324.8 1107.9,360.0 1032.3,397.6 951.2,437.9 935.5,436.5 866.8,382.9 803.9,333.9 746.3,289.0 693.3,247.7 644.3,209.5 598.9,174.1 556.7,141.3 517.4,110.7 480.8,82.1 446.5,55.3 414.3,30.2 384.0,6.7 355.6,-15.5 328.7,-36.4 303.3,-56.2 279.3,-74.9 256.6,-92.7 235.0,-109.5 214.5,-125.5 195.0,-140.7 176.4,-155.2 158.7,-169.0 141.7,-182.2 125.6,-194.8 110.1,-206.8 95.3,-218.4 81.1,-229.4 67.5,-240.1 54.4,-250.3 41.8,-260.1" fill="#470808"/>
<polygon points="50.8,-261.6 63.5,-251.9 76.8,-241.7 90.6,-231.2 104.9,-220.2 119.9,-208.7 135.6,-196.7 151.9,-184.2 169.0,-171.1 186.9,-157.4 205.7,-143.0 225.4,-127.9 246.1,-112.0 267.9,-95.3 290.9,-77.8 315.1,-59.2 340.8,-39.6 367.9,-18.8 396.6,3.2 427.1,26.5 459.5,51.4 494.1,77.9 531.1,106.2 570.7,136.5 613.1,169.0 658.8,204.0 708.2,241.8 761.5,282.6 819.5,327.0 882.6,375.3 945.1,423.0 1018.0,387.3 1093.5,350.3 1164.1,315.7 1230.3,283.2 1292.6,252.8 1351.2,224.0 1406.4,197.0 1458.7,171.4 1508.0,147.2 1554.9,124.3 1599.3,102.5 1641.5,81.8 1681.6,62.1 1719.9,43.4 1756.4,25.5 1791.2,8.5 1824.5,-7.8 1856.3,-23.4 1886.8,-38.4 1916.0,-52.7 1944.1,-66.4 1971.0,-79.6 1996.9,-92.3 2021.7,-104.5 2045.7,-116.2 2068.7,-127.5 2091.0,-138.4 2112.4,-148.9 2133.1,-159.0 2153.1,-168.8 2164.5,-166.6 2144.7,-156.7 2124.1,-146.5 2102.8,-135.9 2080.7,-124.9 2057.8,-113.5 2033.9,-101.7 2009.2,-89.4 1983.4,-76.6 1956.6,-63.3 1928.7,-49.4 1899.6,-35.0 1869.2,-19.9 1837.5,-4.1 1804.3,12.4 1769.6,29.6 1733.2,47.7 1695.1,66.7 1655.0,86.6 1612.9,107.5 1568.5,129.5 1521.8,152.8 1472.4,177.3 1420.3,203.2 1365.0,230.7 1306.4,259.8 1244.1,290.7 1177.8,323.7 1107.0,358.8 1031.4,396.4 950.3,436.7 936.6,435.4 867.6,382.1 804.8,333.2 747.1,288.3 694.0,247.0 645.0,208.9 599.5,173.5 557.3,140.7 518.0,110.1 481.4,81.6 447.0,54.9 414.8,29.8 384.5,6.2 356.1,-15.9 329.2,-36.8 303.8,-56.6 279.8,-75.3 257.0,-93.0 235.4,-109.8 214.9,-125.8 195.4,-141.0 176.8,-155.5 159.0,-169.3 142.1,-182.5 125.9,-195.1 110.4,-207.1 95.6,-218.6 81.4,-229.7 67.8,-240.3 54.7,-250.5 42.1,-260.3" fill="#7a0e0e"/>
<polygon points="50.3,-261.8 63.0,-252.1 76.2,-241.9 90.0,-231.4 104.3,-220.4 119.3,-208.9 134.9,-196.9 151.3,-184.4 168.4,-171.3 186.3,-157.6 205.1,-143.2 224.8,-128.1 245.5,-112.2 267.3,-95.5 290.2,-77.9 314.5,-59.4 340.1,-39.8 367.2,-19.0 395.9,3.0 426.4,26.4 458.9,51.2 493.5,77.7 530.4,106.0 570.0,136.4 612.5,168.9 658.2,203.9 707.5,241.7 760.9,282.5 818.8,326.9 882.0,375.3 945.0,423.3 1018.4,387.3 1093.9,350.3 1164.5,315.7 1230.8,283.3 1293.0,252.8 1351.6,224.0 1406.9,197.0 1459.1,171.4 1508.5,147.2 1555.3,124.2 1599.8,102.5 1642.0,81.8 1682.1,62.1 1720.4,43.4 1756.8,25.5 1791.7,8.4 1825.0,-7.9 1856.8,-23.5 1887.3,-38.4 1916.5,-52.8 1944.5,-66.5 1971.5,-79.7 1997.3,-92.4 2022.2,-104.6 2046.1,-116.3 2069.2,-127.6 2091.4,-138.5 2112.8,-149.0 2133.5,-159.1 2153.5,-168.9 2163.9,-167.1 2144.1,-157.2 2123.5,-147.0 2102.2,-136.5 2080.1,-125.5 2057.1,-114.1 2033.3,-102.3 2008.5,-90.0 1982.8,-77.2 1956.0,-63.9 1928.0,-50.1 1898.9,-35.6 1868.5,-20.5 1836.8,-4.8 1803.6,11.7 1768.9,28.9 1732.5,47.0 1694.3,65.9 1654.3,85.8 1612.1,106.7 1567.8,128.7 1521.0,151.9 1471.6,176.4 1419.4,202.3 1364.2,229.7 1305.6,258.8 1243.3,289.7 1176.9,322.6 1106.2,357.7 1030.5,395.2 949.5,435.5 937.7,434.4 868.5,381.3 805.6,332.4 747.8,287.6 694.7,246.4 645.7,208.3 600.2,173.0 558.0,140.2 518.6,109.6 481.9,81.1 447.6,54.4 415.3,29.3 385.1,5.8 356.5,-16.4 329.7,-37.2 304.3,-57.0 280.2,-75.7 257.5,-93.4 235.8,-110.2 215.3,-126.1 195.8,-141.3 177.2,-155.8 159.4,-169.6 142.5,-182.7 126.3,-195.3 110.8,-207.4 96.0,-218.9 81.7,-230.0 68.1,-240.6 55.0,-250.8 42.4,-260.5" fill="#a81313"/>
<polygon points="49.7,-262.0 62.4,-252.3 75.6,-242.1 89.4,-231.6 103.7,-220.6 118.7,-209.1 134.3,-197.1 150.7,-184.6 167.8,-171.5 185.7,-157.8 204.4,-143.4 224.1,-128.3 244.8,-112.4 266.6,-95.7 289.6,-78.1 313.8,-59.5 339.4,-39.9 366.5,-19.2 395.2,2.8 425.7,26.2 458.2,51.1 492.8,77.6 529.7,105.9 569.3,136.2 611.8,168.8 657.5,203.8 706.8,241.6 760.2,282.5 818.2,326.9 881.4,375.3 945.0,423.6 1018.8,387.4 1094.3,350.4 1165.0,315.7 1231.2,283.3 1293.5,252.8 1352.1,224.0 1407.4,196.9 1459.6,171.3 1509.0,147.1 1555.8,124.2 1600.2,102.4 1642.4,81.7 1682.6,62.0 1720.8,43.3 1757.3,25.4 1792.1,8.4 1825.4,-8.0 1857.2,-23.6 1887.7,-38.5 1916.9,-52.8 1945.0,-66.6 1971.9,-79.8 1997.7,-92.4 2022.6,-104.6 2046.5,-116.4 2069.6,-127.6 2091.8,-138.5 2113.3,-149.0 2133.9,-159.2 2153.9,-169.0 2163.4,-167.6 2143.5,-157.8 2122.9,-147.6 2101.6,-137.0 2079.4,-126.1 2056.5,-114.7 2032.6,-102.9 2007.9,-90.6 1982.1,-77.8 1955.3,-64.6 1927.4,-50.7 1898.2,-36.3 1867.8,-21.2 1836.1,-5.5 1802.9,10.9 1768.1,28.1 1731.7,46.2 1693.6,65.1 1653.5,85.0 1611.3,105.8 1567.0,127.8 1520.2,151.0 1470.8,175.4 1418.6,201.3 1363.3,228.7 1304.7,257.7 1242.4,288.6 1176.1,321.5 1105.3,356.5 1029.6,394.0 948.6,434.2 938.9,433.3 869.4,380.4 806.4,331.7 748.6,286.9 695.4,245.7 646.3,207.6 600.9,172.4 558.6,139.6 519.2,109.1 482.5,80.6 448.1,53.9 415.9,28.9 385.6,5.4 357.0,-16.8 330.1,-37.6 304.7,-57.4 280.7,-76.0 257.9,-93.7 236.3,-110.5 215.7,-126.5 196.2,-141.6 177.5,-156.1 159.8,-169.9 142.8,-183.0 126.6,-195.6 111.1,-207.7 96.3,-219.2 82.1,-230.2 68.4,-240.8 55.3,-251.0 42.7,-260.8" fill="#cc1818"/>
<polygon points="49.1,-262.2 61.8,-252.4 75.0,-242.3 88.8,-231.8 103.1,-220.8 118.1,-209.3 133.7,-197.3 150.0,-184.8 167.1,-171.7 185.0,-157.9 203.8,-143.6 223.5,-128.5 244.2,-112.6 266.0,-95.9 288.9,-78.3 313.1,-59.7 338.7,-40.1 365.8,-19.3 394.5,2.7 425.0,26.1 457.5,50.9 492.1,77.4 529.0,105.8 568.6,136.1 611.1,168.6 656.8,203.7 706.1,241.5 759.6,282.4 817.5,326.8 880.8,375.2 944.9,423.8 1019.2,387.4 1094.8,350.4 1165.4,315.8 1231.7,283.3 1293.9,252.8 1352.5,224.0 1407.8,196.9 1460.0,171.3 1509.4,147.1 1556.3,124.2 1600.7,102.4 1642.9,81.7 1683.0,62.0 1721.3,43.2 1757.8,25.4 1792.6,8.3 1825.9,-8.0 1857.7,-23.6 1888.2,-38.6 1917.4,-52.9 1945.4,-66.6 1972.3,-79.8 1998.2,-92.5 2023.1,-104.7 2047.0,-116.4 2070.0,-127.7 2092.3,-138.6 2113.7,-149.1 2134.4,-159.3 2154.3,-169.0 2162.8,-168.1 2142.9,-158.3 2122.3,-148.1 2101.0,-137.6 2078.8,-126.6 2055.9,-115.3 2032.0,-103.5 2007.2,-91.2 1981.5,-78.5 1954.6,-65.2 1926.7,-51.4 1897.5,-37.0 1867.1,-21.9 1835.4,-6.2 1802.2,10.2 1767.4,27.4 1731.0,45.4 1692.8,64.3 1652.7,84.2 1610.6,105.0 1566.2,127.0 1519.4,150.1 1470.0,174.5 1417.8,200.4 1362.5,227.7 1303.9,256.7 1241.6,287.6 1175.2,320.4 1104.4,355.4 1028.8,392.8 947.7,432.9 940.0,432.2 870.2,379.6 807.2,330.9 749.4,286.2 696.2,245.0 647.0,207.0 601.5,171.8 559.2,139.0 519.8,108.6 483.1,80.1 448.7,53.4 416.4,28.4 386.1,4.9 357.5,-17.2 330.6,-38.0 305.2,-57.8 281.1,-76.4 258.3,-94.1 236.7,-110.8 216.1,-126.8 196.6,-142.0 177.9,-156.4 160.2,-170.2 143.2,-183.3 127.0,-195.9 111.5,-207.9 96.6,-219.4 82.4,-230.5 68.7,-241.1 55.6,-251.3 43.0,-261.0" fill="#ea1b1b"/>
<polygon points="48.5,-262.4 61.2,-252.6 74.4,-242.5 88.1,-232.0 102.5,-221.0 117.4,-209.5 133.0,-197.5 149.4,-185.0 166.4,-171.9 184.3,-158.2 203.1,-143.8 222.8,-128.7 243.5,-112.8 265.2,-96.1 288.2,-78.5 312.4,-59.9 338.0,-40.3 365.1,-19.5 393.8,2.5 424.3,25.9 456.7,50.8 491.3,77.3 528.3,105.6 567.8,136.0 610.3,168.5 656.0,203.6 705.4,241.4 758.8,282.3 816.8,326.7 880.0,375.2 944.9,424.2 1019.7,387.5 1095.3,350.4 1165.9,315.8 1232.2,283.3 1294.5,252.8 1353.1,224.0 1408.4,196.9 1460.6,171.3 1510.0,147.1 1556.8,124.1 1601.2,102.3 1643.4,81.6 1683.6,61.9 1721.8,43.2 1758.3,25.3 1793.1,8.2 1826.4,-8.1 1858.2,-23.7 1888.7,-38.7 1917.9,-53.0 1946.0,-66.7 1972.9,-79.9 1998.7,-92.6 2023.6,-104.8 2047.5,-116.5 2070.6,-127.8 2092.8,-138.7 2114.2,-149.2 2134.9,-159.3 2154.8,-169.1 2162.1,-168.7 2142.3,-158.9 2121.7,-148.7 2100.3,-138.2 2078.2,-127.2 2055.2,-115.9 2031.3,-104.1 2006.5,-91.9 1980.7,-79.1 1953.9,-65.9 1926.0,-52.1 1896.8,-37.7 1866.4,-22.6 1834.6,-7.0 1801.4,9.5 1766.6,26.6 1730.2,44.6 1692.0,63.5 1651.9,83.3 1609.8,104.1 1565.4,126.0 1518.6,149.2 1469.2,173.6 1416.9,199.3 1361.6,226.7 1303.0,255.6 1240.7,286.4 1174.3,319.2 1103.5,354.2 1027.8,391.5 946.7,431.6 941.1,431.1 871.2,378.7 808.1,330.1 750.2,285.4 697.0,244.3 647.8,206.3 602.2,171.1 559.9,138.4 520.5,108.0 483.7,79.5 449.3,52.9 417.0,27.9 386.6,4.5 358.1,-17.6 331.1,-38.5 305.7,-58.2 281.6,-76.8 258.8,-94.5 237.2,-111.2 216.6,-127.2 197.0,-142.3 178.4,-156.8 160.6,-170.5 143.6,-183.7 127.4,-196.2 111.9,-208.2 97.0,-219.8 82.8,-230.8 69.1,-241.4 56.0,-251.5 43.4,-261.3" fill="#ff1e1e"/>
<polygon points="174.3,-318.9 187.6,-311.4 201.4,-303.5 215.7,-295.4 230.5,-287.0 245.9,-278.3 261.9,-269.3 278.4,-259.9 295.7,-250.1 313.6,-239.9 332.3,-229.3 351.8,-218.3 372.1,-206.8 393.3,-194.8 415.5,-182.2 438.7,-169.0 463.0,-155.3 488.4,-140.8 515.2,-125.7 543.2,-109.8 572.8,-93.0 603.9,-75.3 636.8,-56.7 671.5,-37.0 708.3,-16.2 747.2,5.9 788.6,29.3 832.6,54.3 879.5,80.9 929.6,109.3 982.8,139.4 983.3,139.7 983.3,139.6 983.2,139.6 983.2,139.6 983.7,139.5 1043.5,117.1 1100.7,95.6 1155.1,75.2 1206.8,55.8 1256.1,37.3 1303.1,19.6 1348.0,2.8 1390.9,-13.3 1432.0,-28.8 1471.3,-43.5 1509.0,-57.7 1545.2,-71.3 1579.9,-84.3 1613.3,-96.8 1645.4,-108.9 1676.3,-120.5 1706.1,-131.7 1734.8,-142.4 1762.4,-152.8 1789.2,-162.9 1815.0,-172.5 1839.9,-181.9 1864.0,-191.0 1887.3,-199.7 1909.9,-208.2 1931.7,-216.4 1952.9,-224.3 1973.4,-232.0 1993.3,-239.5 2012.6,-246.8 2022.9,-244.8 2003.6,-237.5 1983.8,-229.9 1963.4,-222.2 1942.3,-214.1 1920.5,-205.9 1898.0,-197.3 1874.8,-188.5 1850.7,-179.4 1825.9,-169.9 1800.2,-160.1 1773.5,-150.0 1745.9,-139.5 1717.3,-128.6 1687.6,-117.4 1656.7,-105.6 1624.7,-93.5 1591.3,-80.8 1556.6,-67.6 1520.5,-53.9 1482.8,-39.6 1443.5,-24.6 1402.5,-9.0 1359.6,7.3 1314.7,24.3 1267.7,42.2 1218.3,61.0 1166.5,80.6 1112.1,101.3 1054.8,123.1 994.0,146.2 990.1,147.2 985.0,147.6 979.7,147.3 974.8,146.1 971.3,144.6 917.3,113.6 867.4,84.9 820.6,58.1 776.8,32.9 735.6,9.2 696.8,-13.0 660.2,-34.1 625.7,-53.9 593.0,-72.7 562.0,-90.5 532.6,-107.4 504.7,-123.4 478.1,-138.7 452.8,-153.2 428.6,-167.1 405.6,-180.3 383.6,-193.0 362.5,-205.1 342.3,-216.7 323.0,-227.8 304.4,-238.4 286.6,-248.7 269.5,-258.5 253.0,-267.9 237.2,-277.0 222.0,-285.8 207.3,-294.3 193.1,-302.4 179.4,-310.3 166.2,-317.8" fill="#470808"/>
<polygon points="173.9,-319.1 187.2,-311.5 201.0,-303.7 215.2,-295.6 230.1,-287.2 245.4,-278.5 261.4,-269.5 278.0,-260.1 295.2,-250.3 313.1,-240.1 331.8,-229.5 351.3,-218.5 371.6,-207.0 392.8,-194.9 415.0,-182.4 438.2,-169.2 462.5,-155.4 487.9,-141.0 514.7,-125.8 542.7,-109.9 572.3,-93.2 603.4,-75.5 636.3,-56.9 671.0,-37.2 707.8,-16.4 746.7,5.7 788.1,29.2 832.1,54.1 879.0,80.7 929.2,109.2 982.4,139.4 983.1,139.6 983.2,139.6 983.3,139.7 983.4,139.6 984.0,139.5 1043.8,117.0 1101.0,95.6 1155.4,75.1 1207.1,55.7 1256.4,37.2 1303.4,19.6 1348.3,2.7 1391.3,-13.4 1432.3,-28.8 1471.7,-43.6 1509.4,-57.8 1545.5,-71.3 1580.3,-84.4 1613.7,-96.9 1645.8,-109.0 1676.7,-120.6 1706.4,-131.7 1735.1,-142.5 1762.8,-152.9 1789.5,-162.9 1815.3,-172.6 1840.2,-182.0 1864.3,-191.0 1887.6,-199.8 1910.2,-208.3 1932.1,-216.5 1953.2,-224.4 1973.8,-232.1 1993.7,-239.6 2013.0,-246.8 2022.4,-245.2 2003.1,-237.9 1983.3,-230.4 1962.8,-222.6 1941.7,-214.6 1920.0,-206.3 1897.5,-197.8 1874.2,-189.0 1850.2,-179.9 1825.3,-170.4 1799.6,-160.7 1773.0,-150.6 1745.3,-140.1 1716.7,-129.2 1687.0,-117.9 1656.1,-106.2 1624.1,-94.1 1590.7,-81.4 1556.1,-68.2 1519.9,-54.5 1482.2,-40.2 1442.9,-25.3 1401.9,-9.7 1359.0,6.6 1314.1,23.6 1267.0,41.5 1217.7,60.2 1165.9,79.8 1111.5,100.5 1054.2,122.2 993.4,145.3 989.7,146.3 984.9,146.7 980.0,146.3 975.4,145.3 971.9,143.9 918.0,113.0 868.0,84.4 821.2,57.5 777.3,32.4 736.1,8.7 697.3,-13.5 660.7,-34.5 626.2,-54.3 593.5,-73.1 562.5,-90.9 533.0,-107.8 505.1,-123.8 478.5,-139.0 453.2,-153.6 429.0,-167.4 406.0,-180.6 383.9,-193.3 362.9,-205.4 342.7,-217.0 323.3,-228.1 304.8,-238.7 287.0,-248.9 269.8,-258.8 253.4,-268.2 237.5,-277.3 222.3,-286.1 207.6,-294.5 193.4,-302.6 179.7,-310.5 166.5,-318.1" fill="#7a0e0e"/>
<polygon points="173.4,-319.2 186.7,-311.7 200.5,-303.9 214.8,-295.8 229.6,-287.4 244.9,-278.7 260.9,-269.6 277.5,-260.2 294.7,-250.5 312.6,-240.3 331.3,-229.7 350.8,-218.6 371.1,-207.1 392.3,-195.1 414.5,-182.5 437.7,-169.4 462.0,-155.6 487.4,-141.2 514.1,-126.0 542.2,-110.1 571.8,-93.3 602.9,-75.7 635.8,-57.0 670.5,-37.3 707.3,-16.5 746.2,5.6 787.6,29.1 831.6,54.0 878.6,80.6 928.7,109.0 982.1,139.3 982.9,139.6 983.1,139.7 983.4,139.7 983.6,139.6 984.3,139.5 1044.2,117.0 1101.4,95.5 1155.7,75.1 1207.5,55.7 1256.8,37.2 1303.8,19.5 1348.7,2.6 1391.6,-13.5 1432.7,-28.9 1472.0,-43.7 1509.7,-57.8 1545.9,-71.4 1580.6,-84.4 1614.0,-97.0 1646.1,-109.0 1677.0,-120.6 1706.8,-131.8 1735.5,-142.6 1763.2,-153.0 1789.9,-163.0 1815.7,-172.7 1840.6,-182.1 1864.7,-191.1 1888.0,-199.9 1910.6,-208.3 1932.4,-216.5 1953.6,-224.5 1974.1,-232.2 1994.0,-239.7 2013.3,-246.9 2021.9,-245.6 2002.6,-238.4 1982.8,-230.8 1962.3,-223.1 1941.2,-215.1 1919.4,-206.8 1896.9,-198.3 1873.7,-189.5 1849.7,-180.4 1824.8,-170.9 1799.1,-161.2 1772.4,-151.1 1744.8,-140.6 1716.1,-129.8 1686.4,-118.5 1655.6,-106.8 1623.5,-94.6 1590.2,-82.0 1555.5,-68.9 1519.3,-55.2 1481.6,-40.9 1442.3,-26.0 1401.3,-10.4 1358.3,5.9 1313.4,22.9 1266.4,40.7 1217.0,59.4 1165.2,79.0 1110.8,99.7 1053.5,121.4 992.8,144.4 989.3,145.3 984.9,145.7 980.3,145.4 975.9,144.4 972.6,143.2 918.6,112.4 868.6,83.8 821.8,57.0 777.9,31.9 736.7,8.2 697.9,-14.0 661.3,-35.0 626.7,-54.8 593.9,-73.5 562.9,-91.3 533.5,-108.1 505.5,-124.2 478.9,-139.4 453.6,-153.9 429.4,-167.8 406.4,-181.0 384.3,-193.6 363.2,-205.7 343.0,-217.3 323.7,-228.3 305.1,-239.0 287.3,-249.2 270.2,-259.0 253.7,-268.5 237.8,-277.5 222.6,-286.3 207.9,-294.7 193.7,-302.9 180.0,-310.7 166.7,-318.3" fill="#a81313"/>
<polygon points="172.9,-319.4 186.2,-311.9 200.0,-304.1 214.3,-296.0 229.1,-287.6 244.5,-278.8 260.4,-269.8 277.0,-260.4 294.2,-250.6 312.2,-240.5 330.8,-229.9 350.3,-218.8 370.6,-207.3 391.8,-195.3 414.0,-182.7 437.2,-169.6 461.4,-155.8 486.9,-141.3 513.6,-126.2 541.7,-110.2 571.3,-93.5 602.4,-75.8 635.3,-57.2 670.0,-37.5 706.8,-16.6 745.8,5.4 787.1,28.9 831.2,53.9 878.1,80.5 928.3,108.9 981.7,139.2 982.7,139.6 983.1,139.7 983.4,139.7 983.8,139.6 984.6,139.4 1044.5,117.0 1101.7,95.5 1156.1,75.1 1207.8,55.6 1257.1,37.1 1304.1,19.4 1349.0,2.6 1392.0,-13.5 1433.0,-29.0 1472.4,-43.7 1510.1,-57.9 1546.2,-71.5 1581.0,-84.5 1614.4,-97.1 1646.5,-109.1 1677.4,-120.7 1707.1,-131.9 1735.8,-142.7 1763.5,-153.1 1790.2,-163.1 1816.0,-172.8 1840.9,-182.1 1865.0,-191.2 1888.3,-199.9 1910.9,-208.4 1932.7,-216.6 1953.9,-224.6 1974.4,-232.3 1994.3,-239.7 2013.6,-247.0 2021.4,-246.1 2002.1,-238.8 1982.3,-231.3 1961.8,-223.5 1940.7,-215.6 1918.9,-207.3 1896.4,-198.8 1873.1,-190.0 1849.1,-180.9 1824.2,-171.5 1798.5,-161.7 1771.8,-151.6 1744.2,-141.2 1715.6,-130.3 1685.8,-119.1 1655.0,-107.4 1622.9,-95.3 1589.6,-82.6 1554.8,-69.5 1518.7,-55.8 1481.0,-41.5 1441.7,-26.7 1400.6,-11.1 1357.7,5.1 1312.8,22.1 1265.7,39.9 1216.4,58.6 1164.6,78.2 1110.1,98.8 1052.8,120.5 992.1,143.5 988.9,144.3 984.8,144.7 980.5,144.4 976.5,143.5 973.3,142.5 919.3,111.8 869.3,83.2 822.4,56.4 778.5,31.3 737.3,7.7 698.4,-14.5 661.8,-35.4 627.2,-55.2 594.4,-73.9 563.4,-91.7 534.0,-108.5 506.0,-124.5 479.4,-139.7 454.0,-154.3 429.8,-168.1 406.8,-181.3 384.7,-193.9 363.6,-206.0 343.4,-217.6 324.0,-228.6 305.5,-239.3 287.6,-249.5 270.5,-259.3 254.0,-268.7 238.1,-277.8 222.9,-286.5 208.2,-295.0 194.0,-303.1 180.3,-310.9 167.0,-318.5" fill="#cc1818"/>
<polygon points="172.5,-319.6 185.8,-312.0 199.6,-304.2 213.8,-296.1 228.6,-287.7 244.0,-279.0 259.9,-270.0 276.5,-260.6 293.7,-250.8 311.7,-240.6 330.3,-230.0 349.8,-219.0 370.1,-207.5 391.3,-195.4 413.5,-182.9 436.7,-169.7 460.9,-155.9 486.4,-141.5 513.1,-126.3 541.2,-110.4 570.8,-93.6 601.9,-76.0 634.8,-57.3 669.5,-37.6 706.3,-16.8 745.3,5.3 786.7,28.8 830.7,53.8 877.6,80.4 927.8,108.8 981.3,139.1 982.4,139.5 983.0,139.7 983.5,139.7 984.0,139.6 984.9,139.4 1044.8,116.9 1102.0,95.4 1156.4,75.0 1208.2,55.6 1257.5,37.1 1304.5,19.4 1349.4,2.5 1392.3,-13.6 1433.4,-29.0 1472.7,-43.8 1510.4,-58.0 1546.6,-71.5 1581.3,-84.6 1614.7,-97.1 1646.8,-109.2 1677.7,-120.8 1707.5,-132.0 1736.2,-142.7 1763.9,-153.1 1790.6,-163.2 1816.4,-172.9 1841.3,-182.2 1865.4,-191.3 1888.7,-200.0 1911.2,-208.5 1933.1,-216.7 1954.3,-224.6 1974.8,-232.4 1994.7,-239.8 2014.0,-247.1 2020.9,-246.5 2001.6,-239.3 1981.8,-231.7 1961.3,-224.0 1940.2,-216.0 1918.4,-207.8 1895.9,-199.3 1872.6,-190.5 1848.6,-181.4 1823.7,-172.0 1798.0,-162.3 1771.3,-152.2 1743.7,-141.7 1715.0,-130.9 1685.3,-119.7 1654.4,-108.0 1622.3,-95.9 1589.0,-83.2 1554.2,-70.1 1518.1,-56.5 1480.4,-42.2 1441.1,-27.3 1400.0,-11.8 1357.1,4.4 1312.1,21.4 1265.1,39.2 1215.7,57.8 1163.9,77.4 1109.5,98.0 1052.2,119.7 991.5,142.6 988.5,143.4 984.7,143.7 980.8,143.4 977.1,142.6 973.9,141.8 919.9,111.2 869.9,82.6 823.0,55.9 779.1,30.8 737.8,7.2 698.9,-14.9 662.3,-35.9 627.7,-55.6 594.9,-74.3 563.9,-92.1 534.4,-108.9 506.4,-124.9 479.8,-140.1 454.4,-154.6 430.2,-168.4 407.2,-181.6 385.1,-194.2 364.0,-206.3 343.8,-217.8 324.4,-228.9 305.8,-239.5 288.0,-249.7 270.8,-259.5 254.3,-269.0 238.5,-278.1 223.2,-286.8 208.5,-295.2 194.2,-303.3 180.5,-311.2 167.3,-318.7" fill="#ea1b1b"/>
<polygon points="172.0,-319.8 185.3,-312.2 199.0,-304.4 213.3,-296.3 228.1,-287.9 243.5,-279.2 259.4,-270.2 276.0,-260.8 293.2,-251.0 311.1,-240.8 329.8,-230.2 349.3,-219.2 369.6,-207.7 390.8,-195.6 412.9,-183.1 436.1,-169.9 460.4,-156.1 485.8,-141.7 512.6,-126.5 540.7,-110.6 570.2,-93.8 601.4,-76.2 634.2,-57.5 669.0,-37.8 705.7,-17.0 744.7,5.1 786.1,28.6 830.2,53.6 877.1,80.2 927.3,108.7 980.9,139.0 982.2,139.5 982.9,139.7 983.6,139.7 984.3,139.7 985.2,139.4 1045.2,116.9 1102.4,95.4 1156.8,74.9 1208.6,55.5 1257.9,37.0 1304.9,19.3 1349.8,2.5 1392.7,-13.7 1433.8,-29.1 1473.2,-43.9 1510.9,-58.0 1547.0,-71.6 1581.8,-84.7 1615.2,-97.2 1647.3,-109.3 1678.2,-120.9 1707.9,-132.1 1736.6,-142.8 1764.3,-153.2 1791.0,-163.3 1816.8,-172.9 1841.7,-182.3 1865.8,-191.4 1889.1,-200.1 1911.7,-208.6 1933.5,-216.8 1954.7,-224.7 1975.2,-232.4 1995.1,-239.9 2014.4,-247.2 2020.4,-247.0 2001.1,-239.7 1981.2,-232.2 1960.8,-224.5 1939.6,-216.5 1917.8,-208.3 1895.3,-199.8 1872.0,-191.0 1848.0,-181.9 1823.1,-172.5 1797.4,-162.8 1770.7,-152.8 1743.1,-142.3 1714.4,-131.5 1684.7,-120.3 1653.8,-108.6 1621.7,-96.5 1588.3,-83.9 1553.6,-70.8 1517.4,-57.1 1479.7,-42.9 1440.4,-28.1 1399.3,-12.6 1356.4,3.7 1311.5,20.6 1264.4,38.4 1215.0,57.0 1163.2,76.6 1108.8,97.1 1051.5,118.8 990.9,141.6 988.1,142.4 984.6,142.6 981.1,142.4 977.7,141.7 974.7,141.1 920.7,110.5 870.6,82.0 823.7,55.3 779.7,30.2 738.4,6.7 699.5,-15.5 662.9,-36.4 628.2,-56.1 595.4,-74.8 564.4,-92.5 534.9,-109.3 506.9,-125.3 480.3,-140.5 454.9,-155.0 430.7,-168.8 407.6,-182.0 385.5,-194.6 364.4,-206.6 344.2,-218.2 324.8,-229.2 306.2,-239.9 288.3,-250.1 271.2,-259.8 254.7,-269.3 238.8,-278.3 223.5,-287.1 208.8,-295.5 194.6,-303.6 180.9,-311.4 167.6,-319.0" fill="#ff1e1e"/>
</g>
<polyline points="540.0,128.0 708.7,262.4" fill="none" stroke="#19d2ff" stroke-width="2.2" stroke-linejoin="round"/>
<polyline points="1224.5,305.4 1320.0,256.5 1561.9,137.9 1640.0,98.7" fill="none" stroke="#19d2ff" stroke-width="2.2" stroke-linejoin="round"/>
<polyline points="708.7,262.4 750.3,242.1" fill="none" stroke="#14a0ff" stroke-width="2.2" stroke-linejoin="round"/>
<polyline points="1182.6,274.8 1224.5,305.9" fill="none" stroke="#14a0ff" stroke-width="2.2" stroke-linejoin="round"/>
<polyline points="750.3,242.1 772.9,255.2 803.4,295.8 833.8,331.4 864.3,356.0 904.9,389.5 944.4,420.0 996.1,394.8 1062.1,361.2 1097.7,331.4 1133.2,298.4 1149.4,291.2 1182.6,274.8" fill="none" stroke="#0a64ff" stroke-width="2.4" stroke-linejoin="round"/>
</g>
<filter id="nolcd" x="0" y="0" width="1640" height="827" filterUnits="userSpaceOnUse" color-interpolation-filters="sRGB"><feOffset dx="0" dy="0"/></filter><g font-family="Liberation Sans, Arial, sans-serif" filter="url(#nolcd)"><defs><linearGradient id="tb" x1="0" y1="0" x2="0" y2="1"><stop offset="0" stop-color="#41464d"/><stop offset="1" stop-color="#2e3237"/></linearGradient></defs>
<rect x="0.0" y="0.0" width="1640.0" height="29.0" fill="url(#tb)"/>
<path d="M8,6.5 H19.5 L21.5,8.5 V19.5 L19.5,21.5 H8 Q6.5,21.5 6.5,20 V8 Q6.5,6.5 8,6.5Z" fill="#1a6cf0" stroke="#e8eefc" stroke-width="1"/>
<path d="M17.2,11.2 Q15.6,10 13.8,10 Q10.3,10.3 10.3,14 Q10.3,17.7 13.8,18 Q15.6,18 17.2,16.8" fill="none" stroke="#fff" stroke-width="1.7" stroke-linecap="round"/>
<g transform="translate(38.5,13.7) rotate(45)" fill="#dcdcdc"><rect x="-2.2" y="-7.2" width="4.4" height="6.4" rx="0.8"/><rect x="-3.6" y="-1.4" width="7.2" height="1.6" rx="0.6"/><rect x="-0.6" y="0" width="1.2" height="7"/></g>
<text x="672.1" y="19.1" font-size="13" fill="#e4e4e4" textLength="295.8" lengthAdjust="spacingAndGlyphs">CE5_ringing_tower-AntiWarping - UltiMaker Cura</text>
<path d="M1572.5,11.5 L1577.8,16.8 L1583.1,11.5" fill="none" stroke="#e4e4e4" stroke-width="1.3"/>
<path d="M1596.7,16.5 L1602,11.2 L1607.3,16.5" fill="none" stroke="#e4e4e4" stroke-width="1.3"/>
<circle cx="1626" cy="14" r="9" fill="#ececec"/>
<path d="M1622,10 L1630,18 M1630,10 L1622,18" stroke="#2e3237" stroke-width="1.4"/>
<rect x="0.0" y="29.0" width="1640.0" height="22.0" fill="#1e1e1e"/>
<text x="11.0" y="43.7" font-size="12" fill="#e2e2e2" textLength="17.3" lengthAdjust="spacingAndGlyphs">File</text>
<text x="51.0" y="43.7" font-size="12" fill="#e2e2e2" textLength="19.2" lengthAdjust="spacingAndGlyphs">Edit</text>
<text x="92.0" y="43.7" font-size="12" fill="#e2e2e2" textLength="23.8" lengthAdjust="spacingAndGlyphs">View</text>
<text x="138.1" y="43.7" font-size="12" fill="#e2e2e2" textLength="41.0" lengthAdjust="spacingAndGlyphs">Settings</text>
<text x="202.0" y="43.7" font-size="12" fill="#e2e2e2" textLength="55.0" lengthAdjust="spacingAndGlyphs">Extensions</text>
<text x="280.0" y="43.7" font-size="12" fill="#e2e2e2" textLength="61.0" lengthAdjust="spacingAndGlyphs">Preferences</text>
<text x="363.0" y="43.7" font-size="12" fill="#e2e2e2" textLength="23.2" lengthAdjust="spacingAndGlyphs">Help</text>
<path d="M11,45.6H17" stroke="#e2e2e2" stroke-width="1"/>
<path d="M51,45.6H57.5" stroke="#e2e2e2" stroke-width="1"/>
<path d="M92,45.6H99" stroke="#e2e2e2" stroke-width="1"/>
<path d="M138.1,45.6H144.5" stroke="#e2e2e2" stroke-width="1"/>
<path d="M209,45.6H214.5" stroke="#e2e2e2" stroke-width="1"/>
<path d="M288,45.6H292" stroke="#e2e2e2" stroke-width="1"/>
<path d="M363,45.6H371" stroke="#e2e2e2" stroke-width="1"/>
<rect x="0.0" y="51.0" width="1640.0" height="66.0" fill="#191919"/>
<g fill="#f4f4f4" stroke="#f4f4f4"><circle cx="32.9" cy="77.5" r="2.05" stroke="none"/><path d="M37,67.7V73.6L41.1,77.7M45,67.7V73.6L49.1,77.7" fill="none" stroke-width="3.9" stroke-linecap="round" stroke-linejoin="round"/></g>
<text x="56.0" y="78.5" font-size="15" fill="#f2f2f2" textLength="109.2" lengthAdjust="spacingAndGlyphs" stroke="#f2f2f2" stroke-width="0.35">UltiMaker Cura</text>
<text x="685.4" y="77.7" font-size="13" fill="#f0f0f0" textLength="53.0" lengthAdjust="spacingAndGlyphs">PREPARE</text>
<rect x="766.3" y="62.0" width="98.6" height="21.9" fill="#ffffff" rx="2.5"/>
<text x="788.4" y="77.7" font-size="13" fill="#1a1a1a" textLength="53.6" lengthAdjust="spacingAndGlyphs">PREVIEW</text>
<text x="893.6" y="77.7" font-size="13" fill="#f0f0f0" textLength="60.4" lengthAdjust="spacingAndGlyphs">MONITOR</text>
<rect x="1491.2" y="62.3" width="71.6" height="21.5" fill="none" rx="2" stroke="#f2f2f2" stroke-width="1"/>
<text x="1495.5" y="77.4" font-size="12" fill="#f2f2f2" textLength="63.0" lengthAdjust="spacingAndGlyphs">Marketplace</text>
<rect x="1577.0" y="65.0" width="4.1" height="4.1" fill="#f2f2f2" rx="1"/>
<rect x="1583.1" y="65.0" width="4.1" height="4.1" fill="#f2f2f2" rx="1"/>
<rect x="1589.2" y="65.0" width="4.1" height="4.1" fill="#f2f2f2" rx="1"/>
<rect x="1577.0" y="71.1" width="4.1" height="4.1" fill="#f2f2f2" rx="1"/>
<rect x="1583.1" y="71.1" width="4.1" height="4.1" fill="#f2f2f2" rx="1"/>
<rect x="1589.2" y="71.1" width="4.1" height="4.1" fill="#f2f2f2" rx="1"/>
<rect x="1577.0" y="77.2" width="4.1" height="4.1" fill="#f2f2f2" rx="1"/>
<rect x="1583.1" y="77.2" width="4.1" height="4.1" fill="#f2f2f2" rx="1"/>
<rect x="1589.2" y="77.2" width="4.1" height="4.1" fill="#f2f2f2" rx="1"/>
<circle cx="1618" cy="73" r="10.8" fill="none" stroke="#f2f2f2" stroke-width="1.4"/>
<text x="1618.0" y="78.6" font-size="15.5" fill="#f2f2f2" text-anchor="middle" stroke="#f2f2f2" stroke-width="0.3">W</text>
<rect x="44.5" y="95.5" width="1548.5" height="43.0" fill="#1f1f1f" rx="3" stroke="#555555" stroke-width="1"/>
<path d="M421.5,96V138M1176.5,96V138" stroke="#555555" stroke-width="1"/>
<text x="55.0" y="122.0" font-size="13" fill="#8a8a8a" textLength="57.5" lengthAdjust="spacingAndGlyphs">View type</text>
<text x="124.0" y="122.0" font-size="13" fill="#f0f0f0" textLength="64.0" lengthAdjust="spacingAndGlyphs">Layer view</text>
<path d="M401,114.5 L405,118.5 L409,114.5" fill="none" stroke="#e6e6e6" stroke-width="1.3"/>
<text x="432.0" y="122.0" font-size="13" fill="#8a8a8a" textLength="82.5" lengthAdjust="spacingAndGlyphs">Color scheme</text>
<text x="526.0" y="122.0" font-size="13" fill="#f0f0f0" textLength="57.5" lengthAdjust="spacingAndGlyphs">Line Type</text>
<path d="M1156,114.5 L1160,118.5 L1164,114.5" fill="none" stroke="#e6e6e6" stroke-width="1.3"/>
<g stroke="#f0f0f0" stroke-width="1.5" fill="#1f1f1f"><path d="M1190,110.7H1212M1190,117.2H1212M1190,123.7H1212"/><circle cx="1203" cy="110.7" r="2.1"/><circle cx="1207" cy="117.2" r="2.1"/><circle cx="1197" cy="123.7" r="2.1"/></g>
<text x="1221.2" y="122.0" font-size="13" fill="#ececec" textLength="168.8" lengthAdjust="spacingAndGlyphs">PLA Klipper E...ality - 0.2mm</text>
<rect x="1408.0" y="108.7" width="16.3" height="16.3" fill="#f0f0f0" rx="2.5"/>
<g fill="#1f1f1f"><path d="M1412.1,109.8l3.3,3.3l-3.3,3.3l-3.3,-3.3z M1420.2,109.8l3.3,3.3l-3.3,3.3l-3.3,-3.3z M1412.1,117.3l3.3,3.3l-3.3,3.3l-3.3,-3.3z M1420.2,117.3l3.3,3.3l-3.3,3.3l-3.3,-3.3z"/></g>
<text x="1433.1" y="121.8" font-size="13" fill="#ececec" textLength="17.5" lengthAdjust="spacingAndGlyphs">0%</text>
<g fill="none" stroke="#f0f0f0" stroke-width="1.5"><path d="M1469,108.4 L1475.6,114 L1469,119.6 L1462.4,114Z" stroke-linejoin="round"/><path d="M1461.6,116.5V124.8M1465.3,120.5V124.8M1469,122V124.8M1472.7,120.5V124.8M1476.4,116.5V124.8"/></g>
<text x="1486.6" y="121.8" font-size="13" fill="#ececec" textLength="18.8" lengthAdjust="spacingAndGlyphs">Off</text>
<g fill="none" stroke="#f0f0f0" stroke-width="1.5"><path d="M1525,108V117.5M1521.2,114 L1525,117.8 L1528.8,114"/><path d="M1518,116.5V120.5Q1518,121.5 1519,121.5H1531Q1532,121.5 1532,120.5V116.5"/><path d="M1517,124.5H1533" stroke-dasharray="1.6,1.6"/></g>
<text x="1542.5" y="121.8" font-size="13" fill="#ececec" textLength="8.8" lengthAdjust="spacingAndGlyphs">...</text>
<path d="M1573.5,114.5 L1577.5,118.5 L1581.5,114.5" fill="none" stroke="#e6e6e6" stroke-width="1.3"/>
<path d="M-1,301.5 H40 Q43,301.5 43,304.5 V604.5 Q43,607.5 40,607.5 H-1Z" fill="#1f1f1f" stroke="#3c3c3c" stroke-width="1"/>
<g transform="translate(22,322.6)" stroke="#f2f2f2" stroke-width="1.7" fill="none" stroke-linecap="round" stroke-linejoin="round"><path d="M0,-7.2V7.2M-7.2,0H7.2"/><path d="M-2.6,-4.9L0,-7.6L2.6,-4.9M-2.6,4.9L0,7.6L2.6,4.9M-4.9,-2.6L-7.6,0L-4.9,2.6M4.9,-2.6L7.6,0L4.9,2.6"/></g>
<g transform="translate(22,367.1)" stroke="#f2f2f2" stroke-width="1.6" fill="none" stroke-linejoin="round"><path d="M-7.2,-1.5V-5.2Q-7.2,-7.2 -5.2,-7.2H5.2Q7.2,-7.2 7.2,-5.2V5.2Q7.2,7.2 5.2,7.2H1.5"/><rect x="-7.2" y="1.6" width="5.6" height="5.6" rx="0.8"/><path d="M-1.5,1.5L3.8,-3.8M0,-4.2H4.2V0"/></g>
<g transform="translate(22,411)" stroke="#f2f2f2" stroke-width="1.6" fill="none" stroke-linecap="round"><path d="M-6.5,-3.8 A7.2,7.2 0 0 1 7.2,0.8"/><path d="M-7.2,-7.5V-3.3H-3"/><path d="M7,2.6 A7.2,7.2 0 0 1 -7,2.6" stroke-dasharray="0.1,3.1"/></g>
<g transform="translate(22,454.2)" stroke="#f2f2f2" stroke-width="1.5"><path d="M0,-7.5V7.5" stroke-dasharray="1.6,1.6" fill="none"/><path d="M-8,-5L-3.2,0L-8,5Z" fill="none" stroke-linejoin="round"/><path d="M8,-5L3.2,0L8,5Z" fill="#f2f2f2" stroke-linejoin="round"/></g>
<g transform="translate(22,498.5)" stroke="#f2f2f2" stroke-width="1.5" fill="none"><rect x="-7.3" y="-7.3" width="5.6" height="5.6" rx="0.6"/><rect x="1.7" y="1.7" width="5.6" height="5.6" rx="0.6"/><rect x="-7.3" y="1.7" width="5.6" height="5.6" rx="0.6" fill="#f2f2f2"/><path d="M2,-2L7,-7M5,-1.5L7.5,-4M1.5,-5L4,-7.5" stroke-width="1.8"/></g>
<g transform="translate(22,542.5)" stroke="#f2f2f2" stroke-width="1.5" fill="none" stroke-linejoin="round"><path d="M0,-8.5L5.8,-3L0,2.5L-5.8,-3Z"/><path d="M-7,0V7.5M-3.8,3.5V7.5M-0.6,5.5V7.5"/><path d="M3.6,3.6L7.6,7.6M7.6,3.6L3.6,7.6" stroke-width="1.6"/></g>
<circle cx="22" cy="587" r="18" fill="#4e4e4e"/>
<polygon points="22.0,579.8 24.1,585.1 29.8,585.5 25.4,589.1 26.8,594.6 22.0,591.6 17.2,594.6 18.6,589.1 14.2,585.5 19.9,585.1" fill="#f2f2f2"/>
<path d="M22,588L22.0,577.2" stroke="#f2f2f2" stroke-width="1.2"/><circle cx="22.0" cy="577.2" r="1.9" fill="#f2f2f2"/>
<path d="M22,588L32.3,584.7" stroke="#f2f2f2" stroke-width="1.2"/><circle cx="32.3" cy="584.7" r="1.9" fill="#f2f2f2"/>
<path d="M22,588L28.3,596.7" stroke="#f2f2f2" stroke-width="1.2"/><circle cx="28.3" cy="596.7" r="1.9" fill="#f2f2f2"/>
<path d="M22,588L15.7,596.7" stroke="#f2f2f2" stroke-width="1.2"/><circle cx="15.7" cy="596.7" r="1.9" fill="#f2f2f2"/>
<path d="M22,588L11.7,584.7" stroke="#f2f2f2" stroke-width="1.2"/><circle cx="11.7" cy="584.7" r="1.9" fill="#f2f2f2"/>
<path d="M46,587L55,579V595Z" fill="#1f1f1f"/>
<rect x="54.5" y="383.5" width="216.5" height="225.0" fill="#1f1f1f" stroke="#3a3a3a" stroke-width="1"/>
<text x="66.0" y="409.0" font-size="12" fill="#ececec" textLength="20.0" lengthAdjust="spacingAndGlyphs">Size</text>
<text x="66.0" y="436.9" font-size="12" fill="#ececec" textLength="63.7" lengthAdjust="spacingAndGlyphs">X/Y Distance</text>
<text x="66.0" y="464.9" font-size="12" fill="#ececec" textLength="89.3" lengthAdjust="spacingAndGlyphs">Number of layers</text>
<rect x="191.1" y="394.1" width="70.0" height="21.7" fill="#3b3b3b"/>
<rect x="191.1" y="414.9" width="70.0" height="1.2" fill="#d6d6d6"/>
<rect x="191.1" y="422.1" width="70.0" height="21.7" fill="#3b3b3b"/>
<rect x="191.1" y="442.9" width="70.0" height="1.2" fill="#d6d6d6"/>
<rect x="191.1" y="450.1" width="70.0" height="21.7" fill="#3b3b3b"/>
<rect x="191.1" y="470.9" width="70.0" height="1.2" fill="#d6d6d6"/>
<text x="195.0" y="409.6" font-size="12" fill="#ececec" textLength="6.0" lengthAdjust="spacingAndGlyphs">8</text>
<text x="234.3" y="409.0" font-size="12" fill="#9a9a9a" textLength="20.3" lengthAdjust="spacingAndGlyphs">mm</text>
<text x="195.0" y="437.6" font-size="12" fill="#ececec" textLength="21.5" lengthAdjust="spacingAndGlyphs">0.08</text>
<text x="234.3" y="437.0" font-size="12" fill="#9a9a9a" textLength="20.3" lengthAdjust="spacingAndGlyphs">mm</text>
<text x="195.0" y="465.6" font-size="12" fill="#ececec" textLength="6.0" lengthAdjust="spacingAndGlyphs">3</text>
<rect x="66.8" y="484.7" width="14.0" height="14.0" fill="#1f1f1f" rx="2.2" stroke="#b4b4b4" stroke-width="1"/>
<path d="M70.6,492L72.9,494.3L77.2,489.6" fill="none" stroke="#f2f2f2" stroke-width="1.7"/>
<text x="87.4" y="495.7" font-size="12" fill="#ececec" textLength="91.0" lengthAdjust="spacingAndGlyphs">Define as Capsule</text>
<circle cx="198.3" cy="485.6" r="5.9" fill="none" stroke="#f0f0f0" stroke-width="1.2"/>
<text x="198.3" y="489.2" font-size="9.5" fill="#f0f0f0" font-weight="bold" text-anchor="middle">?</text>
<rect x="84.6" y="516.8" width="119.9" height="20.4" fill="none" stroke="#f4f4f4" stroke-width="1.1"/>
<text x="95.3" y="531.6" font-size="13.5" fill="#ececec" textLength="76.9" lengthAdjust="spacingAndGlyphs">Remove Last</text>
<rect x="84.6" y="549.8" width="119.9" height="20.5" fill="none" stroke="#f4f4f4" stroke-width="1.1"/>
<text x="95.3" y="564.6" font-size="13.5" fill="#ececec" textLength="116.1" lengthAdjust="spacingAndGlyphs">Automatic Addition</text>
<rect x="66.8" y="577.8" width="14.0" height="14.0" fill="#1f1f1f" rx="2.2" stroke="#b4b4b4" stroke-width="1"/>
<text x="87.4" y="588.8" font-size="12" fill="#ececec" textLength="111.3" lengthAdjust="spacingAndGlyphs">Set On Adhesion Area</text>
<path d="M57,726.4L60.7,722.6L64.4,726.4" fill="none" stroke="#e4e4e4" stroke-width="1.3"/>
<clipPath id="cl1"><rect x="70" y="715" width="200" height="16"/></clipPath>
<text x="77.4" y="729.7" font-size="12" fill="#dcdcdc" textLength="50.4" lengthAdjust="spacingAndGlyphs" clip-path="url(#cl1)">Object list</text>
<path d="M57.5,758.2H68" stroke="#e4e4e4" stroke-width="1.3"/><path d="M58.5,755.5L59.2,752.8L65.6,746.6L67.6,748.6L61.2,754.9Z" fill="#e4e4e4"/>
<clipPath id="cl2"><rect x="70" y="740" width="220" height="20.6"/></clipPath>
<text x="84.3" y="758.3" font-size="12" fill="#e4e4e4" textLength="163.2" lengthAdjust="spacingAndGlyphs" clip-path="url(#cl2)">CE5_ringing_tower-AntiWarping</text>
<text x="55.7" y="778.7" font-size="12" fill="#e4e4e4" textLength="123.3" lengthAdjust="spacingAndGlyphs">131.8 x 131.8 x 60.0 mm</text>
<g transform="translate(57.4,796.5)" fill="none" stroke="#f4f4f4" stroke-width="1.5" stroke-linejoin="round"><path d="M8,0.5L15.2,4.2V12.3L8,16.4L0.8,12.3V4.2Z"/><path d="M0.8,4.2L8,8.2L15.2,4.2M8,8.2V16.4"/></g>
<g transform="translate(85.5,796.5)" fill="none" stroke="#f4f4f4" stroke-width="1.5" stroke-linejoin="round"><path d="M1,4.8H11.6V16H1Z" fill="#f4f4f4"/><path d="M1,4.8L4.6,1H15.4L11.6,4.8"/><path d="M11.6,16L15.4,12.2V1"/></g>
<g transform="translate(113.5,796.5)" fill="none" stroke="#f4f4f4" stroke-width="1.5" stroke-linejoin="round"><path d="M1,4.8H11.6V16H1Z"/><path d="M1,4.8L4.6,1H15.4L11.6,4.8Z" fill="#f4f4f4"/><path d="M11.6,16L15.4,12.2V1"/></g>
<g transform="translate(141.5,796.5)" fill="none" stroke="#f4f4f4" stroke-width="1.5" stroke-linejoin="round"><g transform="translate(16.4,0) scale(-1,1)"><path d="M1,4.8H11.6V16H1Z"/><path d="M1,4.8L4.6,1H15.4L11.6,4.8"/><path d="M11.6,16L15.4,12.2V1L11.6,4.8Z" fill="#f4f4f4"/></g></g>
<g transform="translate(169.5,796.5)" fill="none" stroke="#f4f4f4" stroke-width="1.5" stroke-linejoin="round"><path d="M1,4.8H11.6V16H1Z"/><path d="M1,4.8L4.6,1H15.4L11.6,4.8"/><path d="M11.6,16L15.4,12.2V1L11.6,4.8Z" fill="#f4f4f4"/></g>
<path d="M570.2,802.2V813.4L580.2,807.8Z" fill="none" stroke="#f6f6f6" stroke-width="1.5" stroke-linejoin="round"/>
<rect x="594.0" y="804.6" width="364.0" height="6.0" fill="#f4f4f4" rx="3"/>
<circle cx="952.5" cy="807.6" r="7.8" fill="#ffffff"/>
<rect x="1618.0" y="242.0" width="6.0" height="335.0" fill="#7f7f7f" rx="3"/>
<rect x="1617.8" y="576.0" width="6.2" height="24.0" fill="#f2f2f2"/>
<rect x="1612.2" y="547.0" width="18.2" height="15.2" fill="#1f1f1f" rx="1"/>
<path d="M1617.8,562L1621,565.4L1624.2,562Z" fill="#1f1f1f"/>
<text x="1621.2" y="559.0" font-size="11.5" fill="#f4f4f4" text-anchor="middle">1</text>
<circle cx="1620.9" cy="575.9" r="8" fill="#ffffff"/><circle cx="1620.9" cy="599.8" r="8" fill="#ffffff"/>
<rect x="1336.0" y="703.8" width="284.2" height="106.0" fill="#1f1f1f" rx="3" stroke="#2e2e2e" stroke-width="1"/>
<circle cx="1362" cy="727.4" r="6.2" fill="none" stroke="#f2f2f2" stroke-width="1.4"/><path d="M1362,723.4V727.8H1365.4" fill="none" stroke="#f2f2f2" stroke-width="1.4"/>
<text x="1376.6" y="732.1" font-size="13" fill="#f6f6f6" font-weight="bold" textLength="113.8" lengthAdjust="spacingAndGlyphs">1 hour 59 minutes</text>
<circle cx="1593.8" cy="727.4" r="6.2" fill="none" stroke="#f2f2f2" stroke-width="1.4"/><path d="M1593.8,726.4V731" stroke="#f2f2f2" stroke-width="1.6"/><circle cx="1593.8" cy="724" r="0.95" fill="#f2f2f2"/>
<circle cx="1362.3" cy="750.2" r="6" fill="none" stroke="#f2f2f2" stroke-width="1.4"/><circle cx="1362.3" cy="750.2" r="2" fill="none" stroke="#f2f2f2" stroke-width="1.2"/><path d="M1355.6,750V756.6H1361" fill="none" stroke="#f2f2f2" stroke-width="1.4"/><path d="M1363.5,748.8L1365.5,746.6" stroke="#f2f2f2" stroke-width="1.1"/>
<text x="1376.6" y="754.8" font-size="12" fill="#d8d8d8" textLength="65.4" lengthAdjust="spacingAndGlyphs">34g · 11.48m</text>
<rect x="1353.8" y="767.3" width="248.2" height="27.4" fill="#196ef0"/>
<text x="1384.0" y="785.5" font-size="13.5" fill="#f4f8ff" textLength="159.5" lengthAdjust="spacingAndGlyphs">Upload to Creality Ender-5</text>
<path d="M1582.6,778.2L1587.9,783.5L1593.2,778.2" fill="none" stroke="#f4f8ff" stroke-width="1.6"/></g>
</svg></body></html>
